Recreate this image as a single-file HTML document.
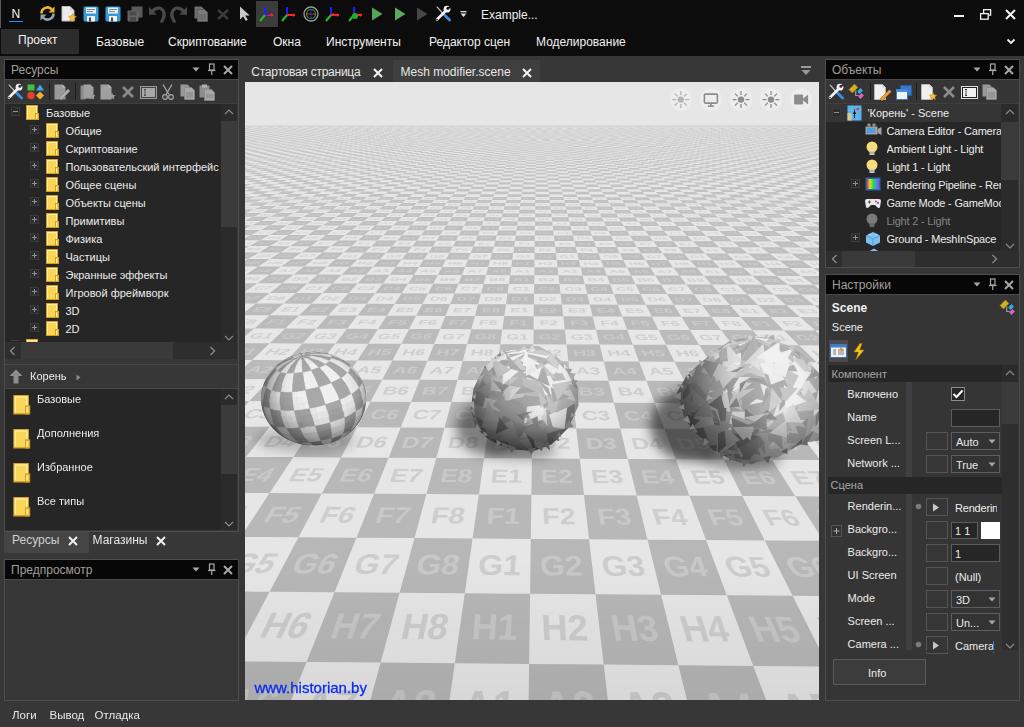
<!DOCTYPE html>
<html><head><meta charset="utf-8">
<style>
*{margin:0;padding:0;box-sizing:border-box}
html,body{width:1024px;height:727px;overflow:hidden;background:#373737;font-family:"Liberation Sans",sans-serif;font-size:12px;color:#e6e6e6}
.a{position:absolute}
.t{position:absolute;white-space:nowrap;line-height:1}
svg{position:absolute;overflow:visible}
</style></head><body>
<div class="a" style="left:245px;top:82px;width:574px;height:618px;background:#e6e6e6;overflow:hidden">
<svg style="left:0;top:0" width="574" height="618" viewBox="0 0 574 618">
<defs><filter id="blur6" x="-50%" y="-50%" width="200%" height="200%"><feGaussianBlur stdDeviation="6"/></filter><filter id="blur3" x="-50%" y="-50%" width="200%" height="200%"><feGaussianBlur stdDeviation="3"/></filter><filter id="blur1" x="-20%" y="-20%" width="140%" height="140%"><feGaussianBlur stdDeviation="0.7"/></filter><linearGradient id="lightg" gradientUnits="userSpaceOnUse" x1="0" y1="45.3" x2="0" y2="618.0"><stop offset="0.0000" stop-color="#e2e2e2"/><stop offset="0.0711" stop-color="#e5e5e5"/><stop offset="0.1039" stop-color="#e6e6e6"/><stop offset="0.1571" stop-color="#e7e7e7"/><stop offset="0.2195" stop-color="#e7e7e7"/><stop offset="0.3091" stop-color="#e7e7e7"/><stop offset="0.4081" stop-color="#e7e7e7"/><stop offset="0.5250" stop-color="#e7e7e7"/><stop offset="0.6410" stop-color="#e6e6e6"/><stop offset="0.8136" stop-color="#e6e6e6"/></linearGradient><linearGradient id="farg" gradientUnits="userSpaceOnUse" x1="0" y1="43.3" x2="0" y2="45.3"><stop offset="-0.3530" stop-color="#d7d7d7"/><stop offset="0.2992" stop-color="#d7d7d7"/><stop offset="1.0000" stop-color="#d7d7d7"/></linearGradient><radialGradient id="sphrim" cx="0.55" cy="0.4" r="0.62"><stop offset="0.6" stop-color="#000" stop-opacity="0"/><stop offset="1" stop-color="#000" stop-opacity=".28"/></radialGradient><linearGradient id="blobshade" x1="0.9" y1="0.15" x2="0.1" y2="0.9"><stop offset="0.45" stop-color="#000" stop-opacity="0"/><stop offset="1" stop-color="#000" stop-opacity=".32"/></linearGradient><linearGradient id="midv" x1="0" y1="0" x2="0" y2="1"><stop offset="0" stop-color="#fff" stop-opacity=".22"/><stop offset="0.45" stop-color="#fff" stop-opacity="0"/><stop offset="0.75" stop-color="#000" stop-opacity="0"/><stop offset="1" stop-color="#000" stop-opacity=".35"/></linearGradient><linearGradient id="rightv" x1="0" y1="0" x2="1" y2="0"><stop offset="0" stop-color="#000" stop-opacity=".3"/><stop offset="0.4" stop-color="#000" stop-opacity="0"/><stop offset="0.6" stop-color="#fff" stop-opacity="0.12"/><stop offset="1" stop-color="#fff" stop-opacity=".12"/></linearGradient><radialGradient id="blobrim" cx="0.55" cy="0.35" r="0.7"><stop offset="0.45" stop-color="#000" stop-opacity="0"/><stop offset="1" stop-color="#000" stop-opacity=".38"/></radialGradient><linearGradient id="vign" x1="0" y1="0" x2="0" y2="1"><stop offset="0" stop-color="#000" stop-opacity="0"/><stop offset="1" stop-color="#000" stop-opacity=".06"/></linearGradient></defs>
<rect x="0" y="43.30" width="574" height="2.28" fill="url(#farg)"/>
<rect x="0" y="45.28" width="574" height="572.72" fill="url(#lightg)"/>
<path d="M-61.1,671.2L24.6,672.1L61.5,580.0L-12.3,579.3ZM110.5,672.9L196.6,673.8L209.8,581.3L135.6,580.6ZM282.9,674.7L369.5,675.6L358.7,582.6L284.1,581.9ZM456.3,676.4L543.3,677.3L508.3,583.9L433.4,583.2Z" fill="#b6b6b6"/>
<path d="M-86.0,578.7L-12.3,579.3L24.6,509.8L-40.2,509.3ZM61.5,580.0L135.6,580.6L154.6,510.8L89.5,510.3ZM209.8,581.3L284.1,581.9L285.1,511.8L219.8,511.3ZM358.7,582.6L433.4,583.2L416.1,512.8L350.5,512.3ZM508.3,583.9L583.3,584.5L547.6,513.8L481.8,513.3ZM24.6,509.8L89.5,510.3L111.5,455.7L53.5,455.3ZM154.6,510.8L219.8,511.3L227.6,456.5L169.5,456.1ZM285.1,511.8L350.5,512.3L344.1,457.3L285.8,456.9ZM416.1,512.8L481.8,513.3L461.1,458.1L402.5,457.7ZM547.6,513.8L613.6,514.3L578.5,458.9L519.7,458.5Z" fill="#b7b7b7"/>
<path d="M-4.3,454.9L53.5,455.3L76.8,411.4L24.6,411.1ZM111.5,455.7L169.5,456.1L181.4,412.1L129.1,411.8ZM227.6,456.5L285.8,456.9L286.4,412.7L233.9,412.4ZM344.1,457.3L402.5,457.7L391.7,413.4L339.0,413.0ZM461.1,458.1L519.7,458.5L497.3,414.0L444.4,413.7ZM578.5,458.9L637.3,459.3L603.3,414.7L550.2,414.3ZM-27.5,410.8L24.6,411.1L48.4,375.1L0.9,374.9ZM76.8,411.4L129.1,411.8L143.6,375.7L96.0,375.4ZM181.4,412.1L233.9,412.4L239.0,376.2L191.3,375.9ZM286.4,412.7L339.0,413.0L334.8,376.7L286.9,376.5ZM391.7,413.4L444.4,413.7L430.8,377.3L382.7,377.0ZM497.3,414.0L550.2,414.3L527.1,377.8L478.9,377.5ZM603.3,414.7L656.4,415.0L623.7,378.3L575.3,378.1ZM-46.5,374.6L0.9,374.9L24.7,344.8L-18.9,344.6ZM48.4,375.1L96.0,375.4L112.0,345.3L68.3,345.0ZM143.6,375.7L191.3,375.9L199.5,345.7L155.7,345.5ZM239.0,376.2L286.9,376.5L287.3,346.2L243.3,345.9ZM334.8,376.7L382.7,377.0L375.3,346.6L331.2,346.4ZM430.8,377.3L478.9,377.5L463.5,347.1L419.4,346.8ZM527.1,377.8L575.3,378.1L552.0,347.5L507.7,347.3Z" fill="#b8b8b8"/>
<path d="M-62.4,344.4L-18.9,344.6L4.5,319.1L-35.7,318.9ZM24.7,344.8L68.3,345.0L85.2,319.5L44.8,319.3ZM112.0,345.3L155.7,345.5L166.0,319.9L125.5,319.7ZM199.5,345.7L243.3,345.9L247.0,320.2L206.5,320.1ZM287.3,346.2L331.2,346.4L328.2,320.6L287.6,320.4ZM375.3,346.6L419.4,346.8L409.7,321.0L368.9,320.8ZM463.5,347.1L507.7,347.3L491.3,321.4L450.5,321.2ZM552.0,347.5L596.3,347.7L573.2,321.8L532.2,321.6ZM4.5,319.1L44.8,319.3L62.1,297.4L24.7,297.2ZM85.2,319.5L125.5,319.7L137.2,297.7L99.7,297.5ZM166.0,319.9L206.5,320.1L212.5,298.0L174.8,297.8ZM247.0,320.2L287.6,320.4L287.9,298.3L250.2,298.2ZM328.2,320.6L368.9,320.8L363.5,298.7L325.7,298.5ZM409.7,321.0L450.5,321.2L439.3,299.0L401.4,298.8ZM491.3,321.4L532.2,321.6L515.2,299.3L477.2,299.2ZM573.2,321.8L614.2,322.0L591.4,299.7L553.3,299.5Z" fill="#b9b9b9"/>
<path d="M-12.8,297.0L24.7,297.2L42.2,278.2L7.2,278.0ZM62.1,297.4L99.7,297.5L112.3,278.4L77.2,278.3ZM137.2,297.7L174.8,297.8L182.5,278.7L147.4,278.6ZM212.5,298.0L250.2,298.2L252.9,279.0L217.7,278.9ZM287.9,298.3L325.7,298.5L323.4,279.3L288.1,279.2ZM363.5,298.7L401.4,298.8L394.1,279.6L358.8,279.4ZM439.3,299.0L477.2,299.2L465.0,279.9L429.5,279.7ZM515.2,299.3L553.3,299.5L536.0,280.2L500.5,280.0ZM591.4,299.7L629.5,299.8L607.2,280.5L571.6,280.3ZM-27.8,277.9L7.2,278.0L24.7,261.3L-8.1,261.2ZM42.2,278.2L77.2,278.3L90.4,261.6L57.5,261.5ZM112.3,278.4L147.4,278.6L156.3,261.8L123.3,261.7ZM182.5,278.7L217.7,278.9L222.2,262.1L189.2,262.0ZM252.9,279.0L288.1,279.2L288.4,262.3L255.3,262.2ZM323.4,279.3L358.8,279.4L354.6,262.6L321.5,262.5ZM394.1,279.6L429.5,279.7L421.0,262.8L387.8,262.7ZM465.0,279.9L500.5,280.0L487.5,263.1L454.3,263.0ZM536.0,280.2L571.6,280.3L554.2,263.3L520.9,263.2Z" fill="#bababa"/>
<path d="M-40.9,261.1L-8.1,261.2L9.2,246.5L-21.7,246.4ZM24.7,261.3L57.5,261.5L71.1,246.7L40.2,246.6ZM90.4,261.6L123.3,261.7L133.1,246.9L102.1,246.8ZM156.3,261.8L189.2,262.0L195.2,247.1L164.1,247.0ZM222.2,262.1L255.3,262.2L257.4,247.4L226.3,247.2ZM288.4,262.3L321.5,262.5L319.8,247.6L288.6,247.5ZM354.6,262.6L387.8,262.7L382.2,247.8L351.0,247.7ZM421.0,262.8L454.3,263.0L444.8,248.0L413.5,247.9ZM487.5,263.1L520.9,263.2L507.5,248.3L476.1,248.1ZM554.2,263.3L587.6,263.5L570.3,248.5L538.9,248.4ZM9.2,246.5L40.2,246.6L53.9,233.4L24.7,233.3ZM71.1,246.7L102.1,246.8L112.5,233.6L83.2,233.5ZM133.1,246.9L164.1,247.0L171.1,233.8L141.8,233.7ZM195.2,247.1L226.3,247.2L229.9,234.0L200.5,233.9ZM257.4,247.4L288.6,247.5L288.7,234.2L259.3,234.1ZM319.8,247.6L351.0,247.7L347.7,234.4L318.2,234.3ZM382.2,247.8L413.5,247.9L406.8,234.6L377.2,234.5ZM444.8,248.0L476.1,248.1L466.0,234.8L436.4,234.7ZM507.5,248.3L538.9,248.4L525.3,235.0L495.6,234.9ZM570.3,248.5L601.8,248.6L584.7,235.2L555.0,235.1ZM-4.5,233.2L24.7,233.3L38.5,221.6L10.9,221.5ZM53.9,233.4L83.2,233.5L94.0,221.8L66.3,221.7ZM112.5,233.6L141.8,233.7L149.6,221.9L121.8,221.8ZM171.1,233.8L200.5,233.9L205.2,222.1L177.4,222.0ZM229.9,234.0L259.3,234.1L261.0,222.3L233.1,222.2ZM288.7,234.2L318.2,234.3L316.8,222.5L288.9,222.4ZM347.7,234.4L377.2,234.5L372.8,222.7L344.8,222.6ZM406.8,234.6L436.4,234.7L428.8,222.8L400.8,222.7ZM466.0,234.8L495.6,234.9L485.0,223.0L456.9,222.9ZM525.3,235.0L555.0,235.1L541.2,223.2L513.1,223.1ZM584.7,235.2L614.4,235.3L597.5,223.4L569.3,223.3Z" fill="#bbbbbb"/>
<path d="M-16.8,221.4L10.9,221.5L24.7,210.9L-1.6,210.8ZM38.5,221.6L66.3,221.7L77.4,211.1L51.0,211.0ZM94.0,221.8L121.8,221.8L130.2,211.2L103.8,211.1ZM149.6,221.9L177.4,222.0L183.0,211.4L156.6,211.3ZM205.2,222.1L233.1,222.2L236.0,211.5L209.5,211.5ZM261.0,222.3L288.9,222.4L289.0,211.7L262.5,211.6ZM316.8,222.5L344.8,222.6L342.2,211.9L315.6,211.8ZM372.8,222.7L400.8,222.7L395.4,212.0L368.8,211.9ZM428.8,222.8L456.9,222.9L448.7,212.2L422.0,212.1ZM485.0,223.0L513.1,223.1L502.1,212.3L475.4,212.3ZM541.2,223.2L569.3,223.3L555.6,212.5L528.8,212.4ZM-27.9,210.7L-1.6,210.8L12.2,201.2L-12.9,201.2ZM24.7,210.9L51.0,211.0L62.4,201.4L37.2,201.3ZM77.4,211.1L103.8,211.1L112.6,201.5L87.5,201.4ZM130.2,211.2L156.6,211.3L163.0,201.7L137.8,201.6ZM183.0,211.4L209.5,211.5L213.4,201.8L188.2,201.7ZM236.0,211.5L262.5,211.6L263.9,202.0L238.6,201.9ZM289.0,211.7L315.6,211.8L314.5,202.1L289.2,202.0ZM342.2,211.9L368.8,211.9L365.1,202.2L339.8,202.2ZM395.4,212.0L422.0,212.1L415.9,202.4L390.5,202.3ZM448.7,212.2L475.4,212.3L466.7,202.5L441.3,202.5ZM502.1,212.3L528.8,212.4L517.6,202.7L492.1,202.6ZM555.6,212.5L582.3,212.6L568.6,202.8L543.1,202.8Z" fill="#bcbcbc"/>
<path d="M-37.9,201.1L-12.9,201.2L0.8,192.4L-23.2,192.4ZM12.2,201.2L37.2,201.3L48.7,192.6L24.7,192.5ZM62.4,201.4L87.5,201.4L96.6,192.7L72.7,192.6ZM112.6,201.5L137.8,201.6L144.7,192.8L120.7,192.8ZM163.0,201.7L188.2,201.7L192.8,193.0L168.8,192.9ZM213.4,201.8L238.6,201.9L241.0,193.1L216.9,193.0ZM263.9,202.0L289.2,202.0L289.3,193.2L265.1,193.2ZM314.5,202.1L339.8,202.2L337.6,193.4L313.4,193.3ZM365.1,202.2L390.5,202.3L386.0,193.5L361.8,193.4ZM415.9,202.4L441.3,202.5L434.5,193.6L410.3,193.6ZM466.7,202.5L492.1,202.6L483.1,193.8L458.8,193.7ZM517.6,202.7L543.1,202.8L531.7,193.9L507.4,193.8ZM568.6,202.8L594.1,202.9L580.4,194.0L556.0,194.0ZM0.8,192.4L24.7,192.5L36.2,184.5L13.2,184.5ZM48.7,192.6L72.7,192.6L82.1,184.6L59.1,184.6ZM96.6,192.7L120.7,192.8L128.0,184.8L105.0,184.7ZM144.7,192.8L168.8,192.9L174.0,184.9L151.0,184.8ZM192.8,193.0L216.9,193.0L220.1,185.0L197.1,184.9ZM241.0,193.1L265.1,193.2L266.3,185.1L243.2,185.1ZM289.3,193.2L313.4,193.3L312.5,185.2L289.4,185.2ZM337.6,193.4L361.8,193.4L358.8,185.4L335.6,185.3ZM386.0,193.5L410.3,193.6L405.1,185.5L382.0,185.4ZM434.5,193.6L458.8,193.7L451.6,185.6L428.3,185.6ZM483.1,193.8L507.4,193.8L498.1,185.7L474.8,185.7ZM531.7,193.9L556.0,194.0L544.6,185.9L521.3,185.8ZM580.4,194.0L604.8,194.1L591.2,186.0L567.9,185.9ZM-9.7,184.4L13.2,184.5L24.7,177.1L2.7,177.1ZM36.2,184.5L59.1,184.6L68.7,177.3L46.7,177.2ZM82.1,184.6L105.0,184.7L112.7,177.4L90.7,177.3ZM128.0,184.8L151.0,184.8L156.8,177.5L134.8,177.4ZM174.0,184.9L197.1,184.9L201.0,177.6L178.9,177.5ZM220.1,185.0L243.2,185.1L245.2,177.7L223.1,177.6ZM266.3,185.1L289.4,185.2L289.5,177.8L267.3,177.8ZM312.5,185.2L335.6,185.3L333.8,177.9L311.7,177.9ZM358.8,185.4L382.0,185.4L378.2,178.0L356.0,178.0ZM405.1,185.5L428.3,185.6L422.7,178.1L400.5,178.1ZM451.6,185.6L474.8,185.7L467.2,178.3L444.9,178.2ZM498.1,185.7L521.3,185.8L511.8,178.4L489.5,178.3ZM544.6,185.9L567.9,185.9L556.4,178.5L534.1,178.4Z" fill="#bdbdbd"/>
<path d="M-19.2,177.0L2.7,177.1L14.2,170.4L-6.9,170.3ZM24.7,177.1L46.7,177.2L56.4,170.5L35.3,170.4ZM68.7,177.3L90.7,177.3L98.7,170.6L77.5,170.5ZM112.7,177.4L134.8,177.4L141.0,170.7L119.8,170.6ZM156.8,177.5L178.9,177.5L183.4,170.8L162.2,170.7ZM201.0,177.6L223.1,177.6L225.8,170.9L204.6,170.8ZM245.2,177.7L267.3,177.8L268.3,171.0L247.1,170.9ZM289.5,177.8L311.7,177.9L310.9,171.1L289.6,171.0ZM333.8,177.9L356.0,178.0L353.5,171.2L332.2,171.1ZM378.2,178.0L400.5,178.1L396.1,171.3L374.8,171.2ZM422.7,178.1L444.9,178.2L438.9,171.4L417.5,171.3ZM467.2,178.3L489.5,178.3L481.6,171.5L460.2,171.4ZM511.8,178.4L534.1,178.4L524.5,171.6L503.0,171.5ZM556.4,178.5L578.8,178.5L567.4,171.7L545.9,171.6ZM-28.0,170.3L-6.9,170.3L4.4,164.1L-15.9,164.0ZM14.2,170.4L35.3,170.4L45.0,164.2L24.7,164.1ZM56.4,170.5L77.5,170.5L85.7,164.3L65.3,164.2ZM98.7,170.6L119.8,170.6L126.4,164.4L106.0,164.3ZM141.0,170.7L162.2,170.7L167.1,164.5L146.7,164.4ZM183.4,170.8L204.6,170.8L207.9,164.6L187.5,164.5ZM225.8,170.9L247.1,170.9L248.8,164.6L228.3,164.6ZM268.3,171.0L289.6,171.0L289.7,164.7L269.2,164.7ZM310.9,171.1L332.2,171.1L330.6,164.8L310.1,164.8ZM353.5,171.2L374.8,171.2L371.6,164.9L351.1,164.9ZM396.1,171.3L417.5,171.3L412.7,165.0L392.1,165.0ZM438.9,171.4L460.2,171.4L453.8,165.1L433.2,165.1ZM481.6,171.5L503.0,171.5L494.9,165.2L474.4,165.2ZM524.5,171.6L545.9,171.6L536.2,165.3L515.6,165.3ZM567.4,171.7L588.8,171.7L577.4,165.4L556.8,165.4ZM4.4,164.1L24.7,164.1L34.5,158.4L14.9,158.3ZM45.0,164.2L65.3,164.2L73.6,158.5L54.1,158.4ZM85.7,164.3L106.0,164.3L112.8,158.5L93.2,158.5ZM126.4,164.4L146.7,164.4L152.0,158.6L132.4,158.6ZM167.1,164.5L187.5,164.5L191.3,158.7L171.7,158.7ZM207.9,164.6L228.3,164.6L230.7,158.8L211.0,158.8ZM248.8,164.6L269.2,164.7L270.0,158.9L250.3,158.8ZM289.7,164.7L310.1,164.8L309.5,159.0L289.7,158.9ZM330.6,164.8L351.1,164.9L348.9,159.1L329.2,159.0ZM371.6,164.9L392.1,165.0L388.4,159.2L368.7,159.1ZM412.7,165.0L433.2,165.1L428.0,159.2L408.2,159.2ZM453.8,165.1L474.4,165.2L467.6,159.3L447.8,159.3ZM494.9,165.2L515.6,165.3L507.3,159.4L487.5,159.4ZM536.2,165.3L556.8,165.4L547.0,159.5L527.1,159.5ZM577.4,165.4L598.1,165.5L586.8,159.6L566.9,159.5Z" fill="#bebebe"/>
<path d="M-4.6,158.3L14.9,158.3L24.7,153.0L5.9,152.9ZM34.5,158.4L54.1,158.4L62.5,153.0L43.6,153.0ZM73.6,158.5L93.2,158.5L100.2,153.1L81.3,153.1ZM112.8,158.5L132.4,158.6L138.1,153.2L119.1,153.2ZM152.0,158.6L171.7,158.7L175.9,153.3L157.0,153.2ZM191.3,158.7L211.0,158.8L213.8,153.4L194.9,153.3ZM230.7,158.8L250.3,158.8L251.8,153.5L232.8,153.4ZM270.0,158.9L289.7,158.9L289.8,153.5L270.8,153.5ZM309.5,159.0L329.2,159.0L327.9,153.6L308.8,153.6ZM348.9,159.1L368.7,159.1L365.9,153.7L346.9,153.7ZM388.4,159.2L408.2,159.2L404.1,153.8L385.0,153.7ZM428.0,159.2L447.8,159.3L442.3,153.9L423.2,153.8ZM467.6,159.3L487.5,159.4L480.5,153.9L461.4,153.9ZM507.3,159.4L527.1,159.5L518.8,154.0L499.6,154.0ZM547.0,159.5L566.9,159.5L557.1,154.1L537.9,154.1ZM-13.0,152.9L5.9,152.9L15.6,147.9L-2.6,147.9ZM24.7,153.0L43.6,153.0L52.0,148.0L33.8,148.0ZM62.5,153.0L81.3,153.1L88.5,148.1L70.3,148.0ZM100.2,153.1L119.1,153.2L125.0,148.2L106.8,148.1ZM138.1,153.2L157.0,153.2L161.6,148.2L143.3,148.2ZM175.9,153.3L194.9,153.3L198.2,148.3L179.9,148.3ZM213.8,153.4L232.8,153.4L234.8,148.4L216.5,148.4ZM251.8,153.5L270.8,153.5L271.5,148.5L253.2,148.4ZM289.8,153.5L308.8,153.6L308.2,148.5L289.9,148.5ZM327.9,153.6L346.9,153.7L345.0,148.6L326.6,148.6ZM365.9,153.7L385.0,153.7L381.8,148.7L363.4,148.7ZM404.1,153.8L423.2,153.8L418.7,148.8L400.2,148.7ZM442.3,153.9L461.4,153.9L455.6,148.8L437.1,148.8ZM480.5,153.9L499.6,154.0L492.5,148.9L474.0,148.9ZM518.8,154.0L537.9,154.1L529.5,149.0L511.0,149.0ZM557.1,154.1L576.3,154.1L566.5,149.1L548.0,149.0ZM-20.8,147.9L-2.6,147.9L7.1,143.2L-10.5,143.2ZM15.6,147.9L33.8,148.0L42.3,143.3L24.7,143.3ZM52.0,148.0L70.3,148.0L77.6,143.4L60.0,143.3ZM88.5,148.1L106.8,148.1L112.9,143.5L95.2,143.4ZM125.0,148.2L143.3,148.2L148.2,143.5L130.5,143.5ZM161.6,148.2L179.9,148.3L183.6,143.6L165.9,143.6ZM198.2,148.3L216.5,148.4L219.0,143.7L201.3,143.6ZM234.8,148.4L253.2,148.4L254.4,143.7L236.7,143.7ZM271.5,148.5L289.9,148.5L289.9,143.8L272.2,143.8ZM308.2,148.5L326.6,148.6L325.5,143.9L307.7,143.8ZM345.0,148.6L363.4,148.7L361.0,143.9L343.2,143.9ZM381.8,148.7L400.2,148.7L396.6,144.0L378.8,144.0ZM418.7,148.8L437.1,148.8L432.3,144.1L414.5,144.1ZM455.6,148.8L474.0,148.9L468.0,144.2L450.1,144.1ZM492.5,148.9L511.0,149.0L503.7,144.2L485.8,144.2ZM529.5,149.0L548.0,149.0L539.4,144.3L521.6,144.3ZM566.5,149.1L585.0,149.1L575.2,144.4L557.3,144.3Z" fill="#bfbfbf"/>
<path d="M-28.1,143.2L-10.5,143.2L-0.8,138.9L-17.9,138.8ZM7.1,143.2L24.7,143.3L33.2,138.9L16.2,138.9ZM42.3,143.3L60.0,143.3L67.4,139.0L50.3,138.9ZM77.6,143.4L95.2,143.4L101.5,139.0L84.4,139.0ZM112.9,143.5L130.5,143.5L135.7,139.1L118.6,139.1ZM148.2,143.5L165.9,143.6L169.9,139.2L152.8,139.1ZM183.6,143.6L201.3,143.6L204.2,139.2L187.1,139.2ZM219.0,143.7L236.7,143.7L238.5,139.3L221.3,139.3ZM254.4,143.7L272.2,143.8L272.8,139.4L255.6,139.3ZM289.9,143.8L307.7,143.8L307.2,139.4L290.0,139.4ZM325.5,143.9L343.2,143.9L341.6,139.5L324.4,139.5ZM361.0,143.9L378.8,144.0L376.0,139.6L358.8,139.5ZM396.6,144.0L414.5,144.1L410.5,139.6L393.3,139.6ZM432.3,144.1L450.1,144.1L445.0,139.7L427.8,139.7ZM468.0,144.2L485.8,144.2L479.6,139.8L462.3,139.7ZM503.7,144.2L521.6,144.3L514.2,139.8L496.9,139.8ZM539.4,144.3L557.3,144.3L548.8,139.9L531.5,139.9ZM575.2,144.4L593.2,144.4L583.5,140.0L566.1,139.9ZM-0.8,138.9L16.2,138.9L24.7,134.8L8.2,134.8ZM33.2,138.9L50.3,138.9L57.8,134.9L41.2,134.8ZM67.4,139.0L84.4,139.0L90.9,134.9L74.3,134.9ZM101.5,139.0L118.6,139.1L124.0,135.0L107.4,134.9ZM135.7,139.1L152.8,139.1L157.1,135.0L140.5,135.0ZM169.9,139.2L187.1,139.2L190.3,135.1L173.7,135.1ZM204.2,139.2L221.3,139.3L223.5,135.2L206.9,135.1ZM238.5,139.3L255.6,139.3L256.8,135.2L240.1,135.2ZM272.8,139.4L290.0,139.4L290.1,135.3L273.4,135.3ZM307.2,139.4L324.4,139.5L323.4,135.3L306.7,135.3ZM341.6,139.5L358.8,139.5L356.7,135.4L340.0,135.4ZM376.0,139.6L393.3,139.6L390.1,135.5L373.4,135.4ZM410.5,139.6L427.8,139.7L423.5,135.5L406.8,135.5ZM445.0,139.7L462.3,139.7L457.0,135.6L440.3,135.6ZM479.6,139.8L496.9,139.8L490.5,135.7L473.7,135.6ZM514.2,139.8L531.5,139.9L524.0,135.7L507.2,135.7ZM548.8,139.9L566.1,139.9L557.6,135.8L540.8,135.7ZM583.5,140.0L600.8,140.0L591.2,135.8L574.4,135.8ZM-8.3,134.7L8.2,134.8L16.7,130.9L0.7,130.9ZM24.7,134.8L41.2,134.8L48.8,131.0L32.7,130.9ZM57.8,134.9L74.3,134.9L80.8,131.0L64.8,131.0ZM90.9,134.9L107.4,134.9L112.9,131.1L96.9,131.1ZM124.0,135.0L140.5,135.0L145.1,131.2L129.0,131.1ZM157.1,135.0L173.7,135.1L177.3,131.2L161.2,131.2ZM190.3,135.1L206.9,135.1L209.5,131.3L193.3,131.2ZM223.5,135.2L240.1,135.2L241.7,131.3L225.6,131.3ZM256.8,135.2L273.4,135.3L274.0,131.4L257.8,131.4ZM290.1,135.3L306.7,135.3L306.3,131.4L290.1,131.4ZM323.4,135.3L340.0,135.4L338.6,131.5L322.4,131.5ZM356.7,135.4L373.4,135.4L371.0,131.6L354.8,131.5ZM390.1,135.5L406.8,135.5L403.3,131.6L387.1,131.6ZM423.5,135.5L440.3,135.6L435.8,131.7L419.6,131.6ZM457.0,135.6L473.7,135.6L468.2,131.7L452.0,131.7ZM490.5,135.7L507.2,135.7L500.7,131.8L484.5,131.8ZM524.0,135.7L540.8,135.7L533.3,131.8L517.0,131.8ZM557.6,135.8L574.4,135.8L565.8,131.9L549.5,131.9Z" fill="#c0c0c0"/>
<path d="M-15.3,130.9L0.7,130.9L9.2,127.3L-6.4,127.2ZM16.7,130.9L32.7,130.9L40.3,127.3L24.7,127.3ZM48.8,131.0L64.8,131.0L71.4,127.4L55.8,127.4ZM80.8,131.0L96.9,131.1L102.6,127.4L87.0,127.4ZM112.9,131.1L129.0,131.1L133.8,127.5L118.2,127.5ZM145.1,131.2L161.2,131.2L165.0,127.5L149.4,127.5ZM177.3,131.2L193.3,131.2L196.2,127.6L180.6,127.6ZM209.5,131.3L225.6,131.3L227.5,127.7L211.9,127.6ZM241.7,131.3L257.8,131.4L258.8,127.7L243.2,127.7ZM274.0,131.4L290.1,131.4L290.2,127.8L274.5,127.7ZM306.3,131.4L322.4,131.5L321.5,127.8L305.8,127.8ZM338.6,131.5L354.8,131.5L352.9,127.9L337.2,127.8ZM371.0,131.6L387.1,131.6L384.4,127.9L368.6,127.9ZM403.3,131.6L419.6,131.6L415.8,128.0L400.1,128.0ZM435.8,131.7L452.0,131.7L447.3,128.0L431.6,128.0ZM468.2,131.7L484.5,131.8L478.8,128.1L463.1,128.1ZM500.7,131.8L517.0,131.8L510.4,128.1L494.6,128.1ZM533.3,131.8L549.5,131.9L542.0,128.2L526.2,128.2ZM565.8,131.9L582.1,131.9L573.6,128.3L557.8,128.2ZM-21.9,127.2L-6.4,127.2L2.1,123.8L-13.0,123.8ZM9.2,127.3L24.7,127.3L32.3,123.9L17.2,123.9ZM40.3,127.3L55.8,127.4L62.5,123.9L47.4,123.9ZM71.4,127.4L87.0,127.4L92.8,124.0L77.6,124.0ZM102.6,127.4L118.2,127.5L123.1,124.0L107.9,124.0ZM133.8,127.5L149.4,127.5L153.4,124.1L138.2,124.1ZM165.0,127.5L180.6,127.6L183.7,124.1L168.6,124.1ZM196.2,127.6L211.9,127.6L214.1,124.2L198.9,124.2ZM227.5,127.7L243.2,127.7L244.5,124.2L229.3,124.2ZM258.8,127.7L274.5,127.7L275.0,124.3L259.7,124.3ZM290.2,127.8L305.8,127.8L305.4,124.3L290.2,124.3ZM321.5,127.8L337.2,127.8L335.9,124.4L320.7,124.4ZM352.9,127.9L368.6,127.9L366.4,124.5L351.2,124.4ZM384.4,127.9L400.1,128.0L397.0,124.5L381.7,124.5ZM415.8,128.0L431.6,128.0L427.6,124.6L412.3,124.5ZM447.3,128.0L463.1,128.1L458.2,124.6L442.9,124.6ZM478.8,128.1L494.6,128.1L488.8,124.7L473.5,124.6ZM510.4,128.1L526.2,128.2L519.5,124.7L504.1,124.7ZM542.0,128.2L557.8,128.2L550.2,124.8L534.8,124.7ZM573.6,128.3L589.4,128.3L580.9,124.8L565.5,124.8ZM2.1,123.8L17.2,123.9L24.7,120.6L10.0,120.6ZM32.3,123.9L47.4,123.9L54.1,120.7L39.4,120.7ZM62.5,123.9L77.6,124.0L83.5,120.7L68.8,120.7ZM92.8,124.0L107.9,124.0L113.0,120.8L98.3,120.8ZM123.1,124.0L138.2,124.1L142.5,120.8L127.7,120.8ZM153.4,124.1L168.6,124.1L172.0,120.9L157.2,120.9ZM183.7,124.1L198.9,124.2L201.5,120.9L186.7,120.9ZM214.1,124.2L229.3,124.2L231.0,121.0L216.3,121.0ZM244.5,124.2L259.7,124.3L260.6,121.0L245.8,121.0ZM275.0,124.3L290.2,124.3L290.2,121.1L275.4,121.0ZM305.4,124.3L320.7,124.4L319.9,121.1L305.1,121.1ZM335.9,124.4L351.2,124.4L349.5,121.2L334.7,121.1ZM366.4,124.5L381.7,124.5L379.2,121.2L364.4,121.2ZM397.0,124.5L412.3,124.5L408.9,121.3L394.1,121.2ZM427.6,124.6L442.9,124.6L438.7,121.3L423.8,121.3ZM458.2,124.6L473.5,124.6L468.5,121.4L453.6,121.3ZM488.8,124.7L504.1,124.7L498.3,121.4L483.4,121.4ZM519.5,124.7L534.8,124.7L528.1,121.5L513.2,121.4ZM550.2,124.8L565.5,124.8L557.9,121.5L543.0,121.5ZM580.9,124.8L596.3,124.8L587.8,121.6L572.9,121.5Z" fill="#c1c1c1"/>
<path d="M-4.6,120.6L10.0,120.6L17.6,117.6L3.3,117.5ZM24.7,120.6L39.4,120.7L46.2,117.6L31.9,117.6ZM54.1,120.7L68.8,120.7L74.8,117.7L60.5,117.6ZM83.5,120.7L98.3,120.8L103.4,117.7L89.1,117.7ZM113.0,120.8L127.7,120.8L132.1,117.7L117.8,117.7ZM142.5,120.8L157.2,120.9L160.8,117.8L146.5,117.8ZM172.0,120.9L186.7,120.9L189.5,117.8L175.2,117.8ZM201.5,120.9L216.3,121.0L218.3,117.9L203.9,117.9ZM231.0,121.0L245.8,121.0L247.1,117.9L232.7,117.9ZM260.6,121.0L275.4,121.0L275.9,118.0L261.5,117.9ZM290.2,121.1L305.1,121.1L304.7,118.0L290.3,118.0ZM319.9,121.1L334.7,121.1L333.5,118.1L319.1,118.0ZM349.5,121.2L364.4,121.2L362.4,118.1L348.0,118.1ZM379.2,121.2L394.1,121.2L391.3,118.2L376.9,118.1ZM408.9,121.3L423.8,121.3L420.3,118.2L405.8,118.2ZM438.7,121.3L453.6,121.3L449.2,118.2L434.7,118.2ZM468.5,121.4L483.4,121.4L478.2,118.3L463.7,118.3ZM498.3,121.4L513.2,121.4L507.2,118.3L492.7,118.3ZM528.1,121.5L543.0,121.5L536.2,118.4L521.7,118.4ZM557.9,121.5L572.9,121.5L565.3,118.4L550.8,118.4ZM-11.0,117.5L3.3,117.5L10.8,114.6L-3.1,114.6ZM17.6,117.6L31.9,117.6L38.7,114.7L24.7,114.7ZM46.2,117.6L60.5,117.6L66.5,114.7L52.6,114.7ZM74.8,117.7L89.1,117.7L94.4,114.8L80.5,114.8ZM103.4,117.7L117.8,117.7L122.3,114.8L108.4,114.8ZM132.1,117.7L146.5,117.8L150.3,114.9L136.3,114.8ZM160.8,117.8L175.2,117.8L178.2,114.9L164.2,114.9ZM189.5,117.8L203.9,117.9L206.2,115.0L192.2,114.9ZM218.3,117.9L232.7,117.9L234.2,115.0L220.2,115.0ZM247.1,117.9L261.5,117.9L262.3,115.0L248.2,115.0ZM275.9,118.0L290.3,118.0L290.3,115.1L276.3,115.1ZM304.7,118.0L319.1,118.0L318.4,115.1L304.4,115.1ZM333.5,118.1L348.0,118.1L346.5,115.2L332.5,115.1ZM362.4,118.1L376.9,118.1L374.6,115.2L360.6,115.2ZM391.3,118.2L405.8,118.2L402.8,115.3L388.7,115.2ZM420.3,118.2L434.7,118.2L431.0,115.3L416.9,115.3ZM449.2,118.2L463.7,118.3L459.2,115.3L445.1,115.3ZM478.2,118.3L492.7,118.3L487.4,115.4L473.3,115.4ZM507.2,118.3L521.7,118.4L515.7,115.4L501.5,115.4ZM536.2,118.4L550.8,118.4L544.0,115.5L529.8,115.4ZM565.3,118.4L579.8,118.5L572.3,115.5L558.1,115.5ZM-17.0,114.6L-3.1,114.6L4.4,111.9L-9.2,111.9ZM10.8,114.6L24.7,114.7L31.5,111.9L17.9,111.9ZM38.7,114.7L52.6,114.7L58.7,112.0L45.1,111.9ZM66.5,114.7L80.5,114.8L85.8,112.0L72.2,112.0ZM94.4,114.8L108.4,114.8L113.0,112.0L99.4,112.0ZM122.3,114.8L136.3,114.8L140.2,112.1L126.6,112.1ZM150.3,114.9L164.2,114.9L167.5,112.1L153.9,112.1ZM178.2,114.9L192.2,114.9L194.8,112.2L181.1,112.2ZM206.2,115.0L220.2,115.0L222.0,112.2L208.4,112.2ZM234.2,115.0L248.2,115.0L249.3,112.3L235.7,112.2ZM262.3,115.0L276.3,115.1L276.7,112.3L263.0,112.3ZM290.3,115.1L304.4,115.1L304.0,112.3L290.4,112.3ZM318.4,115.1L332.5,115.1L331.4,112.4L317.7,112.4ZM346.5,115.2L360.6,115.2L358.8,112.4L345.1,112.4ZM374.6,115.2L388.7,115.2L386.2,112.5L372.5,112.4ZM402.8,115.3L416.9,115.3L413.7,112.5L400.0,112.5ZM431.0,115.3L445.1,115.3L441.2,112.5L427.4,112.5ZM459.2,115.3L473.3,115.4L468.7,112.6L454.9,112.6ZM487.4,115.4L501.5,115.4L496.2,112.6L482.4,112.6ZM515.7,115.4L529.8,115.4L523.7,112.7L509.9,112.6ZM544.0,115.5L558.1,115.5L551.3,112.7L537.5,112.7ZM572.3,115.5L586.4,115.5L578.9,112.7L565.1,112.7Z" fill="#c2c2c2"/>
<path d="M-22.7,111.8L-9.2,111.9L-1.7,109.3L-14.9,109.2ZM4.4,111.9L17.9,111.9L24.7,109.3L11.5,109.3ZM31.5,111.9L45.1,111.9L51.2,109.3L38.0,109.3ZM58.7,112.0L72.2,112.0L77.7,109.4L64.4,109.4ZM85.8,112.0L99.4,112.0L104.2,109.4L90.9,109.4ZM113.0,112.0L126.6,112.1L130.7,109.5L117.5,109.4ZM140.2,112.1L153.9,112.1L157.3,109.5L144.0,109.5ZM167.5,112.1L181.1,112.2L183.9,109.5L170.6,109.5ZM194.8,112.2L208.4,112.2L210.5,109.6L197.2,109.5ZM222.0,112.2L235.7,112.2L237.1,109.6L223.8,109.6ZM249.3,112.3L263.0,112.3L263.7,109.6L250.4,109.6ZM276.7,112.3L290.4,112.3L290.4,109.7L277.1,109.7ZM304.0,112.3L317.7,112.4L317.1,109.7L303.7,109.7ZM331.4,112.4L345.1,112.4L343.8,109.8L330.4,109.7ZM358.8,112.4L372.5,112.4L370.5,109.8L357.1,109.8ZM386.2,112.5L400.0,112.5L397.3,109.8L383.9,109.8ZM413.7,112.5L427.4,112.5L424.0,109.9L410.7,109.9ZM441.2,112.5L454.9,112.6L450.8,109.9L437.4,109.9ZM468.7,112.6L482.4,112.6L477.7,110.0L464.2,109.9ZM496.2,112.6L509.9,112.6L504.5,110.0L491.1,110.0ZM523.7,112.7L537.5,112.7L531.4,110.0L517.9,110.0ZM551.3,112.7L565.1,112.7L558.2,110.1L544.8,110.1ZM578.9,112.7L592.7,112.8L585.1,110.1L571.7,110.1ZM-1.7,109.3L11.5,109.3L18.3,106.8L5.4,106.8ZM24.7,109.3L38.0,109.3L44.1,106.8L31.2,106.8ZM51.2,109.3L64.4,109.4L69.9,106.9L57.0,106.9ZM77.7,109.4L90.9,109.4L95.8,106.9L82.9,106.9ZM104.2,109.4L117.5,109.4L121.7,106.9L108.7,106.9ZM130.7,109.5L144.0,109.5L147.6,107.0L134.6,107.0ZM157.3,109.5L170.6,109.5L173.5,107.0L160.5,107.0ZM183.9,109.5L197.2,109.5L199.5,107.1L186.5,107.0ZM210.5,109.6L223.8,109.6L225.4,107.1L212.4,107.1ZM237.1,109.6L250.4,109.6L251.4,107.1L238.4,107.1ZM263.7,109.6L277.1,109.7L277.4,107.2L264.4,107.1ZM290.4,109.7L303.7,109.7L303.4,107.2L290.4,107.2ZM317.1,109.7L330.4,109.7L329.5,107.2L316.5,107.2ZM343.8,109.8L357.1,109.8L355.6,107.3L342.5,107.3ZM370.5,109.8L383.9,109.8L381.6,107.3L368.6,107.3ZM397.3,109.8L410.7,109.9L407.8,107.4L394.7,107.3ZM424.0,109.9L437.4,109.9L433.9,107.4L420.8,107.4ZM450.8,109.9L464.2,109.9L460.0,107.4L447.0,107.4ZM477.7,110.0L491.1,110.0L486.2,107.5L473.1,107.4ZM504.5,110.0L517.9,110.0L512.4,107.5L499.3,107.5ZM531.4,110.0L544.8,110.1L538.6,107.5L525.5,107.5ZM558.2,110.1L571.7,110.1L564.9,107.6L551.7,107.6ZM-7.5,106.8L5.4,106.8L12.1,104.4L-0.5,104.4ZM18.3,106.8L31.2,106.8L37.3,104.5L24.7,104.4ZM44.1,106.8L57.0,106.9L62.6,104.5L49.9,104.5ZM69.9,106.9L82.9,106.9L87.8,104.5L75.2,104.5ZM95.8,106.9L108.7,106.9L113.1,104.6L100.4,104.5ZM121.7,106.9L134.6,107.0L138.3,104.6L125.7,104.6ZM147.6,107.0L160.5,107.0L163.6,104.6L151.0,104.6ZM173.5,107.0L186.5,107.0L189.0,104.7L176.3,104.6ZM199.5,107.1L212.4,107.1L214.3,104.7L201.6,104.7ZM225.4,107.1L238.4,107.1L239.7,104.7L227.0,104.7ZM251.4,107.1L264.4,107.1L265.1,104.8L252.4,104.7ZM277.4,107.2L290.4,107.2L290.5,104.8L277.8,104.8ZM303.4,107.2L316.5,107.2L315.9,104.8L303.2,104.8ZM329.5,107.2L342.5,107.3L341.3,104.9L328.6,104.9ZM355.6,107.3L368.6,107.3L366.8,104.9L354.0,104.9ZM381.6,107.3L394.7,107.3L392.3,104.9L379.5,104.9ZM407.8,107.4L420.8,107.4L417.8,105.0L405.0,105.0ZM433.9,107.4L447.0,107.4L443.3,105.0L430.5,105.0ZM460.0,107.4L473.1,107.4L468.8,105.0L456.0,105.0ZM486.2,107.5L499.3,107.5L494.4,105.1L481.6,105.1ZM512.4,107.5L525.5,107.5L520.0,105.1L507.2,105.1ZM538.6,107.5L551.7,107.6L545.6,105.2L532.8,105.1ZM564.9,107.6L578.0,107.6L571.2,105.2L558.4,105.2ZM-13.1,104.4L-0.5,104.4L6.3,102.1L-6.0,102.1ZM12.1,104.4L24.7,104.4L30.9,102.2L18.6,102.2ZM37.3,104.5L49.9,104.5L55.5,102.2L43.2,102.2ZM62.6,104.5L75.2,104.5L80.2,102.2L67.8,102.2ZM87.8,104.5L100.4,104.5L104.8,102.3L92.5,102.3ZM113.1,104.6L125.7,104.6L129.5,102.3L117.2,102.3ZM138.3,104.6L151.0,104.6L154.2,102.3L141.9,102.3ZM163.6,104.6L176.3,104.6L179.0,102.4L166.6,102.4ZM189.0,104.7L201.6,104.7L203.7,102.4L191.3,102.4ZM214.3,104.7L227.0,104.7L228.5,102.4L216.1,102.4ZM239.7,104.7L252.4,104.7L253.3,102.5L240.9,102.5ZM265.1,104.8L277.8,104.8L278.1,102.5L265.7,102.5ZM290.5,104.8L303.2,104.8L302.9,102.5L290.5,102.5ZM315.9,104.8L328.6,104.9L327.7,102.6L315.3,102.6ZM341.3,104.9L354.0,104.9L352.6,102.6L340.2,102.6ZM366.8,104.9L379.5,104.9L377.5,102.6L365.0,102.6ZM392.3,104.9L405.0,105.0L402.4,102.7L389.9,102.7ZM417.8,105.0L430.5,105.0L427.3,102.7L414.8,102.7ZM443.3,105.0L456.0,105.0L452.2,102.7L439.8,102.7ZM468.8,105.0L481.6,105.1L477.2,102.8L464.7,102.8ZM494.4,105.1L507.2,105.1L502.2,102.8L489.7,102.8ZM520.0,105.1L532.8,105.1L527.2,102.8L514.7,102.8ZM545.6,105.2L558.4,105.2L552.2,102.9L539.7,102.9ZM571.2,105.2L584.0,105.2L577.2,102.9L564.7,102.9Z" fill="#c3c3c3"/>
<path d="M-18.3,102.1L-6.0,102.1L0.7,100.0L-11.3,100.0ZM6.3,102.1L18.6,102.2L24.7,100.0L12.7,100.0ZM30.9,102.2L43.2,102.2L48.8,100.0L36.8,100.0ZM55.5,102.2L67.8,102.2L72.9,100.1L60.8,100.1ZM80.2,102.2L92.5,102.3L97.0,100.1L84.9,100.1ZM104.8,102.3L117.2,102.3L121.1,100.1L109.1,100.1ZM129.5,102.3L141.9,102.3L145.3,100.2L133.2,100.2ZM154.2,102.3L166.6,102.4L169.4,100.2L157.4,100.2ZM179.0,102.4L191.3,102.4L193.6,100.2L181.5,100.2ZM203.7,102.4L216.1,102.4L217.8,100.3L205.7,100.2ZM228.5,102.4L240.9,102.5L242.0,100.3L229.9,100.3ZM253.3,102.5L265.7,102.5L266.3,100.3L254.1,100.3ZM278.1,102.5L290.5,102.5L290.5,100.4L278.4,100.3ZM302.9,102.5L315.3,102.6L314.8,100.4L302.6,100.4ZM327.7,102.6L340.2,102.6L339.1,100.4L326.9,100.4ZM352.6,102.6L365.0,102.6L363.4,100.5L351.2,100.4ZM377.5,102.6L389.9,102.7L387.7,100.5L375.5,100.5ZM402.4,102.7L414.8,102.7L412.0,100.5L399.9,100.5ZM427.3,102.7L439.8,102.7L436.4,100.6L424.2,100.5ZM452.2,102.7L464.7,102.8L460.8,100.6L448.6,100.6ZM477.2,102.8L489.7,102.8L485.2,100.6L473.0,100.6ZM502.2,102.8L514.7,102.8L509.6,100.6L497.4,100.6ZM527.2,102.8L539.7,102.9L534.0,100.7L521.8,100.7ZM552.2,102.9L564.7,102.9L558.5,100.7L546.3,100.7ZM577.2,102.9L589.7,102.9L583.0,100.7L570.7,100.7ZM0.7,100.0L12.7,100.0L18.9,97.9L7.1,97.9ZM24.7,100.0L36.8,100.0L42.4,98.0L30.6,98.0ZM48.8,100.0L60.8,100.1L65.9,98.0L54.2,98.0ZM72.9,100.1L84.9,100.1L89.5,98.0L77.7,98.0ZM97.0,100.1L109.1,100.1L113.1,98.1L101.3,98.0ZM121.1,100.1L133.2,100.2L136.7,98.1L124.9,98.1ZM145.3,100.2L157.4,100.2L160.3,98.1L148.5,98.1ZM169.4,100.2L181.5,100.2L184.0,98.2L172.1,98.1ZM193.6,100.2L205.7,100.2L207.6,98.2L195.8,98.2ZM217.8,100.3L229.9,100.3L231.3,98.2L219.4,98.2ZM242.0,100.3L254.1,100.3L255.0,98.2L243.1,98.2ZM266.3,100.3L278.4,100.3L278.7,98.3L266.8,98.3ZM290.5,100.4L302.6,100.4L302.4,98.3L290.5,98.3ZM314.8,100.4L326.9,100.4L326.1,98.3L314.3,98.3ZM339.1,100.4L351.2,100.4L349.9,98.4L338.0,98.3ZM363.4,100.5L375.5,100.5L373.7,98.4L361.8,98.4ZM387.7,100.5L399.9,100.5L397.5,98.4L385.6,98.4ZM412.0,100.5L424.2,100.5L421.3,98.5L409.4,98.4ZM436.4,100.6L448.6,100.6L445.1,98.5L433.2,98.5ZM460.8,100.6L473.0,100.6L469.0,98.5L457.0,98.5ZM485.2,100.6L497.4,100.6L492.8,98.5L480.9,98.5ZM509.6,100.6L521.8,100.7L516.7,98.6L504.8,98.6ZM534.0,100.7L546.3,100.7L540.6,98.6L528.7,98.6ZM558.5,100.7L570.7,100.7L564.5,98.6L552.6,98.6ZM-4.7,97.9L7.1,97.9L13.2,96.0L1.7,95.9ZM18.9,97.9L30.6,98.0L36.2,96.0L24.7,96.0ZM42.4,98.0L54.2,98.0L59.3,96.0L47.8,96.0ZM65.9,98.0L77.7,98.0L82.3,96.0L70.8,96.0ZM89.5,98.0L101.3,98.0L105.4,96.1L93.9,96.1ZM113.1,98.1L124.9,98.1L128.5,96.1L117.0,96.1ZM136.7,98.1L148.5,98.1L151.6,96.1L140.0,96.1ZM160.3,98.1L172.1,98.1L174.7,96.2L163.2,96.1ZM184.0,98.2L195.8,98.2L197.9,96.2L186.3,96.2ZM207.6,98.2L219.4,98.2L221.0,96.2L209.4,96.2ZM231.3,98.2L243.1,98.2L244.2,96.2L232.6,96.2ZM255.0,98.2L266.8,98.3L267.4,96.3L255.8,96.3ZM278.7,98.3L290.5,98.3L290.6,96.3L279.0,96.3ZM302.4,98.3L314.3,98.3L313.8,96.3L302.2,96.3ZM326.1,98.3L338.0,98.3L337.0,96.4L325.4,96.3ZM349.9,98.4L361.8,98.4L360.3,96.4L348.6,96.4ZM373.7,98.4L385.6,98.4L383.5,96.4L371.9,96.4ZM397.5,98.4L409.4,98.4L406.8,96.4L395.2,96.4ZM421.3,98.5L433.2,98.5L430.1,96.5L418.5,96.5ZM445.1,98.5L457.0,98.5L453.5,96.5L441.8,96.5ZM469.0,98.5L480.9,98.5L476.8,96.5L465.1,96.5ZM492.8,98.5L504.8,98.6L500.1,96.6L488.5,96.6ZM516.7,98.6L528.7,98.6L523.5,96.6L511.8,96.6ZM540.6,98.6L552.6,98.6L546.9,96.6L535.2,96.6ZM564.5,98.6L576.5,98.7L570.3,96.7L558.6,96.6ZM-9.8,95.9L1.7,95.9L7.8,94.1L-3.4,94.0ZM13.2,96.0L24.7,96.0L30.4,94.1L19.1,94.1ZM36.2,96.0L47.8,96.0L52.9,94.1L41.6,94.1ZM59.3,96.0L70.8,96.0L75.5,94.1L64.2,94.1ZM82.3,96.0L93.9,96.1L98.1,94.2L86.8,94.2ZM105.4,96.1L117.0,96.1L120.6,94.2L109.3,94.2ZM128.5,96.1L140.0,96.1L143.3,94.2L131.9,94.2ZM151.6,96.1L163.2,96.1L165.9,94.3L154.6,94.2ZM174.7,96.2L186.3,96.2L188.5,94.3L177.2,94.3ZM197.9,96.2L209.4,96.2L211.2,94.3L199.8,94.3ZM221.0,96.2L232.6,96.2L233.8,94.3L222.5,94.3ZM244.2,96.2L255.8,96.3L256.5,94.4L245.2,94.3ZM267.4,96.3L279.0,96.3L279.2,94.4L267.9,94.4ZM290.6,96.3L302.2,96.3L302.0,94.4L290.6,94.4ZM313.8,96.3L325.4,96.3L324.7,94.4L313.3,94.4ZM337.0,96.4L348.6,96.4L347.4,94.5L336.1,94.5ZM360.3,96.4L371.9,96.4L370.2,94.5L358.8,94.5ZM383.5,96.4L395.2,96.4L393.0,94.5L381.6,94.5ZM406.8,96.4L418.5,96.5L415.8,94.6L404.4,94.5ZM430.1,96.5L441.8,96.5L438.6,94.6L427.2,94.6ZM453.5,96.5L465.1,96.5L461.4,94.6L450.0,94.6ZM476.8,96.5L488.5,96.6L484.3,94.6L472.9,94.6ZM500.1,96.6L511.8,96.6L507.1,94.7L495.7,94.7ZM523.5,96.6L535.2,96.6L530.0,94.7L518.6,94.7ZM546.9,96.6L558.6,96.6L552.9,94.7L541.5,94.7ZM570.3,96.7L582.0,96.7L575.8,94.8L564.4,94.7Z" fill="#c4c4c4"/>
<path d="M-14.7,94.0L-3.4,94.0L2.7,92.2L-8.3,92.2ZM7.8,94.1L19.1,94.1L24.7,92.3L13.7,92.3ZM30.4,94.1L41.6,94.1L46.8,92.3L35.8,92.3ZM52.9,94.1L64.2,94.1L68.9,92.3L57.9,92.3ZM75.5,94.1L86.8,94.2L91.0,92.3L79.9,92.3ZM98.1,94.2L109.3,94.2L113.1,92.4L102.1,92.4ZM120.6,94.2L131.9,94.2L135.3,92.4L124.2,92.4ZM143.3,94.2L154.6,94.2L157.4,92.4L146.3,92.4ZM165.9,94.3L177.2,94.3L179.6,92.5L168.5,92.4ZM188.5,94.3L199.8,94.3L201.7,92.5L190.7,92.5ZM211.2,94.3L222.5,94.3L223.9,92.5L212.8,92.5ZM233.8,94.3L245.2,94.3L246.2,92.5L235.0,92.5ZM256.5,94.4L267.9,94.4L268.4,92.6L257.3,92.5ZM279.2,94.4L290.6,94.4L290.6,92.6L279.5,92.6ZM302.0,94.4L313.3,94.4L312.9,92.6L301.7,92.6ZM324.7,94.4L336.1,94.5L335.1,92.6L324.0,92.6ZM347.4,94.5L358.8,94.5L357.4,92.7L346.3,92.6ZM370.2,94.5L381.6,94.5L379.7,92.7L368.6,92.7ZM393.0,94.5L404.4,94.5L402.0,92.7L390.9,92.7ZM415.8,94.6L427.2,94.6L424.4,92.7L413.2,92.7ZM438.6,94.6L450.0,94.6L446.7,92.8L435.6,92.8ZM461.4,94.6L472.9,94.6L469.1,92.8L457.9,92.8ZM484.3,94.6L495.7,94.7L491.5,92.8L480.3,92.8ZM507.1,94.7L518.6,94.7L513.9,92.9L502.7,92.8ZM530.0,94.7L541.5,94.7L536.3,92.9L525.1,92.9ZM552.9,94.7L564.4,94.7L558.7,92.9L547.5,92.9ZM575.8,94.8L587.3,94.8L581.1,92.9L569.9,92.9ZM2.7,92.2L13.7,92.3L19.3,90.5L8.5,90.5ZM24.7,92.3L35.8,92.3L41.0,90.5L30.1,90.5ZM46.8,92.3L57.9,92.3L62.6,90.6L51.8,90.6ZM68.9,92.3L79.9,92.3L84.2,90.6L73.4,90.6ZM91.0,92.3L102.1,92.4L105.9,90.6L95.1,90.6ZM113.1,92.4L124.2,92.4L127.6,90.6L116.7,90.6ZM135.3,92.4L146.3,92.4L149.3,90.7L138.4,90.7ZM157.4,92.4L168.5,92.4L171.0,90.7L160.1,90.7ZM179.6,92.5L190.7,92.5L192.7,90.7L181.8,90.7ZM201.7,92.5L212.8,92.5L214.4,90.7L203.6,90.7ZM223.9,92.5L235.0,92.5L236.2,90.8L225.3,90.8ZM246.2,92.5L257.3,92.5L258.0,90.8L247.1,90.8ZM268.4,92.6L279.5,92.6L279.7,90.8L268.9,90.8ZM290.6,92.6L301.7,92.6L301.5,90.8L290.6,90.8ZM312.9,92.6L324.0,92.6L323.3,90.9L312.4,90.9ZM335.1,92.6L346.3,92.6L345.2,90.9L334.3,90.9ZM357.4,92.7L368.6,92.7L367.0,90.9L356.1,90.9ZM379.7,92.7L390.9,92.7L388.9,91.0L377.9,90.9ZM402.0,92.7L413.2,92.7L410.7,91.0L399.8,91.0ZM424.4,92.7L435.6,92.8L432.6,91.0L421.7,91.0ZM446.7,92.8L457.9,92.8L454.5,91.0L443.6,91.0ZM469.1,92.8L480.3,92.8L476.4,91.1L465.5,91.0ZM491.5,92.8L502.7,92.8L498.4,91.1L487.4,91.1ZM513.9,92.9L525.1,92.9L520.3,91.1L509.3,91.1ZM536.3,92.9L547.5,92.9L542.3,91.1L531.3,91.1ZM558.7,92.9L569.9,92.9L564.2,91.2L553.2,91.1ZM581.1,92.9L592.4,92.9L586.2,91.2L575.2,91.2ZM-2.3,90.5L8.5,90.5L14.1,88.8L3.6,88.8ZM19.3,90.5L30.1,90.5L35.3,88.9L24.7,88.9ZM41.0,90.5L51.8,90.6L56.5,88.9L45.9,88.9ZM62.6,90.6L73.4,90.6L77.7,88.9L67.1,88.9ZM84.2,90.6L95.1,90.6L99.0,88.9L88.4,88.9ZM105.9,90.6L116.7,90.6L120.2,89.0L109.6,89.0ZM127.6,90.6L138.4,90.7L141.5,89.0L130.8,89.0ZM149.3,90.7L160.1,90.7L162.7,89.0L152.1,89.0ZM171.0,90.7L181.8,90.7L184.0,89.0L173.4,89.0ZM192.7,90.7L203.6,90.7L205.3,89.1L194.7,89.1ZM214.4,90.7L225.3,90.8L226.6,89.1L216.0,89.1ZM236.2,90.8L247.1,90.8L248.0,89.1L237.3,89.1ZM258.0,90.8L268.9,90.8L269.3,89.1L258.6,89.1ZM279.7,90.8L290.6,90.8L290.7,89.2L280.0,89.1ZM301.5,90.8L312.4,90.9L312.0,89.2L301.3,89.2ZM323.3,90.9L334.3,90.9L333.4,89.2L322.7,89.2ZM345.2,90.9L356.1,90.9L354.8,89.2L344.1,89.2ZM367.0,90.9L377.9,90.9L376.2,89.3L365.5,89.2ZM388.9,91.0L399.8,91.0L397.6,89.3L386.9,89.3ZM410.7,91.0L421.7,91.0L419.1,89.3L408.4,89.3ZM432.6,91.0L443.6,91.0L440.5,89.3L429.8,89.3ZM454.5,91.0L465.5,91.0L462.0,89.4L451.3,89.3ZM476.4,91.1L487.4,91.1L483.5,89.4L472.7,89.4ZM498.4,91.1L509.3,91.1L505.0,89.4L494.2,89.4ZM520.3,91.1L531.3,91.1L526.5,89.4L515.7,89.4ZM542.3,91.1L553.2,91.1L548.0,89.5L537.3,89.4ZM564.2,91.2L575.2,91.2L569.6,89.5L558.8,89.5ZM-7.0,88.8L3.6,88.8L9.2,87.2L-1.2,87.2ZM14.1,88.8L24.7,88.9L29.9,87.3L19.5,87.2ZM35.3,88.9L45.9,88.9L50.7,87.3L40.3,87.3ZM56.5,88.9L67.1,88.9L71.5,87.3L61.1,87.3ZM77.7,88.9L88.4,88.9L92.3,87.3L81.9,87.3ZM99.0,88.9L109.6,89.0L113.1,87.3L102.7,87.3ZM120.2,89.0L130.8,89.0L134.0,87.4L123.6,87.4ZM141.5,89.0L152.1,89.0L154.8,87.4L144.4,87.4ZM162.7,89.0L173.4,89.0L175.7,87.4L165.3,87.4ZM184.0,89.0L194.7,89.1L196.6,87.4L186.1,87.4ZM205.3,89.1L216.0,89.1L217.5,87.5L207.0,87.5ZM226.6,89.1L237.3,89.1L238.4,87.5L227.9,87.5ZM248.0,89.1L258.6,89.1L259.3,87.5L248.8,87.5ZM269.3,89.1L280.0,89.1L280.2,87.5L269.7,87.5ZM290.7,89.2L301.3,89.2L301.2,87.6L290.7,87.5ZM312.0,89.2L322.7,89.2L322.1,87.6L311.6,87.6ZM333.4,89.2L344.1,89.2L343.1,87.6L332.6,87.6ZM354.8,89.2L365.5,89.2L364.1,87.6L353.6,87.6ZM376.2,89.3L386.9,89.3L385.1,87.7L374.6,87.6ZM397.6,89.3L408.4,89.3L406.1,87.7L395.6,87.7ZM419.1,89.3L429.8,89.3L427.1,87.7L416.6,87.7ZM440.5,89.3L451.3,89.3L448.1,87.7L437.6,87.7ZM462.0,89.4L472.7,89.4L469.2,87.7L458.7,87.7ZM483.5,89.4L494.2,89.4L490.3,87.8L479.7,87.8ZM505.0,89.4L515.7,89.4L511.3,87.8L500.8,87.8ZM526.5,89.4L537.3,89.4L532.4,87.8L521.9,87.8ZM548.0,89.5L558.8,89.5L553.5,87.8L543.0,87.8ZM569.6,89.5L580.3,89.5L574.7,87.9L564.1,87.9ZM-11.6,87.2L-1.2,87.2L4.4,85.7L-5.8,85.7ZM9.2,87.2L19.5,87.2L24.7,85.7L14.6,85.7ZM29.9,87.3L40.3,87.3L45.1,85.7L34.9,85.7ZM50.7,87.3L61.1,87.3L65.5,85.8L55.3,85.7ZM71.5,87.3L81.9,87.3L85.9,85.8L75.7,85.8ZM92.3,87.3L102.7,87.3L106.3,85.8L96.1,85.8ZM113.1,87.3L123.6,87.4L126.8,85.8L116.6,85.8ZM134.0,87.4L144.4,87.4L147.2,85.8L137.0,85.8ZM154.8,87.4L165.3,87.4L167.7,85.9L157.4,85.9ZM175.7,87.4L186.1,87.4L188.1,85.9L177.9,85.9ZM196.6,87.4L207.0,87.5L208.6,85.9L198.4,85.9ZM217.5,87.5L227.9,87.5L229.1,85.9L218.9,85.9ZM238.4,87.5L248.8,87.5L249.6,86.0L239.4,85.9ZM259.3,87.5L269.7,87.5L270.2,86.0L259.9,86.0ZM280.2,87.5L290.7,87.5L290.7,86.0L280.4,86.0ZM301.2,87.6L311.6,87.6L311.3,86.0L301.0,86.0ZM322.1,87.6L332.6,87.6L331.8,86.0L321.5,86.0ZM343.1,87.6L353.6,87.6L352.4,86.1L342.1,86.1ZM364.1,87.6L374.6,87.6L373.0,86.1L362.7,86.1ZM385.1,87.7L395.6,87.7L393.6,86.1L383.3,86.1ZM406.1,87.7L416.6,87.7L414.2,86.1L403.9,86.1ZM427.1,87.7L437.6,87.7L434.8,86.2L424.5,86.1ZM448.1,87.7L458.7,87.7L455.5,86.2L445.1,86.2ZM469.2,87.7L479.7,87.8L476.1,86.2L465.8,86.2ZM490.3,87.8L500.8,87.8L496.8,86.2L486.5,86.2ZM511.3,87.8L521.9,87.8L517.5,86.2L507.1,86.2ZM532.4,87.8L543.0,87.8L538.2,86.3L527.8,86.3ZM553.5,87.8L564.1,87.9L558.9,86.3L548.5,86.3ZM574.7,87.9L585.2,87.9L579.6,86.3L569.2,86.3Z" fill="#c5c5c5"/>
<path d="M-16.0,85.7L-5.8,85.7L-0.2,84.2L-10.2,84.2ZM4.4,85.7L14.6,85.7L19.7,84.2L9.7,84.2ZM24.7,85.7L34.9,85.7L39.7,84.2L29.7,84.2ZM45.1,85.7L55.3,85.7L59.7,84.3L49.7,84.2ZM65.5,85.8L75.7,85.8L79.8,84.3L69.8,84.3ZM85.9,85.8L96.1,85.8L99.8,84.3L89.8,84.3ZM106.3,85.8L116.6,85.8L119.8,84.3L109.8,84.3ZM126.8,85.8L137.0,85.8L139.9,84.3L129.9,84.3ZM147.2,85.8L157.4,85.9L160.0,84.4L149.9,84.4ZM167.7,85.9L177.9,85.9L180.0,84.4L170.0,84.4ZM188.1,85.9L198.4,85.9L200.1,84.4L190.1,84.4ZM208.6,85.9L218.9,85.9L220.2,84.4L210.2,84.4ZM229.1,85.9L239.4,85.9L240.4,84.5L230.3,84.4ZM249.6,86.0L259.9,86.0L260.5,84.5L250.4,84.5ZM270.2,86.0L280.4,86.0L280.6,84.5L270.6,84.5ZM290.7,86.0L301.0,86.0L300.8,84.5L290.7,84.5ZM311.3,86.0L321.5,86.0L321.0,84.5L310.9,84.5ZM331.8,86.0L342.1,86.1L341.2,84.6L331.1,84.5ZM352.4,86.1L362.7,86.1L361.3,84.6L351.2,84.6ZM373.0,86.1L383.3,86.1L381.6,84.6L371.5,84.6ZM393.6,86.1L403.9,86.1L401.8,84.6L391.7,84.6ZM414.2,86.1L424.5,86.1L422.0,84.6L411.9,84.6ZM434.8,86.2L445.1,86.2L442.3,84.7L432.1,84.7ZM455.5,86.2L465.8,86.2L462.5,84.7L452.4,84.7ZM476.1,86.2L486.5,86.2L482.8,84.7L472.6,84.7ZM496.8,86.2L507.1,86.2L503.1,84.7L492.9,84.7ZM517.5,86.2L527.8,86.3L523.4,84.8L513.2,84.7ZM538.2,86.3L548.5,86.3L543.7,84.8L533.5,84.8ZM558.9,86.3L569.2,86.3L564.0,84.8L553.8,84.8ZM579.6,86.3L590.0,86.3L584.3,84.8L574.2,84.8ZM-0.2,84.2L9.7,84.2L14.9,82.8L5.1,82.8ZM19.7,84.2L29.7,84.2L34.6,82.8L24.7,82.8ZM39.7,84.2L49.7,84.2L54.2,82.8L44.4,82.8ZM59.7,84.3L69.8,84.3L73.8,82.8L64.0,82.8ZM79.8,84.3L89.8,84.3L93.5,82.9L83.7,82.9ZM99.8,84.3L109.8,84.3L113.2,82.9L103.3,82.9ZM119.8,84.3L129.9,84.3L132.8,82.9L123.0,82.9ZM139.9,84.3L149.9,84.4L152.5,82.9L142.7,82.9ZM160.0,84.4L170.0,84.4L172.2,82.9L162.4,82.9ZM180.0,84.4L190.1,84.4L192.0,83.0L182.1,83.0ZM200.1,84.4L210.2,84.4L211.7,83.0L201.8,83.0ZM220.2,84.4L230.3,84.4L231.4,83.0L221.6,83.0ZM240.4,84.5L250.4,84.5L251.2,83.0L241.3,83.0ZM260.5,84.5L270.6,84.5L271.0,83.0L261.1,83.0ZM280.6,84.5L290.7,84.5L290.7,83.1L280.9,83.1ZM300.8,84.5L310.9,84.5L310.5,83.1L300.6,83.1ZM321.0,84.5L331.1,84.5L330.3,83.1L320.4,83.1ZM341.2,84.6L351.2,84.6L350.2,83.1L340.2,83.1ZM361.3,84.6L371.5,84.6L370.0,83.2L360.1,83.1ZM381.6,84.6L391.7,84.6L389.8,83.2L379.9,83.2ZM401.8,84.6L411.9,84.6L409.7,83.2L399.7,83.2ZM422.0,84.6L432.1,84.7L429.5,83.2L419.6,83.2ZM442.3,84.7L452.4,84.7L449.4,83.2L439.5,83.2ZM462.5,84.7L472.6,84.7L469.3,83.3L459.4,83.2ZM482.8,84.7L492.9,84.7L489.2,83.3L479.2,83.3ZM503.1,84.7L513.2,84.7L509.1,83.3L499.2,83.3ZM523.4,84.8L533.5,84.8L529.0,83.3L519.1,83.3ZM543.7,84.8L553.8,84.8L549.0,83.3L539.0,83.3ZM564.0,84.8L574.2,84.8L568.9,83.4L558.9,83.4ZM-4.7,82.8L5.1,82.8L10.3,81.4L0.7,81.4ZM14.9,82.8L24.7,82.8L29.6,81.4L19.9,81.4ZM34.6,82.8L44.4,82.8L48.8,81.4L39.2,81.4ZM54.2,82.8L64.0,82.8L68.1,81.5L58.5,81.4ZM73.8,82.8L83.7,82.9L87.4,81.5L77.8,81.5ZM93.5,82.9L103.3,82.9L106.7,81.5L97.1,81.5ZM113.2,82.9L123.0,82.9L126.1,81.5L116.4,81.5ZM132.8,82.9L142.7,82.9L145.4,81.5L135.7,81.5ZM152.5,82.9L162.4,82.9L164.7,81.6L155.1,81.5ZM172.2,82.9L182.1,83.0L184.1,81.6L174.4,81.6ZM192.0,83.0L201.8,83.0L203.5,81.6L193.8,81.6ZM211.7,83.0L221.6,83.0L222.8,81.6L213.1,81.6ZM231.4,83.0L241.3,83.0L242.2,81.6L232.5,81.6ZM251.2,83.0L261.1,83.0L261.6,81.7L251.9,81.6ZM271.0,83.0L280.9,83.1L281.0,81.7L271.3,81.7ZM290.7,83.1L300.6,83.1L300.5,81.7L290.8,81.7ZM310.5,83.1L320.4,83.1L319.9,81.7L310.2,81.7ZM330.3,83.1L340.2,83.1L339.4,81.7L329.6,81.7ZM350.2,83.1L360.1,83.1L358.8,81.8L349.1,81.7ZM370.0,83.2L379.9,83.2L378.3,81.8L368.6,81.8ZM389.8,83.2L399.7,83.2L397.8,81.8L388.0,81.8ZM409.7,83.2L419.6,83.2L417.3,81.8L407.5,81.8ZM429.5,83.2L439.5,83.2L436.8,81.8L427.0,81.8ZM449.4,83.2L459.4,83.2L456.3,81.9L446.5,81.8ZM469.3,83.3L479.2,83.3L475.8,81.9L466.1,81.9ZM489.2,83.3L499.2,83.3L495.4,81.9L485.6,81.9ZM509.1,83.3L519.1,83.3L514.9,81.9L505.2,81.9ZM529.0,83.3L539.0,83.3L534.5,81.9L524.7,81.9ZM549.0,83.3L558.9,83.4L554.1,82.0L544.3,81.9ZM568.9,83.4L578.9,83.4L573.7,82.0L563.9,82.0ZM-9.0,81.4L0.7,81.4L5.8,80.1L-3.6,80.1ZM10.3,81.4L19.9,81.4L24.7,80.1L15.3,80.1ZM29.6,81.4L39.2,81.4L43.7,80.1L34.2,80.1ZM48.8,81.4L58.5,81.4L62.6,80.1L53.1,80.1ZM68.1,81.5L77.8,81.5L81.6,80.1L72.1,80.1ZM87.4,81.5L97.1,81.5L100.5,80.2L91.0,80.1ZM106.7,81.5L116.4,81.5L119.5,80.2L110.0,80.2ZM126.1,81.5L135.7,81.5L138.5,80.2L129.0,80.2ZM145.4,81.5L155.1,81.5L157.5,80.2L148.0,80.2ZM164.7,81.6L174.4,81.6L176.5,80.2L167.0,80.2ZM184.1,81.6L193.8,81.6L195.5,80.3L186.0,80.2ZM203.5,81.6L213.1,81.6L214.5,80.3L205.0,80.3ZM222.8,81.6L232.5,81.6L233.6,80.3L224.1,80.3ZM242.2,81.6L251.9,81.6L252.6,80.3L243.1,80.3ZM261.6,81.7L271.3,81.7L271.7,80.3L262.2,80.3ZM281.0,81.7L290.8,81.7L290.8,80.4L281.2,80.3ZM300.5,81.7L310.2,81.7L309.9,80.4L300.3,80.4ZM319.9,81.7L329.6,81.7L329.0,80.4L319.4,80.4ZM339.4,81.7L349.1,81.7L348.1,80.4L338.5,80.4ZM358.8,81.8L368.6,81.8L367.2,80.4L357.6,80.4ZM378.3,81.8L388.0,81.8L386.3,80.4L376.8,80.4ZM397.8,81.8L407.5,81.8L405.5,80.5L395.9,80.5ZM417.3,81.8L427.0,81.8L424.6,80.5L415.0,80.5ZM436.8,81.8L446.5,81.8L443.8,80.5L434.2,80.5ZM456.3,81.9L466.1,81.9L463.0,80.5L453.4,80.5ZM475.8,81.9L485.6,81.9L482.2,80.5L472.6,80.5ZM495.4,81.9L505.2,81.9L501.4,80.6L491.7,80.6ZM514.9,81.9L524.7,81.9L520.6,80.6L511.0,80.6ZM534.5,81.9L544.3,81.9L539.8,80.6L530.2,80.6ZM554.1,82.0L563.9,82.0L559.0,80.6L549.4,80.6ZM573.7,82.0L583.5,82.0L578.3,80.6L568.6,80.6ZM-13.1,80.0L-3.6,80.1L1.5,78.8L-7.8,78.8ZM5.8,80.1L15.3,80.1L20.1,78.8L10.8,78.8ZM24.7,80.1L34.2,80.1L38.7,78.8L29.4,78.8ZM43.7,80.1L53.1,80.1L57.3,78.8L48.0,78.8ZM62.6,80.1L72.1,80.1L75.9,78.8L66.6,78.8ZM81.6,80.1L91.0,80.1L94.5,78.9L85.2,78.9ZM100.5,80.2L110.0,80.2L113.2,78.9L103.9,78.9ZM119.5,80.2L129.0,80.2L131.8,78.9L122.5,78.9ZM138.5,80.2L148.0,80.2L150.5,78.9L141.2,78.9ZM157.5,80.2L167.0,80.2L169.2,78.9L159.8,78.9ZM176.5,80.2L186.0,80.2L187.8,79.0L178.5,79.0ZM195.5,80.3L205.0,80.3L206.5,79.0L197.2,79.0ZM214.5,80.3L224.1,80.3L225.2,79.0L215.9,79.0ZM233.6,80.3L243.1,80.3L244.0,79.0L234.6,79.0ZM252.6,80.3L262.2,80.3L262.7,79.0L253.3,79.0ZM271.7,80.3L281.2,80.3L281.4,79.1L272.1,79.0ZM290.8,80.4L300.3,80.4L300.2,79.1L290.8,79.1ZM309.9,80.4L319.4,80.4L318.9,79.1L309.5,79.1ZM329.0,80.4L338.5,80.4L337.7,79.1L328.3,79.1ZM348.1,80.4L357.6,80.4L356.5,79.1L347.1,79.1ZM367.2,80.4L376.8,80.4L375.3,79.1L365.9,79.1ZM386.3,80.4L395.9,80.5L394.1,79.2L384.7,79.2ZM405.5,80.5L415.0,80.5L412.9,79.2L403.5,79.2ZM424.6,80.5L434.2,80.5L431.7,79.2L422.3,79.2ZM443.8,80.5L453.4,80.5L450.5,79.2L441.1,79.2ZM463.0,80.5L472.6,80.5L469.4,79.2L460.0,79.2ZM482.2,80.5L491.7,80.6L488.2,79.3L478.8,79.2ZM501.4,80.6L511.0,80.6L507.1,79.3L497.7,79.3ZM520.6,80.6L530.2,80.6L526.0,79.3L516.5,79.3ZM539.8,80.6L549.4,80.6L544.9,79.3L535.4,79.3ZM559.0,80.6L568.6,80.6L563.8,79.3L554.3,79.3ZM578.3,80.6L587.9,80.6L582.7,79.3L573.2,79.3Z" fill="#c6c6c6"/>
<path d="M1.5,78.8L10.8,78.8L15.6,77.6L6.5,77.5ZM20.1,78.8L29.4,78.8L33.9,77.6L24.7,77.6ZM38.7,78.8L48.0,78.8L52.2,77.6L43.0,77.6ZM57.3,78.8L66.6,78.8L70.5,77.6L61.3,77.6ZM75.9,78.8L85.2,78.9L88.8,77.6L79.6,77.6ZM94.5,78.9L103.9,78.9L107.1,77.6L97.9,77.6ZM113.2,78.9L122.5,78.9L125.4,77.7L116.2,77.6ZM131.8,78.9L141.2,78.9L143.7,77.7L134.6,77.7ZM150.5,78.9L159.8,78.9L162.1,77.7L152.9,77.7ZM169.2,78.9L178.5,79.0L180.4,77.7L171.3,77.7ZM187.8,79.0L197.2,79.0L198.8,77.7L189.6,77.7ZM206.5,79.0L215.9,79.0L217.2,77.7L208.0,77.7ZM225.2,79.0L234.6,79.0L235.6,77.8L226.4,77.8ZM244.0,79.0L253.3,79.0L254.0,77.8L244.8,77.8ZM262.7,79.0L272.1,79.0L272.4,77.8L263.2,77.8ZM281.4,79.1L290.8,79.1L290.8,77.8L281.6,77.8ZM300.2,79.1L309.5,79.1L309.2,77.8L300.0,77.8ZM318.9,79.1L328.3,79.1L327.7,77.9L318.5,77.8ZM337.7,79.1L347.1,79.1L346.1,77.9L336.9,77.9ZM356.5,79.1L365.9,79.1L364.6,77.9L355.4,77.9ZM375.3,79.1L384.7,79.2L383.1,77.9L373.8,77.9ZM394.1,79.2L403.5,79.2L401.6,77.9L392.3,77.9ZM412.9,79.2L422.3,79.2L420.0,77.9L410.8,77.9ZM431.7,79.2L441.1,79.2L438.5,78.0L429.3,78.0ZM450.5,79.2L460.0,79.2L457.1,78.0L447.8,78.0ZM469.4,79.2L478.8,79.2L475.6,78.0L466.3,78.0ZM488.2,79.3L497.7,79.3L494.1,78.0L484.9,78.0ZM507.1,79.3L516.5,79.3L512.7,78.0L503.4,78.0ZM526.0,79.3L535.4,79.3L531.2,78.0L521.9,78.0ZM544.9,79.3L554.3,79.3L549.8,78.1L540.5,78.1ZM563.8,79.3L573.2,79.3L568.4,78.1L559.1,78.1ZM-2.7,77.5L6.5,77.5L11.3,76.4L2.3,76.3ZM15.6,77.6L24.7,77.6L29.2,76.4L20.2,76.4ZM33.9,77.6L43.0,77.6L47.2,76.4L38.2,76.4ZM52.2,77.6L61.3,77.6L65.2,76.4L56.2,76.4ZM70.5,77.6L79.6,77.6L83.2,76.4L74.2,76.4ZM88.8,77.6L97.9,77.6L101.2,76.4L92.2,76.4ZM107.1,77.6L116.2,77.6L119.2,76.5L110.2,76.4ZM125.4,77.7L134.6,77.7L137.2,76.5L128.2,76.5ZM143.7,77.7L152.9,77.7L155.3,76.5L146.2,76.5ZM162.1,77.7L171.3,77.7L173.3,76.5L164.3,76.5ZM180.4,77.7L189.6,77.7L191.4,76.5L182.3,76.5ZM198.8,77.7L208.0,77.7L209.4,76.5L200.4,76.5ZM217.2,77.7L226.4,77.8L227.5,76.6L218.5,76.5ZM235.6,77.8L244.8,77.8L245.6,76.6L236.5,76.6ZM254.0,77.8L263.2,77.8L263.7,76.6L254.6,76.6ZM272.4,77.8L281.6,77.8L281.8,76.6L272.7,76.6ZM290.8,77.8L300.0,77.8L299.9,76.6L290.8,76.6ZM309.2,77.8L318.5,77.8L318.0,76.6L308.9,76.6ZM327.7,77.9L336.9,77.9L336.1,76.7L327.1,76.6ZM346.1,77.9L355.4,77.9L354.3,76.7L345.2,76.7ZM364.6,77.9L373.8,77.9L372.4,76.7L363.4,76.7ZM383.1,77.9L392.3,77.9L390.6,76.7L381.5,76.7ZM401.6,77.9L410.8,77.9L408.8,76.7L399.7,76.7ZM420.0,77.9L429.3,78.0L427.0,76.7L417.9,76.7ZM438.5,78.0L447.8,78.0L445.2,76.8L436.1,76.8ZM457.1,78.0L466.3,78.0L463.4,76.8L454.3,76.8ZM475.6,78.0L484.9,78.0L481.6,76.8L472.5,76.8ZM494.1,78.0L503.4,78.0L499.8,76.8L490.7,76.8ZM512.7,78.0L521.9,78.0L518.0,76.8L508.9,76.8ZM531.2,78.0L540.5,78.1L536.3,76.8L527.2,76.8ZM549.8,78.1L559.1,78.1L554.5,76.9L545.4,76.9ZM568.4,78.1L577.7,78.1L572.8,76.9L563.7,76.9ZM-6.7,76.3L2.3,76.3L7.1,75.2L-1.7,75.2ZM11.3,76.4L20.2,76.4L24.7,75.2L15.9,75.2ZM29.2,76.4L38.2,76.4L42.4,75.2L33.6,75.2ZM47.2,76.4L56.2,76.4L60.1,75.2L51.3,75.2ZM65.2,76.4L74.2,76.4L77.8,75.3L68.9,75.2ZM83.2,76.4L92.2,76.4L95.5,75.3L86.6,75.3ZM101.2,76.4L110.2,76.4L113.2,75.3L104.3,75.3ZM119.2,76.5L128.2,76.5L130.9,75.3L122.1,75.3ZM137.2,76.5L146.2,76.5L148.6,75.3L139.8,75.3ZM155.3,76.5L164.3,76.5L166.4,75.3L157.5,75.3ZM173.3,76.5L182.3,76.5L184.1,75.4L175.3,75.3ZM191.4,76.5L200.4,76.5L201.9,75.4L193.0,75.4ZM209.4,76.5L218.5,76.5L219.7,75.4L210.8,75.4ZM227.5,76.6L236.5,76.6L237.4,75.4L228.6,75.4ZM245.6,76.6L254.6,76.6L255.2,75.4L246.3,75.4ZM263.7,76.6L272.7,76.6L273.0,75.4L264.1,75.4ZM281.8,76.6L290.8,76.6L290.8,75.5L281.9,75.4ZM299.9,76.6L308.9,76.6L308.7,75.5L299.8,75.5ZM318.0,76.6L327.1,76.6L326.5,75.5L317.6,75.5ZM336.1,76.7L345.2,76.7L344.3,75.5L335.4,75.5ZM354.3,76.7L363.4,76.7L362.2,75.5L353.2,75.5ZM372.4,76.7L381.5,76.7L380.0,75.5L371.1,75.5ZM390.6,76.7L399.7,76.7L397.9,75.6L389.0,75.5ZM408.8,76.7L417.9,76.7L415.8,75.6L406.8,75.6ZM427.0,76.7L436.1,76.8L433.7,75.6L424.7,75.6ZM445.2,76.8L454.3,76.8L451.6,75.6L442.6,75.6ZM463.4,76.8L472.5,76.8L469.5,75.6L460.5,75.6ZM481.6,76.8L490.7,76.8L487.4,75.6L478.4,75.6ZM499.8,76.8L508.9,76.8L505.3,75.7L496.3,75.6ZM518.0,76.8L527.2,76.8L523.2,75.7L514.3,75.7ZM536.3,76.8L545.4,76.9L541.2,75.7L532.2,75.7ZM554.5,76.9L563.7,76.9L559.1,75.7L550.2,75.7ZM572.8,76.9L582.0,76.9L577.1,75.7L568.1,75.7ZM-10.6,75.2L-1.7,75.2L3.0,74.1L-5.7,74.1ZM7.1,75.2L15.9,75.2L20.4,74.1L11.7,74.1ZM24.7,75.2L33.6,75.2L37.8,74.1L29.1,74.1ZM42.4,75.2L51.3,75.2L55.2,74.1L46.5,74.1ZM60.1,75.2L68.9,75.2L72.6,74.1L63.9,74.1ZM77.8,75.3L86.6,75.3L90.0,74.1L81.3,74.1ZM95.5,75.3L104.3,75.3L107.4,74.2L98.7,74.2ZM113.2,75.3L122.1,75.3L124.8,74.2L116.1,74.2ZM130.9,75.3L139.8,75.3L142.3,74.2L133.5,74.2ZM148.6,75.3L157.5,75.3L159.7,74.2L151.0,74.2ZM166.4,75.3L175.3,75.3L177.2,74.2L168.4,74.2ZM184.1,75.4L193.0,75.4L194.6,74.2L185.9,74.2ZM201.9,75.4L210.8,75.4L212.1,74.3L203.4,74.2ZM219.7,75.4L228.6,75.4L229.6,74.3L220.8,74.3ZM237.4,75.4L246.3,75.4L247.1,74.3L238.3,74.3ZM255.2,75.4L264.1,75.4L264.6,74.3L255.8,74.3ZM273.0,75.4L281.9,75.4L282.1,74.3L273.3,74.3ZM290.8,75.5L299.8,75.5L299.6,74.3L290.9,74.3ZM308.7,75.5L317.6,75.5L317.2,74.4L308.4,74.3ZM326.5,75.5L335.4,75.5L334.7,74.4L325.9,74.4ZM344.3,75.5L353.2,75.5L352.2,74.4L343.5,74.4ZM362.2,75.5L371.1,75.5L369.8,74.4L361.0,74.4ZM380.0,75.5L389.0,75.5L387.4,74.4L378.6,74.4ZM397.9,75.6L406.8,75.6L405.0,74.4L396.2,74.4ZM415.8,75.6L424.7,75.6L422.5,74.4L413.7,74.4ZM433.7,75.6L442.6,75.6L440.1,74.5L431.3,74.5ZM451.6,75.6L460.5,75.6L457.7,74.5L448.9,74.5ZM469.5,75.6L478.4,75.6L475.4,74.5L466.6,74.5ZM487.4,75.6L496.3,75.6L493.0,74.5L484.2,74.5ZM505.3,75.7L514.3,75.7L510.6,74.5L501.8,74.5ZM523.2,75.7L532.2,75.7L528.3,74.5L519.4,74.5ZM541.2,75.7L550.2,75.7L545.9,74.6L537.1,74.6ZM559.1,75.7L568.1,75.7L563.6,74.6L554.8,74.6ZM577.1,75.7L586.1,75.7L581.3,74.6L572.4,74.6ZM-14.3,74.1L-5.7,74.1L-0.9,73.0L-9.4,73.0ZM3.0,74.1L11.7,74.1L16.2,73.0L7.6,73.0ZM20.4,74.1L29.1,74.1L33.3,73.0L24.7,73.0ZM37.8,74.1L46.5,74.1L50.4,73.0L41.8,73.0ZM55.2,74.1L63.9,74.1L67.5,73.0L59.0,73.0ZM72.6,74.1L81.3,74.1L84.6,73.1L76.1,73.0ZM90.0,74.1L98.7,74.2L101.8,73.1L93.2,73.1ZM107.4,74.2L116.1,74.2L118.9,73.1L110.4,73.1ZM124.8,74.2L133.5,74.2L136.1,73.1L127.5,73.1ZM142.3,74.2L151.0,74.2L153.2,73.1L144.7,73.1ZM159.7,74.2L168.4,74.2L170.4,73.1L161.8,73.1ZM177.2,74.2L185.9,74.2L187.6,73.1L179.0,73.1ZM194.6,74.2L203.4,74.2L204.8,73.2L196.2,73.2ZM212.1,74.3L220.8,74.3L222.0,73.2L213.4,73.2ZM229.6,74.3L238.3,74.3L239.2,73.2L230.6,73.2ZM247.1,74.3L255.8,74.3L256.4,73.2L247.8,73.2ZM264.6,74.3L273.3,74.3L273.6,73.2L265.0,73.2ZM282.1,74.3L290.9,74.3L290.9,73.2L282.3,73.2ZM299.6,74.3L308.4,74.3L308.1,73.3L299.5,73.2ZM317.2,74.4L325.9,74.4L325.4,73.3L316.7,73.3ZM334.7,74.4L343.5,74.4L342.6,73.3L334.0,73.3ZM352.2,74.4L361.0,74.4L359.9,73.3L351.3,73.3ZM369.8,74.4L378.6,74.4L377.2,73.3L368.5,73.3ZM387.4,74.4L396.2,74.4L394.5,73.3L385.8,73.3ZM405.0,74.4L413.7,74.4L411.8,73.3L403.1,73.3ZM422.5,74.4L431.3,74.5L429.1,73.4L420.4,73.4ZM440.1,74.5L448.9,74.5L446.4,73.4L437.7,73.4ZM457.7,74.5L466.6,74.5L463.7,73.4L455.1,73.4ZM475.4,74.5L484.2,74.5L481.1,73.4L472.4,73.4ZM493.0,74.5L501.8,74.5L498.4,73.4L489.7,73.4ZM510.6,74.5L519.4,74.5L515.8,73.4L507.1,73.4ZM528.3,74.5L537.1,74.6L533.1,73.5L524.5,73.4ZM545.9,74.6L554.8,74.6L550.5,73.5L541.8,73.5ZM563.6,74.6L572.4,74.6L567.9,73.5L559.2,73.5Z" fill="#c7c7c7"/>
<path d="M-0.9,73.0L7.6,73.0L12.1,71.9L3.7,71.9ZM16.2,73.0L24.7,73.0L28.9,72.0L20.5,71.9ZM33.3,73.0L41.8,73.0L45.8,72.0L37.4,72.0ZM50.4,73.0L59.0,73.0L62.6,72.0L54.2,72.0ZM67.5,73.0L76.1,73.0L79.5,72.0L71.1,72.0ZM84.6,73.1L93.2,73.1L96.3,72.0L87.9,72.0ZM101.8,73.1L110.4,73.1L113.2,72.0L104.8,72.0ZM118.9,73.1L127.5,73.1L130.1,72.0L121.7,72.0ZM136.1,73.1L144.7,73.1L147.0,72.1L138.5,72.1ZM153.2,73.1L161.8,73.1L163.9,72.1L155.4,72.1ZM170.4,73.1L179.0,73.1L180.8,72.1L172.3,72.1ZM187.6,73.1L196.2,73.2L197.7,72.1L189.2,72.1ZM204.8,73.2L213.4,73.2L214.6,72.1L206.2,72.1ZM222.0,73.2L230.6,73.2L231.6,72.1L223.1,72.1ZM239.2,73.2L247.8,73.2L248.5,72.1L240.0,72.1ZM256.4,73.2L265.0,73.2L265.4,72.2L257.0,72.2ZM273.6,73.2L282.3,73.2L282.4,72.2L273.9,72.2ZM290.9,73.2L299.5,73.2L299.4,72.2L290.9,72.2ZM308.1,73.3L316.7,73.3L316.3,72.2L307.9,72.2ZM325.4,73.3L334.0,73.3L333.3,72.2L324.8,72.2ZM342.6,73.3L351.3,73.3L350.3,72.2L341.8,72.2ZM359.9,73.3L368.5,73.3L367.3,72.3L358.8,72.2ZM377.2,73.3L385.8,73.3L384.3,72.3L375.8,72.3ZM394.5,73.3L403.1,73.3L401.4,72.3L392.9,72.3ZM411.8,73.3L420.4,73.4L418.4,72.3L409.9,72.3ZM429.1,73.4L437.7,73.4L435.4,72.3L426.9,72.3ZM446.4,73.4L455.1,73.4L452.5,72.3L444.0,72.3ZM463.7,73.4L472.4,73.4L469.5,72.3L461.0,72.3ZM481.1,73.4L489.7,73.4L486.6,72.4L478.1,72.4ZM498.4,73.4L507.1,73.4L503.7,72.4L495.1,72.4ZM515.8,73.4L524.5,73.4L520.8,72.4L512.2,72.4ZM533.1,73.5L541.8,73.5L537.9,72.4L529.3,72.4ZM550.5,73.5L559.2,73.5L555.0,72.4L546.4,72.4ZM567.9,73.5L576.6,73.5L572.1,72.4L563.5,72.4ZM-4.7,71.9L3.7,71.9L8.2,70.9L-0.1,70.9ZM12.1,71.9L20.5,71.9L24.7,70.9L16.5,70.9ZM28.9,72.0L37.4,72.0L41.3,71.0L33.0,70.9ZM45.8,72.0L54.2,72.0L57.9,71.0L49.6,71.0ZM62.6,72.0L71.1,72.0L74.5,71.0L66.2,71.0ZM79.5,72.0L87.9,72.0L91.1,71.0L82.8,71.0ZM96.3,72.0L104.8,72.0L107.7,71.0L99.4,71.0ZM113.2,72.0L121.7,72.0L124.3,71.0L116.0,71.0ZM130.1,72.0L138.5,72.1L140.9,71.0L132.6,71.0ZM147.0,72.1L155.4,72.1L157.5,71.1L149.2,71.0ZM163.9,72.1L172.3,72.1L174.2,71.1L165.9,71.1ZM180.8,72.1L189.2,72.1L190.8,71.1L182.5,71.1ZM197.7,72.1L206.2,72.1L207.5,71.1L199.2,71.1ZM214.6,72.1L223.1,72.1L224.2,71.1L215.8,71.1ZM231.6,72.1L240.0,72.1L240.8,71.1L232.5,71.1ZM248.5,72.1L257.0,72.2L257.5,71.1L249.2,71.1ZM265.4,72.2L273.9,72.2L274.2,71.2L265.9,71.1ZM282.4,72.2L290.9,72.2L290.9,71.2L282.5,71.2ZM299.4,72.2L307.9,72.2L307.6,71.2L299.3,71.2ZM316.3,72.2L324.8,72.2L324.3,71.2L316.0,71.2ZM333.3,72.2L341.8,72.2L341.0,71.2L332.7,71.2ZM350.3,72.2L358.8,72.2L357.8,71.2L349.4,71.2ZM367.3,72.3L375.8,72.3L374.5,71.2L366.2,71.2ZM384.3,72.3L392.9,72.3L391.3,71.3L382.9,71.2ZM401.4,72.3L409.9,72.3L408.0,71.3L399.7,71.3ZM418.4,72.3L426.9,72.3L424.8,71.3L416.4,71.3ZM435.4,72.3L444.0,72.3L441.6,71.3L433.2,71.3ZM452.5,72.3L461.0,72.3L458.4,71.3L450.0,71.3ZM469.5,72.3L478.1,72.4L475.2,71.3L466.8,71.3ZM486.6,72.4L495.1,72.4L492.0,71.3L483.6,71.3ZM503.7,72.4L512.2,72.4L508.8,71.4L500.4,71.3ZM520.8,72.4L529.3,72.4L525.6,71.4L517.2,71.4ZM537.9,72.4L546.4,72.4L542.4,71.4L534.0,71.4ZM555.0,72.4L563.5,72.4L559.3,71.4L550.8,71.4ZM572.1,72.4L580.6,72.4L576.1,71.4L567.7,71.4ZM-8.4,70.9L-0.1,70.9L4.4,69.9L-3.8,69.9ZM8.2,70.9L16.5,70.9L20.7,69.9L12.5,69.9ZM24.7,70.9L33.0,70.9L37.0,70.0L28.8,70.0ZM41.3,71.0L49.6,71.0L53.3,70.0L45.1,70.0ZM57.9,71.0L66.2,71.0L69.6,70.0L61.5,70.0ZM74.5,71.0L82.8,71.0L86.0,70.0L77.8,70.0ZM91.1,71.0L99.4,71.0L102.3,70.0L94.1,70.0ZM107.7,71.0L116.0,71.0L118.7,70.0L110.5,70.0ZM124.3,71.0L132.6,71.0L135.0,70.0L126.9,70.0ZM140.9,71.0L149.2,71.0L151.4,70.1L143.2,70.1ZM157.5,71.1L165.9,71.1L167.8,70.1L159.6,70.1ZM174.2,71.1L182.5,71.1L184.2,70.1L176.0,70.1ZM190.8,71.1L199.2,71.1L200.6,70.1L192.4,70.1ZM207.5,71.1L215.8,71.1L217.0,70.1L208.8,70.1ZM224.2,71.1L232.5,71.1L233.4,70.1L225.2,70.1ZM240.8,71.1L249.2,71.1L249.8,70.1L241.6,70.1ZM257.5,71.1L265.9,71.1L266.3,70.2L258.0,70.1ZM274.2,71.2L282.5,71.2L282.7,70.2L274.5,70.2ZM290.9,71.2L299.3,71.2L299.1,70.2L290.9,70.2ZM307.6,71.2L316.0,71.2L315.6,70.2L307.4,70.2ZM324.3,71.2L332.7,71.2L332.1,70.2L323.8,70.2ZM341.0,71.2L349.4,71.2L348.5,70.2L340.3,70.2ZM357.8,71.2L366.2,71.2L365.0,70.2L356.8,70.2ZM374.5,71.2L382.9,71.2L381.5,70.3L373.3,70.2ZM391.3,71.3L399.7,71.3L398.0,70.3L389.7,70.3ZM408.0,71.3L416.4,71.3L414.5,70.3L406.2,70.3ZM424.8,71.3L433.2,71.3L431.0,70.3L422.8,70.3ZM441.6,71.3L450.0,71.3L447.5,70.3L439.3,70.3ZM458.4,71.3L466.8,71.3L464.1,70.3L455.8,70.3ZM475.2,71.3L483.6,71.3L480.6,70.3L472.3,70.3ZM492.0,71.3L500.4,71.3L497.2,70.4L488.9,70.3ZM508.8,71.4L517.2,71.4L513.7,70.4L505.4,70.4ZM525.6,71.4L534.0,71.4L530.3,70.4L522.0,70.4ZM542.4,71.4L550.8,71.4L546.8,70.4L538.6,70.4ZM559.3,71.4L567.7,71.4L563.4,70.4L555.1,70.4ZM576.1,71.4L584.5,71.4L580.0,70.4L571.7,70.4ZM-11.9,69.9L-3.8,69.9L0.7,69.0L-7.4,69.0ZM4.4,69.9L12.5,69.9L16.7,69.0L8.7,69.0ZM20.7,69.9L28.8,70.0L32.8,69.0L24.7,69.0ZM37.0,70.0L45.1,70.0L48.9,69.0L40.8,69.0ZM53.3,70.0L61.5,70.0L64.9,69.0L56.9,69.0ZM69.6,70.0L77.8,70.0L81.0,69.0L73.0,69.0ZM86.0,70.0L94.1,70.0L97.1,69.1L89.1,69.0ZM102.3,70.0L110.5,70.0L113.2,69.1L105.2,69.1ZM118.7,70.0L126.9,70.0L129.3,69.1L121.3,69.1ZM135.0,70.0L143.2,70.1L145.5,69.1L137.4,69.1ZM151.4,70.1L159.6,70.1L161.6,69.1L153.5,69.1ZM167.8,70.1L176.0,70.1L177.7,69.1L169.7,69.1ZM184.2,70.1L192.4,70.1L193.9,69.1L185.8,69.1ZM200.6,70.1L208.8,70.1L210.0,69.1L202.0,69.1ZM217.0,70.1L225.2,70.1L226.2,69.2L218.1,69.2ZM233.4,70.1L241.6,70.1L242.4,69.2L234.3,69.2ZM249.8,70.1L258.0,70.1L258.5,69.2L250.5,69.2ZM266.3,70.2L274.5,70.2L274.7,69.2L266.6,69.2ZM282.7,70.2L290.9,70.2L290.9,69.2L282.8,69.2ZM299.1,70.2L307.4,70.2L307.1,69.2L299.0,69.2ZM315.6,70.2L323.8,70.2L323.3,69.2L315.2,69.2ZM332.1,70.2L340.3,70.2L339.6,69.3L331.4,69.3ZM348.5,70.2L356.8,70.2L355.8,69.3L347.7,69.3ZM365.0,70.2L373.3,70.2L372.0,69.3L363.9,69.3ZM381.5,70.3L389.7,70.3L388.3,69.3L380.1,69.3ZM398.0,70.3L406.2,70.3L404.5,69.3L396.4,69.3ZM414.5,70.3L422.8,70.3L420.8,69.3L412.6,69.3ZM431.0,70.3L439.3,70.3L437.0,69.3L428.9,69.3ZM447.5,70.3L455.8,70.3L453.3,69.4L445.2,69.3ZM464.1,70.3L472.3,70.3L469.6,69.4L461.5,69.4ZM480.6,70.3L488.9,70.3L485.9,69.4L477.7,69.4ZM497.2,70.4L505.4,70.4L502.2,69.4L494.0,69.4ZM513.7,70.4L522.0,70.4L518.5,69.4L510.3,69.4ZM530.3,70.4L538.6,70.4L534.8,69.4L526.7,69.4ZM546.8,70.4L555.1,70.4L551.1,69.4L543.0,69.4ZM563.4,70.4L571.7,70.4L567.5,69.4L559.3,69.4ZM580.0,70.4L588.3,70.4L583.8,69.5L575.6,69.5ZM0.7,69.0L8.7,69.0L12.9,68.1L5.0,68.1ZM16.7,69.0L24.7,69.0L28.7,68.1L20.8,68.1ZM32.8,69.0L40.8,69.0L44.5,68.1L36.6,68.1ZM48.9,69.0L56.9,69.0L60.4,68.1L52.5,68.1ZM64.9,69.0L73.0,69.0L76.2,68.1L68.3,68.1ZM81.0,69.0L89.1,69.0L92.1,68.1L84.1,68.1ZM97.1,69.1L105.2,69.1L107.9,68.1L100.0,68.1ZM113.2,69.1L121.3,69.1L123.8,68.1L115.9,68.1ZM129.3,69.1L137.4,69.1L139.7,68.2L131.8,68.2ZM145.5,69.1L153.5,69.1L155.6,68.2L147.6,68.2ZM161.6,69.1L169.7,69.1L171.5,68.2L163.5,68.2ZM177.7,69.1L185.8,69.1L187.4,68.2L179.4,68.2ZM193.9,69.1L202.0,69.1L203.3,68.2L195.3,68.2ZM210.0,69.1L218.1,69.2L219.2,68.2L211.2,68.2ZM226.2,69.2L234.3,69.2L235.1,68.2L227.2,68.2ZM242.4,69.2L250.5,69.2L251.1,68.3L243.1,68.2ZM258.5,69.2L266.6,69.2L267.0,68.3L259.0,68.3ZM274.7,69.2L282.8,69.2L283.0,68.3L275.0,68.3ZM290.9,69.2L299.0,69.2L298.9,68.3L290.9,68.3ZM307.1,69.2L315.2,69.2L314.9,68.3L306.9,68.3ZM323.3,69.2L331.4,69.3L330.9,68.3L322.9,68.3ZM339.6,69.3L347.7,69.3L346.8,68.3L338.8,68.3ZM355.8,69.3L363.9,69.3L362.8,68.3L354.8,68.3ZM372.0,69.3L380.1,69.3L378.8,68.4L370.8,68.4ZM388.3,69.3L396.4,69.3L394.8,68.4L386.8,68.4ZM404.5,69.3L412.6,69.3L410.8,68.4L402.8,68.4ZM420.8,69.3L428.9,69.3L426.9,68.4L418.9,68.4ZM437.0,69.3L445.2,69.3L442.9,68.4L434.9,68.4ZM453.3,69.4L461.5,69.4L458.9,68.4L450.9,68.4ZM469.6,69.4L477.7,69.4L475.0,68.4L466.9,68.4ZM485.9,69.4L494.0,69.4L491.0,68.4L483.0,68.4ZM502.2,69.4L510.3,69.4L507.1,68.5L499.1,68.5ZM518.5,69.4L526.7,69.4L523.2,68.5L515.1,68.5ZM534.8,69.4L543.0,69.4L539.2,68.5L531.2,68.5ZM551.1,69.4L559.3,69.4L555.3,68.5L547.3,68.5ZM567.5,69.4L575.6,69.5L571.4,68.5L563.4,68.5ZM-2.9,68.0L5.0,68.1L9.2,67.2L1.4,67.1ZM12.9,68.1L20.8,68.1L24.7,67.2L16.9,67.2ZM28.7,68.1L36.6,68.1L40.3,67.2L32.5,67.2ZM44.5,68.1L52.5,68.1L55.9,67.2L48.1,67.2ZM60.4,68.1L68.3,68.1L71.6,67.2L63.8,67.2ZM76.2,68.1L84.1,68.1L87.2,67.2L79.4,67.2ZM92.1,68.1L100.0,68.1L102.8,67.2L95.0,67.2ZM107.9,68.1L115.9,68.1L118.4,67.2L110.6,67.2ZM123.8,68.1L131.8,68.2L134.1,67.3L126.3,67.2ZM139.7,68.2L147.6,68.2L149.7,67.3L141.9,67.3ZM155.6,68.2L163.5,68.2L165.4,67.3L157.6,67.3ZM171.5,68.2L179.4,68.2L181.1,67.3L173.2,67.3ZM187.4,68.2L195.3,68.2L196.7,67.3L188.9,67.3ZM203.3,68.2L211.2,68.2L212.4,67.3L204.6,67.3ZM219.2,68.2L227.2,68.2L228.1,67.3L220.3,67.3ZM235.1,68.2L243.1,68.2L243.8,67.3L236.0,67.3ZM251.1,68.3L259.0,68.3L259.5,67.4L251.7,67.4ZM267.0,68.3L275.0,68.3L275.2,67.4L267.4,67.4ZM283.0,68.3L290.9,68.3L290.9,67.4L283.1,67.4ZM298.9,68.3L306.9,68.3L306.7,67.4L298.8,67.4ZM314.9,68.3L322.9,68.3L322.4,67.4L314.5,67.4ZM330.9,68.3L338.8,68.3L338.2,67.4L330.3,67.4ZM346.8,68.3L354.8,68.3L353.9,67.4L346.0,67.4ZM362.8,68.3L370.8,68.4L369.7,67.4L361.8,67.4ZM378.8,68.4L386.8,68.4L385.4,67.5L377.5,67.5ZM394.8,68.4L402.8,68.4L401.2,67.5L393.3,67.5ZM410.8,68.4L418.9,68.4L417.0,67.5L409.1,67.5ZM426.9,68.4L434.9,68.4L432.8,67.5L424.9,67.5ZM442.9,68.4L450.9,68.4L448.6,67.5L440.7,67.5ZM458.9,68.4L466.9,68.4L464.4,67.5L456.5,67.5ZM475.0,68.4L483.0,68.4L480.2,67.5L472.3,67.5ZM491.0,68.4L499.1,68.5L496.0,67.5L488.1,67.5ZM507.1,68.5L515.1,68.5L511.8,67.6L503.9,67.6ZM523.2,68.5L531.2,68.5L527.7,67.6L519.7,67.6ZM539.2,68.5L547.3,68.5L543.5,67.6L535.6,67.6ZM555.3,68.5L563.4,68.5L559.4,67.6L551.4,67.6ZM571.4,68.5L579.5,68.5L575.2,67.6L567.3,67.6Z" fill="#c8c8c8"/>
<path d="M-6.4,67.1L1.4,67.1L5.5,66.3L-2.1,66.3ZM9.2,67.2L16.9,67.2L20.9,66.3L13.2,66.3ZM24.7,67.2L32.5,67.2L36.3,66.3L28.6,66.3ZM40.3,67.2L48.1,67.2L51.7,66.3L44.0,66.3ZM55.9,67.2L63.8,67.2L67.0,66.3L59.3,66.3ZM71.6,67.2L79.4,67.2L82.4,66.3L74.7,66.3ZM87.2,67.2L95.0,67.2L97.8,66.4L90.1,66.3ZM102.8,67.2L110.6,67.2L113.2,66.4L105.5,66.4ZM118.4,67.2L126.3,67.2L128.7,66.4L120.9,66.4ZM134.1,67.3L141.9,67.3L144.1,66.4L136.4,66.4ZM149.7,67.3L157.6,67.3L159.5,66.4L151.8,66.4ZM165.4,67.3L173.2,67.3L174.9,66.4L167.2,66.4ZM181.1,67.3L188.9,67.3L190.4,66.4L182.7,66.4ZM196.7,67.3L204.6,67.3L205.8,66.4L198.1,66.4ZM212.4,67.3L220.3,67.3L221.3,66.4L213.6,66.4ZM228.1,67.3L236.0,67.3L236.8,66.5L229.0,66.5ZM243.8,67.3L251.7,67.4L252.2,66.5L244.5,66.5ZM259.5,67.4L267.4,67.4L267.7,66.5L260.0,66.5ZM275.2,67.4L283.1,67.4L283.2,66.5L275.5,66.5ZM290.9,67.4L298.8,67.4L298.7,66.5L291.0,66.5ZM306.7,67.4L314.5,67.4L314.2,66.5L306.5,66.5ZM322.4,67.4L330.3,67.4L329.7,66.5L322.0,66.5ZM338.2,67.4L346.0,67.4L345.2,66.5L337.5,66.5ZM353.9,67.4L361.8,67.4L360.8,66.6L353.0,66.6ZM369.7,67.4L377.5,67.5L376.3,66.6L368.5,66.6ZM385.4,67.5L393.3,67.5L391.8,66.6L384.1,66.6ZM401.2,67.5L409.1,67.5L407.4,66.6L399.6,66.6ZM417.0,67.5L424.9,67.5L422.9,66.6L415.2,66.6ZM432.8,67.5L440.7,67.5L438.5,66.6L430.7,66.6ZM448.6,67.5L456.5,67.5L454.1,66.6L446.3,66.6ZM464.4,67.5L472.3,67.5L469.7,66.6L461.9,66.6ZM480.2,67.5L488.1,67.5L485.2,66.7L477.5,66.7ZM496.0,67.5L503.9,67.6L500.8,66.7L493.0,66.7ZM511.8,67.6L519.7,67.6L516.4,66.7L508.6,66.7ZM527.7,67.6L535.6,67.6L532.0,66.7L524.2,66.7ZM543.5,67.6L551.4,67.6L547.7,66.7L539.9,66.7ZM559.4,67.6L567.3,67.6L563.3,66.7L555.5,66.7ZM575.2,67.6L583.1,67.6L578.9,66.7L571.1,66.7ZM-9.8,66.3L-2.1,66.3L2.0,65.4L-5.5,65.4ZM5.5,66.3L13.2,66.3L17.2,65.4L9.6,65.4ZM20.9,66.3L28.6,66.3L32.3,65.4L24.7,65.4ZM36.3,66.3L44.0,66.3L47.5,65.5L39.9,65.5ZM51.7,66.3L59.3,66.3L62.6,65.5L55.1,65.5ZM67.0,66.3L74.7,66.3L77.8,65.5L70.2,65.5ZM82.4,66.3L90.1,66.3L93.0,65.5L85.4,65.5ZM97.8,66.4L105.5,66.4L108.2,65.5L100.6,65.5ZM113.2,66.4L120.9,66.4L123.4,65.5L115.8,65.5ZM128.7,66.4L136.4,66.4L138.6,65.5L131.0,65.5ZM144.1,66.4L151.8,66.4L153.8,65.5L146.2,65.5ZM159.5,66.4L167.2,66.4L169.0,65.6L161.4,65.6ZM174.9,66.4L182.7,66.4L184.2,65.6L176.6,65.6ZM190.4,66.4L198.1,66.4L199.4,65.6L191.8,65.6ZM205.8,66.4L213.6,66.4L214.7,65.6L207.1,65.6ZM221.3,66.4L229.0,66.5L229.9,65.6L222.3,65.6ZM236.8,66.5L244.5,66.5L245.2,65.6L237.6,65.6ZM252.2,66.5L260.0,66.5L260.4,65.6L252.8,65.6ZM267.7,66.5L275.5,66.5L275.7,65.6L268.1,65.6ZM283.2,66.5L291.0,66.5L291.0,65.7L283.3,65.6ZM298.7,66.5L306.5,66.5L306.3,65.7L298.6,65.7ZM314.2,66.5L322.0,66.5L321.5,65.7L313.9,65.7ZM329.7,66.5L337.5,66.5L336.8,65.7L329.2,65.7ZM345.2,66.5L353.0,66.6L352.1,65.7L344.5,65.7ZM360.8,66.6L368.5,66.6L367.4,65.7L359.8,65.7ZM376.3,66.6L384.1,66.6L382.8,65.7L375.1,65.7ZM391.8,66.6L399.6,66.6L398.1,65.7L390.4,65.7ZM407.4,66.6L415.2,66.6L413.4,65.7L405.7,65.7ZM422.9,66.6L430.7,66.6L428.7,65.8L421.1,65.8ZM438.5,66.6L446.3,66.6L444.1,65.8L436.4,65.8ZM454.1,66.6L461.9,66.6L459.4,65.8L451.8,65.8ZM469.7,66.6L477.5,66.7L474.8,65.8L467.1,65.8ZM485.2,66.7L493.0,66.7L490.2,65.8L482.5,65.8ZM500.8,66.7L508.6,66.7L505.5,65.8L497.9,65.8ZM516.4,66.7L524.2,66.7L520.9,65.8L513.2,65.8ZM532.0,66.7L539.9,66.7L536.3,65.8L528.6,65.8ZM547.7,66.7L555.5,66.7L551.7,65.9L544.0,65.8ZM563.3,66.7L571.1,66.7L567.1,65.9L559.4,65.9ZM578.9,66.7L586.7,66.7L582.5,65.9L574.8,65.9ZM-13.1,65.4L-5.5,65.4L-1.4,64.6L-8.8,64.6ZM2.0,65.4L9.6,65.4L13.5,64.6L6.1,64.6ZM17.2,65.4L24.7,65.4L28.5,64.6L21.0,64.6ZM32.3,65.4L39.9,65.5L43.4,64.6L35.9,64.6ZM47.5,65.5L55.1,65.5L58.4,64.6L50.9,64.6ZM62.6,65.5L70.2,65.5L73.3,64.7L65.8,64.7ZM77.8,65.5L85.4,65.5L88.3,64.7L80.8,64.7ZM93.0,65.5L100.6,65.5L103.3,64.7L95.8,64.7ZM108.2,65.5L115.8,65.5L118.2,64.7L110.8,64.7ZM123.4,65.5L131.0,65.5L133.2,64.7L125.7,64.7ZM138.6,65.5L146.2,65.5L148.2,64.7L140.7,64.7ZM153.8,65.5L161.4,65.6L163.2,64.7L155.7,64.7ZM169.0,65.6L176.6,65.6L178.2,64.7L170.7,64.7ZM184.2,65.6L191.8,65.6L193.2,64.7L185.7,64.7ZM199.4,65.6L207.1,65.6L208.3,64.8L200.7,64.8ZM214.7,65.6L222.3,65.6L223.3,64.8L215.8,64.8ZM229.9,65.6L237.6,65.6L238.3,64.8L230.8,64.8ZM245.2,65.6L252.8,65.6L253.4,64.8L245.8,64.8ZM260.4,65.6L268.1,65.6L268.4,64.8L260.9,64.8ZM275.7,65.6L283.3,65.6L283.5,64.8L275.9,64.8ZM291.0,65.7L298.6,65.7L298.5,64.8L291.0,64.8ZM306.3,65.7L313.9,65.7L313.6,64.8L306.0,64.8ZM321.5,65.7L329.2,65.7L328.7,64.9L321.1,64.8ZM336.8,65.7L344.5,65.7L343.7,64.9L336.2,64.9ZM352.1,65.7L359.8,65.7L358.8,64.9L351.3,64.9ZM367.4,65.7L375.1,65.7L373.9,64.9L366.4,64.9ZM382.8,65.7L390.4,65.7L389.0,64.9L381.5,64.9ZM398.1,65.7L405.7,65.7L404.1,64.9L396.6,64.9ZM413.4,65.7L421.1,65.8L419.3,64.9L411.7,64.9ZM428.7,65.8L436.4,65.8L434.4,64.9L426.8,64.9ZM444.1,65.8L451.8,65.8L449.5,64.9L441.9,64.9ZM459.4,65.8L467.1,65.8L464.7,65.0L457.1,64.9ZM474.8,65.8L482.5,65.8L479.8,65.0L472.2,65.0ZM490.2,65.8L497.9,65.8L494.9,65.0L487.4,65.0ZM505.5,65.8L513.2,65.8L510.1,65.0L502.5,65.0ZM520.9,65.8L528.6,65.8L525.3,65.0L517.7,65.0ZM536.3,65.8L544.0,65.8L540.4,65.0L532.9,65.0ZM551.7,65.9L559.4,65.9L555.6,65.0L548.0,65.0ZM567.1,65.9L574.8,65.9L570.8,65.0L563.2,65.0ZM-1.4,64.6L6.1,64.6L10.0,63.8L2.7,63.8ZM13.5,64.6L21.0,64.6L24.7,63.8L17.4,63.8ZM28.5,64.6L35.9,64.6L39.5,63.8L32.1,63.8ZM43.4,64.6L50.9,64.6L54.2,63.8L46.8,63.8ZM58.4,64.6L65.8,64.7L69.0,63.8L61.6,63.8ZM73.3,64.7L80.8,64.7L83.7,63.9L76.3,63.9ZM88.3,64.7L95.8,64.7L98.5,63.9L91.1,63.9ZM103.3,64.7L110.8,64.7L113.3,63.9L105.9,63.9ZM118.2,64.7L125.7,64.7L128.0,63.9L120.6,63.9ZM133.2,64.7L140.7,64.7L142.8,63.9L135.4,63.9ZM148.2,64.7L155.7,64.7L157.6,63.9L150.2,63.9ZM163.2,64.7L170.7,64.7L172.4,63.9L165.0,63.9ZM178.2,64.7L185.7,64.7L187.2,63.9L179.8,63.9ZM193.2,64.7L200.7,64.8L202.0,63.9L194.6,63.9ZM208.3,64.8L215.8,64.8L216.8,64.0L209.4,64.0ZM223.3,64.8L230.8,64.8L231.6,64.0L224.2,64.0ZM238.3,64.8L245.8,64.8L246.5,64.0L239.1,64.0ZM253.4,64.8L260.9,64.8L261.3,64.0L253.9,64.0ZM268.4,64.8L275.9,64.8L276.1,64.0L268.7,64.0ZM283.5,64.8L291.0,64.8L291.0,64.0L283.6,64.0ZM298.5,64.8L306.0,64.8L305.8,64.0L298.4,64.0ZM313.6,64.8L321.1,64.8L320.7,64.0L313.3,64.0ZM328.7,64.9L336.2,64.9L335.6,64.1L328.1,64.0ZM343.7,64.9L351.3,64.9L350.5,64.1L343.0,64.1ZM358.8,64.9L366.4,64.9L365.3,64.1L357.9,64.1ZM373.9,64.9L381.5,64.9L380.2,64.1L372.8,64.1ZM389.0,64.9L396.6,64.9L395.1,64.1L387.7,64.1ZM404.1,64.9L411.7,64.9L410.0,64.1L402.6,64.1ZM419.3,64.9L426.8,64.9L424.9,64.1L417.5,64.1ZM434.4,64.9L441.9,64.9L439.9,64.1L432.4,64.1ZM449.5,64.9L457.1,64.9L454.8,64.1L447.3,64.1ZM464.7,65.0L472.2,65.0L469.7,64.2L462.2,64.1ZM479.8,65.0L487.4,65.0L484.7,64.2L477.2,64.2ZM494.9,65.0L502.5,65.0L499.6,64.2L492.1,64.2ZM510.1,65.0L517.7,65.0L514.6,64.2L507.1,64.2ZM525.3,65.0L532.9,65.0L529.5,64.2L522.0,64.2ZM540.4,65.0L548.0,65.0L544.5,64.2L537.0,64.2ZM555.6,65.0L563.2,65.0L559.4,64.2L552.0,64.2ZM570.8,65.0L578.4,65.0L574.4,64.2L566.9,64.2ZM-4.7,63.8L2.7,63.8L6.6,63.0L-0.7,63.0ZM10.0,63.8L17.4,63.8L21.1,63.0L13.8,63.0ZM24.7,63.8L32.1,63.8L35.6,63.0L28.4,63.0ZM39.5,63.8L46.8,63.8L50.2,63.1L42.9,63.0ZM54.2,63.8L61.6,63.8L64.7,63.1L57.5,63.1ZM69.0,63.8L76.3,63.9L79.3,63.1L72.0,63.1ZM83.7,63.9L91.1,63.9L93.8,63.1L86.6,63.1ZM98.5,63.9L105.9,63.9L108.4,63.1L101.1,63.1ZM113.3,63.9L120.6,63.9L123.0,63.1L115.7,63.1ZM128.0,63.9L135.4,63.9L137.5,63.1L130.3,63.1ZM142.8,63.9L150.2,63.9L152.1,63.1L144.8,63.1ZM157.6,63.9L165.0,63.9L166.7,63.1L159.4,63.1ZM172.4,63.9L179.8,63.9L181.3,63.2L174.0,63.1ZM187.2,63.9L194.6,63.9L195.9,63.2L188.6,63.2ZM202.0,63.9L209.4,64.0L210.5,63.2L203.2,63.2ZM216.8,64.0L224.2,64.0L225.1,63.2L217.8,63.2ZM231.6,64.0L239.1,64.0L239.8,63.2L232.5,63.2ZM246.5,64.0L253.9,64.0L254.4,63.2L247.1,63.2ZM261.3,64.0L268.7,64.0L269.0,63.2L261.7,63.2ZM276.1,64.0L283.6,64.0L283.7,63.2L276.4,63.2ZM291.0,64.0L298.4,64.0L298.3,63.2L291.0,63.2ZM305.8,64.0L313.3,64.0L313.0,63.2L305.7,63.2ZM320.7,64.0L328.1,64.0L327.6,63.3L320.3,63.3ZM335.6,64.1L343.0,64.1L342.3,63.3L335.0,63.3ZM350.5,64.1L357.9,64.1L357.0,63.3L349.7,63.3ZM365.3,64.1L372.8,64.1L371.7,63.3L364.3,63.3ZM380.2,64.1L387.7,64.1L386.4,63.3L379.0,63.3ZM395.1,64.1L402.6,64.1L401.1,63.3L393.7,63.3ZM410.0,64.1L417.5,64.1L415.8,63.3L408.4,63.3ZM424.9,64.1L432.4,64.1L430.5,63.3L423.1,63.3ZM439.9,64.1L447.3,64.1L445.2,63.3L437.8,63.3ZM454.8,64.1L462.2,64.1L459.9,63.4L452.6,63.4ZM469.7,64.2L477.2,64.2L474.6,63.4L467.3,63.4ZM484.7,64.2L492.1,64.2L489.4,63.4L482.0,63.4ZM499.6,64.2L507.1,64.2L504.1,63.4L496.8,63.4ZM514.6,64.2L522.0,64.2L518.9,63.4L511.5,63.4ZM529.5,64.2L537.0,64.2L533.6,63.4L526.2,63.4ZM544.5,64.2L552.0,64.2L548.4,63.4L541.0,63.4ZM559.4,64.2L566.9,64.2L563.2,63.4L555.8,63.4ZM574.4,64.2L581.9,64.2L577.9,63.4L570.5,63.4ZM-7.9,63.0L-0.7,63.0L3.3,62.3L-3.9,62.3ZM6.6,63.0L13.8,63.0L17.6,62.3L10.4,62.3ZM21.1,63.0L28.4,63.0L31.9,62.3L24.7,62.3ZM35.6,63.0L42.9,63.0L46.3,62.3L39.1,62.3ZM50.2,63.1L57.5,63.1L60.6,62.3L53.4,62.3ZM64.7,63.1L72.0,63.1L75.0,62.3L67.8,62.3ZM79.3,63.1L86.6,63.1L89.3,62.3L82.1,62.3ZM93.8,63.1L101.1,63.1L103.7,62.3L96.5,62.3ZM108.4,63.1L115.7,63.1L118.0,62.3L110.9,62.3ZM123.0,63.1L130.3,63.1L132.4,62.4L125.2,62.3ZM137.5,63.1L144.8,63.1L146.8,62.4L139.6,62.4ZM152.1,63.1L159.4,63.1L161.2,62.4L154.0,62.4ZM166.7,63.1L174.0,63.1L175.6,62.4L168.4,62.4ZM181.3,63.2L188.6,63.2L190.0,62.4L182.8,62.4ZM195.9,63.2L203.2,63.2L204.4,62.4L197.2,62.4ZM210.5,63.2L217.8,63.2L218.8,62.4L211.6,62.4ZM225.1,63.2L232.5,63.2L233.3,62.4L226.0,62.4ZM239.8,63.2L247.1,63.2L247.7,62.4L240.5,62.4ZM254.4,63.2L261.7,63.2L262.1,62.4L254.9,62.4ZM269.0,63.2L276.4,63.2L276.6,62.5L269.3,62.5ZM283.7,63.2L291.0,63.2L291.0,62.5L283.8,62.5ZM298.3,63.2L305.7,63.2L305.5,62.5L298.2,62.5ZM313.0,63.2L320.3,63.3L319.9,62.5L312.7,62.5ZM327.6,63.3L335.0,63.3L334.4,62.5L327.2,62.5ZM342.3,63.3L349.7,63.3L348.9,62.5L341.6,62.5ZM357.0,63.3L364.3,63.3L363.4,62.5L356.1,62.5ZM371.7,63.3L379.0,63.3L377.8,62.5L370.6,62.5ZM386.4,63.3L393.7,63.3L392.3,62.5L385.1,62.5ZM401.1,63.3L408.4,63.3L406.8,62.6L399.6,62.5ZM415.8,63.3L423.1,63.3L421.3,62.6L414.1,62.6ZM430.5,63.3L437.8,63.3L435.9,62.6L428.6,62.6ZM445.2,63.3L452.6,63.4L450.4,62.6L443.1,62.6ZM459.9,63.4L467.3,63.4L464.9,62.6L457.6,62.6ZM474.6,63.4L482.0,63.4L479.4,62.6L472.2,62.6ZM489.4,63.4L496.8,63.4L494.0,62.6L486.7,62.6ZM504.1,63.4L511.5,63.4L508.5,62.6L501.3,62.6ZM518.9,63.4L526.2,63.4L523.1,62.6L515.8,62.6ZM533.6,63.4L541.0,63.4L537.6,62.7L530.4,62.6ZM548.4,63.4L555.8,63.4L552.2,62.7L544.9,62.7ZM563.2,63.4L570.5,63.4L566.8,62.7L559.5,62.7ZM577.9,63.4L585.3,63.5L581.4,62.7L574.1,62.7ZM-11.1,62.2L-3.9,62.3L0.0,61.5L-7.1,61.5ZM3.3,62.3L10.4,62.3L14.1,61.5L7.1,61.5ZM17.6,62.3L24.7,62.3L28.3,61.5L21.2,61.5ZM31.9,62.3L39.1,62.3L42.4,61.5L35.4,61.5ZM46.3,62.3L53.4,62.3L56.6,61.6L49.5,61.6ZM60.6,62.3L67.8,62.3L70.7,61.6L63.7,61.6ZM75.0,62.3L82.1,62.3L84.9,61.6L77.8,61.6ZM89.3,62.3L96.5,62.3L99.1,61.6L92.0,61.6ZM103.7,62.3L110.9,62.3L113.3,61.6L106.2,61.6ZM118.0,62.3L125.2,62.3L127.4,61.6L120.4,61.6ZM132.4,62.4L139.6,62.4L141.6,61.6L134.5,61.6ZM146.8,62.4L154.0,62.4L155.8,61.6L148.7,61.6ZM161.2,62.4L168.4,62.4L170.0,61.6L162.9,61.6ZM175.6,62.4L182.8,62.4L184.2,61.7L177.1,61.6ZM190.0,62.4L197.2,62.4L198.5,61.7L191.4,61.7ZM204.4,62.4L211.6,62.4L212.7,61.7L205.6,61.7ZM218.8,62.4L226.0,62.4L226.9,61.7L219.8,61.7ZM233.3,62.4L240.5,62.4L241.2,61.7L234.0,61.7ZM247.7,62.4L254.9,62.4L255.4,61.7L248.3,61.7ZM262.1,62.4L269.3,62.5L269.6,61.7L262.5,61.7ZM276.6,62.5L283.8,62.5L283.9,61.7L276.8,61.7ZM291.0,62.5L298.2,62.5L298.2,61.7L291.0,61.7ZM305.5,62.5L312.7,62.5L312.4,61.7L305.3,61.7ZM319.9,62.5L327.2,62.5L326.7,61.8L319.6,61.7ZM334.4,62.5L341.6,62.5L341.0,61.8L333.8,61.8ZM348.9,62.5L356.1,62.5L355.3,61.8L348.1,61.8ZM363.4,62.5L370.6,62.5L369.5,61.8L362.4,61.8ZM377.8,62.5L385.1,62.5L383.8,61.8L376.7,61.8ZM392.3,62.5L399.6,62.5L398.2,61.8L391.0,61.8ZM406.8,62.6L414.1,62.6L412.5,61.8L405.3,61.8ZM421.3,62.6L428.6,62.6L426.8,61.8L419.6,61.8ZM435.9,62.6L443.1,62.6L441.1,61.8L433.9,61.8ZM450.4,62.6L457.6,62.6L455.4,61.8L448.3,61.8ZM464.9,62.6L472.2,62.6L469.8,61.9L462.6,61.9ZM479.4,62.6L486.7,62.6L484.1,61.9L476.9,61.9ZM494.0,62.6L501.3,62.6L498.5,61.9L491.3,61.9ZM508.5,62.6L515.8,62.6L512.8,61.9L505.6,61.9ZM523.1,62.6L530.4,62.6L527.2,61.9L520.0,61.9ZM537.6,62.7L544.9,62.7L541.5,61.9L534.4,61.9ZM552.2,62.7L559.5,62.7L555.9,61.9L548.7,61.9ZM566.8,62.7L574.1,62.7L570.3,61.9L563.1,61.9Z" fill="#c9c9c9"/>
<path d="M0.0,61.5L7.1,61.5L10.8,60.8L3.8,60.8ZM14.1,61.5L21.2,61.5L24.7,60.8L17.8,60.8ZM28.3,61.5L35.4,61.5L38.7,60.8L31.7,60.8ZM42.4,61.5L49.5,61.6L52.7,60.8L45.7,60.8ZM56.6,61.6L63.7,61.6L66.6,60.8L59.7,60.8ZM70.7,61.6L77.8,61.6L80.6,60.9L73.6,60.9ZM84.9,61.6L92.0,61.6L94.6,60.9L87.6,60.9ZM99.1,61.6L106.2,61.6L108.6,60.9L101.6,60.9ZM113.3,61.6L120.4,61.6L122.6,60.9L115.6,60.9ZM127.4,61.6L134.5,61.6L136.6,60.9L129.6,60.9ZM141.6,61.6L148.7,61.6L150.6,60.9L143.6,60.9ZM155.8,61.6L162.9,61.6L164.6,60.9L157.6,60.9ZM170.0,61.6L177.1,61.6L178.6,60.9L171.6,60.9ZM184.2,61.7L191.4,61.7L192.7,60.9L185.7,60.9ZM198.5,61.7L205.6,61.7L206.7,60.9L199.7,60.9ZM212.7,61.7L219.8,61.7L220.7,61.0L213.7,61.0ZM226.9,61.7L234.0,61.7L234.8,61.0L227.8,61.0ZM241.2,61.7L248.3,61.7L248.8,61.0L241.8,61.0ZM255.4,61.7L262.5,61.7L262.9,61.0L255.9,61.0ZM269.6,61.7L276.8,61.7L277.0,61.0L269.9,61.0ZM283.9,61.7L291.0,61.7L291.0,61.0L284.0,61.0ZM298.2,61.7L305.3,61.7L305.1,61.0L298.1,61.0ZM312.4,61.7L319.6,61.7L319.2,61.0L312.1,61.0ZM326.7,61.8L333.8,61.8L333.3,61.0L326.2,61.0ZM341.0,61.8L348.1,61.8L347.4,61.0L340.3,61.0ZM355.3,61.8L362.4,61.8L361.5,61.1L354.4,61.1ZM369.5,61.8L376.7,61.8L375.6,61.1L368.5,61.1ZM383.8,61.8L391.0,61.8L389.7,61.1L382.6,61.1ZM398.2,61.8L405.3,61.8L403.8,61.1L396.8,61.1ZM412.5,61.8L419.6,61.8L417.9,61.1L410.9,61.1ZM426.8,61.8L433.9,61.8L432.1,61.1L425.0,61.1ZM441.1,61.8L448.3,61.8L446.2,61.1L439.1,61.1ZM455.4,61.8L462.6,61.9L460.4,61.1L453.3,61.1ZM469.8,61.9L476.9,61.9L474.5,61.1L467.4,61.1ZM484.1,61.9L491.3,61.9L488.7,61.1L481.6,61.1ZM498.5,61.9L505.6,61.9L502.8,61.2L495.7,61.2ZM512.8,61.9L520.0,61.9L517.0,61.2L509.9,61.2ZM527.2,61.9L534.4,61.9L531.2,61.2L524.1,61.2ZM541.5,61.9L548.7,61.9L545.3,61.2L538.2,61.2ZM555.9,61.9L563.1,61.9L559.5,61.2L552.4,61.2ZM570.3,61.9L577.5,61.9L573.7,61.2L566.6,61.2ZM-3.2,60.8L3.8,60.8L7.5,60.1L0.6,60.1ZM10.8,60.8L17.8,60.8L21.3,60.1L14.4,60.1ZM24.7,60.8L31.7,60.8L35.1,60.1L28.2,60.1ZM38.7,60.8L45.7,60.8L48.9,60.1L42.0,60.1ZM52.7,60.8L59.7,60.8L62.7,60.1L55.8,60.1ZM66.6,60.8L73.6,60.9L76.4,60.2L69.6,60.1ZM80.6,60.9L87.6,60.9L90.3,60.2L83.3,60.2ZM94.6,60.9L101.6,60.9L104.1,60.2L97.2,60.2ZM108.6,60.9L115.6,60.9L117.9,60.2L111.0,60.2ZM122.6,60.9L129.6,60.9L131.7,60.2L124.8,60.2ZM136.6,60.9L143.6,60.9L145.5,60.2L138.6,60.2ZM150.6,60.9L157.6,60.9L159.3,60.2L152.4,60.2ZM164.6,60.9L171.6,60.9L173.2,60.2L166.3,60.2ZM178.6,60.9L185.7,60.9L187.0,60.2L180.1,60.2ZM192.7,60.9L199.7,60.9L200.9,60.2L194.0,60.2ZM206.7,60.9L213.7,61.0L214.7,60.2L207.8,60.2ZM220.7,61.0L227.8,61.0L228.6,60.3L221.7,60.3ZM234.8,61.0L241.8,61.0L242.5,60.3L235.5,60.3ZM248.8,61.0L255.9,61.0L256.3,60.3L249.4,60.3ZM262.9,61.0L269.9,61.0L270.2,60.3L263.3,60.3ZM277.0,61.0L284.0,61.0L284.1,60.3L277.2,60.3ZM291.0,61.0L298.1,61.0L298.0,60.3L291.0,60.3ZM305.1,61.0L312.1,61.0L311.9,60.3L304.9,60.3ZM319.2,61.0L326.2,61.0L325.8,60.3L318.8,60.3ZM333.3,61.0L340.3,61.0L339.7,60.3L332.7,60.3ZM347.4,61.0L354.4,61.1L353.6,60.3L346.7,60.3ZM361.5,61.1L368.5,61.1L367.5,60.4L360.6,60.3ZM375.6,61.1L382.6,61.1L381.5,60.4L374.5,60.4ZM389.7,61.1L396.8,61.1L395.4,60.4L388.4,60.4ZM403.8,61.1L410.9,61.1L409.3,60.4L402.4,60.4ZM417.9,61.1L425.0,61.1L423.3,60.4L416.3,60.4ZM432.1,61.1L439.1,61.1L437.2,60.4L430.2,60.4ZM446.2,61.1L453.3,61.1L451.2,60.4L444.2,60.4ZM460.4,61.1L467.4,61.1L465.1,60.4L458.2,60.4ZM474.5,61.1L481.6,61.1L479.1,60.4L472.1,60.4ZM488.7,61.1L495.7,61.2L493.1,60.4L486.1,60.4ZM502.8,61.2L509.9,61.2L507.1,60.5L500.1,60.4ZM517.0,61.2L524.1,61.2L521.1,60.5L514.1,60.5ZM531.2,61.2L538.2,61.2L535.0,60.5L528.0,60.5ZM545.3,61.2L552.4,61.2L549.0,60.5L542.0,60.5ZM559.5,61.2L566.6,61.2L563.0,60.5L556.0,60.5ZM573.7,61.2L580.8,61.2L577.1,60.5L570.1,60.5ZM-6.2,60.1L0.6,60.1L4.4,59.4L-2.4,59.4ZM7.5,60.1L14.4,60.1L17.9,59.4L11.1,59.4ZM21.3,60.1L28.2,60.1L31.5,59.4L24.7,59.4ZM35.1,60.1L42.0,60.1L45.2,59.4L38.3,59.4ZM48.9,60.1L55.8,60.1L58.8,59.5L52.0,59.5ZM62.7,60.1L69.6,60.1L72.4,59.5L65.6,59.5ZM76.4,60.2L83.3,60.2L86.0,59.5L79.2,59.5ZM90.3,60.2L97.2,60.2L99.6,59.5L92.8,59.5ZM104.1,60.2L111.0,60.2L113.3,59.5L106.5,59.5ZM117.9,60.2L124.8,60.2L126.9,59.5L120.1,59.5ZM131.7,60.2L138.6,60.2L140.6,59.5L133.7,59.5ZM145.5,60.2L152.4,60.2L154.2,59.5L147.4,59.5ZM159.3,60.2L166.3,60.2L167.9,59.5L161.0,59.5ZM173.2,60.2L180.1,60.2L181.5,59.5L174.7,59.5ZM187.0,60.2L194.0,60.2L195.2,59.5L188.4,59.5ZM200.9,60.2L207.8,60.2L208.9,59.6L202.0,59.6ZM214.7,60.2L221.7,60.3L222.6,59.6L215.7,59.6ZM228.6,60.3L235.5,60.3L236.2,59.6L229.4,59.6ZM242.5,60.3L249.4,60.3L249.9,59.6L243.1,59.6ZM256.3,60.3L263.3,60.3L263.6,59.6L256.8,59.6ZM270.2,60.3L277.2,60.3L277.3,59.6L270.5,59.6ZM284.1,60.3L291.0,60.3L291.1,59.6L284.2,59.6ZM298.0,60.3L304.9,60.3L304.8,59.6L297.9,59.6ZM311.9,60.3L318.8,60.3L318.5,59.6L311.6,59.6ZM325.8,60.3L332.7,60.3L332.2,59.6L325.4,59.6ZM339.7,60.3L346.7,60.3L346.0,59.7L339.1,59.6ZM353.6,60.3L360.6,60.3L359.7,59.7L352.8,59.7ZM367.5,60.4L374.5,60.4L373.4,59.7L366.6,59.7ZM381.5,60.4L388.4,60.4L387.2,59.7L380.3,59.7ZM395.4,60.4L402.4,60.4L400.9,59.7L394.1,59.7ZM409.3,60.4L416.3,60.4L414.7,59.7L407.8,59.7ZM423.3,60.4L430.2,60.4L428.5,59.7L421.6,59.7ZM437.2,60.4L444.2,60.4L442.2,59.7L435.4,59.7ZM451.2,60.4L458.2,60.4L456.0,59.7L449.1,59.7ZM465.1,60.4L472.1,60.4L469.8,59.7L462.9,59.7ZM479.1,60.4L486.1,60.4L483.6,59.7L476.7,59.7ZM493.1,60.4L500.1,60.4L497.4,59.8L490.5,59.8ZM507.1,60.5L514.1,60.5L511.2,59.8L504.3,59.8ZM521.1,60.5L528.0,60.5L525.0,59.8L518.1,59.8ZM535.0,60.5L542.0,60.5L538.8,59.8L531.9,59.8ZM549.0,60.5L556.0,60.5L552.7,59.8L545.7,59.8ZM563.0,60.5L570.1,60.5L566.5,59.8L559.6,59.8ZM577.1,60.5L584.1,60.5L580.3,59.8L573.4,59.8ZM-9.2,59.4L-2.4,59.4L1.3,58.8L-5.5,58.7ZM4.4,59.4L11.1,59.4L14.7,58.8L8.0,58.8ZM17.9,59.4L24.7,59.4L28.1,58.8L21.4,58.8ZM31.5,59.4L38.3,59.4L41.5,58.8L34.8,58.8ZM45.2,59.4L52.0,59.5L55.0,58.8L48.3,58.8ZM58.8,59.5L65.6,59.5L68.4,58.8L61.7,58.8ZM72.4,59.5L79.2,59.5L81.9,58.8L75.1,58.8ZM86.0,59.5L92.8,59.5L95.3,58.8L88.6,58.8ZM99.6,59.5L106.5,59.5L108.8,58.8L102.1,58.8ZM113.3,59.5L120.1,59.5L122.3,58.8L115.5,58.8ZM126.9,59.5L133.7,59.5L135.7,58.8L129.0,58.8ZM140.6,59.5L147.4,59.5L149.2,58.9L142.5,58.8ZM154.2,59.5L161.0,59.5L162.7,58.9L155.9,58.9ZM167.9,59.5L174.7,59.5L176.2,58.9L169.4,58.9ZM181.5,59.5L188.4,59.5L189.7,58.9L182.9,58.9ZM195.2,59.5L202.0,59.6L203.2,58.9L196.4,58.9ZM208.9,59.6L215.7,59.6L216.7,58.9L209.9,58.9ZM222.6,59.6L229.4,59.6L230.2,58.9L223.4,58.9ZM236.2,59.6L243.1,59.6L243.7,58.9L236.9,58.9ZM249.9,59.6L256.8,59.6L257.2,58.9L250.5,58.9ZM263.6,59.6L270.5,59.6L270.8,58.9L264.0,58.9ZM277.3,59.6L284.2,59.6L284.3,58.9L277.5,58.9ZM291.1,59.6L297.9,59.6L297.8,59.0L291.1,58.9ZM304.8,59.6L311.6,59.6L311.4,59.0L304.6,59.0ZM318.5,59.6L325.4,59.6L324.9,59.0L318.2,59.0ZM332.2,59.6L339.1,59.6L338.5,59.0L331.7,59.0ZM346.0,59.7L352.8,59.7L352.0,59.0L345.3,59.0ZM359.7,59.7L366.6,59.7L365.6,59.0L358.8,59.0ZM373.4,59.7L380.3,59.7L379.2,59.0L372.4,59.0ZM387.2,59.7L394.1,59.7L392.8,59.0L386.0,59.0ZM400.9,59.7L407.8,59.7L406.4,59.0L399.6,59.0ZM414.7,59.7L421.6,59.7L419.9,59.0L413.1,59.0ZM428.5,59.7L435.4,59.7L433.5,59.0L426.7,59.0ZM442.2,59.7L449.1,59.7L447.1,59.1L440.3,59.0ZM456.0,59.7L462.9,59.7L460.8,59.1L453.9,59.1ZM469.8,59.7L476.7,59.7L474.4,59.1L467.6,59.1ZM483.6,59.7L490.5,59.8L488.0,59.1L481.2,59.1ZM497.4,59.8L504.3,59.8L501.6,59.1L494.8,59.1ZM511.2,59.8L518.1,59.8L515.2,59.1L508.4,59.1ZM525.0,59.8L531.9,59.8L528.9,59.1L522.1,59.1ZM538.8,59.8L545.7,59.8L542.5,59.1L535.7,59.1ZM552.7,59.8L559.6,59.8L556.2,59.1L549.3,59.1ZM566.5,59.8L573.4,59.8L569.8,59.1L563.0,59.1ZM-12.2,58.7L-5.5,58.7L-1.8,58.1L-8.4,58.1ZM1.3,58.8L8.0,58.8L11.5,58.1L4.9,58.1ZM14.7,58.8L21.4,58.8L24.7,58.1L18.1,58.1ZM28.1,58.8L34.8,58.8L38.0,58.1L31.4,58.1ZM41.5,58.8L48.3,58.8L51.3,58.1L44.6,58.1ZM55.0,58.8L61.7,58.8L64.6,58.1L57.9,58.1ZM68.4,58.8L75.1,58.8L77.8,58.2L71.2,58.1ZM81.9,58.8L88.6,58.8L91.1,58.2L84.5,58.2ZM95.3,58.8L102.1,58.8L104.4,58.2L97.8,58.2ZM108.8,58.8L115.5,58.8L117.7,58.2L111.1,58.2ZM122.3,58.8L129.0,58.8L131.0,58.2L124.4,58.2ZM135.7,58.8L142.5,58.8L144.3,58.2L137.7,58.2ZM149.2,58.9L155.9,58.9L157.6,58.2L151.0,58.2ZM162.7,58.9L169.4,58.9L171.0,58.2L164.3,58.2ZM176.2,58.9L182.9,58.9L184.3,58.2L177.6,58.2ZM189.7,58.9L196.4,58.9L197.6,58.2L190.9,58.2ZM203.2,58.9L209.9,58.9L210.9,58.2L204.3,58.2ZM216.7,58.9L223.4,58.9L224.3,58.2L217.6,58.2ZM230.2,58.9L236.9,58.9L237.6,58.3L231.0,58.3ZM243.7,58.9L250.5,58.9L251.0,58.3L244.3,58.3ZM257.2,58.9L264.0,58.9L264.3,58.3L257.7,58.3ZM270.8,58.9L277.5,58.9L277.7,58.3L271.0,58.3ZM284.3,58.9L291.1,58.9L291.1,58.3L284.4,58.3ZM297.8,59.0L304.6,59.0L304.4,58.3L297.8,58.3ZM311.4,59.0L318.2,59.0L317.8,58.3L311.1,58.3ZM324.9,59.0L331.7,59.0L331.2,58.3L324.5,58.3ZM338.5,59.0L345.3,59.0L344.6,58.3L337.9,58.3ZM352.0,59.0L358.8,59.0L358.0,58.3L351.3,58.3ZM365.6,59.0L372.4,59.0L371.4,58.3L364.7,58.3ZM379.2,59.0L386.0,59.0L384.8,58.4L378.1,58.4ZM392.8,59.0L399.6,59.0L398.2,58.4L391.5,58.4ZM406.4,59.0L413.1,59.0L411.6,58.4L404.9,58.4ZM419.9,59.0L426.7,59.0L425.1,58.4L418.3,58.4ZM433.5,59.0L440.3,59.0L438.5,58.4L431.8,58.4ZM447.1,59.1L453.9,59.1L451.9,58.4L445.2,58.4ZM460.8,59.1L467.6,59.1L465.4,58.4L458.6,58.4ZM474.4,59.1L481.2,59.1L478.8,58.4L472.1,58.4ZM488.0,59.1L494.8,59.1L492.3,58.4L485.5,58.4ZM501.6,59.1L508.4,59.1L505.7,58.4L499.0,58.4ZM515.2,59.1L522.1,59.1L519.2,58.4L512.4,58.4ZM528.9,59.1L535.7,59.1L532.6,58.5L525.9,58.5ZM542.5,59.1L549.3,59.1L546.1,58.5L539.4,58.5ZM556.2,59.1L563.0,59.1L559.6,58.5L552.9,58.5ZM569.8,59.1L576.7,59.1L573.1,58.5L566.3,58.5ZM-1.8,58.1L4.9,58.1L8.4,57.5L1.8,57.5ZM11.5,58.1L18.1,58.1L21.5,57.5L14.9,57.5ZM24.7,58.1L31.4,58.1L34.6,57.5L28.0,57.5ZM38.0,58.1L44.6,58.1L47.7,57.5L41.1,57.5ZM51.3,58.1L57.9,58.1L60.8,57.5L54.2,57.5ZM64.6,58.1L71.2,58.1L73.9,57.5L67.3,57.5ZM77.8,58.2L84.5,58.2L87.0,57.5L80.5,57.5ZM91.1,58.2L97.8,58.2L100.1,57.5L93.6,57.5ZM104.4,58.2L111.1,58.2L113.3,57.5L106.7,57.5ZM117.7,58.2L124.4,58.2L126.4,57.5L119.8,57.5ZM131.0,58.2L137.7,58.2L139.6,57.6L133.0,57.6ZM144.3,58.2L151.0,58.2L152.7,57.6L146.1,57.6ZM157.6,58.2L164.3,58.2L165.9,57.6L159.3,57.6ZM171.0,58.2L177.6,58.2L179.0,57.6L172.4,57.6ZM184.3,58.2L190.9,58.2L192.2,57.6L185.6,57.6ZM197.6,58.2L204.3,58.2L205.3,57.6L198.8,57.6ZM210.9,58.2L217.6,58.2L218.5,57.6L211.9,57.6ZM224.3,58.2L231.0,58.3L231.7,57.6L225.1,57.6ZM237.6,58.3L244.3,58.3L244.9,57.6L238.3,57.6ZM251.0,58.3L257.7,58.3L258.1,57.6L251.5,57.6ZM264.3,58.3L271.0,58.3L271.3,57.6L264.7,57.6ZM277.7,58.3L284.4,58.3L284.5,57.7L277.9,57.6ZM291.1,58.3L297.8,58.3L297.7,57.7L291.1,57.7ZM304.4,58.3L311.1,58.3L310.9,57.7L304.3,57.7ZM317.8,58.3L324.5,58.3L324.1,57.7L317.5,57.7ZM331.2,58.3L337.9,58.3L337.3,57.7L330.7,57.7ZM344.6,58.3L351.3,58.3L350.6,57.7L343.9,57.7ZM358.0,58.3L364.7,58.3L363.8,57.7L357.2,57.7ZM371.4,58.3L378.1,58.4L377.0,57.7L370.4,57.7ZM384.8,58.4L391.5,58.4L390.3,57.7L383.7,57.7ZM398.2,58.4L404.9,58.4L403.5,57.7L396.9,57.7ZM411.6,58.4L418.3,58.4L416.8,57.7L410.2,57.7ZM425.1,58.4L431.8,58.4L430.0,57.7L423.4,57.7ZM438.5,58.4L445.2,58.4L443.3,57.8L436.7,57.8ZM451.9,58.4L458.6,58.4L456.6,57.8L449.9,57.8ZM465.4,58.4L472.1,58.4L469.9,57.8L463.2,57.8ZM478.8,58.4L485.5,58.4L483.1,57.8L476.5,57.8ZM492.3,58.4L499.0,58.4L496.4,57.8L489.8,57.8ZM505.7,58.4L512.4,58.4L509.7,57.8L503.1,57.8ZM519.2,58.4L525.9,58.5L523.0,57.8L516.4,57.8ZM532.6,58.5L539.4,58.5L536.3,57.8L529.7,57.8ZM546.1,58.5L552.9,58.5L549.6,57.8L543.0,57.8ZM559.6,58.5L566.3,58.5L562.9,57.8L556.3,57.8ZM573.1,58.5L579.8,58.5L576.3,57.8L569.6,57.8ZM-4.7,57.5L1.8,57.5L5.3,56.9L-1.1,56.8ZM8.4,57.5L14.9,57.5L18.3,56.9L11.8,56.9ZM21.5,57.5L28.0,57.5L31.2,56.9L24.7,56.9ZM34.6,57.5L41.1,57.5L44.2,56.9L37.7,56.9ZM47.7,57.5L54.2,57.5L57.1,56.9L50.6,56.9ZM60.8,57.5L67.3,57.5L70.1,56.9L63.6,56.9ZM73.9,57.5L80.5,57.5L83.0,56.9L76.5,56.9ZM87.0,57.5L93.6,57.5L96.0,56.9L89.5,56.9ZM100.1,57.5L106.7,57.5L109.0,56.9L102.5,56.9ZM113.3,57.5L119.8,57.5L121.9,56.9L115.4,56.9ZM126.4,57.5L133.0,57.6L134.9,56.9L128.4,56.9ZM139.6,57.6L146.1,57.6L147.9,56.9L141.4,56.9ZM152.7,57.6L159.3,57.6L160.9,57.0L154.4,56.9ZM165.9,57.6L172.4,57.6L173.9,57.0L167.4,57.0ZM179.0,57.6L185.6,57.6L186.9,57.0L180.4,57.0ZM192.2,57.6L198.8,57.6L199.9,57.0L193.4,57.0ZM205.3,57.6L211.9,57.6L212.9,57.0L206.4,57.0ZM218.5,57.6L225.1,57.6L225.9,57.0L219.4,57.0ZM231.7,57.6L238.3,57.6L238.9,57.0L232.4,57.0ZM244.9,57.6L251.5,57.6L252.0,57.0L245.5,57.0ZM258.1,57.6L264.7,57.6L265.0,57.0L258.5,57.0ZM271.3,57.6L277.9,57.6L278.0,57.0L271.5,57.0ZM284.5,57.7L291.1,57.7L291.1,57.0L284.6,57.0ZM297.7,57.7L304.3,57.7L304.1,57.0L297.6,57.0ZM310.9,57.7L317.5,57.7L317.2,57.1L310.7,57.0ZM324.1,57.7L330.7,57.7L330.2,57.1L323.7,57.1ZM337.3,57.7L343.9,57.7L343.3,57.1L336.8,57.1ZM350.6,57.7L357.2,57.7L356.4,57.1L349.8,57.1ZM363.8,57.7L370.4,57.7L369.5,57.1L362.9,57.1ZM377.0,57.7L383.7,57.7L382.5,57.1L376.0,57.1ZM390.3,57.7L396.9,57.7L395.6,57.1L389.1,57.1ZM403.5,57.7L410.2,57.7L408.7,57.1L402.2,57.1ZM416.8,57.7L423.4,57.7L421.8,57.1L415.3,57.1ZM430.0,57.7L436.7,57.8L434.9,57.1L428.4,57.1ZM443.3,57.8L449.9,57.8L448.0,57.1L441.5,57.1ZM456.6,57.8L463.2,57.8L461.1,57.1L454.6,57.1ZM469.9,57.8L476.5,57.8L474.2,57.2L467.7,57.2ZM483.1,57.8L489.8,57.8L487.4,57.2L480.8,57.2ZM496.4,57.8L503.1,57.8L500.5,57.2L493.9,57.2ZM509.7,57.8L516.4,57.8L513.6,57.2L507.1,57.2ZM523.0,57.8L529.7,57.8L526.8,57.2L520.2,57.2ZM536.3,57.8L543.0,57.8L539.9,57.2L533.3,57.2ZM549.6,57.8L556.3,57.8L553.1,57.2L546.5,57.2ZM562.9,57.8L569.6,57.8L566.2,57.2L559.6,57.2ZM576.3,57.8L582.9,57.8L579.4,57.2L572.8,57.2ZM-7.6,56.8L-1.1,56.8L2.4,56.2L-4.0,56.2ZM5.3,56.9L11.8,56.9L15.2,56.3L8.8,56.3ZM18.3,56.9L24.7,56.9L27.9,56.3L21.6,56.3ZM31.2,56.9L37.7,56.9L40.7,56.3L34.3,56.3ZM44.2,56.9L50.6,56.9L53.5,56.3L47.1,56.3ZM57.1,56.9L63.6,56.9L66.3,56.3L59.9,56.3ZM70.1,56.9L76.5,56.9L79.1,56.3L72.7,56.3ZM83.0,56.9L89.5,56.9L91.9,56.3L85.5,56.3ZM96.0,56.9L102.5,56.9L104.7,56.3L98.3,56.3ZM109.0,56.9L115.4,56.9L117.6,56.3L111.1,56.3ZM121.9,56.9L128.4,56.9L130.4,56.3L124.0,56.3ZM134.9,56.9L141.4,56.9L143.2,56.3L136.8,56.3ZM147.9,56.9L154.4,56.9L156.0,56.3L149.6,56.3ZM160.9,57.0L167.4,57.0L168.9,56.4L162.5,56.3ZM173.9,57.0L180.4,57.0L181.7,56.4L175.3,56.4ZM186.9,57.0L193.4,57.0L194.6,56.4L188.1,56.4ZM199.9,57.0L206.4,57.0L207.4,56.4L201.0,56.4ZM212.9,57.0L219.4,57.0L220.3,56.4L213.9,56.4ZM225.9,57.0L232.4,57.0L233.1,56.4L226.7,56.4ZM238.9,57.0L245.5,57.0L246.0,56.4L239.6,56.4ZM252.0,57.0L258.5,57.0L258.9,56.4L252.5,56.4ZM265.0,57.0L271.5,57.0L271.8,56.4L265.3,56.4ZM278.0,57.0L284.6,57.0L284.7,56.4L278.2,56.4ZM291.1,57.0L297.6,57.0L297.5,56.4L291.1,56.4ZM304.1,57.0L310.7,57.0L310.4,56.4L304.0,56.4ZM317.2,57.1L323.7,57.1L323.3,56.5L316.9,56.4ZM330.2,57.1L336.8,57.1L336.2,56.5L329.8,56.5ZM343.3,57.1L349.8,57.1L349.1,56.5L342.7,56.5ZM356.4,57.1L362.9,57.1L362.1,56.5L355.6,56.5ZM369.5,57.1L376.0,57.1L375.0,56.5L368.5,56.5ZM382.5,57.1L389.1,57.1L387.9,56.5L381.4,56.5ZM395.6,57.1L402.2,57.1L400.8,56.5L394.4,56.5ZM408.7,57.1L415.3,57.1L413.8,56.5L407.3,56.5ZM421.8,57.1L428.4,57.1L426.7,56.5L420.2,56.5ZM434.9,57.1L441.5,57.1L439.7,56.5L433.2,56.5ZM448.0,57.1L454.6,57.1L452.6,56.5L446.1,56.5ZM461.1,57.1L467.7,57.2L465.6,56.5L459.1,56.5ZM474.2,57.2L480.8,57.2L478.5,56.6L472.0,56.5ZM487.4,57.2L493.9,57.2L491.5,56.6L485.0,56.6ZM500.5,57.2L507.1,57.2L504.5,56.6L498.0,56.6ZM513.6,57.2L520.2,57.2L517.4,56.6L510.9,56.6ZM526.8,57.2L533.3,57.2L530.4,56.6L523.9,56.6ZM539.9,57.2L546.5,57.2L543.4,56.6L536.9,56.6ZM553.1,57.2L559.6,57.2L556.4,56.6L549.9,56.6ZM566.2,57.2L572.8,57.2L569.4,56.6L562.9,56.6ZM579.4,57.2L586.0,57.2L582.4,56.6L575.9,56.6Z" fill="#cacaca"/>
<path d="M-10.4,56.2L-4.0,56.2L-0.5,55.7L-6.8,55.7ZM2.4,56.2L8.8,56.3L12.1,55.7L5.8,55.7ZM15.2,56.3L21.6,56.3L24.7,55.7L18.4,55.7ZM27.9,56.3L34.3,56.3L37.4,55.7L31.1,55.7ZM40.7,56.3L47.1,56.3L50.0,55.7L43.7,55.7ZM53.5,56.3L59.9,56.3L62.7,55.7L56.3,55.7ZM66.3,56.3L72.7,56.3L75.3,55.7L69.0,55.7ZM79.1,56.3L85.5,56.3L88.0,55.7L81.6,55.7ZM91.9,56.3L98.3,56.3L100.6,55.7L94.3,55.7ZM104.7,56.3L111.1,56.3L113.3,55.7L107.0,55.7ZM117.6,56.3L124.0,56.3L126.0,55.7L119.6,55.7ZM130.4,56.3L136.8,56.3L138.6,55.7L132.3,55.7ZM143.2,56.3L149.6,56.3L151.3,55.8L145.0,55.7ZM156.0,56.3L162.5,56.3L164.0,55.8L157.6,55.8ZM168.9,56.4L175.3,56.4L176.7,55.8L170.3,55.8ZM181.7,56.4L188.1,56.4L189.4,55.8L183.0,55.8ZM194.6,56.4L201.0,56.4L202.1,55.8L195.7,55.8ZM207.4,56.4L213.9,56.4L214.8,55.8L208.4,55.8ZM220.3,56.4L226.7,56.4L227.5,55.8L221.1,55.8ZM233.1,56.4L239.6,56.4L240.2,55.8L233.8,55.8ZM246.0,56.4L252.5,56.4L252.9,55.8L246.6,55.8ZM258.9,56.4L265.3,56.4L265.6,55.8L259.3,55.8ZM271.8,56.4L278.2,56.4L278.4,55.8L272.0,55.8ZM284.7,56.4L291.1,56.4L291.1,55.8L284.7,55.8ZM297.5,56.4L304.0,56.4L303.8,55.8L297.5,55.8ZM310.4,56.4L316.9,56.4L316.6,55.9L310.2,55.9ZM323.3,56.5L329.8,56.5L329.3,55.9L323.0,55.9ZM336.2,56.5L342.7,56.5L342.1,55.9L335.7,55.9ZM349.1,56.5L355.6,56.5L354.8,55.9L348.5,55.9ZM362.1,56.5L368.5,56.5L367.6,55.9L361.2,55.9ZM375.0,56.5L381.4,56.5L380.4,55.9L374.0,55.9ZM387.9,56.5L394.4,56.5L393.1,55.9L386.8,55.9ZM400.8,56.5L407.3,56.5L405.9,55.9L399.5,55.9ZM413.8,56.5L420.2,56.5L418.7,55.9L412.3,55.9ZM426.7,56.5L433.2,56.5L431.5,55.9L425.1,55.9ZM439.7,56.5L446.1,56.5L444.3,55.9L437.9,55.9ZM452.6,56.5L459.1,56.5L457.1,55.9L450.7,55.9ZM465.6,56.5L472.0,56.5L469.9,56.0L463.5,55.9ZM478.5,56.6L485.0,56.6L482.7,56.0L476.3,56.0ZM491.5,56.6L498.0,56.6L495.5,56.0L489.1,56.0ZM504.5,56.6L510.9,56.6L508.3,56.0L501.9,56.0ZM517.4,56.6L523.9,56.6L521.2,56.0L514.7,56.0ZM530.4,56.6L536.9,56.6L534.0,56.0L527.6,56.0ZM543.4,56.6L549.9,56.6L546.8,56.0L540.4,56.0ZM556.4,56.6L562.9,56.6L559.7,56.0L553.2,56.0ZM569.4,56.6L575.9,56.6L572.5,56.0L566.1,56.0ZM-0.5,55.7L5.8,55.7L9.1,55.1L2.9,55.1ZM12.1,55.7L18.4,55.7L21.6,55.1L15.4,55.1ZM24.7,55.7L31.1,55.7L34.1,55.1L27.9,55.1ZM37.4,55.7L43.7,55.7L46.6,55.1L40.4,55.1ZM50.0,55.7L56.3,55.7L59.1,55.1L52.8,55.1ZM62.7,55.7L69.0,55.7L71.6,55.1L65.3,55.1ZM75.3,55.7L81.6,55.7L84.1,55.1L77.8,55.1ZM88.0,55.7L94.3,55.7L96.6,55.1L90.3,55.1ZM100.6,55.7L107.0,55.7L109.1,55.2L102.9,55.1ZM113.3,55.7L119.6,55.7L121.6,55.2L115.4,55.2ZM126.0,55.7L132.3,55.7L134.2,55.2L127.9,55.2ZM138.6,55.7L145.0,55.7L146.7,55.2L140.4,55.2ZM151.3,55.8L157.6,55.8L159.2,55.2L153.0,55.2ZM164.0,55.8L170.3,55.8L171.8,55.2L165.5,55.2ZM176.7,55.8L183.0,55.8L184.3,55.2L178.0,55.2ZM189.4,55.8L195.7,55.8L196.8,55.2L190.6,55.2ZM202.1,55.8L208.4,55.8L209.4,55.2L203.1,55.2ZM214.8,55.8L221.1,55.8L222.0,55.2L215.7,55.2ZM227.5,55.8L233.8,55.8L234.5,55.2L228.2,55.2ZM240.2,55.8L246.6,55.8L247.1,55.2L240.8,55.2ZM252.9,55.8L259.3,55.8L259.7,55.2L253.4,55.2ZM265.6,55.8L272.0,55.8L272.2,55.3L265.9,55.2ZM278.4,55.8L284.7,55.8L284.8,55.3L278.5,55.3ZM291.1,55.8L297.5,55.8L297.4,55.3L291.1,55.3ZM303.8,55.8L310.2,55.9L310.0,55.3L303.7,55.3ZM316.6,55.9L323.0,55.9L322.6,55.3L316.3,55.3ZM329.3,55.9L335.7,55.9L335.2,55.3L328.9,55.3ZM342.1,55.9L348.5,55.9L347.8,55.3L341.5,55.3ZM354.8,55.9L361.2,55.9L360.4,55.3L354.1,55.3ZM367.6,55.9L374.0,55.9L373.0,55.3L366.7,55.3ZM380.4,55.9L386.8,55.9L385.6,55.3L379.3,55.3ZM393.1,55.9L399.5,55.9L398.3,55.3L392.0,55.3ZM405.9,55.9L412.3,55.9L410.9,55.3L404.6,55.3ZM418.7,55.9L425.1,55.9L423.5,55.3L417.2,55.3ZM431.5,55.9L437.9,55.9L436.2,55.4L429.9,55.3ZM444.3,55.9L450.7,55.9L448.8,55.4L442.5,55.4ZM457.1,55.9L463.5,55.9L461.5,55.4L455.1,55.4ZM469.9,56.0L476.3,56.0L474.1,55.4L467.8,55.4ZM482.7,56.0L489.1,56.0L486.8,55.4L480.5,55.4ZM495.5,56.0L501.9,56.0L499.5,55.4L493.1,55.4ZM508.3,56.0L514.7,56.0L512.1,55.4L505.8,55.4ZM521.2,56.0L527.6,56.0L524.8,55.4L518.5,55.4ZM534.0,56.0L540.4,56.0L537.5,55.4L531.1,55.4ZM546.8,56.0L553.2,56.0L550.2,55.4L543.8,55.4ZM559.7,56.0L566.1,56.0L562.9,55.4L556.5,55.4ZM572.5,56.0L578.9,56.0L575.5,55.4L569.2,55.4ZM-3.3,55.1L2.9,55.1L6.2,54.5L0.1,54.5ZM9.1,55.1L15.4,55.1L18.6,54.5L12.4,54.5ZM21.6,55.1L27.9,55.1L30.9,54.5L24.7,54.5ZM34.1,55.1L40.4,55.1L43.3,54.5L37.1,54.5ZM46.6,55.1L52.8,55.1L55.6,54.6L49.4,54.6ZM59.1,55.1L65.3,55.1L68.0,54.6L61.8,54.6ZM71.6,55.1L77.8,55.1L80.3,54.6L74.1,54.6ZM84.1,55.1L90.3,55.1L92.7,54.6L86.5,54.6ZM96.6,55.1L102.9,55.1L105.0,54.6L98.9,54.6ZM109.1,55.2L115.4,55.2L117.4,54.6L111.2,54.6ZM121.6,55.2L127.9,55.2L129.8,54.6L123.6,54.6ZM134.2,55.2L140.4,55.2L142.2,54.6L136.0,54.6ZM146.7,55.2L153.0,55.2L154.6,54.6L148.4,54.6ZM159.2,55.2L165.5,55.2L167.0,54.6L160.8,54.6ZM171.8,55.2L178.0,55.2L179.3,54.6L173.1,54.6ZM184.3,55.2L190.6,55.2L191.7,54.6L185.5,54.6ZM196.8,55.2L203.1,55.2L204.2,54.6L197.9,54.6ZM209.4,55.2L215.7,55.2L216.6,54.7L210.4,54.6ZM222.0,55.2L228.2,55.2L229.0,54.7L222.8,54.7ZM234.5,55.2L240.8,55.2L241.4,54.7L235.2,54.7ZM247.1,55.2L253.4,55.2L253.8,54.7L247.6,54.7ZM259.7,55.2L265.9,55.2L266.2,54.7L260.0,54.7ZM272.2,55.3L278.5,55.3L278.7,54.7L272.5,54.7ZM284.8,55.3L291.1,55.3L291.1,54.7L284.9,54.7ZM297.4,55.3L303.7,55.3L303.6,54.7L297.3,54.7ZM310.0,55.3L316.3,55.3L316.0,54.7L309.8,54.7ZM322.6,55.3L328.9,55.3L328.5,54.7L322.2,54.7ZM335.2,55.3L341.5,55.3L340.9,54.7L334.7,54.7ZM347.8,55.3L354.1,55.3L353.4,54.7L347.1,54.7ZM360.4,55.3L366.7,55.3L365.8,54.7L359.6,54.7ZM373.0,55.3L379.3,55.3L378.3,54.8L372.1,54.7ZM385.6,55.3L392.0,55.3L390.8,54.8L384.6,54.8ZM398.3,55.3L404.6,55.3L403.3,54.8L397.0,54.8ZM410.9,55.3L417.2,55.3L415.8,54.8L409.5,54.8ZM423.5,55.3L429.9,55.3L428.3,54.8L422.0,54.8ZM436.2,55.4L442.5,55.4L440.7,54.8L434.5,54.8ZM448.8,55.4L455.1,55.4L453.2,54.8L447.0,54.8ZM461.5,55.4L467.8,55.4L465.8,54.8L459.5,54.8ZM474.1,55.4L480.5,55.4L478.3,54.8L472.0,54.8ZM486.8,55.4L493.1,55.4L490.8,54.8L484.5,54.8ZM499.5,55.4L505.8,55.4L503.3,54.8L497.0,54.8ZM512.1,55.4L518.5,55.4L515.8,54.8L509.6,54.8ZM524.8,55.4L531.1,55.4L528.3,54.8L522.1,54.8ZM537.5,55.4L543.8,55.4L540.9,54.9L534.6,54.8ZM550.2,55.4L556.5,55.4L553.4,54.9L547.2,54.9ZM562.9,55.4L569.2,55.4L566.0,54.9L559.7,54.9ZM575.5,55.4L581.9,55.4L578.5,54.9L572.2,54.9ZM-6.1,54.5L0.1,54.5L3.4,54.0L-2.7,54.0ZM6.2,54.5L12.4,54.5L15.6,54.0L9.5,54.0ZM18.6,54.5L24.7,54.5L27.8,54.0L21.7,54.0ZM30.9,54.5L37.1,54.5L40.0,54.0L33.9,54.0ZM43.3,54.5L49.4,54.6L52.2,54.0L46.1,54.0ZM55.6,54.6L61.8,54.6L64.4,54.0L58.3,54.0ZM68.0,54.6L74.1,54.6L76.6,54.0L70.5,54.0ZM80.3,54.6L86.5,54.6L88.8,54.0L82.7,54.0ZM92.7,54.6L98.9,54.6L101.1,54.0L95.0,54.0ZM105.0,54.6L111.2,54.6L113.3,54.0L107.2,54.0ZM117.4,54.6L123.6,54.6L125.5,54.0L119.4,54.0ZM129.8,54.6L136.0,54.6L137.8,54.1L131.6,54.1ZM142.2,54.6L148.4,54.6L150.0,54.1L143.9,54.1ZM154.6,54.6L160.8,54.6L162.3,54.1L156.1,54.1ZM167.0,54.6L173.1,54.6L174.5,54.1L168.4,54.1ZM179.3,54.6L185.5,54.6L186.8,54.1L180.6,54.1ZM191.7,54.6L197.9,54.6L199.0,54.1L192.9,54.1ZM204.2,54.6L210.4,54.6L211.3,54.1L205.2,54.1ZM216.6,54.7L222.8,54.7L223.6,54.1L217.4,54.1ZM229.0,54.7L235.2,54.7L235.8,54.1L229.7,54.1ZM241.4,54.7L247.6,54.7L248.1,54.1L242.0,54.1ZM253.8,54.7L260.0,54.7L260.4,54.1L254.3,54.1ZM266.2,54.7L272.5,54.7L272.7,54.1L266.5,54.1ZM278.7,54.7L284.9,54.7L285.0,54.1L278.8,54.1ZM291.1,54.7L297.3,54.7L297.3,54.2L291.1,54.1ZM303.6,54.7L309.8,54.7L309.6,54.2L303.4,54.2ZM316.0,54.7L322.2,54.7L321.9,54.2L315.7,54.2ZM328.5,54.7L334.7,54.7L334.2,54.2L328.0,54.2ZM340.9,54.7L347.1,54.7L346.5,54.2L340.4,54.2ZM353.4,54.7L359.6,54.7L358.8,54.2L352.7,54.2ZM365.8,54.7L372.1,54.7L371.2,54.2L365.0,54.2ZM378.3,54.8L384.6,54.8L383.5,54.2L377.3,54.2ZM390.8,54.8L397.0,54.8L395.8,54.2L389.7,54.2ZM403.3,54.8L409.5,54.8L408.2,54.2L402.0,54.2ZM415.8,54.8L422.0,54.8L420.5,54.2L414.3,54.2ZM428.3,54.8L434.5,54.8L432.9,54.2L426.7,54.2ZM440.7,54.8L447.0,54.8L445.2,54.2L439.0,54.2ZM453.2,54.8L459.5,54.8L457.6,54.2L451.4,54.2ZM465.8,54.8L472.0,54.8L469.9,54.3L463.8,54.3ZM478.3,54.8L484.5,54.8L482.3,54.3L476.1,54.3ZM490.8,54.8L497.0,54.8L494.7,54.3L488.5,54.3ZM503.3,54.8L509.6,54.8L507.1,54.3L500.9,54.3ZM515.8,54.8L522.1,54.8L519.4,54.3L513.2,54.3ZM528.3,54.8L534.6,54.8L531.8,54.3L525.6,54.3ZM540.9,54.9L547.2,54.9L544.2,54.3L538.0,54.3ZM553.4,54.9L559.7,54.9L556.6,54.3L550.4,54.3ZM566.0,54.9L572.2,54.9L569.0,54.3L562.8,54.3ZM578.5,54.9L584.8,54.9L581.4,54.3L575.2,54.3ZM-8.8,54.0L-2.7,54.0L0.6,53.4L-5.4,53.4ZM3.4,54.0L9.5,54.0L12.7,53.4L6.7,53.4ZM15.6,54.0L21.7,54.0L24.7,53.5L18.7,53.4ZM27.8,54.0L33.9,54.0L36.8,53.5L30.8,53.5ZM40.0,54.0L46.1,54.0L48.9,53.5L42.8,53.5ZM52.2,54.0L58.3,54.0L60.9,53.5L54.9,53.5ZM64.4,54.0L70.5,54.0L73.0,53.5L67.0,53.5ZM76.6,54.0L82.7,54.0L85.1,53.5L79.1,53.5ZM88.8,54.0L95.0,54.0L97.2,53.5L91.1,53.5ZM101.1,54.0L107.2,54.0L109.3,53.5L103.2,53.5ZM113.3,54.0L119.4,54.0L121.4,53.5L115.3,53.5ZM125.5,54.0L131.6,54.1L133.5,53.5L127.4,53.5ZM137.8,54.1L143.9,54.1L145.6,53.5L139.5,53.5ZM150.0,54.1L156.1,54.1L157.7,53.5L151.6,53.5ZM162.3,54.1L168.4,54.1L169.8,53.5L163.7,53.5ZM174.5,54.1L180.6,54.1L181.9,53.5L175.8,53.5ZM186.8,54.1L192.9,54.1L194.0,53.6L187.9,53.5ZM199.0,54.1L205.2,54.1L206.1,53.6L200.1,53.6ZM211.3,54.1L217.4,54.1L218.3,53.6L212.2,53.6ZM223.6,54.1L229.7,54.1L230.4,53.6L224.3,53.6ZM235.8,54.1L242.0,54.1L242.5,53.6L236.5,53.6ZM248.1,54.1L254.3,54.1L254.7,53.6L248.6,53.6ZM260.4,54.1L266.5,54.1L266.8,53.6L260.7,53.6ZM272.7,54.1L278.8,54.1L279.0,53.6L272.9,53.6ZM285.0,54.1L291.1,54.1L291.1,53.6L285.1,53.6ZM297.3,54.2L303.4,54.2L303.3,53.6L297.2,53.6ZM309.6,54.2L315.7,54.2L315.5,53.6L309.4,53.6ZM321.9,54.2L328.0,54.2L327.6,53.6L321.5,53.6ZM334.2,54.2L340.4,54.2L339.8,53.6L333.7,53.6ZM346.5,54.2L352.7,54.2L352.0,53.6L345.9,53.6ZM358.8,54.2L365.0,54.2L364.2,53.7L358.1,53.6ZM371.2,54.2L377.3,54.2L376.4,53.7L370.3,53.7ZM383.5,54.2L389.7,54.2L388.5,53.7L382.4,53.7ZM395.8,54.2L402.0,54.2L400.7,53.7L394.6,53.7ZM408.2,54.2L414.3,54.2L412.9,53.7L406.8,53.7ZM420.5,54.2L426.7,54.2L425.1,53.7L419.0,53.7ZM432.9,54.2L439.0,54.2L437.4,53.7L431.3,53.7ZM445.2,54.2L451.4,54.2L449.6,53.7L443.5,53.7ZM457.6,54.2L463.8,54.3L461.8,53.7L455.7,53.7ZM469.9,54.3L476.1,54.3L474.0,53.7L467.9,53.7ZM482.3,54.3L488.5,54.3L486.2,53.7L480.1,53.7ZM494.7,54.3L500.9,54.3L498.5,53.7L492.4,53.7ZM507.1,54.3L513.2,54.3L510.7,53.7L504.6,53.7ZM519.4,54.3L525.6,54.3L523.0,53.7L516.8,53.7ZM531.8,54.3L538.0,54.3L535.2,53.8L529.1,53.8ZM544.2,54.3L550.4,54.3L547.5,53.8L541.3,53.8ZM556.6,54.3L562.8,54.3L559.7,53.8L553.6,53.8ZM569.0,54.3L575.2,54.3L572.0,53.8L565.9,53.8ZM0.6,53.4L6.7,53.4L9.8,52.9L3.9,52.9ZM12.7,53.4L18.7,53.4L21.8,52.9L15.8,52.9ZM24.7,53.5L30.8,53.5L33.7,52.9L27.7,52.9ZM36.8,53.5L42.8,53.5L45.6,52.9L39.7,52.9ZM48.9,53.5L54.9,53.5L57.6,52.9L51.6,52.9ZM60.9,53.5L67.0,53.5L69.5,53.0L63.5,52.9ZM73.0,53.5L79.1,53.5L81.4,53.0L75.5,53.0ZM85.1,53.5L91.1,53.5L93.4,53.0L87.4,53.0ZM97.2,53.5L103.2,53.5L105.3,53.0L99.4,53.0ZM109.3,53.5L115.3,53.5L117.3,53.0L111.3,53.0ZM121.4,53.5L127.4,53.5L129.2,53.0L123.3,53.0ZM133.5,53.5L139.5,53.5L141.2,53.0L135.2,53.0ZM145.6,53.5L151.6,53.5L153.2,53.0L147.2,53.0ZM157.7,53.5L163.7,53.5L165.2,53.0L159.2,53.0ZM169.8,53.5L175.8,53.5L177.1,53.0L171.1,53.0ZM181.9,53.5L187.9,53.5L189.1,53.0L183.1,53.0ZM194.0,53.6L200.1,53.6L201.1,53.0L195.1,53.0ZM206.1,53.6L212.2,53.6L213.1,53.0L207.1,53.0ZM218.3,53.6L224.3,53.6L225.1,53.0L219.1,53.0ZM230.4,53.6L236.5,53.6L237.1,53.1L231.1,53.0ZM242.5,53.6L248.6,53.6L249.1,53.1L243.1,53.1ZM254.7,53.6L260.7,53.6L261.1,53.1L255.1,53.1ZM266.8,53.6L272.9,53.6L273.1,53.1L267.1,53.1ZM279.0,53.6L285.1,53.6L285.1,53.1L279.1,53.1ZM291.1,53.6L297.2,53.6L297.1,53.1L291.1,53.1ZM303.3,53.6L309.4,53.6L309.2,53.1L303.2,53.1ZM315.5,53.6L321.5,53.6L321.2,53.1L315.2,53.1ZM327.6,53.6L333.7,53.6L333.2,53.1L327.2,53.1ZM339.8,53.6L345.9,53.6L345.3,53.1L339.3,53.1ZM352.0,53.6L358.1,53.6L357.3,53.1L351.3,53.1ZM364.2,53.7L370.3,53.7L369.4,53.1L363.4,53.1ZM376.4,53.7L382.4,53.7L381.4,53.1L375.4,53.1ZM388.5,53.7L394.6,53.7L393.5,53.1L387.5,53.1ZM400.7,53.7L406.8,53.7L405.5,53.1L399.5,53.1ZM412.9,53.7L419.0,53.7L417.6,53.2L411.6,53.2ZM425.1,53.7L431.3,53.7L429.7,53.2L423.7,53.2ZM437.4,53.7L443.5,53.7L441.8,53.2L435.7,53.2ZM449.6,53.7L455.7,53.7L453.8,53.2L447.8,53.2ZM461.8,53.7L467.9,53.7L465.9,53.2L459.9,53.2ZM474.0,53.7L480.1,53.7L478.0,53.2L472.0,53.2ZM486.2,53.7L492.4,53.7L490.1,53.2L484.1,53.2ZM498.5,53.7L504.6,53.7L502.2,53.2L496.2,53.2ZM510.7,53.7L516.8,53.7L514.3,53.2L508.3,53.2ZM523.0,53.7L529.1,53.8L526.4,53.2L520.4,53.2ZM535.2,53.8L541.3,53.8L538.5,53.2L532.5,53.2ZM547.5,53.8L553.6,53.8L550.6,53.2L544.6,53.2ZM559.7,53.8L565.9,53.8L562.8,53.2L556.7,53.2ZM572.0,53.8L578.1,53.8L574.9,53.2L568.8,53.2ZM-2.1,52.9L3.9,52.9L7.1,52.4L1.2,52.4ZM9.8,52.9L15.8,52.9L18.9,52.4L13.0,52.4ZM21.8,52.9L27.7,52.9L30.6,52.4L24.7,52.4ZM33.7,52.9L39.7,52.9L42.4,52.4L36.5,52.4ZM45.6,52.9L51.6,52.9L54.2,52.4L48.3,52.4ZM57.6,52.9L63.5,52.9L66.0,52.4L60.1,52.4ZM69.5,53.0L75.5,53.0L77.9,52.4L71.9,52.4ZM81.4,53.0L87.4,53.0L89.7,52.5L83.8,52.4ZM93.4,53.0L99.4,53.0L101.5,52.5L95.6,52.5ZM105.3,53.0L111.3,53.0L113.3,52.5L107.4,52.5ZM117.3,53.0L123.3,53.0L125.1,52.5L119.2,52.5ZM129.2,53.0L135.2,53.0L137.0,52.5L131.0,52.5ZM141.2,53.0L147.2,53.0L148.8,52.5L142.9,52.5ZM153.2,53.0L159.2,53.0L160.6,52.5L154.7,52.5ZM165.2,53.0L171.1,53.0L172.5,52.5L166.6,52.5ZM177.1,53.0L183.1,53.0L184.3,52.5L178.4,52.5ZM189.1,53.0L195.1,53.0L196.2,52.5L190.2,52.5ZM201.1,53.0L207.1,53.0L208.0,52.5L202.1,52.5ZM213.1,53.0L219.1,53.0L219.9,52.5L214.0,52.5ZM225.1,53.0L231.1,53.0L231.8,52.5L225.8,52.5ZM237.1,53.1L243.1,53.1L243.6,52.5L237.7,52.5ZM249.1,53.1L255.1,53.1L255.5,52.5L249.6,52.5ZM261.1,53.1L267.1,53.1L267.4,52.6L261.4,52.6ZM273.1,53.1L279.1,53.1L279.3,52.6L273.3,52.6ZM285.1,53.1L291.1,53.1L291.1,52.6L285.2,52.6ZM297.1,53.1L303.2,53.1L303.0,52.6L297.1,52.6ZM309.2,53.1L315.2,53.1L314.9,52.6L309.0,52.6ZM321.2,53.1L327.2,53.1L326.8,52.6L320.9,52.6ZM333.2,53.1L339.3,53.1L338.7,52.6L332.8,52.6ZM345.3,53.1L351.3,53.1L350.6,52.6L344.7,52.6ZM357.3,53.1L363.4,53.1L362.6,52.6L356.6,52.6ZM369.4,53.1L375.4,53.1L374.5,52.6L368.5,52.6ZM381.4,53.1L387.5,53.1L386.4,52.6L380.4,52.6ZM393.5,53.1L399.5,53.1L398.3,52.6L392.4,52.6ZM405.5,53.1L411.6,53.2L410.3,52.6L404.3,52.6ZM417.6,53.2L423.7,53.2L422.2,52.6L416.2,52.6ZM429.7,53.2L435.7,53.2L434.1,52.7L428.2,52.6ZM441.8,53.2L447.8,53.2L446.1,52.7L440.1,52.7ZM453.8,53.2L459.9,53.2L458.0,52.7L452.0,52.7ZM465.9,53.2L472.0,53.2L470.0,52.7L464.0,52.7ZM478.0,53.2L484.1,53.2L481.9,52.7L475.9,52.7ZM490.1,53.2L496.2,53.2L493.9,52.7L487.9,52.7ZM502.2,53.2L508.3,53.2L505.9,52.7L499.9,52.7ZM514.3,53.2L520.4,53.2L517.8,52.7L511.8,52.7ZM526.4,53.2L532.5,53.2L529.8,52.7L523.8,52.7ZM538.5,53.2L544.6,53.2L541.8,52.7L535.8,52.7ZM550.6,53.2L556.7,53.2L553.8,52.7L547.8,52.7ZM562.8,53.2L568.8,53.2L565.7,52.7L559.7,52.7ZM574.9,53.2L581.0,53.3L577.7,52.7L571.7,52.7ZM-4.7,52.4L1.2,52.4L4.3,51.9L-1.5,51.9ZM7.1,52.4L13.0,52.4L16.0,51.9L10.2,51.9ZM18.9,52.4L24.7,52.4L27.7,51.9L21.8,51.9ZM30.6,52.4L36.5,52.4L39.3,51.9L33.5,51.9ZM42.4,52.4L48.3,52.4L51.0,51.9L45.2,51.9ZM54.2,52.4L60.1,52.4L62.7,51.9L56.8,51.9ZM66.0,52.4L71.9,52.4L74.3,51.9L68.5,51.9ZM77.9,52.4L83.8,52.4L86.0,51.9L80.2,51.9ZM89.7,52.5L95.6,52.5L97.7,52.0L91.9,52.0ZM101.5,52.5L107.4,52.5L109.4,52.0L103.6,52.0ZM113.3,52.5L119.2,52.5L121.1,52.0L115.3,52.0ZM125.1,52.5L131.0,52.5L132.8,52.0L127.0,52.0ZM137.0,52.5L142.9,52.5L144.5,52.0L138.7,52.0ZM148.8,52.5L154.7,52.5L156.2,52.0L150.4,52.0ZM160.6,52.5L166.6,52.5L167.9,52.0L162.1,52.0ZM172.5,52.5L178.4,52.5L179.6,52.0L173.8,52.0ZM184.3,52.5L190.2,52.5L191.4,52.0L185.5,52.0ZM196.2,52.5L202.1,52.5L203.1,52.0L197.2,52.0ZM208.0,52.5L214.0,52.5L214.8,52.0L208.9,52.0ZM219.9,52.5L225.8,52.5L226.5,52.0L220.7,52.0ZM231.8,52.5L237.7,52.5L238.3,52.0L232.4,52.0ZM243.6,52.5L249.6,52.5L250.0,52.0L244.2,52.0ZM255.5,52.5L261.4,52.6L261.8,52.0L255.9,52.0ZM267.4,52.6L273.3,52.6L273.5,52.1L267.6,52.1ZM279.3,52.6L285.2,52.6L285.3,52.1L279.4,52.1ZM291.1,52.6L297.1,52.6L297.0,52.1L291.2,52.1ZM303.0,52.6L309.0,52.6L308.8,52.1L302.9,52.1ZM314.9,52.6L320.9,52.6L320.6,52.1L314.7,52.1ZM326.8,52.6L332.8,52.6L332.3,52.1L326.4,52.1ZM338.7,52.6L344.7,52.6L344.1,52.1L338.2,52.1ZM350.6,52.6L356.6,52.6L355.9,52.1L350.0,52.1ZM362.6,52.6L368.5,52.6L367.7,52.1L361.8,52.1ZM374.5,52.6L380.4,52.6L379.5,52.1L373.6,52.1ZM386.4,52.6L392.4,52.6L391.3,52.1L385.4,52.1ZM398.3,52.6L404.3,52.6L403.0,52.1L397.2,52.1ZM410.3,52.6L416.2,52.6L414.9,52.1L408.9,52.1ZM422.2,52.6L428.2,52.6L426.7,52.1L420.8,52.1ZM434.1,52.7L440.1,52.7L438.5,52.1L432.6,52.1ZM446.1,52.7L452.0,52.7L450.3,52.2L444.4,52.2ZM458.0,52.7L464.0,52.7L462.1,52.2L456.2,52.2ZM470.0,52.7L475.9,52.7L473.9,52.2L468.0,52.2ZM481.9,52.7L487.9,52.7L485.7,52.2L479.8,52.2ZM493.9,52.7L499.9,52.7L497.6,52.2L491.7,52.2ZM505.9,52.7L511.8,52.7L509.4,52.2L503.5,52.2ZM517.8,52.7L523.8,52.7L521.3,52.2L515.3,52.2ZM529.8,52.7L535.8,52.7L533.1,52.2L527.2,52.2ZM541.8,52.7L547.8,52.7L544.9,52.2L539.0,52.2ZM553.8,52.7L559.7,52.7L556.8,52.2L550.9,52.2ZM565.7,52.7L571.7,52.7L568.7,52.2L562.7,52.2ZM577.7,52.7L583.7,52.7L580.5,52.2L574.6,52.2ZM-7.3,51.9L-1.5,51.9L1.7,51.4L-4.1,51.4ZM4.3,51.9L10.2,51.9L13.2,51.4L7.4,51.4ZM16.0,51.9L21.8,51.9L24.7,51.4L19.0,51.4ZM27.7,51.9L33.5,51.9L36.3,51.4L30.5,51.4ZM39.3,51.9L45.2,51.9L47.8,51.4L42.1,51.4ZM51.0,51.9L56.8,51.9L59.4,51.4L53.6,51.4ZM62.7,51.9L68.5,51.9L70.9,51.4L65.1,51.4ZM74.3,51.9L80.2,51.9L82.5,51.5L76.7,51.5ZM86.0,51.9L91.9,52.0L94.0,51.5L88.3,51.5ZM97.7,52.0L103.6,52.0L105.6,51.5L99.8,51.5ZM109.4,52.0L115.3,52.0L117.2,51.5L111.4,51.5ZM121.1,52.0L127.0,52.0L128.7,51.5L122.9,51.5ZM132.8,52.0L138.7,52.0L140.3,51.5L134.5,51.5ZM144.5,52.0L150.4,52.0L151.9,51.5L146.1,51.5ZM156.2,52.0L162.1,52.0L163.5,51.5L157.7,51.5ZM167.9,52.0L173.8,52.0L175.1,51.5L169.3,51.5ZM179.6,52.0L185.5,52.0L186.6,51.5L180.9,51.5ZM191.4,52.0L197.2,52.0L198.2,51.5L192.4,51.5ZM203.1,52.0L208.9,52.0L209.8,51.5L204.0,51.5ZM214.8,52.0L220.7,52.0L221.4,51.5L215.6,51.5ZM226.5,52.0L232.4,52.0L233.1,51.5L227.3,51.5ZM238.3,52.0L244.2,52.0L244.7,51.5L238.9,51.5ZM250.0,52.0L255.9,52.0L256.3,51.6L250.5,51.5ZM261.8,52.0L267.6,52.1L267.9,51.6L262.1,51.6ZM273.5,52.1L279.4,52.1L279.5,51.6L273.7,51.6ZM285.3,52.1L291.2,52.1L291.2,51.6L285.3,51.6ZM297.0,52.1L302.9,52.1L302.8,51.6L297.0,51.6ZM308.8,52.1L314.7,52.1L314.4,51.6L308.6,51.6ZM320.6,52.1L326.4,52.1L326.1,51.6L320.2,51.6ZM332.3,52.1L338.2,52.1L337.7,51.6L331.9,51.6ZM344.1,52.1L350.0,52.1L349.4,51.6L343.5,51.6ZM355.9,52.1L361.8,52.1L361.0,51.6L355.2,51.6ZM367.7,52.1L373.6,52.1L372.7,51.6L366.8,51.6ZM379.5,52.1L385.4,52.1L384.3,51.6L378.5,51.6ZM391.3,52.1L397.2,52.1L396.0,51.6L390.2,51.6ZM403.0,52.1L408.9,52.1L407.7,51.6L401.8,51.6ZM414.9,52.1L420.8,52.1L419.4,51.6L413.5,51.6ZM426.7,52.1L432.6,52.1L431.0,51.7L425.2,51.6ZM438.5,52.1L444.4,52.2L442.7,51.7L436.9,51.7ZM450.3,52.2L456.2,52.2L454.4,51.7L448.6,51.7ZM462.1,52.2L468.0,52.2L466.1,51.7L460.2,51.7ZM473.9,52.2L479.8,52.2L477.8,51.7L471.9,51.7ZM485.7,52.2L491.7,52.2L489.5,51.7L483.6,51.7ZM497.6,52.2L503.5,52.2L501.2,51.7L495.3,51.7ZM509.4,52.2L515.3,52.2L512.9,51.7L507.0,51.7ZM521.3,52.2L527.2,52.2L524.6,51.7L518.8,51.7ZM533.1,52.2L539.0,52.2L536.3,51.7L530.5,51.7ZM544.9,52.2L550.9,52.2L548.1,51.7L542.2,51.7ZM556.8,52.2L562.7,52.2L559.8,51.7L553.9,51.7ZM568.7,52.2L574.6,52.2L571.5,51.7L565.6,51.7Z" fill="#cbcbcb"/>
<path d="M-9.8,51.4L-4.1,51.4L-0.9,50.9L-6.6,50.9ZM1.7,51.4L7.4,51.4L10.5,50.9L4.8,50.9ZM13.2,51.4L19.0,51.4L21.9,50.9L16.2,50.9ZM24.7,51.4L30.5,51.4L33.3,50.9L27.6,50.9ZM36.3,51.4L42.1,51.4L44.7,51.0L39.0,50.9ZM47.8,51.4L53.6,51.4L56.1,51.0L50.4,51.0ZM59.4,51.4L65.1,51.4L67.6,51.0L61.9,51.0ZM70.9,51.4L76.7,51.5L79.0,51.0L73.3,51.0ZM82.5,51.5L88.3,51.5L90.4,51.0L84.7,51.0ZM94.0,51.5L99.8,51.5L101.9,51.0L96.1,51.0ZM105.6,51.5L111.4,51.5L113.3,51.0L107.6,51.0ZM117.2,51.5L122.9,51.5L124.8,51.0L119.0,51.0ZM128.7,51.5L134.5,51.5L136.2,51.0L130.5,51.0ZM140.3,51.5L146.1,51.5L147.7,51.0L141.9,51.0ZM151.9,51.5L157.7,51.5L159.1,51.0L153.4,51.0ZM163.5,51.5L169.3,51.5L170.6,51.0L164.8,51.0ZM175.1,51.5L180.9,51.5L182.0,51.0L176.3,51.0ZM186.6,51.5L192.4,51.5L193.5,51.0L187.8,51.0ZM198.2,51.5L204.0,51.5L205.0,51.0L199.2,51.0ZM209.8,51.5L215.6,51.5L216.5,51.0L210.7,51.0ZM221.4,51.5L227.3,51.5L227.9,51.1L222.2,51.1ZM233.1,51.5L238.9,51.5L239.4,51.1L233.7,51.1ZM244.7,51.5L250.5,51.5L250.9,51.1L245.2,51.1ZM256.3,51.6L262.1,51.6L262.4,51.1L256.7,51.1ZM267.9,51.6L273.7,51.6L273.9,51.1L268.2,51.1ZM279.5,51.6L285.3,51.6L285.4,51.1L279.7,51.1ZM291.2,51.6L297.0,51.6L296.9,51.1L291.2,51.1ZM302.8,51.6L308.6,51.6L308.4,51.1L302.7,51.1ZM314.4,51.6L320.2,51.6L319.9,51.1L314.2,51.1ZM326.1,51.6L331.9,51.6L331.5,51.1L325.7,51.1ZM337.7,51.6L343.5,51.6L343.0,51.1L337.2,51.1ZM349.4,51.6L355.2,51.6L354.5,51.1L348.7,51.1ZM361.0,51.6L366.8,51.6L366.0,51.1L360.3,51.1ZM372.7,51.6L378.5,51.6L377.6,51.1L371.8,51.1ZM384.3,51.6L390.2,51.6L389.1,51.1L383.3,51.1ZM396.0,51.6L401.8,51.6L400.7,51.2L394.9,51.1ZM407.7,51.6L413.5,51.6L412.2,51.2L406.4,51.2ZM419.4,51.6L425.2,51.6L423.8,51.2L418.0,51.2ZM431.0,51.7L436.9,51.7L435.3,51.2L429.5,51.2ZM442.7,51.7L448.6,51.7L446.9,51.2L441.1,51.2ZM454.4,51.7L460.2,51.7L458.4,51.2L452.7,51.2ZM466.1,51.7L471.9,51.7L470.0,51.2L464.2,51.2ZM477.8,51.7L483.6,51.7L481.6,51.2L475.8,51.2ZM489.5,51.7L495.3,51.7L493.1,51.2L487.4,51.2ZM501.2,51.7L507.0,51.7L504.7,51.2L498.9,51.2ZM512.9,51.7L518.8,51.7L516.3,51.2L510.5,51.2ZM524.6,51.7L530.5,51.7L527.9,51.2L522.1,51.2ZM536.3,51.7L542.2,51.7L539.5,51.2L533.7,51.2ZM548.1,51.7L553.9,51.7L551.1,51.2L545.3,51.2ZM559.8,51.7L565.6,51.7L562.7,51.2L556.9,51.2ZM571.5,51.7L577.4,51.7L574.3,51.2L568.5,51.2ZM-0.9,50.9L4.8,50.9L7.8,50.5L2.2,50.5ZM10.5,50.9L16.2,50.9L19.1,50.5L13.5,50.5ZM21.9,50.9L27.6,50.9L30.4,50.5L24.7,50.5ZM33.3,50.9L39.0,50.9L41.7,50.5L36.0,50.5ZM44.7,51.0L50.4,51.0L53.0,50.5L47.3,50.5ZM56.1,51.0L61.9,51.0L64.3,50.5L58.6,50.5ZM67.6,51.0L73.3,51.0L75.6,50.5L69.9,50.5ZM79.0,51.0L84.7,51.0L86.9,50.5L81.2,50.5ZM90.4,51.0L96.1,51.0L98.2,50.5L92.6,50.5ZM101.9,51.0L107.6,51.0L109.5,50.5L103.9,50.5ZM113.3,51.0L119.0,51.0L120.9,50.5L115.2,50.5ZM124.8,51.0L130.5,51.0L132.2,50.5L126.5,50.5ZM136.2,51.0L141.9,51.0L143.5,50.5L137.9,50.5ZM147.7,51.0L153.4,51.0L154.9,50.5L149.2,50.5ZM159.1,51.0L164.8,51.0L166.2,50.5L160.5,50.5ZM170.6,51.0L176.3,51.0L177.5,50.6L171.9,50.6ZM182.0,51.0L187.8,51.0L188.9,50.6L183.2,50.6ZM193.5,51.0L199.2,51.0L200.2,50.6L194.6,50.6ZM205.0,51.0L210.7,51.0L211.6,50.6L205.9,50.6ZM216.5,51.0L222.2,51.1L222.9,50.6L217.3,50.6ZM227.9,51.1L233.7,51.1L234.3,50.6L228.6,50.6ZM239.4,51.1L245.2,51.1L245.7,50.6L240.0,50.6ZM250.9,51.1L256.7,51.1L257.0,50.6L251.4,50.6ZM262.4,51.1L268.2,51.1L268.4,50.6L262.7,50.6ZM273.9,51.1L279.7,51.1L279.8,50.6L274.1,50.6ZM285.4,51.1L291.2,51.1L291.2,50.6L285.5,50.6ZM296.9,51.1L302.7,51.1L302.6,50.6L296.9,50.6ZM308.4,51.1L314.2,51.1L313.9,50.6L308.3,50.6ZM319.9,51.1L325.7,51.1L325.3,50.6L319.6,50.6ZM331.5,51.1L337.2,51.1L336.7,50.6L331.0,50.6ZM343.0,51.1L348.7,51.1L348.1,50.6L342.4,50.6ZM354.5,51.1L360.3,51.1L359.5,50.7L353.8,50.7ZM366.0,51.1L371.8,51.1L371.0,50.7L365.3,50.7ZM377.6,51.1L383.3,51.1L382.4,50.7L376.7,50.7ZM389.1,51.1L394.9,51.1L393.8,50.7L388.1,50.7ZM400.7,51.2L406.4,51.2L405.2,50.7L399.5,50.7ZM412.2,51.2L418.0,51.2L416.6,50.7L410.9,50.7ZM423.8,51.2L429.5,51.2L428.1,50.7L422.4,50.7ZM435.3,51.2L441.1,51.2L439.5,50.7L433.8,50.7ZM446.9,51.2L452.7,51.2L450.9,50.7L445.2,50.7ZM458.4,51.2L464.2,51.2L462.4,50.7L456.7,50.7ZM470.0,51.2L475.8,51.2L473.8,50.7L468.1,50.7ZM481.6,51.2L487.4,51.2L485.3,50.7L479.6,50.7ZM493.1,51.2L498.9,51.2L496.7,50.7L491.0,50.7ZM504.7,51.2L510.5,51.2L508.2,50.7L502.5,50.7ZM516.3,51.2L522.1,51.2L519.7,50.7L513.9,50.7ZM527.9,51.2L533.7,51.2L531.1,50.7L525.4,50.7ZM539.5,51.2L545.3,51.2L542.6,50.8L536.9,50.8ZM551.1,51.2L556.9,51.2L554.1,50.8L548.3,50.8ZM562.7,51.2L568.5,51.2L565.5,50.8L559.8,50.8ZM574.3,51.2L580.1,51.2L577.0,50.8L571.3,50.8ZM-3.5,50.5L2.2,50.5L5.2,50.0L-0.4,50.0ZM7.8,50.5L13.5,50.5L16.4,50.0L10.8,50.0ZM19.1,50.5L24.7,50.5L27.5,50.0L22.0,50.0ZM30.4,50.5L36.0,50.5L38.7,50.0L33.1,50.0ZM41.7,50.5L47.3,50.5L49.9,50.0L44.3,50.0ZM53.0,50.5L58.6,50.5L61.1,50.0L55.5,50.0ZM64.3,50.5L69.9,50.5L72.3,50.0L66.7,50.0ZM75.6,50.5L81.2,50.5L83.5,50.0L77.9,50.0ZM86.9,50.5L92.6,50.5L94.6,50.0L89.1,50.0ZM98.2,50.5L103.9,50.5L105.8,50.1L100.2,50.1ZM109.5,50.5L115.2,50.5L117.0,50.1L111.4,50.1ZM120.9,50.5L126.5,50.5L128.3,50.1L122.7,50.1ZM132.2,50.5L137.9,50.5L139.5,50.1L133.9,50.1ZM143.5,50.5L149.2,50.5L150.7,50.1L145.1,50.1ZM154.9,50.5L160.5,50.5L161.9,50.1L156.3,50.1ZM166.2,50.5L171.9,50.6L173.1,50.1L167.5,50.1ZM177.5,50.6L183.2,50.6L184.3,50.1L178.7,50.1ZM188.9,50.6L194.6,50.6L195.6,50.1L190.0,50.1ZM200.2,50.6L205.9,50.6L206.8,50.1L201.2,50.1ZM211.6,50.6L217.3,50.6L218.0,50.1L212.4,50.1ZM222.9,50.6L228.6,50.6L229.3,50.1L223.7,50.1ZM234.3,50.6L240.0,50.6L240.5,50.1L234.9,50.1ZM245.7,50.6L251.4,50.6L251.8,50.1L246.2,50.1ZM257.0,50.6L262.7,50.6L263.0,50.1L257.4,50.1ZM268.4,50.6L274.1,50.6L274.3,50.1L268.7,50.1ZM279.8,50.6L285.5,50.6L285.5,50.2L279.9,50.1ZM291.2,50.6L296.9,50.6L296.8,50.2L291.2,50.2ZM302.6,50.6L308.3,50.6L308.1,50.2L302.4,50.2ZM313.9,50.6L319.6,50.6L319.4,50.2L313.7,50.2ZM325.3,50.6L331.0,50.6L330.6,50.2L325.0,50.2ZM336.7,50.6L342.4,50.6L341.9,50.2L336.3,50.2ZM348.1,50.6L353.8,50.7L353.2,50.2L347.5,50.2ZM359.5,50.7L365.3,50.7L364.5,50.2L358.8,50.2ZM371.0,50.7L376.7,50.7L375.8,50.2L370.1,50.2ZM382.4,50.7L388.1,50.7L387.1,50.2L381.4,50.2ZM393.8,50.7L399.5,50.7L398.4,50.2L392.7,50.2ZM405.2,50.7L410.9,50.7L409.7,50.2L404.0,50.2ZM416.6,50.7L422.4,50.7L421.0,50.2L415.3,50.2ZM428.1,50.7L433.8,50.7L432.3,50.2L426.6,50.2ZM439.5,50.7L445.2,50.7L443.6,50.2L437.9,50.2ZM450.9,50.7L456.7,50.7L454.9,50.2L449.3,50.2ZM462.4,50.7L468.1,50.7L466.2,50.3L460.6,50.2ZM473.8,50.7L479.6,50.7L477.6,50.3L471.9,50.3ZM485.3,50.7L491.0,50.7L488.9,50.3L483.2,50.3ZM496.7,50.7L502.5,50.7L500.2,50.3L494.6,50.3ZM508.2,50.7L513.9,50.7L511.6,50.3L505.9,50.3ZM519.7,50.7L525.4,50.7L522.9,50.3L517.2,50.3ZM531.1,50.7L536.9,50.8L534.3,50.3L528.6,50.3ZM542.6,50.8L548.3,50.8L545.6,50.3L539.9,50.3ZM554.1,50.8L559.8,50.8L557.0,50.3L551.3,50.3ZM565.5,50.8L571.3,50.8L568.3,50.3L562.7,50.3ZM577.0,50.8L582.8,50.8L579.7,50.3L574.0,50.3ZM-6.0,50.0L-0.4,50.0L2.6,49.5L-2.9,49.5ZM5.2,50.0L10.8,50.0L13.7,49.6L8.2,49.6ZM16.4,50.0L22.0,50.0L24.7,49.6L19.2,49.6ZM27.5,50.0L33.1,50.0L35.8,49.6L30.3,49.6ZM38.7,50.0L44.3,50.0L46.9,49.6L41.3,49.6ZM49.9,50.0L55.5,50.0L57.9,49.6L52.4,49.6ZM61.1,50.0L66.7,50.0L69.0,49.6L63.5,49.6ZM72.3,50.0L77.9,50.0L80.1,49.6L74.5,49.6ZM83.5,50.0L89.1,50.0L91.2,49.6L85.6,49.6ZM94.6,50.0L100.2,50.1L102.2,49.6L96.7,49.6ZM105.8,50.1L111.4,50.1L113.3,49.6L107.8,49.6ZM117.0,50.1L122.7,50.1L124.4,49.6L118.9,49.6ZM128.3,50.1L133.9,50.1L135.5,49.6L129.9,49.6ZM139.5,50.1L145.1,50.1L146.6,49.6L141.0,49.6ZM150.7,50.1L156.3,50.1L157.7,49.6L152.1,49.6ZM161.9,50.1L167.5,50.1L168.8,49.6L163.2,49.6ZM173.1,50.1L178.7,50.1L179.9,49.6L174.3,49.6ZM184.3,50.1L190.0,50.1L191.0,49.7L185.5,49.6ZM195.6,50.1L201.2,50.1L202.1,49.7L196.6,49.7ZM206.8,50.1L212.4,50.1L213.2,49.7L207.7,49.7ZM218.0,50.1L223.7,50.1L224.4,49.7L218.8,49.7ZM229.3,50.1L234.9,50.1L235.5,49.7L229.9,49.7ZM240.5,50.1L246.2,50.1L246.6,49.7L241.1,49.7ZM251.8,50.1L257.4,50.1L257.8,49.7L252.2,49.7ZM263.0,50.1L268.7,50.1L268.9,49.7L263.3,49.7ZM274.3,50.1L279.9,50.1L280.0,49.7L274.5,49.7ZM285.5,50.2L291.2,50.2L291.2,49.7L285.6,49.7ZM296.8,50.2L302.4,50.2L302.3,49.7L296.8,49.7ZM308.1,50.2L313.7,50.2L313.5,49.7L307.9,49.7ZM319.4,50.2L325.0,50.2L324.6,49.7L319.1,49.7ZM330.6,50.2L336.3,50.2L335.8,49.7L330.2,49.7ZM341.9,50.2L347.5,50.2L347.0,49.7L341.4,49.7ZM353.2,50.2L358.8,50.2L358.1,49.7L352.6,49.7ZM364.5,50.2L370.1,50.2L369.3,49.7L363.7,49.7ZM375.8,50.2L381.4,50.2L380.5,49.8L374.9,49.7ZM387.1,50.2L392.7,50.2L391.7,49.8L386.1,49.8ZM398.4,50.2L404.0,50.2L402.8,49.8L397.3,49.8ZM409.7,50.2L415.3,50.2L414.0,49.8L408.4,49.8ZM421.0,50.2L426.6,50.2L425.2,49.8L419.6,49.8ZM432.3,50.2L437.9,50.2L436.4,49.8L430.8,49.8ZM443.6,50.2L449.3,50.2L447.6,49.8L442.0,49.8ZM454.9,50.2L460.6,50.2L458.8,49.8L453.2,49.8ZM466.2,50.3L471.9,50.3L470.0,49.8L464.4,49.8ZM477.6,50.3L483.2,50.3L481.2,49.8L475.6,49.8ZM488.9,50.3L494.6,50.3L492.5,49.8L486.8,49.8ZM500.2,50.3L505.9,50.3L503.7,49.8L498.1,49.8ZM511.6,50.3L517.2,50.3L514.9,49.8L509.3,49.8ZM522.9,50.3L528.6,50.3L526.1,49.8L520.5,49.8ZM534.3,50.3L539.9,50.3L537.4,49.8L531.7,49.8ZM545.6,50.3L551.3,50.3L548.6,49.8L543.0,49.8ZM557.0,50.3L562.7,50.3L559.8,49.8L554.2,49.8ZM568.3,50.3L574.0,50.3L571.1,49.9L565.4,49.8ZM-8.4,49.5L-2.9,49.5L0.1,49.1L-5.3,49.1ZM2.6,49.5L8.2,49.6L11.1,49.1L5.6,49.1ZM13.7,49.6L19.2,49.6L22.0,49.1L16.5,49.1ZM24.7,49.6L30.3,49.6L33.0,49.1L27.5,49.1ZM35.8,49.6L41.3,49.6L43.9,49.1L38.4,49.1ZM46.9,49.6L52.4,49.6L54.9,49.1L49.4,49.1ZM57.9,49.6L63.5,49.6L65.8,49.1L60.3,49.1ZM69.0,49.6L74.5,49.6L76.8,49.1L71.3,49.1ZM80.1,49.6L85.6,49.6L87.7,49.2L82.2,49.2ZM91.2,49.6L96.7,49.6L98.7,49.2L93.2,49.2ZM102.2,49.6L107.8,49.6L109.7,49.2L104.2,49.2ZM113.3,49.6L118.9,49.6L120.6,49.2L115.1,49.2ZM124.4,49.6L129.9,49.6L131.6,49.2L126.1,49.2ZM135.5,49.6L141.0,49.6L142.6,49.2L137.1,49.2ZM146.6,49.6L152.1,49.6L153.6,49.2L148.1,49.2ZM157.7,49.6L163.2,49.6L164.6,49.2L159.1,49.2ZM168.8,49.6L174.3,49.6L175.6,49.2L170.1,49.2ZM179.9,49.6L185.5,49.6L186.5,49.2L181.1,49.2ZM191.0,49.7L196.6,49.7L197.5,49.2L192.0,49.2ZM202.1,49.7L207.7,49.7L208.5,49.2L203.0,49.2ZM213.2,49.7L218.8,49.7L219.6,49.2L214.1,49.2ZM224.4,49.7L229.9,49.7L230.6,49.2L225.1,49.2ZM235.5,49.7L241.1,49.7L241.6,49.2L236.1,49.2ZM246.6,49.7L252.2,49.7L252.6,49.2L247.1,49.2ZM257.8,49.7L263.3,49.7L263.6,49.2L258.1,49.2ZM268.9,49.7L274.5,49.7L274.6,49.3L269.1,49.2ZM280.0,49.7L285.6,49.7L285.7,49.3L280.2,49.3ZM291.2,49.7L296.8,49.7L296.7,49.3L291.2,49.3ZM302.3,49.7L307.9,49.7L307.7,49.3L302.2,49.3ZM313.5,49.7L319.1,49.7L318.8,49.3L313.3,49.3ZM324.6,49.7L330.2,49.7L329.8,49.3L324.3,49.3ZM335.8,49.7L341.4,49.7L340.9,49.3L335.3,49.3ZM347.0,49.7L352.6,49.7L351.9,49.3L346.4,49.3ZM358.1,49.7L363.7,49.7L363.0,49.3L357.5,49.3ZM369.3,49.7L374.9,49.7L374.0,49.3L368.5,49.3ZM380.5,49.8L386.1,49.8L385.1,49.3L379.6,49.3ZM391.7,49.8L397.3,49.8L396.2,49.3L390.6,49.3ZM402.8,49.8L408.4,49.8L407.2,49.3L401.7,49.3ZM414.0,49.8L419.6,49.8L418.3,49.3L412.8,49.3ZM425.2,49.8L430.8,49.8L429.4,49.3L423.9,49.3ZM436.4,49.8L442.0,49.8L440.5,49.3L434.9,49.3ZM447.6,49.8L453.2,49.8L451.6,49.3L446.0,49.3ZM458.8,49.8L464.4,49.8L462.6,49.4L457.1,49.3ZM470.0,49.8L475.6,49.8L473.7,49.4L468.2,49.4ZM481.2,49.8L486.8,49.8L484.8,49.4L479.3,49.4ZM492.5,49.8L498.1,49.8L495.9,49.4L490.4,49.4ZM503.7,49.8L509.3,49.8L507.0,49.4L501.5,49.4ZM514.9,49.8L520.5,49.8L518.1,49.4L512.6,49.4ZM526.1,49.8L531.7,49.8L529.3,49.4L523.7,49.4ZM537.4,49.8L543.0,49.8L540.4,49.4L534.8,49.4ZM548.6,49.8L554.2,49.8L551.5,49.4L545.9,49.4ZM559.8,49.8L565.4,49.8L562.6,49.4L557.1,49.4ZM571.1,49.9L576.7,49.9L573.7,49.4L568.2,49.4ZM0.1,49.1L5.6,49.1L8.5,48.7L3.1,48.7ZM11.1,49.1L16.5,49.1L19.3,48.7L13.9,48.7ZM22.0,49.1L27.5,49.1L30.2,48.7L24.7,48.7ZM33.0,49.1L38.4,49.1L41.0,48.7L35.6,48.7ZM43.9,49.1L49.4,49.1L51.8,48.7L46.4,48.7ZM54.9,49.1L60.3,49.1L62.7,48.7L57.3,48.7ZM65.8,49.1L71.3,49.1L73.5,48.7L68.1,48.7ZM76.8,49.1L82.2,49.2L84.4,48.7L78.9,48.7ZM87.7,49.2L93.2,49.2L95.2,48.7L89.8,48.7ZM98.7,49.2L104.2,49.2L106.1,48.7L100.7,48.7ZM109.7,49.2L115.1,49.2L116.9,48.7L111.5,48.7ZM120.6,49.2L126.1,49.2L127.8,48.7L122.4,48.7ZM131.6,49.2L137.1,49.2L138.7,48.7L133.2,48.7ZM142.6,49.2L148.1,49.2L149.5,48.8L144.1,48.8ZM153.6,49.2L159.1,49.2L160.4,48.8L155.0,48.8ZM164.6,49.2L170.1,49.2L171.3,48.8L165.9,48.8ZM175.6,49.2L181.1,49.2L182.2,48.8L176.7,48.8ZM186.5,49.2L192.0,49.2L193.1,48.8L187.6,48.8ZM197.5,49.2L203.0,49.2L204.0,48.8L198.5,48.8ZM208.5,49.2L214.1,49.2L214.8,48.8L209.4,48.8ZM219.6,49.2L225.1,49.2L225.7,48.8L220.3,48.8ZM230.6,49.2L236.1,49.2L236.6,48.8L231.2,48.8ZM241.6,49.2L247.1,49.2L247.5,48.8L242.1,48.8ZM252.6,49.2L258.1,49.2L258.5,48.8L253.0,48.8ZM263.6,49.2L269.1,49.2L269.4,48.8L263.9,48.8ZM274.6,49.3L280.2,49.3L280.3,48.8L274.8,48.8ZM285.7,49.3L291.2,49.3L291.2,48.8L285.7,48.8ZM296.7,49.3L302.2,49.3L302.1,48.8L296.7,48.8ZM307.7,49.3L313.3,49.3L313.0,48.8L307.6,48.8ZM318.8,49.3L324.3,49.3L324.0,48.8L318.5,48.8ZM329.8,49.3L335.3,49.3L334.9,48.8L329.4,48.8ZM340.9,49.3L346.4,49.3L345.8,48.9L340.4,48.9ZM351.9,49.3L357.5,49.3L356.8,48.9L351.3,48.9ZM363.0,49.3L368.5,49.3L367.7,48.9L362.3,48.9ZM374.0,49.3L379.6,49.3L378.7,48.9L373.2,48.9ZM385.1,49.3L390.6,49.3L389.6,48.9L384.1,48.9ZM396.2,49.3L401.7,49.3L400.6,48.9L395.1,48.9ZM407.2,49.3L412.8,49.3L411.5,48.9L406.1,48.9ZM418.3,49.3L423.9,49.3L422.5,48.9L417.0,48.9ZM429.4,49.3L434.9,49.3L433.5,48.9L428.0,48.9ZM440.5,49.3L446.0,49.3L444.4,48.9L439.0,48.9ZM451.6,49.3L457.1,49.3L455.4,48.9L449.9,48.9ZM462.6,49.4L468.2,49.4L466.4,48.9L460.9,48.9ZM473.7,49.4L479.3,49.4L477.4,48.9L471.9,48.9ZM484.8,49.4L490.4,49.4L488.4,48.9L482.9,48.9ZM495.9,49.4L501.5,49.4L499.3,48.9L493.8,48.9ZM507.0,49.4L512.6,49.4L510.3,48.9L504.8,48.9ZM518.1,49.4L523.7,49.4L521.3,48.9L515.8,48.9ZM529.3,49.4L534.8,49.4L532.3,49.0L526.8,48.9ZM540.4,49.4L545.9,49.4L543.3,49.0L537.8,49.0ZM551.5,49.4L557.1,49.4L554.3,49.0L548.8,49.0ZM562.6,49.4L568.2,49.4L565.4,49.0L559.8,49.0ZM573.7,49.4L579.3,49.4L576.4,49.0L570.9,49.0ZM-2.3,48.7L3.1,48.7L6.0,48.3L0.6,48.3ZM8.5,48.7L13.9,48.7L16.7,48.3L11.3,48.3ZM19.3,48.7L24.7,48.7L27.4,48.3L22.1,48.3ZM30.2,48.7L35.6,48.7L38.2,48.3L32.8,48.3ZM41.0,48.7L46.4,48.7L48.9,48.3L43.5,48.3ZM51.8,48.7L57.3,48.7L59.6,48.3L54.2,48.3ZM62.7,48.7L68.1,48.7L70.3,48.3L65.0,48.3ZM73.5,48.7L78.9,48.7L81.1,48.3L75.7,48.3ZM84.4,48.7L89.8,48.7L91.8,48.3L86.5,48.3ZM95.2,48.7L100.7,48.7L102.6,48.3L97.2,48.3ZM106.1,48.7L111.5,48.7L113.3,48.3L107.9,48.3ZM116.9,48.7L122.4,48.7L124.1,48.3L118.7,48.3ZM127.8,48.7L133.2,48.7L134.8,48.3L129.5,48.3ZM138.7,48.7L144.1,48.8L145.6,48.3L140.2,48.3ZM149.5,48.8L155.0,48.8L156.4,48.3L151.0,48.3ZM160.4,48.8L165.9,48.8L167.1,48.3L161.7,48.3ZM171.3,48.8L176.7,48.8L177.9,48.3L172.5,48.3ZM182.2,48.8L187.6,48.8L188.7,48.3L183.3,48.3ZM193.1,48.8L198.5,48.8L199.4,48.4L194.1,48.4ZM204.0,48.8L209.4,48.8L210.2,48.4L204.8,48.4ZM214.8,48.8L220.3,48.8L221.0,48.4L215.6,48.4ZM225.7,48.8L231.2,48.8L231.8,48.4L226.4,48.4ZM236.6,48.8L242.1,48.8L242.6,48.4L237.2,48.4ZM247.5,48.8L253.0,48.8L253.4,48.4L248.0,48.4ZM258.5,48.8L263.9,48.8L264.2,48.4L258.8,48.4ZM269.4,48.8L274.8,48.8L275.0,48.4L269.6,48.4ZM280.3,48.8L285.7,48.8L285.8,48.4L280.4,48.4ZM291.2,48.8L296.7,48.8L296.6,48.4L291.2,48.4ZM302.1,48.8L307.6,48.8L307.4,48.4L302.0,48.4ZM313.0,48.8L318.5,48.8L318.2,48.4L312.8,48.4ZM324.0,48.8L329.4,48.8L329.1,48.4L323.6,48.4ZM334.9,48.8L340.4,48.9L339.9,48.4L334.5,48.4ZM345.8,48.9L351.3,48.9L350.7,48.4L345.3,48.4ZM356.8,48.9L362.3,48.9L361.5,48.4L356.1,48.4ZM367.7,48.9L373.2,48.9L372.4,48.4L367.0,48.4ZM378.7,48.9L384.1,48.9L383.2,48.4L377.8,48.4ZM389.6,48.9L395.1,48.9L394.1,48.5L388.6,48.5ZM400.6,48.9L406.1,48.9L404.9,48.5L399.5,48.5ZM411.5,48.9L417.0,48.9L415.8,48.5L410.3,48.5ZM422.5,48.9L428.0,48.9L426.6,48.5L421.2,48.5ZM433.5,48.9L439.0,48.9L437.5,48.5L432.0,48.5ZM444.4,48.9L449.9,48.9L448.3,48.5L442.9,48.5ZM455.4,48.9L460.9,48.9L459.2,48.5L453.8,48.5ZM466.4,48.9L471.9,48.9L470.1,48.5L464.6,48.5ZM477.4,48.9L482.9,48.9L480.9,48.5L475.5,48.5ZM488.4,48.9L493.8,48.9L491.8,48.5L486.4,48.5ZM499.3,48.9L504.8,48.9L502.7,48.5L497.2,48.5ZM510.3,48.9L515.8,48.9L513.6,48.5L508.1,48.5ZM521.3,48.9L526.8,48.9L524.5,48.5L519.0,48.5ZM532.3,49.0L537.8,49.0L535.3,48.5L529.9,48.5ZM543.3,49.0L548.8,49.0L546.2,48.5L540.8,48.5ZM554.3,49.0L559.8,49.0L557.1,48.5L551.7,48.5ZM565.4,49.0L570.9,49.0L568.0,48.5L562.6,48.5ZM576.4,49.0L581.9,49.0L578.9,48.5L573.5,48.5ZM-4.7,48.2L0.6,48.3L3.5,47.8L-1.8,47.8ZM6.0,48.3L11.3,48.3L14.1,47.8L8.8,47.8ZM16.7,48.3L22.1,48.3L24.7,47.8L19.4,47.8ZM27.4,48.3L32.8,48.3L35.4,47.9L30.1,47.9ZM38.2,48.3L43.5,48.3L46.0,47.9L40.7,47.9ZM48.9,48.3L54.2,48.3L56.6,47.9L51.3,47.9ZM59.6,48.3L65.0,48.3L67.2,47.9L61.9,47.9ZM70.3,48.3L75.7,48.3L77.9,47.9L72.5,47.9ZM81.1,48.3L86.5,48.3L88.5,47.9L83.2,47.9ZM91.8,48.3L97.2,48.3L99.1,47.9L93.8,47.9ZM102.6,48.3L107.9,48.3L109.8,47.9L104.5,47.9ZM113.3,48.3L118.7,48.3L120.4,47.9L115.1,47.9ZM124.1,48.3L129.5,48.3L131.1,47.9L125.7,47.9ZM134.8,48.3L140.2,48.3L141.7,47.9L136.4,47.9ZM145.6,48.3L151.0,48.3L152.4,47.9L147.0,47.9ZM156.4,48.3L161.7,48.3L163.0,47.9L157.7,47.9ZM167.1,48.3L172.5,48.3L173.7,47.9L168.4,47.9ZM177.9,48.3L183.3,48.3L184.4,47.9L179.0,47.9ZM188.7,48.3L194.1,48.4L195.0,47.9L189.7,47.9ZM199.4,48.4L204.8,48.4L205.7,47.9L200.4,47.9ZM210.2,48.4L215.6,48.4L216.4,47.9L211.0,47.9ZM221.0,48.4L226.4,48.4L227.1,48.0L221.7,47.9ZM231.8,48.4L237.2,48.4L237.7,48.0L232.4,48.0ZM242.6,48.4L248.0,48.4L248.4,48.0L243.1,48.0ZM253.4,48.4L258.8,48.4L259.1,48.0L253.8,48.0ZM264.2,48.4L269.6,48.4L269.8,48.0L264.5,48.0ZM275.0,48.4L280.4,48.4L280.5,48.0L275.2,48.0ZM285.8,48.4L291.2,48.4L291.2,48.0L285.9,48.0ZM296.6,48.4L302.0,48.4L301.9,48.0L296.6,48.0ZM307.4,48.4L312.8,48.4L312.6,48.0L307.3,48.0ZM318.2,48.4L323.6,48.4L323.3,48.0L318.0,48.0ZM329.1,48.4L334.5,48.4L334.0,48.0L328.7,48.0ZM339.9,48.4L345.3,48.4L344.8,48.0L339.4,48.0ZM350.7,48.4L356.1,48.4L355.5,48.0L350.1,48.0ZM361.5,48.4L367.0,48.4L366.2,48.0L360.8,48.0ZM372.4,48.4L377.8,48.4L376.9,48.0L371.6,48.0ZM383.2,48.4L388.6,48.5L387.7,48.0L382.3,48.0ZM394.1,48.5L399.5,48.5L398.4,48.0L393.0,48.0ZM404.9,48.5L410.3,48.5L409.1,48.0L403.8,48.0ZM415.8,48.5L421.2,48.5L419.9,48.1L414.5,48.0ZM426.6,48.5L432.0,48.5L430.6,48.1L425.3,48.1ZM437.5,48.5L442.9,48.5L441.4,48.1L436.0,48.1ZM448.3,48.5L453.8,48.5L452.1,48.1L446.8,48.1ZM459.2,48.5L464.6,48.5L462.9,48.1L457.5,48.1ZM470.1,48.5L475.5,48.5L473.7,48.1L468.3,48.1ZM480.9,48.5L486.4,48.5L484.4,48.1L479.0,48.1ZM491.8,48.5L497.2,48.5L495.2,48.1L489.8,48.1ZM502.7,48.5L508.1,48.5L506.0,48.1L500.6,48.1ZM513.6,48.5L519.0,48.5L516.7,48.1L511.3,48.1ZM524.5,48.5L529.9,48.5L527.5,48.1L522.1,48.1ZM535.3,48.5L540.8,48.5L538.3,48.1L532.9,48.1ZM546.2,48.5L551.7,48.5L549.1,48.1L543.7,48.1ZM557.1,48.5L562.6,48.5L559.9,48.1L554.5,48.1ZM568.0,48.5L573.5,48.5L570.7,48.1L565.3,48.1ZM-7.1,47.8L-1.8,47.8L1.1,47.4L-4.1,47.4ZM3.5,47.8L8.8,47.8L11.6,47.4L6.4,47.4ZM14.1,47.8L19.4,47.8L22.1,47.4L16.9,47.4ZM24.7,47.8L30.1,47.9L32.6,47.4L27.4,47.4ZM35.4,47.9L40.7,47.9L43.1,47.5L37.9,47.4ZM46.0,47.9L51.3,47.9L53.7,47.5L48.4,47.5ZM56.6,47.9L61.9,47.9L64.2,47.5L58.9,47.5ZM67.2,47.9L72.5,47.9L74.7,47.5L69.4,47.5ZM77.9,47.9L83.2,47.9L85.2,47.5L80.0,47.5ZM88.5,47.9L93.8,47.9L95.8,47.5L90.5,47.5ZM99.1,47.9L104.5,47.9L106.3,47.5L101.0,47.5ZM109.8,47.9L115.1,47.9L116.8,47.5L111.6,47.5ZM120.4,47.9L125.7,47.9L127.4,47.5L122.1,47.5ZM131.1,47.9L136.4,47.9L137.9,47.5L132.7,47.5ZM141.7,47.9L147.0,47.9L148.5,47.5L143.2,47.5ZM152.4,47.9L157.7,47.9L159.0,47.5L153.7,47.5ZM163.0,47.9L168.4,47.9L169.6,47.5L164.3,47.5ZM173.7,47.9L179.0,47.9L180.1,47.5L174.9,47.5ZM184.4,47.9L189.7,47.9L190.7,47.5L185.4,47.5ZM195.0,47.9L200.4,47.9L201.3,47.5L196.0,47.5ZM205.7,47.9L211.0,47.9L211.8,47.5L206.5,47.5ZM216.4,47.9L221.7,47.9L222.4,47.5L217.1,47.5ZM227.1,48.0L232.4,48.0L233.0,47.5L227.7,47.5ZM237.7,48.0L243.1,48.0L243.6,47.6L238.3,47.5ZM248.4,48.0L253.8,48.0L254.1,47.6L248.9,47.6ZM259.1,48.0L264.5,48.0L264.7,47.6L259.4,47.6ZM269.8,48.0L275.2,48.0L275.3,47.6L270.0,47.6ZM280.5,48.0L285.9,48.0L285.9,47.6L280.6,47.6ZM291.2,48.0L296.6,48.0L296.5,47.6L291.2,47.6ZM301.9,48.0L307.3,48.0L307.1,47.6L301.8,47.6ZM312.6,48.0L318.0,48.0L317.7,47.6L312.4,47.6ZM323.3,48.0L328.7,48.0L328.3,47.6L323.0,47.6ZM334.0,48.0L339.4,48.0L338.9,47.6L333.6,47.6ZM344.8,48.0L350.1,48.0L349.5,47.6L344.2,47.6ZM355.5,48.0L360.8,48.0L360.2,47.6L354.9,47.6ZM366.2,48.0L371.6,48.0L370.8,47.6L365.5,47.6ZM376.9,48.0L382.3,48.0L381.4,47.6L376.1,47.6ZM387.7,48.0L393.0,48.0L392.0,47.6L386.7,47.6ZM398.4,48.0L403.8,48.0L402.7,47.6L397.3,47.6ZM409.1,48.0L414.5,48.0L413.3,47.6L408.0,47.6ZM419.9,48.1L425.3,48.1L423.9,47.6L418.6,47.6ZM430.6,48.1L436.0,48.1L434.6,47.6L429.3,47.6ZM441.4,48.1L446.8,48.1L445.2,47.7L439.9,47.7ZM452.1,48.1L457.5,48.1L455.9,47.7L450.5,47.7ZM462.9,48.1L468.3,48.1L466.5,47.7L461.2,47.7ZM473.7,48.1L479.0,48.1L477.2,47.7L471.9,47.7ZM484.4,48.1L489.8,48.1L487.8,47.7L482.5,47.7ZM495.2,48.1L500.6,48.1L498.5,47.7L493.2,47.7ZM506.0,48.1L511.3,48.1L509.2,47.7L503.8,47.7ZM516.7,48.1L522.1,48.1L519.8,47.7L514.5,47.7ZM527.5,48.1L532.9,48.1L530.5,47.7L525.2,47.7ZM538.3,48.1L543.7,48.1L541.2,47.7L535.8,47.7ZM549.1,48.1L554.5,48.1L551.9,47.7L546.5,47.7ZM559.9,48.1L565.3,48.1L562.6,47.7L557.2,47.7ZM570.7,48.1L576.1,48.1L573.2,47.7L567.9,47.7ZM-9.4,47.4L-4.1,47.4L-1.3,47.0L-6.5,47.0ZM1.1,47.4L6.4,47.4L9.1,47.0L3.9,47.0ZM11.6,47.4L16.9,47.4L19.5,47.0L14.3,47.0ZM22.1,47.4L27.4,47.4L30.0,47.0L24.7,47.0ZM32.6,47.4L37.9,47.4L40.4,47.1L35.2,47.0ZM43.1,47.5L48.4,47.5L50.8,47.1L45.6,47.1ZM53.7,47.5L58.9,47.5L61.2,47.1L56.0,47.1ZM64.2,47.5L69.4,47.5L71.6,47.1L66.4,47.1ZM74.7,47.5L80.0,47.5L82.0,47.1L76.8,47.1ZM85.2,47.5L90.5,47.5L92.5,47.1L87.2,47.1ZM95.8,47.5L101.0,47.5L102.9,47.1L97.7,47.1ZM106.3,47.5L111.6,47.5L113.3,47.1L108.1,47.1ZM116.8,47.5L122.1,47.5L123.8,47.1L118.5,47.1ZM127.4,47.5L132.7,47.5L134.2,47.1L129.0,47.1ZM137.9,47.5L143.2,47.5L144.6,47.1L139.4,47.1ZM148.5,47.5L153.7,47.5L155.1,47.1L149.9,47.1ZM159.0,47.5L164.3,47.5L165.5,47.1L160.3,47.1ZM169.6,47.5L174.9,47.5L176.0,47.1L170.8,47.1ZM180.1,47.5L185.4,47.5L186.5,47.1L181.2,47.1ZM190.7,47.5L196.0,47.5L196.9,47.1L191.7,47.1ZM201.3,47.5L206.5,47.5L207.4,47.1L202.1,47.1ZM211.8,47.5L217.1,47.5L217.8,47.1L212.6,47.1ZM222.4,47.5L227.7,47.5L228.3,47.1L223.1,47.1ZM233.0,47.5L238.3,47.5L238.8,47.1L233.6,47.1ZM243.6,47.6L248.9,47.6L249.3,47.2L244.0,47.2ZM254.1,47.6L259.4,47.6L259.8,47.2L254.5,47.2ZM264.7,47.6L270.0,47.6L270.2,47.2L265.0,47.2ZM275.3,47.6L280.6,47.6L280.7,47.2L275.5,47.2ZM285.9,47.6L291.2,47.6L291.2,47.2L286.0,47.2ZM296.5,47.6L301.8,47.6L301.7,47.2L296.5,47.2ZM307.1,47.6L312.4,47.6L312.2,47.2L307.0,47.2ZM317.7,47.6L323.0,47.6L322.7,47.2L317.5,47.2ZM328.3,47.6L333.6,47.6L333.2,47.2L328.0,47.2ZM338.9,47.6L344.2,47.6L343.7,47.2L338.5,47.2ZM349.5,47.6L354.9,47.6L354.2,47.2L349.0,47.2ZM360.2,47.6L365.5,47.6L364.7,47.2L359.5,47.2ZM370.8,47.6L376.1,47.6L375.3,47.2L370.0,47.2ZM381.4,47.6L386.7,47.6L385.8,47.2L380.5,47.2ZM392.0,47.6L397.3,47.6L396.3,47.2L391.1,47.2ZM402.7,47.6L408.0,47.6L406.8,47.2L401.6,47.2ZM413.3,47.6L418.6,47.6L417.4,47.2L412.1,47.2ZM423.9,47.6L429.3,47.6L427.9,47.2L422.6,47.2ZM434.6,47.6L439.9,47.7L438.4,47.2L433.2,47.2ZM445.2,47.7L450.5,47.7L449.0,47.3L443.7,47.3ZM455.9,47.7L461.2,47.7L459.5,47.3L454.3,47.3ZM466.5,47.7L471.9,47.7L470.1,47.3L464.8,47.3ZM477.2,47.7L482.5,47.7L480.6,47.3L475.4,47.3ZM487.8,47.7L493.2,47.7L491.2,47.3L485.9,47.3ZM498.5,47.7L503.8,47.7L501.8,47.3L496.5,47.3ZM509.2,47.7L514.5,47.7L512.3,47.3L507.0,47.3ZM519.8,47.7L525.2,47.7L522.9,47.3L517.6,47.3ZM530.5,47.7L535.8,47.7L533.5,47.3L528.2,47.3ZM541.2,47.7L546.5,47.7L544.0,47.3L538.7,47.3ZM551.9,47.7L557.2,47.7L554.6,47.3L549.3,47.3ZM562.6,47.7L567.9,47.7L565.2,47.3L559.9,47.3ZM573.2,47.7L578.6,47.7L575.8,47.3L570.5,47.3Z" fill="#cccccc"/>
<path d="M-1.3,47.0L3.9,47.0L6.7,46.6L1.6,46.6ZM9.1,47.0L14.3,47.0L17.0,46.6L11.9,46.6ZM19.5,47.0L24.7,47.0L27.3,46.7L22.2,46.7ZM30.0,47.0L35.2,47.0L37.6,46.7L32.5,46.7ZM40.4,47.1L45.6,47.1L47.9,46.7L42.8,46.7ZM50.8,47.1L56.0,47.1L58.3,46.7L53.1,46.7ZM61.2,47.1L66.4,47.1L68.6,46.7L63.4,46.7ZM71.6,47.1L76.8,47.1L78.9,46.7L73.7,46.7ZM82.0,47.1L87.2,47.1L89.2,46.7L84.1,46.7ZM92.5,47.1L97.7,47.1L99.6,46.7L94.4,46.7ZM102.9,47.1L108.1,47.1L109.9,46.7L104.7,46.7ZM113.3,47.1L118.5,47.1L120.2,46.7L115.1,46.7ZM123.8,47.1L129.0,47.1L130.6,46.7L125.4,46.7ZM134.2,47.1L139.4,47.1L140.9,46.7L135.7,46.7ZM144.6,47.1L149.9,47.1L151.2,46.7L146.1,46.7ZM155.1,47.1L160.3,47.1L161.6,46.7L156.4,46.7ZM165.5,47.1L170.8,47.1L171.9,46.7L166.8,46.7ZM176.0,47.1L181.2,47.1L182.3,46.7L177.1,46.7ZM186.5,47.1L191.7,47.1L192.7,46.7L187.5,46.7ZM196.9,47.1L202.1,47.1L203.0,46.7L197.8,46.7ZM207.4,47.1L212.6,47.1L213.4,46.7L208.2,46.7ZM217.8,47.1L223.1,47.1L223.7,46.8L218.6,46.7ZM228.3,47.1L233.6,47.1L234.1,46.8L228.9,46.8ZM238.8,47.1L244.0,47.2L244.5,46.8L239.3,46.8ZM249.3,47.2L254.5,47.2L254.9,46.8L249.7,46.8ZM259.8,47.2L265.0,47.2L265.3,46.8L260.1,46.8ZM270.2,47.2L275.5,47.2L275.6,46.8L270.4,46.8ZM280.7,47.2L286.0,47.2L286.0,46.8L280.8,46.8ZM291.2,47.2L296.5,47.2L296.4,46.8L291.2,46.8ZM301.7,47.2L307.0,47.2L306.8,46.8L301.6,46.8ZM312.2,47.2L317.5,47.2L317.2,46.8L312.0,46.8ZM322.7,47.2L328.0,47.2L327.6,46.8L322.4,46.8ZM333.2,47.2L338.5,47.2L338.0,46.8L332.8,46.8ZM343.7,47.2L349.0,47.2L348.4,46.8L343.2,46.8ZM354.2,47.2L359.5,47.2L358.8,46.8L353.6,46.8ZM364.7,47.2L370.0,47.2L369.2,46.8L364.0,46.8ZM375.3,47.2L380.5,47.2L379.7,46.8L374.5,46.8ZM385.8,47.2L391.1,47.2L390.1,46.8L384.9,46.8ZM396.3,47.2L401.6,47.2L400.5,46.8L395.3,46.8ZM406.8,47.2L412.1,47.2L410.9,46.8L405.7,46.8ZM417.4,47.2L422.6,47.2L421.4,46.8L416.2,46.8ZM427.9,47.2L433.2,47.2L431.8,46.9L426.6,46.8ZM438.4,47.2L443.7,47.3L442.2,46.9L437.0,46.9ZM449.0,47.3L454.3,47.3L452.7,46.9L447.5,46.9ZM459.5,47.3L464.8,47.3L463.1,46.9L457.9,46.9ZM470.1,47.3L475.4,47.3L473.6,46.9L468.4,46.9ZM480.6,47.3L485.9,47.3L484.0,46.9L478.8,46.9ZM491.2,47.3L496.5,47.3L494.5,46.9L489.3,46.9ZM501.8,47.3L507.0,47.3L504.9,46.9L499.7,46.9ZM512.3,47.3L517.6,47.3L515.4,46.9L510.2,46.9ZM522.9,47.3L528.2,47.3L525.9,46.9L520.6,46.9ZM533.5,47.3L538.7,47.3L536.3,46.9L531.1,46.9ZM544.0,47.3L549.3,47.3L546.8,46.9L541.6,46.9ZM554.6,47.3L559.9,47.3L557.3,46.9L552.0,46.9ZM565.2,47.3L570.5,47.3L567.8,46.9L562.5,46.9ZM575.8,47.3L581.1,47.3L578.2,46.9L573.0,46.9ZM-3.6,46.6L1.6,46.6L4.3,46.3L-0.8,46.3ZM6.7,46.6L11.9,46.6L14.5,46.3L9.4,46.3ZM17.0,46.6L22.2,46.7L24.7,46.3L19.6,46.3ZM27.3,46.7L32.5,46.7L35.0,46.3L29.9,46.3ZM37.6,46.7L42.8,46.7L45.2,46.3L40.1,46.3ZM47.9,46.7L53.1,46.7L55.4,46.3L50.3,46.3ZM58.3,46.7L63.4,46.7L65.6,46.3L60.5,46.3ZM68.6,46.7L73.7,46.7L75.8,46.3L70.7,46.3ZM78.9,46.7L84.1,46.7L86.0,46.3L80.9,46.3ZM89.2,46.7L94.4,46.7L96.3,46.3L91.2,46.3ZM99.6,46.7L104.7,46.7L106.5,46.3L101.4,46.3ZM109.9,46.7L115.1,46.7L116.7,46.3L111.6,46.3ZM120.2,46.7L125.4,46.7L127.0,46.3L121.9,46.3ZM130.6,46.7L135.7,46.7L137.2,46.3L132.1,46.3ZM140.9,46.7L146.1,46.7L147.5,46.3L142.3,46.3ZM151.2,46.7L156.4,46.7L157.7,46.3L152.6,46.3ZM161.6,46.7L166.8,46.7L168.0,46.3L162.8,46.3ZM171.9,46.7L177.1,46.7L178.2,46.3L173.1,46.3ZM182.3,46.7L187.5,46.7L188.5,46.3L183.3,46.3ZM192.7,46.7L197.8,46.7L198.7,46.4L193.6,46.4ZM203.0,46.7L208.2,46.7L209.0,46.4L203.9,46.4ZM213.4,46.7L218.6,46.7L219.3,46.4L214.1,46.4ZM223.7,46.8L228.9,46.8L229.5,46.4L224.4,46.4ZM234.1,46.8L239.3,46.8L239.8,46.4L234.7,46.4ZM244.5,46.8L249.7,46.8L250.1,46.4L244.9,46.4ZM254.9,46.8L260.1,46.8L260.4,46.4L255.2,46.4ZM265.3,46.8L270.4,46.8L270.7,46.4L265.5,46.4ZM275.6,46.8L280.8,46.8L280.9,46.4L275.8,46.4ZM286.0,46.8L291.2,46.8L291.2,46.4L286.1,46.4ZM296.4,46.8L301.6,46.8L301.5,46.4L296.4,46.4ZM306.8,46.8L312.0,46.8L311.8,46.4L306.7,46.4ZM317.2,46.8L322.4,46.8L322.1,46.4L317.0,46.4ZM327.6,46.8L332.8,46.8L332.4,46.4L327.3,46.4ZM338.0,46.8L343.2,46.8L342.7,46.4L337.6,46.4ZM348.4,46.8L353.6,46.8L353.0,46.4L347.9,46.4ZM358.8,46.8L364.0,46.8L363.3,46.4L358.2,46.4ZM369.2,46.8L374.5,46.8L373.7,46.4L368.5,46.4ZM379.7,46.8L384.9,46.8L384.0,46.4L378.8,46.4ZM390.1,46.8L395.3,46.8L394.3,46.4L389.1,46.4ZM400.5,46.8L405.7,46.8L404.6,46.5L399.5,46.5ZM410.9,46.8L416.2,46.8L415.0,46.5L409.8,46.5ZM421.4,46.8L426.6,46.8L425.3,46.5L420.1,46.5ZM431.8,46.9L437.0,46.9L435.6,46.5L430.5,46.5ZM442.2,46.9L447.5,46.9L446.0,46.5L440.8,46.5ZM452.7,46.9L457.9,46.9L456.3,46.5L451.1,46.5ZM463.1,46.9L468.4,46.9L466.7,46.5L461.5,46.5ZM473.6,46.9L478.8,46.9L477.0,46.5L471.8,46.5ZM484.0,46.9L489.3,46.9L487.4,46.5L482.2,46.5ZM494.5,46.9L499.7,46.9L497.7,46.5L492.5,46.5ZM504.9,46.9L510.2,46.9L508.1,46.5L502.9,46.5ZM515.4,46.9L520.6,46.9L518.4,46.5L513.2,46.5ZM525.9,46.9L531.1,46.9L528.8,46.5L523.6,46.5ZM536.3,46.9L541.6,46.9L539.2,46.5L534.0,46.5ZM546.8,46.9L552.0,46.9L549.5,46.5L544.4,46.5ZM557.3,46.9L562.5,46.9L559.9,46.5L554.7,46.5ZM567.8,46.9L573.0,46.9L570.3,46.5L565.1,46.5ZM578.2,46.9L583.5,46.9L580.7,46.5L575.5,46.5ZM-5.9,46.3L-0.8,46.3L2.0,45.9L-3.0,45.9ZM4.3,46.3L9.4,46.3L12.1,45.9L7.1,45.9ZM14.5,46.3L19.6,46.3L22.2,45.9L17.2,45.9ZM24.7,46.3L29.9,46.3L32.3,45.9L27.3,45.9ZM35.0,46.3L40.1,46.3L42.4,45.9L37.4,45.9ZM45.2,46.3L50.3,46.3L52.6,45.9L47.5,45.9ZM55.4,46.3L60.5,46.3L62.7,45.9L57.6,45.9ZM65.6,46.3L70.7,46.3L72.8,45.9L67.7,45.9ZM75.8,46.3L80.9,46.3L82.9,45.9L77.9,45.9ZM86.0,46.3L91.2,46.3L93.1,45.9L88.0,45.9ZM96.3,46.3L101.4,46.3L103.2,45.9L98.1,45.9ZM106.5,46.3L111.6,46.3L113.3,45.9L108.3,45.9ZM116.7,46.3L121.9,46.3L123.5,45.9L118.4,45.9ZM127.0,46.3L132.1,46.3L133.6,45.9L128.5,45.9ZM137.2,46.3L142.3,46.3L143.8,45.9L138.7,45.9ZM147.5,46.3L152.6,46.3L153.9,46.0L148.8,46.0ZM157.7,46.3L162.8,46.3L164.1,46.0L159.0,46.0ZM168.0,46.3L173.1,46.3L174.2,46.0L169.1,46.0ZM178.2,46.3L183.3,46.3L184.4,46.0L179.3,46.0ZM188.5,46.3L193.6,46.4L194.5,46.0L189.5,46.0ZM198.7,46.4L203.9,46.4L204.7,46.0L199.6,46.0ZM209.0,46.4L214.1,46.4L214.9,46.0L209.8,46.0ZM219.3,46.4L224.4,46.4L225.0,46.0L220.0,46.0ZM229.5,46.4L234.7,46.4L235.2,46.0L230.1,46.0ZM239.8,46.4L244.9,46.4L245.4,46.0L240.3,46.0ZM250.1,46.4L255.2,46.4L255.6,46.0L250.5,46.0ZM260.4,46.4L265.5,46.4L265.8,46.0L260.7,46.0ZM270.7,46.4L275.8,46.4L275.9,46.0L270.9,46.0ZM280.9,46.4L286.1,46.4L286.1,46.0L281.0,46.0ZM291.2,46.4L296.4,46.4L296.3,46.0L291.2,46.0ZM301.5,46.4L306.7,46.4L306.5,46.0L301.4,46.0ZM311.8,46.4L317.0,46.4L316.7,46.0L311.6,46.0ZM322.1,46.4L327.3,46.4L326.9,46.0L321.8,46.0ZM332.4,46.4L337.6,46.4L337.1,46.0L332.0,46.0ZM342.7,46.4L347.9,46.4L347.3,46.0L342.2,46.0ZM353.0,46.4L358.2,46.4L357.6,46.1L352.5,46.0ZM363.3,46.4L368.5,46.4L367.8,46.1L362.7,46.1ZM373.7,46.4L378.8,46.4L378.0,46.1L372.9,46.1ZM384.0,46.4L389.1,46.4L388.2,46.1L383.1,46.1ZM394.3,46.4L399.5,46.5L398.4,46.1L393.3,46.1ZM404.6,46.5L409.8,46.5L408.7,46.1L403.6,46.1ZM415.0,46.5L420.1,46.5L418.9,46.1L413.8,46.1ZM425.3,46.5L430.5,46.5L429.1,46.1L424.0,46.1ZM435.6,46.5L440.8,46.5L439.4,46.1L434.3,46.1ZM446.0,46.5L451.1,46.5L449.6,46.1L444.5,46.1ZM456.3,46.5L461.5,46.5L459.9,46.1L454.7,46.1ZM466.7,46.5L471.8,46.5L470.1,46.1L465.0,46.1ZM477.0,46.5L482.2,46.5L480.4,46.1L475.2,46.1ZM487.4,46.5L492.5,46.5L490.6,46.1L485.5,46.1ZM497.7,46.5L502.9,46.5L500.9,46.1L495.7,46.1ZM508.1,46.5L513.2,46.5L511.1,46.1L506.0,46.1ZM518.4,46.5L523.6,46.5L521.4,46.1L516.3,46.1ZM528.8,46.5L534.0,46.5L531.7,46.1L526.5,46.1ZM539.2,46.5L544.4,46.5L541.9,46.1L536.8,46.1ZM549.5,46.5L554.7,46.5L552.2,46.1L547.1,46.1ZM559.9,46.5L565.1,46.5L562.5,46.1L557.4,46.1ZM570.3,46.5L575.5,46.5L572.8,46.2L567.6,46.2ZM-8.1,45.9L-3.0,45.9L-0.3,45.5L-5.3,45.5ZM2.0,45.9L7.1,45.9L9.7,45.5L4.7,45.5ZM12.1,45.9L17.2,45.9L19.7,45.5L14.7,45.5ZM22.2,45.9L27.3,45.9L29.8,45.5L24.7,45.5ZM32.3,45.9L37.4,45.9L39.8,45.5L34.8,45.5ZM42.4,45.9L47.5,45.9L49.8,45.5L44.8,45.5ZM52.6,45.9L57.6,45.9L59.8,45.5L54.8,45.5ZM62.7,45.9L67.7,45.9L69.8,45.5L64.8,45.5ZM72.8,45.9L77.9,45.9L79.9,45.5L74.9,45.5ZM82.9,45.9L88.0,45.9L89.9,45.6L84.9,45.6ZM93.1,45.9L98.1,45.9L99.9,45.6L94.9,45.6ZM103.2,45.9L108.3,45.9L110.0,45.6L105.0,45.6ZM113.3,45.9L118.4,45.9L120.0,45.6L115.0,45.6ZM123.5,45.9L128.5,45.9L130.1,45.6L125.1,45.6ZM133.6,45.9L138.7,45.9L140.1,45.6L135.1,45.6ZM143.8,45.9L148.8,46.0L150.2,45.6L145.2,45.6ZM153.9,46.0L159.0,46.0L160.2,45.6L155.2,45.6ZM164.1,46.0L169.1,46.0L170.3,45.6L165.3,45.6ZM174.2,46.0L179.3,46.0L180.4,45.6L175.3,45.6ZM184.4,46.0L189.5,46.0L190.4,45.6L185.4,45.6ZM194.5,46.0L199.6,46.0L200.5,45.6L195.5,45.6ZM204.7,46.0L209.8,46.0L210.6,45.6L205.5,45.6ZM214.9,46.0L220.0,46.0L220.6,45.6L215.6,45.6ZM225.0,46.0L230.1,46.0L230.7,45.6L225.7,45.6ZM235.2,46.0L240.3,46.0L240.8,45.6L235.7,45.6ZM245.4,46.0L250.5,46.0L250.9,45.6L245.8,45.6ZM255.6,46.0L260.7,46.0L261.0,45.6L255.9,45.6ZM265.8,46.0L270.9,46.0L271.0,45.6L266.0,45.6ZM275.9,46.0L281.0,46.0L281.1,45.6L276.1,45.6ZM286.1,46.0L291.2,46.0L291.2,45.6L286.2,45.6ZM296.3,46.0L301.4,46.0L301.3,45.7L296.3,45.7ZM306.5,46.0L311.6,46.0L311.4,45.7L306.4,45.7ZM316.7,46.0L321.8,46.0L321.5,45.7L316.5,45.7ZM326.9,46.0L332.0,46.0L331.7,45.7L326.6,45.7ZM337.1,46.0L342.2,46.0L341.8,45.7L336.7,45.7ZM347.3,46.0L352.5,46.0L351.9,45.7L346.8,45.7ZM357.6,46.1L362.7,46.1L362.0,45.7L356.9,45.7ZM367.8,46.1L372.9,46.1L372.1,45.7L367.1,45.7ZM378.0,46.1L383.1,46.1L382.2,45.7L377.2,45.7ZM388.2,46.1L393.3,46.1L392.4,45.7L387.3,45.7ZM398.4,46.1L403.6,46.1L402.5,45.7L397.4,45.7ZM408.7,46.1L413.8,46.1L412.6,45.7L407.6,45.7ZM418.9,46.1L424.0,46.1L422.8,45.7L417.7,45.7ZM429.1,46.1L434.3,46.1L432.9,45.7L427.8,45.7ZM439.4,46.1L444.5,46.1L443.1,45.7L438.0,45.7ZM449.6,46.1L454.7,46.1L453.2,45.7L448.1,45.7ZM459.9,46.1L465.0,46.1L463.4,45.7L458.3,45.7ZM470.1,46.1L475.2,46.1L473.5,45.7L468.4,45.7ZM480.4,46.1L485.5,46.1L483.7,45.7L478.6,45.7ZM490.6,46.1L495.7,46.1L493.8,45.7L488.7,45.7ZM500.9,46.1L506.0,46.1L504.0,45.7L498.9,45.7ZM511.1,46.1L516.3,46.1L514.1,45.8L509.1,45.8ZM521.4,46.1L526.5,46.1L524.3,45.8L519.2,45.8ZM531.7,46.1L536.8,46.1L534.5,45.8L529.4,45.8ZM541.9,46.1L547.1,46.1L544.7,45.8L539.6,45.8ZM552.2,46.1L557.4,46.1L554.8,45.8L549.8,45.8ZM562.5,46.1L567.6,46.2L565.0,45.8L559.9,45.8ZM572.8,46.2L577.9,46.2L575.2,45.8L570.1,45.8ZM-0.3,45.5L4.7,45.5L7.4,45.2L2.4,45.2ZM9.7,45.5L14.7,45.5L17.3,45.2L12.3,45.2ZM19.7,45.5L24.7,45.5L27.2,45.2L22.3,45.2ZM29.8,45.5L34.8,45.5L37.2,45.2L32.2,45.2ZM39.8,45.5L44.8,45.5L47.1,45.2L42.1,45.2ZM49.8,45.5L54.8,45.5L57.0,45.2L52.0,45.2ZM59.8,45.5L64.8,45.5L66.9,45.2L62.0,45.2ZM69.8,45.5L74.9,45.5L76.9,45.2L71.9,45.2ZM79.9,45.5L84.9,45.6L86.8,45.2L81.8,45.2ZM89.9,45.6L94.9,45.6L96.8,45.2L91.8,45.2ZM99.9,45.6L105.0,45.6L106.7,45.2L101.7,45.2ZM110.0,45.6L115.0,45.6L116.7,45.2L111.7,45.2ZM120.0,45.6L125.1,45.6L126.6,45.2L121.6,45.2ZM130.1,45.6L135.1,45.6L136.6,45.2L131.6,45.2ZM140.1,45.6L145.2,45.6L146.5,45.2L141.5,45.2ZM150.2,45.6L155.2,45.6L156.5,45.2L151.5,45.2ZM160.2,45.6L165.3,45.6L166.4,45.2L161.5,45.2ZM170.3,45.6L175.3,45.6L176.4,45.2L171.4,45.2ZM180.4,45.6L185.4,45.6L186.4,45.2L181.4,45.2ZM190.4,45.6L195.5,45.6L196.3,45.2L191.4,45.2ZM200.5,45.6L205.5,45.6L206.3,45.2L201.3,45.2ZM210.6,45.6L215.6,45.6L216.3,45.3L211.3,45.2ZM220.6,45.6L225.7,45.6L226.3,45.3L221.3,45.3ZM230.7,45.6L235.7,45.6L236.3,45.3L231.3,45.3ZM240.8,45.6L245.8,45.6L246.3,45.3L241.3,45.3ZM250.9,45.6L255.9,45.6L256.2,45.3L251.3,45.3ZM261.0,45.6L266.0,45.6L266.2,45.3L261.2,45.3ZM271.0,45.6L276.1,45.6L276.2,45.3L271.2,45.3ZM281.1,45.6L286.2,45.6L286.2,45.3L281.2,45.3ZM291.2,45.6L296.3,45.7L296.2,45.3L291.2,45.3ZM301.3,45.7L306.4,45.7L306.3,45.3L301.2,45.3ZM311.4,45.7L316.5,45.7L316.3,45.3L311.3,45.3ZM321.5,45.7L326.6,45.7L326.3,45.3L321.3,45.3ZM331.7,45.7L336.7,45.7L336.3,45.3L331.3,45.3ZM341.8,45.7L346.8,45.7L346.3,45.3L341.3,45.3ZM351.9,45.7L356.9,45.7L356.3,45.3L351.3,45.3ZM362.0,45.7L367.1,45.7L366.4,45.3L361.3,45.3ZM372.1,45.7L377.2,45.7L376.4,45.3L371.4,45.3ZM382.2,45.7L387.3,45.7L386.4,45.3L381.4,45.3ZM392.4,45.7L397.4,45.7L396.4,45.3L391.4,45.3ZM402.5,45.7L407.6,45.7L406.5,45.3L401.5,45.3ZM412.6,45.7L417.7,45.7L416.5,45.3L411.5,45.3ZM422.8,45.7L427.8,45.7L426.6,45.3L421.5,45.3ZM432.9,45.7L438.0,45.7L436.6,45.4L431.6,45.4ZM443.1,45.7L448.1,45.7L446.7,45.4L441.6,45.4ZM453.2,45.7L458.3,45.7L456.7,45.4L451.7,45.4ZM463.4,45.7L468.4,45.7L466.8,45.4L461.7,45.4ZM473.5,45.7L478.6,45.7L476.8,45.4L471.8,45.4ZM483.7,45.7L488.7,45.7L486.9,45.4L481.9,45.4ZM493.8,45.7L498.9,45.7L497.0,45.4L491.9,45.4ZM504.0,45.7L509.1,45.8L507.0,45.4L502.0,45.4ZM514.1,45.8L519.2,45.8L517.1,45.4L512.1,45.4ZM524.3,45.8L529.4,45.8L527.2,45.4L522.1,45.4ZM534.5,45.8L539.6,45.8L537.3,45.4L532.2,45.4ZM544.7,45.8L549.8,45.8L547.3,45.4L542.3,45.4ZM554.8,45.8L559.9,45.8L557.4,45.4L552.4,45.4ZM565.0,45.8L570.1,45.8L567.5,45.4L562.5,45.4ZM575.2,45.8L580.3,45.8L577.6,45.4L572.6,45.4Z" fill="#cdcdcd"/>
<g font-family="Liberation Sans" font-weight="bold" font-size="0.52" text-anchor="middle" transform="" style="font-stretch:condensed"><text transform="matrix(79.323 0.746 -42.658 91.491 4.74 622.21)" x="0" y="0.19" fill="#c7c7c7">A6</text><text transform="matrix(79.715 0.749 -19.067 91.939 163.78 623.71)" x="0" y="0.19" fill="#c7c7c7">A8</text><text transform="matrix(80.109 0.753 4.757 92.391 323.60 625.21)" x="0" y="0.19" fill="#c7c7c7">A2</text><text transform="matrix(80.506 0.757 28.818 92.846 484.22 626.72)" x="0" y="0.19" fill="#c7c7c7">A4</text><text transform="matrix(68.953 0.563 -41.220 69.199 -27.15 542.01)" x="0" y="0.19" fill="#c7c7c7">H5</text><text transform="matrix(69.249 0.565 -23.407 69.493 111.05 543.14)" x="0" y="0.19" fill="#c7c7c7">H7</text><text transform="matrix(69.546 0.568 -5.440 69.790 249.84 544.27)" x="0" y="0.19" fill="#c7c7c7">H1</text><text transform="matrix(69.846 0.570 12.682 70.088 389.24 545.41)" x="0" y="0.19" fill="#c7c7c7">H3</text><text transform="matrix(70.147 0.573 30.960 70.388 529.23 546.55)" x="0" y="0.19" fill="#c7c7c7">H5</text></g>
<g font-family="Liberation Sans" font-weight="bold" font-size="0.52" text-anchor="middle" transform="" style="font-stretch:condensed"><text transform="matrix(79.519 0.748 -30.892 91.715 84.16 622.96)" x="0" y="0.19" fill="#cdcdcd">A7</text><text transform="matrix(79.911 0.751 -7.184 92.165 243.59 624.46)" x="0" y="0.19" fill="#cdcdcd">A1</text><text transform="matrix(80.307 0.755 16.758 92.618 403.81 625.96)" x="0" y="0.19" fill="#cdcdcd">A3</text><text transform="matrix(80.705 0.759 40.938 93.074 564.82 627.48)" x="0" y="0.19" fill="#cdcdcd">A5</text><text transform="matrix(69.101 0.564 -32.333 69.346 41.87 542.58)" x="0" y="0.19" fill="#cdcdcd">H6</text><text transform="matrix(69.397 0.566 -14.443 69.641 180.37 543.71)" x="0" y="0.19" fill="#cdcdcd">H8</text><text transform="matrix(69.696 0.569 3.601 69.938 319.47 544.84)" x="0" y="0.19" fill="#cdcdcd">H2</text><text transform="matrix(69.996 0.571 21.801 70.238 459.16 545.98)" x="0" y="0.19" fill="#cdcdcd">H4</text><text transform="matrix(70.299 0.574 40.158 70.539 599.45 547.13)" x="0" y="0.19" fill="#cdcdcd">H6</text><text transform="matrix(61.097 0.440 -32.324 54.265 9.34 480.74)" x="0" y="0.19" fill="#cdcdcd">G5</text><text transform="matrix(61.328 0.442 -18.346 54.469 131.77 481.63)" x="0" y="0.19" fill="#cdcdcd">G7</text><text transform="matrix(61.562 0.444 -4.262 54.674 254.66 482.51)" x="0" y="0.19" fill="#cdcdcd">G1</text><text transform="matrix(61.796 0.446 9.930 54.880 378.02 483.40)" x="0" y="0.19" fill="#cdcdcd">G3</text><text transform="matrix(62.032 0.447 24.230 55.088 501.84 484.29)" x="0" y="0.19" fill="#cdcdcd">G5</text><text transform="matrix(19.914 0.045 -10.145 5.763 19.74 161.17)" x="0" y="0.19" fill="#cdcdcd">E4</text><text transform="matrix(19.939 0.045 -8.664 5.770 59.59 161.26)" x="0" y="0.19" fill="#cdcdcd">E6</text><text transform="matrix(19.963 0.045 -7.180 5.777 99.49 161.35)" x="0" y="0.19" fill="#cdcdcd">E8</text><text transform="matrix(19.988 0.045 -5.691 5.784 139.44 161.44)" x="0" y="0.19" fill="#cdcdcd">E2</text><text transform="matrix(20.013 0.045 -4.199 5.791 179.44 161.53)" x="0" y="0.19" fill="#cdcdcd">E4</text><text transform="matrix(20.037 0.045 -2.703 5.798 219.49 161.62)" x="0" y="0.19" fill="#cdcdcd">E6</text><text transform="matrix(20.062 0.045 -1.204 5.805 259.59 161.72)" x="0" y="0.19" fill="#cdcdcd">E8</text><text transform="matrix(20.087 0.045 0.299 5.812 299.74 161.81)" x="0" y="0.19" fill="#cdcdcd">E2</text><text transform="matrix(20.112 0.045 1.806 5.819 339.94 161.90)" x="0" y="0.19" fill="#cdcdcd">E4</text><text transform="matrix(20.137 0.046 3.317 5.826 380.19 161.99)" x="0" y="0.19" fill="#cdcdcd">E6</text><text transform="matrix(20.162 0.046 4.831 5.833 420.49 162.08)" x="0" y="0.19" fill="#cdcdcd">E8</text><text transform="matrix(20.187 0.046 6.349 5.840 460.84 162.17)" x="0" y="0.19" fill="#cdcdcd">E2</text><text transform="matrix(20.212 0.046 7.871 5.847 501.24 162.26)" x="0" y="0.19" fill="#cdcdcd">E4</text><text transform="matrix(20.237 0.046 9.397 5.854 541.69 162.35)" x="0" y="0.19" fill="#cdcdcd">E6</text><text transform="matrix(20.262 0.046 10.927 5.861 582.19 162.44)" x="0" y="0.19" fill="#cdcdcd">E8</text><text transform="matrix(19.190 0.042 -10.116 5.353 10.32 155.58)" x="0" y="0.19" fill="#cdcdcd">D3</text><text transform="matrix(19.212 0.042 -8.741 5.360 48.72 155.66)" x="0" y="0.19" fill="#cdcdcd">D5</text><text transform="matrix(19.235 0.042 -7.362 5.366 87.17 155.74)" x="0" y="0.19" fill="#cdcdcd">D7</text><text transform="matrix(19.258 0.042 -5.981 5.372 125.66 155.83)" x="0" y="0.19" fill="#cdcdcd">D1</text><text transform="matrix(19.281 0.042 -4.596 5.378 164.20 155.91)" x="0" y="0.19" fill="#cdcdcd">D3</text><text transform="matrix(19.304 0.042 -3.207 5.384 202.79 155.99)" x="0" y="0.19" fill="#cdcdcd">D5</text><text transform="matrix(19.327 0.042 -1.816 5.391 241.42 156.08)" x="0" y="0.19" fill="#cdcdcd">D7</text><text transform="matrix(19.350 0.042 -0.421 5.397 280.10 156.16)" x="0" y="0.19" fill="#cdcdcd">D1</text><text transform="matrix(19.373 0.042 0.978 5.403 318.82 156.25)" x="0" y="0.19" fill="#cdcdcd">D3</text><text transform="matrix(19.396 0.042 2.379 5.409 357.59 156.33)" x="0" y="0.19" fill="#cdcdcd">D5</text><text transform="matrix(19.420 0.042 3.784 5.416 396.41 156.41)" x="0" y="0.19" fill="#cdcdcd">D7</text><text transform="matrix(19.443 0.042 5.193 5.422 435.27 156.50)" x="0" y="0.19" fill="#cdcdcd">D1</text><text transform="matrix(19.466 0.042 6.604 5.428 474.18 156.58)" x="0" y="0.19" fill="#cdcdcd">D3</text><text transform="matrix(19.490 0.042 8.020 5.435 513.13 156.67)" x="0" y="0.19" fill="#cdcdcd">D5</text><text transform="matrix(19.513 0.042 9.438 5.441 552.14 156.75)" x="0" y="0.19" fill="#cdcdcd">D7</text><text transform="matrix(18.516 0.039 -10.066 4.985 1.57 150.37)" x="0" y="0.19" fill="#cdcdcd">C2</text><text transform="matrix(18.537 0.039 -8.786 4.991 38.62 150.45)" x="0" y="0.19" fill="#cdcdcd">C4</text><text transform="matrix(18.558 0.039 -7.503 4.997 75.71 150.52)" x="0" y="0.19" fill="#cdcdcd">C6</text><text transform="matrix(18.580 0.039 -6.216 5.002 112.85 150.60)" x="0" y="0.19" fill="#cdcdcd">C8</text><text transform="matrix(18.601 0.039 -4.927 5.008 150.03 150.68)" x="0" y="0.19" fill="#cdcdcd">C2</text><text transform="matrix(18.623 0.039 -3.635 5.013 187.26 150.76)" x="0" y="0.19" fill="#cdcdcd">C4</text><text transform="matrix(18.644 0.039 -2.340 5.019 224.52 150.84)" x="0" y="0.19" fill="#cdcdcd">C6</text><text transform="matrix(18.665 0.039 -1.042 5.025 261.83 150.91)" x="0" y="0.19" fill="#cdcdcd">C8</text><text transform="matrix(18.687 0.039 0.259 5.030 299.19 150.99)" x="0" y="0.19" fill="#cdcdcd">C2</text><text transform="matrix(18.709 0.039 1.563 5.036 336.58 151.07)" x="0" y="0.19" fill="#cdcdcd">C4</text><text transform="matrix(18.730 0.039 2.870 5.041 374.02 151.15)" x="0" y="0.19" fill="#cdcdcd">C6</text><text transform="matrix(18.752 0.039 4.180 5.047 411.50 151.23)" x="0" y="0.19" fill="#cdcdcd">C8</text><text transform="matrix(18.773 0.039 5.493 5.053 449.03 151.31)" x="0" y="0.19" fill="#cdcdcd">C2</text><text transform="matrix(18.795 0.039 6.809 5.058 486.60 151.38)" x="0" y="0.19" fill="#cdcdcd">C4</text><text transform="matrix(18.817 0.039 8.129 5.064 524.21 151.46)" x="0" y="0.19" fill="#cdcdcd">C6</text><text transform="matrix(18.839 0.039 9.451 5.070 561.86 151.54)" x="0" y="0.19" fill="#cdcdcd">C8</text><text transform="matrix(17.888 0.036 -9.999 4.654 -6.60 145.51)" x="0" y="0.19" fill="#cdcdcd">B1</text><text transform="matrix(17.908 0.036 -8.805 4.659 29.20 145.59)" x="0" y="0.19" fill="#cdcdcd">B3</text><text transform="matrix(17.928 0.036 -7.607 4.664 65.03 145.66)" x="0" y="0.19" fill="#cdcdcd">B5</text><text transform="matrix(17.948 0.036 -6.407 4.669 100.91 145.73)" x="0" y="0.19" fill="#cdcdcd">B7</text><text transform="matrix(17.968 0.036 -5.204 4.674 136.82 145.80)" x="0" y="0.19" fill="#cdcdcd">B1</text><text transform="matrix(17.987 0.036 -3.999 4.679 172.78 145.88)" x="0" y="0.19" fill="#cdcdcd">B3</text><text transform="matrix(18.007 0.036 -2.790 4.684 208.77 145.95)" x="0" y="0.19" fill="#cdcdcd">B5</text><text transform="matrix(18.028 0.036 -1.580 4.690 244.81 146.02)" x="0" y="0.19" fill="#cdcdcd">B7</text><text transform="matrix(18.048 0.036 -0.366 4.695 280.88 146.09)" x="0" y="0.19" fill="#cdcdcd">B1</text><text transform="matrix(18.068 0.036 0.850 4.700 317.00 146.17)" x="0" y="0.19" fill="#cdcdcd">B3</text><text transform="matrix(18.088 0.037 2.069 4.705 353.15 146.24)" x="0" y="0.19" fill="#cdcdcd">B5</text><text transform="matrix(18.108 0.037 3.291 4.710 389.35 146.31)" x="0" y="0.19" fill="#cdcdcd">B7</text><text transform="matrix(18.128 0.037 4.516 4.715 425.59 146.39)" x="0" y="0.19" fill="#cdcdcd">B1</text><text transform="matrix(18.148 0.037 5.743 4.720 461.86 146.46)" x="0" y="0.19" fill="#cdcdcd">B3</text><text transform="matrix(18.169 0.037 6.973 4.725 498.18 146.53)" x="0" y="0.19" fill="#cdcdcd">B5</text><text transform="matrix(18.189 0.037 8.205 4.730 534.54 146.61)" x="0" y="0.19" fill="#cdcdcd">B7</text><text transform="matrix(18.209 0.037 9.441 4.735 570.94 146.68)" x="0" y="0.19" fill="#cdcdcd">B1</text><text transform="matrix(17.301 0.034 -9.920 4.355 -14.23 140.98)" x="0" y="0.19" fill="#cdcdcd">A8</text><text transform="matrix(17.320 0.034 -8.802 4.360 20.39 141.04)" x="0" y="0.19" fill="#cdcdcd">A2</text><text transform="matrix(17.338 0.034 -7.682 4.364 55.05 141.11)" x="0" y="0.19" fill="#cdcdcd">A4</text><text transform="matrix(17.357 0.034 -6.560 4.369 89.74 141.18)" x="0" y="0.19" fill="#cdcdcd">A6</text><text transform="matrix(17.376 0.034 -5.435 4.373 124.48 141.25)" x="0" y="0.19" fill="#cdcdcd">A8</text><text transform="matrix(17.394 0.034 -4.307 4.378 159.25 141.32)" x="0" y="0.19" fill="#cdcdcd">A2</text><text transform="matrix(17.413 0.034 -3.178 4.382 194.05 141.38)" x="0" y="0.19" fill="#cdcdcd">A4</text><text transform="matrix(17.432 0.034 -2.045 4.387 228.90 141.45)" x="0" y="0.19" fill="#cdcdcd">A6</text><text transform="matrix(17.451 0.034 -0.911 4.391 263.78 141.52)" x="0" y="0.19" fill="#cdcdcd">A8</text><text transform="matrix(17.469 0.034 0.226 4.396 298.70 141.59)" x="0" y="0.19" fill="#cdcdcd">A2</text><text transform="matrix(17.488 0.034 1.366 4.401 333.66 141.66)" x="0" y="0.19" fill="#cdcdcd">A4</text><text transform="matrix(17.507 0.034 2.508 4.405 368.65 141.72)" x="0" y="0.19" fill="#cdcdcd">A6</text><text transform="matrix(17.526 0.034 3.652 4.410 403.69 141.79)" x="0" y="0.19" fill="#cdcdcd">A8</text><text transform="matrix(17.545 0.034 4.799 4.414 438.76 141.86)" x="0" y="0.19" fill="#cdcdcd">A2</text><text transform="matrix(17.564 0.034 5.949 4.419 473.87 141.93)" x="0" y="0.19" fill="#cdcdcd">A4</text><text transform="matrix(17.583 0.034 7.101 4.424 509.01 142.00)" x="0" y="0.19" fill="#cdcdcd">A6</text><text transform="matrix(17.602 0.034 8.255 4.428 544.20 142.07)" x="0" y="0.19" fill="#cdcdcd">A8</text><text transform="matrix(17.621 0.034 9.412 4.433 579.42 142.13)" x="0" y="0.19" fill="#cdcdcd">A2</text></g>
<g font-family="Liberation Sans" font-weight="bold" font-size="0.52" text-anchor="middle" transform="" style="font-stretch:condensed"><text transform="matrix(61.212 0.441 -25.348 54.367 70.50 481.18)" x="0" y="0.19" fill="#c8c8c8">G6</text><text transform="matrix(61.445 0.443 -11.317 54.571 193.16 482.07)" x="0" y="0.19" fill="#c8c8c8">G8</text><text transform="matrix(61.679 0.445 2.821 54.777 316.28 482.96)" x="0" y="0.19" fill="#c8c8c8">G2</text><text transform="matrix(61.914 0.446 17.066 54.984 439.87 483.85)" x="0" y="0.19" fill="#c8c8c8">G4</text><text transform="matrix(62.150 0.448 31.421 55.192 563.94 484.74)" x="0" y="0.19" fill="#c8c8c8">G6</text><text transform="matrix(54.847 0.354 -26.026 43.691 38.34 432.06)" x="0" y="0.19" fill="#c8c8c8">F5</text><text transform="matrix(55.034 0.355 -14.766 43.838 148.23 432.77)" x="0" y="0.19" fill="#c8c8c8">F7</text><text transform="matrix(55.221 0.356 -3.429 43.986 258.48 433.48)" x="0" y="0.19" fill="#c8c8c8">F1</text><text transform="matrix(55.410 0.358 7.986 44.135 369.11 434.19)" x="0" y="0.19" fill="#c8c8c8">F3</text><text transform="matrix(55.600 0.359 19.478 44.284 480.12 434.91)" x="0" y="0.19" fill="#c8c8c8">F5</text><text transform="matrix(55.790 0.360 31.050 44.435 591.51 435.63)" x="0" y="0.19" fill="#c8c8c8">F7</text><text transform="matrix(49.681 0.290 -26.014 35.877 12.23 392.15)" x="0" y="0.19" fill="#c8c8c8">E4</text><text transform="matrix(49.834 0.291 -16.779 35.986 111.74 392.73)" x="0" y="0.19" fill="#c8c8c8">E6</text><text transform="matrix(49.988 0.292 -7.486 36.096 211.56 393.31)" x="0" y="0.19" fill="#c8c8c8">E8</text><text transform="matrix(50.143 0.293 1.864 36.207 311.69 393.90)" x="0" y="0.19" fill="#c8c8c8">E2</text><text transform="matrix(50.298 0.294 11.273 36.317 412.13 394.48)" x="0" y="0.19" fill="#c8c8c8">E4</text><text transform="matrix(50.454 0.295 20.739 36.429 512.89 395.07)" x="0" y="0.19" fill="#c8c8c8">E6</text><text transform="matrix(50.611 0.295 30.265 36.541 613.95 395.66)" x="0" y="0.19" fill="#c8c8c8">E8</text></g>
<g font-family="Liberation Sans" font-weight="bold" font-size="0.52" text-anchor="middle" transform="" style="font-stretch:condensed"><text transform="matrix(54.754 0.353 -31.627 43.617 -16.46 431.70)" x="0" y="0.19" fill="#cecece">F4</text><text transform="matrix(54.940 0.355 -20.405 43.764 93.24 432.41)" x="0" y="0.19" fill="#cecece">F6</text><text transform="matrix(55.128 0.356 -9.107 43.912 203.31 433.12)" x="0" y="0.19" fill="#cecece">F8</text><text transform="matrix(55.316 0.357 2.269 44.060 313.75 433.83)" x="0" y="0.19" fill="#cecece">F2</text><text transform="matrix(55.505 0.358 13.722 44.209 424.57 434.55)" x="0" y="0.19" fill="#cecece">F4</text><text transform="matrix(55.695 0.359 25.254 44.359 535.77 435.27)" x="0" y="0.19" fill="#cecece">F6</text><text transform="matrix(49.605 0.290 -30.610 35.822 -37.42 391.86)" x="0" y="0.19" fill="#cecece">E3</text><text transform="matrix(49.757 0.290 -21.403 35.931 61.94 392.44)" x="0" y="0.19" fill="#cecece">E5</text><text transform="matrix(49.911 0.291 -12.139 36.041 161.61 393.02)" x="0" y="0.19" fill="#cecece">E7</text><text transform="matrix(50.065 0.292 -2.818 36.151 261.59 393.60)" x="0" y="0.19" fill="#cecece">E1</text><text transform="matrix(50.220 0.293 6.561 36.262 361.87 394.19)" x="0" y="0.19" fill="#cecece">E3</text><text transform="matrix(50.376 0.294 15.999 36.373 462.47 394.78)" x="0" y="0.19" fill="#cecece">E5</text><text transform="matrix(50.532 0.295 25.494 36.485 563.38 395.37)" x="0" y="0.19" fill="#cecece">E7</text><text transform="matrix(45.468 0.242 -21.773 30.028 36.02 359.33)" x="0" y="0.19" fill="#cecece">D4</text><text transform="matrix(45.596 0.243 -14.039 30.111 127.09 359.81)" x="0" y="0.19" fill="#cecece">D6</text><text transform="matrix(45.725 0.244 -6.262 30.195 218.41 360.30)" x="0" y="0.19" fill="#cecece">D8</text><text transform="matrix(45.855 0.244 1.559 30.280 309.99 360.79)" x="0" y="0.19" fill="#cecece">D2</text><text transform="matrix(45.984 0.245 9.425 30.365 401.83 361.28)" x="0" y="0.19" fill="#cecece">D4</text><text transform="matrix(46.115 0.246 17.335 30.450 493.93 361.77)" x="0" y="0.19" fill="#cecece">D6</text><text transform="matrix(46.246 0.246 25.290 30.535 586.29 362.26)" x="0" y="0.19" fill="#cecece">D8</text><text transform="matrix(41.860 0.205 -21.763 25.468 14.20 331.45)" x="0" y="0.19" fill="#cecece">C3</text><text transform="matrix(41.968 0.206 -15.210 25.533 98.03 331.86)" x="0" y="0.19" fill="#cecece">C5</text><text transform="matrix(42.078 0.206 -8.622 25.599 182.07 332.28)" x="0" y="0.19" fill="#cecece">C7</text><text transform="matrix(42.187 0.207 -2.001 25.665 266.34 332.69)" x="0" y="0.19" fill="#cecece">C1</text><text transform="matrix(42.297 0.207 4.656 25.731 350.82 333.10)" x="0" y="0.19" fill="#cecece">C3</text><text transform="matrix(42.408 0.208 11.347 25.797 435.53 333.52)" x="0" y="0.19" fill="#cecece">C5</text><text transform="matrix(42.518 0.208 18.073 25.864 520.45 333.93)" x="0" y="0.19" fill="#cecece">C7</text><text transform="matrix(42.630 0.209 24.834 25.930 605.60 334.35)" x="0" y="0.19" fill="#cecece">C1</text><text transform="matrix(16.769 0.032 -8.783 4.088 12.14 136.79)" x="0" y="0.19" fill="#cecece">H1</text><text transform="matrix(16.787 0.032 -7.733 4.092 45.70 136.85)" x="0" y="0.19" fill="#cecece">H3</text><text transform="matrix(16.804 0.032 -6.680 4.096 79.29 136.92)" x="0" y="0.19" fill="#cecece">H5</text><text transform="matrix(16.821 0.032 -5.626 4.100 112.91 136.98)" x="0" y="0.19" fill="#cecece">H7</text><text transform="matrix(16.839 0.032 -4.570 4.104 146.58 137.04)" x="0" y="0.19" fill="#cecece">H1</text><text transform="matrix(16.857 0.032 -3.511 4.109 180.27 137.11)" x="0" y="0.19" fill="#cecece">H3</text><text transform="matrix(16.874 0.032 -2.450 4.113 214.00 137.17)" x="0" y="0.19" fill="#cecece">H5</text><text transform="matrix(16.892 0.032 -1.387 4.117 247.77 137.23)" x="0" y="0.19" fill="#cecece">H7</text><text transform="matrix(16.909 0.032 -0.321 4.121 281.57 137.30)" x="0" y="0.19" fill="#cecece">H1</text><text transform="matrix(16.927 0.032 0.746 4.125 315.40 137.36)" x="0" y="0.19" fill="#cecece">H3</text><text transform="matrix(16.945 0.032 1.816 4.129 349.28 137.43)" x="0" y="0.19" fill="#cecece">H5</text><text transform="matrix(16.962 0.032 2.888 4.133 383.18 137.49)" x="0" y="0.19" fill="#cecece">H7</text><text transform="matrix(16.980 0.032 3.963 4.138 417.13 137.55)" x="0" y="0.19" fill="#cecece">H1</text><text transform="matrix(16.998 0.032 5.039 4.142 451.10 137.62)" x="0" y="0.19" fill="#cecece">H3</text><text transform="matrix(17.016 0.032 6.118 4.146 485.12 137.68)" x="0" y="0.19" fill="#cecece">H5</text><text transform="matrix(17.033 0.032 7.199 4.150 519.17 137.75)" x="0" y="0.19" fill="#cecece">H7</text><text transform="matrix(17.051 0.032 8.283 4.154 553.25 137.81)" x="0" y="0.19" fill="#cecece">H1</text><text transform="matrix(17.069 0.032 9.368 4.159 587.37 137.87)" x="0" y="0.19" fill="#cecece">H3</text><text transform="matrix(16.252 0.030 -8.749 3.841 4.40 132.80)" x="0" y="0.19" fill="#cecece">G8</text><text transform="matrix(16.269 0.030 -7.762 3.845 36.92 132.86)" x="0" y="0.19" fill="#cecece">G2</text><text transform="matrix(16.285 0.030 -6.774 3.848 69.48 132.92)" x="0" y="0.19" fill="#cecece">G4</text><text transform="matrix(16.302 0.030 -5.784 3.852 102.06 132.98)" x="0" y="0.19" fill="#cecece">G6</text><text transform="matrix(16.318 0.030 -4.792 3.856 134.68 133.03)" x="0" y="0.19" fill="#cecece">G8</text><text transform="matrix(16.335 0.030 -3.798 3.860 167.34 133.09)" x="0" y="0.19" fill="#cecece">G2</text><text transform="matrix(16.351 0.030 -2.801 3.863 200.02 133.15)" x="0" y="0.19" fill="#cecece">G4</text><text transform="matrix(16.368 0.030 -1.803 3.867 232.74 133.21)" x="0" y="0.19" fill="#cecece">G6</text><text transform="matrix(16.384 0.030 -0.803 3.871 265.49 133.27)" x="0" y="0.19" fill="#cecece">G8</text><text transform="matrix(16.401 0.030 0.200 3.875 298.28 133.33)" x="0" y="0.19" fill="#cecece">G2</text><text transform="matrix(16.417 0.030 1.204 3.878 331.09 133.39)" x="0" y="0.19" fill="#cecece">G4</text><text transform="matrix(16.434 0.030 2.210 3.882 363.95 133.45)" x="0" y="0.19" fill="#cecece">G6</text><text transform="matrix(16.451 0.030 3.219 3.886 396.83 133.51)" x="0" y="0.19" fill="#cecece">G8</text><text transform="matrix(16.467 0.030 4.229 3.890 429.75 133.57)" x="0" y="0.19" fill="#cecece">G2</text><text transform="matrix(16.484 0.030 5.242 3.894 462.70 133.63)" x="0" y="0.19" fill="#cecece">G4</text><text transform="matrix(16.501 0.030 6.256 3.898 495.68 133.69)" x="0" y="0.19" fill="#cecece">G6</text><text transform="matrix(16.517 0.030 7.273 3.901 528.70 133.75)" x="0" y="0.19" fill="#cecece">G8</text><text transform="matrix(16.534 0.030 8.291 3.905 561.75 133.81)" x="0" y="0.19" fill="#cecece">G2</text><text transform="matrix(15.767 0.028 -8.703 3.616 -2.88 129.04)" x="0" y="0.19" fill="#cecece">F7</text><text transform="matrix(15.782 0.028 -7.775 3.619 28.67 129.10)" x="0" y="0.19" fill="#cecece">F1</text><text transform="matrix(15.797 0.028 -6.845 3.622 60.25 129.15)" x="0" y="0.19" fill="#cecece">F3</text><text transform="matrix(15.813 0.028 -5.913 3.626 91.86 129.21)" x="0" y="0.19" fill="#cecece">F5</text><text transform="matrix(15.828 0.028 -4.980 3.629 123.50 129.27)" x="0" y="0.19" fill="#cecece">F7</text><text transform="matrix(15.844 0.028 -4.044 3.633 155.17 129.32)" x="0" y="0.19" fill="#cecece">F1</text><text transform="matrix(15.859 0.028 -3.107 3.636 186.88 129.38)" x="0" y="0.19" fill="#cecece">F3</text><text transform="matrix(15.875 0.028 -2.168 3.640 218.61 129.43)" x="0" y="0.19" fill="#cecece">F5</text><text transform="matrix(15.890 0.028 -1.227 3.643 250.38 129.49)" x="0" y="0.19" fill="#cecece">F7</text><text transform="matrix(15.906 0.028 -0.284 3.646 282.17 129.55)" x="0" y="0.19" fill="#cecece">F1</text><text transform="matrix(15.922 0.028 0.660 3.650 314.00 129.60)" x="0" y="0.19" fill="#cecece">F3</text><text transform="matrix(15.937 0.028 1.607 3.653 345.86 129.66)" x="0" y="0.19" fill="#cecece">F5</text><text transform="matrix(15.953 0.028 2.555 3.657 377.75 129.71)" x="0" y="0.19" fill="#cecece">F7</text><text transform="matrix(15.969 0.028 3.505 3.660 409.67 129.77)" x="0" y="0.19" fill="#cecece">F1</text><text transform="matrix(15.984 0.028 4.458 3.664 441.62 129.83)" x="0" y="0.19" fill="#cecece">F3</text><text transform="matrix(16.000 0.028 5.412 3.667 473.61 129.88)" x="0" y="0.19" fill="#cecece">F5</text><text transform="matrix(16.016 0.028 6.367 3.671 505.62 129.94)" x="0" y="0.19" fill="#cecece">F7</text><text transform="matrix(16.032 0.028 7.325 3.674 537.67 130.00)" x="0" y="0.19" fill="#cecece">F1</text><text transform="matrix(16.047 0.028 8.285 3.678 569.75 130.05)" x="0" y="0.19" fill="#cecece">F3</text><text transform="matrix(15.309 0.026 -8.648 3.409 -9.74 125.50)" x="0" y="0.19" fill="#cecece">E6</text><text transform="matrix(15.323 0.026 -7.773 3.413 20.89 125.56)" x="0" y="0.19" fill="#cecece">E8</text><text transform="matrix(15.338 0.026 -6.897 3.416 51.56 125.61)" x="0" y="0.19" fill="#cecece">E2</text><text transform="matrix(15.353 0.026 -6.018 3.419 82.25 125.66)" x="0" y="0.19" fill="#cecece">E4</text><text transform="matrix(15.367 0.026 -5.138 3.422 112.97 125.71)" x="0" y="0.19" fill="#cecece">E6</text><text transform="matrix(15.382 0.026 -4.257 3.425 143.72 125.77)" x="0" y="0.19" fill="#cecece">E8</text><text transform="matrix(15.396 0.026 -3.373 3.428 174.49 125.82)" x="0" y="0.19" fill="#cecece">E2</text><text transform="matrix(15.411 0.026 -2.488 3.431 205.30 125.87)" x="0" y="0.19" fill="#cecece">E4</text><text transform="matrix(15.426 0.026 -1.601 3.435 236.14 125.92)" x="0" y="0.19" fill="#cecece">E6</text><text transform="matrix(15.440 0.026 -0.713 3.438 267.00 125.98)" x="0" y="0.19" fill="#cecece">E8</text><text transform="matrix(15.455 0.026 0.177 3.441 297.90 126.03)" x="0" y="0.19" fill="#cecece">E2</text><text transform="matrix(15.470 0.026 1.069 3.444 328.83 126.08)" x="0" y="0.19" fill="#cecece">E4</text><text transform="matrix(15.485 0.026 1.963 3.447 359.78 126.14)" x="0" y="0.19" fill="#cecece">E6</text><text transform="matrix(15.499 0.027 2.858 3.450 390.76 126.19)" x="0" y="0.19" fill="#cecece">E8</text><text transform="matrix(15.514 0.027 3.755 3.454 421.78 126.24)" x="0" y="0.19" fill="#cecece">E2</text><text transform="matrix(15.529 0.027 4.653 3.457 452.82 126.30)" x="0" y="0.19" fill="#cecece">E4</text><text transform="matrix(15.544 0.027 5.554 3.460 483.89 126.35)" x="0" y="0.19" fill="#cecece">E6</text><text transform="matrix(15.559 0.027 6.456 3.463 515.00 126.40)" x="0" y="0.19" fill="#cecece">E8</text><text transform="matrix(15.574 0.027 7.360 3.466 546.13 126.45)" x="0" y="0.19" fill="#cecece">E2</text><text transform="matrix(15.589 0.027 8.265 3.470 577.29 126.51)" x="0" y="0.19" fill="#cecece">E4</text><text transform="matrix(14.891 0.025 -7.759 3.223 13.56 122.21)" x="0" y="0.19" fill="#cecece">D7</text><text transform="matrix(14.905 0.025 -6.931 3.226 43.35 122.26)" x="0" y="0.19" fill="#cecece">D1</text><text transform="matrix(14.918 0.025 -6.102 3.229 73.17 122.31)" x="0" y="0.19" fill="#cecece">D3</text><text transform="matrix(14.932 0.025 -5.271 3.232 103.03 122.36)" x="0" y="0.19" fill="#cecece">D5</text><text transform="matrix(14.946 0.025 -4.439 3.235 132.90 122.41)" x="0" y="0.19" fill="#cecece">D7</text><text transform="matrix(14.960 0.025 -3.605 3.238 162.81 122.46)" x="0" y="0.19" fill="#cecece">D1</text><text transform="matrix(14.974 0.025 -2.769 3.241 192.74 122.51)" x="0" y="0.19" fill="#cecece">D3</text><text transform="matrix(14.987 0.025 -1.932 3.244 222.70 122.56)" x="0" y="0.19" fill="#cecece">D5</text><text transform="matrix(15.001 0.025 -1.093 3.246 252.69 122.61)" x="0" y="0.19" fill="#cecece">D7</text><text transform="matrix(15.015 0.025 -0.253 3.249 282.71 122.66)" x="0" y="0.19" fill="#cecece">D1</text><text transform="matrix(15.029 0.025 0.588 3.252 312.75 122.71)" x="0" y="0.19" fill="#cecece">D3</text><text transform="matrix(15.043 0.025 1.432 3.255 342.83 122.76)" x="0" y="0.19" fill="#cecece">D5</text><text transform="matrix(15.057 0.025 2.277 3.258 372.93 122.81)" x="0" y="0.19" fill="#cecece">D7</text><text transform="matrix(15.071 0.025 3.123 3.261 403.05 122.86)" x="0" y="0.19" fill="#cecece">D1</text><text transform="matrix(15.085 0.025 3.971 3.264 433.21 122.91)" x="0" y="0.19" fill="#cecece">D3</text><text transform="matrix(15.099 0.025 4.821 3.267 463.39 122.96)" x="0" y="0.19" fill="#cecece">D5</text><text transform="matrix(15.113 0.025 5.672 3.270 493.61 123.01)" x="0" y="0.19" fill="#cecece">D7</text><text transform="matrix(15.127 0.025 6.525 3.273 523.85 123.06)" x="0" y="0.19" fill="#cecece">D1</text><text transform="matrix(15.141 0.025 7.379 3.276 554.11 123.11)" x="0" y="0.19" fill="#cecece">D3</text><text transform="matrix(15.155 0.025 8.235 3.279 584.41 123.16)" x="0" y="0.19" fill="#cecece">D5</text><text transform="matrix(14.482 0.023 -7.735 3.050 6.62 119.06)" x="0" y="0.19" fill="#cecece">C6</text><text transform="matrix(14.495 0.023 -6.952 3.052 35.60 119.10)" x="0" y="0.19" fill="#cecece">C8</text><text transform="matrix(14.508 0.023 -6.168 3.055 64.60 119.15)" x="0" y="0.19" fill="#cecece">C2</text><text transform="matrix(14.521 0.023 -5.382 3.057 93.63 119.20)" x="0" y="0.19" fill="#cecece">C4</text><text transform="matrix(14.534 0.023 -4.595 3.060 122.68 119.24)" x="0" y="0.19" fill="#cecece">C6</text><text transform="matrix(14.547 0.023 -3.806 3.063 151.77 119.29)" x="0" y="0.19" fill="#cecece">C8</text><text transform="matrix(14.560 0.023 -3.016 3.065 180.87 119.34)" x="0" y="0.19" fill="#cecece">C2</text><text transform="matrix(14.573 0.023 -2.225 3.068 210.01 119.38)" x="0" y="0.19" fill="#cecece">C4</text><text transform="matrix(14.586 0.023 -1.432 3.071 239.17 119.43)" x="0" y="0.19" fill="#cecece">C6</text><text transform="matrix(14.600 0.023 -0.637 3.073 268.35 119.48)" x="0" y="0.19" fill="#cecece">C8</text><text transform="matrix(14.613 0.024 0.158 3.076 297.57 119.52)" x="0" y="0.19" fill="#cecece">C2</text><text transform="matrix(14.626 0.024 0.956 3.079 326.80 119.57)" x="0" y="0.19" fill="#cecece">C4</text><text transform="matrix(14.639 0.024 1.754 3.081 356.07 119.62)" x="0" y="0.19" fill="#cecece">C6</text><text transform="matrix(14.652 0.024 2.554 3.084 385.36 119.67)" x="0" y="0.19" fill="#cecece">C8</text><text transform="matrix(14.666 0.024 3.356 3.087 414.68 119.71)" x="0" y="0.19" fill="#cecece">C2</text><text transform="matrix(14.679 0.024 4.159 3.089 444.02 119.76)" x="0" y="0.19" fill="#cecece">C4</text><text transform="matrix(14.692 0.024 4.963 3.092 473.39 119.81)" x="0" y="0.19" fill="#cecece">C6</text><text transform="matrix(14.705 0.024 5.769 3.095 502.79 119.85)" x="0" y="0.19" fill="#cecece">C8</text><text transform="matrix(14.719 0.024 6.576 3.097 532.22 119.90)" x="0" y="0.19" fill="#cecece">C2</text><text transform="matrix(14.732 0.024 7.385 3.100 561.67 119.95)" x="0" y="0.19" fill="#cecece">C4</text></g>
<g font-family="Liberation Sans" font-weight="bold" font-size="0.52" text-anchor="middle" transform="" style="font-stretch:condensed"><text transform="matrix(45.404 0.242 -25.623 29.986 -9.41 359.09)" x="0" y="0.19" fill="#c9c9c9">D3</text><text transform="matrix(45.532 0.243 -17.912 30.069 81.52 359.57)" x="0" y="0.19" fill="#c9c9c9">D5</text><text transform="matrix(45.661 0.243 -10.156 30.153 172.72 360.06)" x="0" y="0.19" fill="#c9c9c9">D7</text><text transform="matrix(45.790 0.244 -2.357 30.238 264.17 360.54)" x="0" y="0.19" fill="#c9c9c9">D1</text><text transform="matrix(45.919 0.245 5.486 30.322 355.88 361.03)" x="0" y="0.19" fill="#c9c9c9">D3</text><text transform="matrix(46.050 0.245 13.374 30.407 447.84 361.52)" x="0" y="0.19" fill="#c9c9c9">D5</text><text transform="matrix(46.180 0.246 21.307 30.492 540.07 362.01)" x="0" y="0.19" fill="#c9c9c9">D7</text><text transform="matrix(41.805 0.205 -25.026 25.435 -27.63 331.25)" x="0" y="0.19" fill="#c9c9c9">C2</text><text transform="matrix(41.914 0.205 -18.490 25.501 56.09 331.66)" x="0" y="0.19" fill="#c9c9c9">C4</text><text transform="matrix(42.023 0.206 -11.920 25.566 140.02 332.07)" x="0" y="0.19" fill="#c9c9c9">C6</text><text transform="matrix(42.132 0.206 -5.316 25.632 224.18 332.48)" x="0" y="0.19" fill="#c9c9c9">C8</text><text transform="matrix(42.242 0.207 1.323 25.698 308.55 332.90)" x="0" y="0.19" fill="#c9c9c9">C2</text><text transform="matrix(42.352 0.207 7.997 25.764 393.15 333.31)" x="0" y="0.19" fill="#c9c9c9">C4</text><text transform="matrix(42.463 0.208 14.705 25.830 477.96 333.73)" x="0" y="0.19" fill="#c9c9c9">C6</text><text transform="matrix(42.574 0.209 21.449 25.897 563.00 334.14)" x="0" y="0.19" fill="#c9c9c9">C8</text><text transform="matrix(38.828 0.176 -18.713 21.899 34.38 307.84)" x="0" y="0.19" fill="#c9c9c9">B3</text><text transform="matrix(38.922 0.176 -13.076 21.951 112.13 308.19)" x="0" y="0.19" fill="#c9c9c9">B5</text><text transform="matrix(39.016 0.177 -7.411 22.003 190.07 308.54)" x="0" y="0.19" fill="#c9c9c9">B7</text><text transform="matrix(39.110 0.177 -1.719 22.056 268.19 308.90)" x="0" y="0.19" fill="#c9c9c9">B1</text><text transform="matrix(39.205 0.178 4.000 22.108 346.51 309.25)" x="0" y="0.19" fill="#c9c9c9">B3</text><text transform="matrix(39.299 0.178 9.747 22.161 425.01 309.61)" x="0" y="0.19" fill="#c9c9c9">B5</text><text transform="matrix(39.395 0.178 15.522 22.214 503.70 309.97)" x="0" y="0.19" fill="#c9c9c9">B7</text><text transform="matrix(39.490 0.179 21.325 22.267 582.59 310.32)" x="0" y="0.19" fill="#c9c9c9">B1</text></g>
<g font-family="Liberation Sans" font-weight="bold" font-size="0.52" text-anchor="middle" transform="" style="font-stretch:condensed"><text transform="matrix(38.782 0.176 -21.522 21.873 -4.43 307.66)" x="0" y="0.19" fill="#cfcfcf">B2</text><text transform="matrix(38.875 0.176 -15.898 21.925 73.23 308.02)" x="0" y="0.19" fill="#cfcfcf">B4</text><text transform="matrix(38.969 0.177 -10.247 21.977 151.07 308.37)" x="0" y="0.19" fill="#cfcfcf">B6</text><text transform="matrix(39.063 0.177 -4.569 22.030 229.11 308.72)" x="0" y="0.19" fill="#cfcfcf">B8</text><text transform="matrix(39.157 0.177 1.137 22.082 307.33 309.08)" x="0" y="0.19" fill="#cfcfcf">B2</text><text transform="matrix(39.252 0.178 6.870 22.135 385.73 309.43)" x="0" y="0.19" fill="#cfcfcf">B4</text><text transform="matrix(39.347 0.178 12.631 22.187 464.33 309.79)" x="0" y="0.19" fill="#cfcfcf">B6</text><text transform="matrix(39.442 0.179 18.420 22.241 543.12 310.14)" x="0" y="0.19" fill="#cfcfcf">B8</text><text transform="matrix(36.126 0.152 -21.141 18.989 -20.51 287.12)" x="0" y="0.19" fill="#cfcfcf">A1</text><text transform="matrix(36.207 0.153 -16.262 19.031 51.82 287.43)" x="0" y="0.19" fill="#cfcfcf">A3</text><text transform="matrix(36.288 0.153 -11.361 19.073 124.32 287.73)" x="0" y="0.19" fill="#cfcfcf">A5</text><text transform="matrix(36.369 0.153 -6.438 19.115 196.97 288.04)" x="0" y="0.19" fill="#cfcfcf">A7</text><text transform="matrix(36.451 0.154 -1.493 19.158 269.79 288.34)" x="0" y="0.19" fill="#cfcfcf">A1</text><text transform="matrix(36.533 0.154 3.474 19.200 342.78 288.65)" x="0" y="0.19" fill="#cfcfcf">A3</text><text transform="matrix(36.616 0.154 8.464 19.243 415.93 288.96)" x="0" y="0.19" fill="#cfcfcf">A5</text><text transform="matrix(36.698 0.155 13.476 19.286 489.24 289.27)" x="0" y="0.19" fill="#cfcfcf">A7</text><text transform="matrix(36.781 0.155 18.511 19.329 562.72 289.58)" x="0" y="0.19" fill="#cfcfcf">A1</text><text transform="matrix(33.881 0.133 -16.406 16.675 33.15 269.47)" x="0" y="0.19" fill="#cfcfcf">H2</text><text transform="matrix(33.952 0.134 -12.116 16.709 100.99 269.74)" x="0" y="0.19" fill="#cfcfcf">H4</text><text transform="matrix(34.023 0.134 -7.807 16.744 168.96 270.00)" x="0" y="0.19" fill="#cfcfcf">H6</text><text transform="matrix(34.095 0.134 -3.480 16.778 237.08 270.27)" x="0" y="0.19" fill="#cfcfcf">H8</text><text transform="matrix(34.167 0.135 0.866 16.813 305.34 270.54)" x="0" y="0.19" fill="#cfcfcf">H2</text><text transform="matrix(34.239 0.135 5.229 16.848 373.75 270.81)" x="0" y="0.19" fill="#cfcfcf">H4</text><text transform="matrix(34.311 0.135 9.612 16.883 442.30 271.08)" x="0" y="0.19" fill="#cfcfcf">H6</text><text transform="matrix(34.384 0.135 14.012 16.918 510.99 271.35)" x="0" y="0.19" fill="#cfcfcf">H8</text><text transform="matrix(34.457 0.136 18.431 16.953 579.83 271.62)" x="0" y="0.19" fill="#cfcfcf">H2</text><text transform="matrix(14.095 0.022 -7.703 2.889 0.05 116.06)" x="0" y="0.19" fill="#cfcfcf">B5</text><text transform="matrix(14.107 0.022 -6.961 2.892 28.26 116.11)" x="0" y="0.19" fill="#cfcfcf">B7</text><text transform="matrix(14.120 0.022 -6.218 2.894 56.48 116.15)" x="0" y="0.19" fill="#cfcfcf">B1</text><text transform="matrix(14.132 0.022 -5.474 2.897 84.73 116.20)" x="0" y="0.19" fill="#cfcfcf">B3</text><text transform="matrix(14.144 0.022 -4.728 2.899 113.01 116.24)" x="0" y="0.19" fill="#cfcfcf">B5</text><text transform="matrix(14.157 0.022 -3.981 2.902 141.31 116.29)" x="0" y="0.19" fill="#cfcfcf">B7</text><text transform="matrix(14.169 0.022 -3.233 2.904 169.64 116.33)" x="0" y="0.19" fill="#cfcfcf">B1</text><text transform="matrix(14.182 0.022 -2.484 2.906 197.99 116.37)" x="0" y="0.19" fill="#cfcfcf">B3</text><text transform="matrix(14.194 0.022 -1.733 2.909 226.36 116.42)" x="0" y="0.19" fill="#cfcfcf">B5</text><text transform="matrix(14.206 0.022 -0.981 2.911 254.76 116.46)" x="0" y="0.19" fill="#cfcfcf">B7</text><text transform="matrix(14.219 0.022 -0.227 2.914 283.19 116.51)" x="0" y="0.19" fill="#cfcfcf">B1</text><text transform="matrix(14.231 0.022 0.528 2.916 311.64 116.55)" x="0" y="0.19" fill="#cfcfcf">B3</text><text transform="matrix(14.244 0.022 1.284 2.919 340.11 116.60)" x="0" y="0.19" fill="#cfcfcf">B5</text><text transform="matrix(14.256 0.022 2.041 2.921 368.61 116.64)" x="0" y="0.19" fill="#cfcfcf">B7</text><text transform="matrix(14.269 0.022 2.800 2.924 397.14 116.69)" x="0" y="0.19" fill="#cfcfcf">B1</text><text transform="matrix(14.281 0.022 3.560 2.926 425.69 116.73)" x="0" y="0.19" fill="#cfcfcf">B3</text><text transform="matrix(14.294 0.022 4.322 2.929 454.27 116.77)" x="0" y="0.19" fill="#cfcfcf">B5</text><text transform="matrix(14.307 0.022 5.084 2.931 482.87 116.82)" x="0" y="0.19" fill="#cfcfcf">B7</text><text transform="matrix(14.319 0.022 5.848 2.934 511.49 116.86)" x="0" y="0.19" fill="#cfcfcf">B1</text><text transform="matrix(14.332 0.022 6.614 2.936 540.14 116.91)" x="0" y="0.19" fill="#cfcfcf">B3</text><text transform="matrix(14.344 0.022 7.381 2.938 568.82 116.95)" x="0" y="0.19" fill="#cfcfcf">B5</text></g>
<g font-family="Liberation Sans" font-weight="bold" font-size="0.52" text-anchor="middle" transform="" style="font-stretch:condensed"><text transform="matrix(36.166 0.152 -18.705 19.010 15.64 287.27)" x="0" y="0.19" fill="#cacaca">A2</text><text transform="matrix(36.247 0.153 -13.815 19.052 88.05 287.58)" x="0" y="0.19" fill="#cacaca">A4</text><text transform="matrix(36.329 0.153 -8.903 19.094 160.62 287.88)" x="0" y="0.19" fill="#cacaca">A6</text><text transform="matrix(36.410 0.153 -3.969 19.137 233.36 288.19)" x="0" y="0.19" fill="#cacaca">A8</text><text transform="matrix(36.492 0.154 0.988 19.179 306.27 288.50)" x="0" y="0.19" fill="#cacaca">A2</text><text transform="matrix(36.574 0.154 5.966 19.222 379.33 288.81)" x="0" y="0.19" fill="#cacaca">A4</text><text transform="matrix(36.657 0.154 10.967 19.264 452.56 289.11)" x="0" y="0.19" fill="#cacaca">A6</text><text transform="matrix(36.740 0.155 15.991 19.307 525.96 289.42)" x="0" y="0.19" fill="#cacaca">A8</text><text transform="matrix(36.823 0.155 21.037 19.350 599.52 289.73)" x="0" y="0.19" fill="#cacaca">A2</text><text transform="matrix(33.845 0.133 -18.545 16.657 -0.71 269.34)" x="0" y="0.19" fill="#cacaca">H1</text><text transform="matrix(33.916 0.134 -14.263 16.692 67.05 269.60)" x="0" y="0.19" fill="#cacaca">H3</text><text transform="matrix(33.988 0.134 -9.963 16.726 134.96 269.87)" x="0" y="0.19" fill="#cacaca">H5</text><text transform="matrix(34.059 0.134 -5.645 16.761 203.00 270.14)" x="0" y="0.19" fill="#cacaca">H7</text><text transform="matrix(34.131 0.134 -1.309 16.796 271.19 270.41)" x="0" y="0.19" fill="#cacaca">H1</text><text transform="matrix(34.203 0.135 3.045 16.830 339.53 270.68)" x="0" y="0.19" fill="#cacaca">H3</text><text transform="matrix(34.275 0.135 7.418 16.865 408.00 270.95)" x="0" y="0.19" fill="#cacaca">H5</text><text transform="matrix(34.348 0.135 11.810 16.901 476.63 271.22)" x="0" y="0.19" fill="#cacaca">H7</text><text transform="matrix(34.420 0.136 16.219 16.936 545.39 271.49)" x="0" y="0.19" fill="#cacaca">H1</text><text transform="matrix(31.804 0.117 -18.288 14.716 -15.09 253.56)" x="0" y="0.19" fill="#cacaca">G8</text><text transform="matrix(31.867 0.118 -14.507 14.744 48.58 253.79)" x="0" y="0.19" fill="#cacaca">G2</text><text transform="matrix(31.930 0.118 -10.712 14.773 112.38 254.03)" x="0" y="0.19" fill="#cacaca">G4</text><text transform="matrix(31.993 0.118 -6.901 14.802 176.30 254.26)" x="0" y="0.19" fill="#cacaca">G6</text><text transform="matrix(32.057 0.118 -3.076 14.830 240.35 254.50)" x="0" y="0.19" fill="#cacaca">G8</text><text transform="matrix(32.120 0.119 0.765 14.859 304.53 254.74)" x="0" y="0.19" fill="#cacaca">G2</text><text transform="matrix(32.184 0.119 4.621 14.888 368.83 254.97)" x="0" y="0.19" fill="#cacaca">G4</text><text transform="matrix(32.248 0.119 8.493 14.917 433.26 255.21)" x="0" y="0.19" fill="#cacaca">G6</text><text transform="matrix(32.312 0.119 12.379 14.947 497.82 255.45)" x="0" y="0.19" fill="#cacaca">G8</text><text transform="matrix(32.376 0.120 16.281 14.976 562.51 255.69)" x="0" y="0.19" fill="#cacaca">G2</text><text transform="matrix(30.052 0.104 -14.606 13.119 32.20 239.77)" x="0" y="0.19" fill="#cacaca">F1</text><text transform="matrix(30.108 0.105 -11.231 13.143 92.36 239.98)" x="0" y="0.19" fill="#cacaca">F3</text><text transform="matrix(30.164 0.105 -7.843 13.167 152.63 240.19)" x="0" y="0.19" fill="#cacaca">F5</text><text transform="matrix(30.220 0.105 -4.443 13.191 213.02 240.40)" x="0" y="0.19" fill="#cacaca">F7</text><text transform="matrix(30.276 0.105 -1.030 13.215 273.51 240.61)" x="0" y="0.19" fill="#cacaca">F1</text><text transform="matrix(30.333 0.105 2.396 13.240 334.12 240.82)" x="0" y="0.19" fill="#cacaca">F3</text><text transform="matrix(30.390 0.106 5.834 13.264 394.85 241.03)" x="0" y="0.19" fill="#cacaca">F5</text><text transform="matrix(30.447 0.106 9.285 13.288 455.68 241.25)" x="0" y="0.19" fill="#cacaca">F7</text><text transform="matrix(30.504 0.106 12.750 13.313 516.63 241.46)" x="0" y="0.19" fill="#cacaca">F1</text><text transform="matrix(30.561 0.106 16.227 13.337 577.70 241.67)" x="0" y="0.19" fill="#cacaca">F3</text></g>
<g font-family="Liberation Sans" font-weight="bold" font-size="0.52" text-anchor="middle" transform="" style="font-stretch:condensed"><text transform="matrix(31.836 0.118 -16.399 14.730 16.73 253.67)" x="0" y="0.19" fill="#d0d0d0">G1</text><text transform="matrix(31.899 0.118 -12.611 14.759 80.46 253.91)" x="0" y="0.19" fill="#d0d0d0">G3</text><text transform="matrix(31.962 0.118 -8.808 14.787 144.32 254.14)" x="0" y="0.19" fill="#d0d0d0">G5</text><text transform="matrix(32.025 0.118 -4.990 14.816 208.31 254.38)" x="0" y="0.19" fill="#d0d0d0">G7</text><text transform="matrix(32.088 0.119 -1.157 14.845 272.42 254.62)" x="0" y="0.19" fill="#d0d0d0">G1</text><text transform="matrix(32.152 0.119 2.691 14.874 336.66 254.85)" x="0" y="0.19" fill="#d0d0d0">G3</text><text transform="matrix(32.216 0.119 6.555 14.903 401.03 255.09)" x="0" y="0.19" fill="#d0d0d0">G5</text><text transform="matrix(32.280 0.119 10.434 14.932 465.53 255.33)" x="0" y="0.19" fill="#d0d0d0">G7</text><text transform="matrix(32.344 0.119 14.328 14.961 530.15 255.57)" x="0" y="0.19" fill="#d0d0d0">G1</text><text transform="matrix(32.408 0.120 18.238 14.990 594.90 255.81)" x="0" y="0.19" fill="#d0d0d0">G3</text><text transform="matrix(30.024 0.104 -16.288 13.107 2.17 239.67)" x="0" y="0.19" fill="#d0d0d0">F8</text><text transform="matrix(30.080 0.105 -12.920 13.131 62.27 239.88)" x="0" y="0.19" fill="#d0d0d0">F2</text><text transform="matrix(30.136 0.105 -9.539 13.155 122.48 240.09)" x="0" y="0.19" fill="#d0d0d0">F4</text><text transform="matrix(30.192 0.105 -6.145 13.179 182.81 240.30)" x="0" y="0.19" fill="#d0d0d0">F6</text><text transform="matrix(30.248 0.105 -2.738 13.203 243.25 240.51)" x="0" y="0.19" fill="#d0d0d0">F8</text><text transform="matrix(30.305 0.105 0.681 13.227 303.81 240.72)" x="0" y="0.19" fill="#d0d0d0">F2</text><text transform="matrix(30.361 0.106 4.113 13.252 364.47 240.93)" x="0" y="0.19" fill="#d0d0d0">F4</text><text transform="matrix(30.418 0.106 7.558 13.276 425.25 241.14)" x="0" y="0.19" fill="#d0d0d0">F6</text><text transform="matrix(30.475 0.106 11.016 13.301 486.15 241.35)" x="0" y="0.19" fill="#d0d0d0">F8</text><text transform="matrix(30.533 0.106 14.487 13.325 547.15 241.56)" x="0" y="0.19" fill="#d0d0d0">F2</text><text transform="matrix(28.407 0.093 -16.106 11.738 -10.83 227.17)" x="0" y="0.19" fill="#d0d0d0">E7</text><text transform="matrix(28.457 0.093 -13.091 11.758 46.03 227.35)" x="0" y="0.19" fill="#d0d0d0">E1</text><text transform="matrix(28.507 0.094 -10.065 11.779 102.99 227.54)" x="0" y="0.19" fill="#d0d0d0">E3</text><text transform="matrix(28.557 0.094 -7.028 11.799 160.06 227.73)" x="0" y="0.19" fill="#d0d0d0">E5</text><text transform="matrix(28.608 0.094 -3.981 11.819 217.22 227.92)" x="0" y="0.19" fill="#d0d0d0">E7</text><text transform="matrix(28.658 0.094 -0.923 11.840 274.49 228.10)" x="0" y="0.19" fill="#d0d0d0">E1</text><text transform="matrix(28.709 0.094 2.146 11.861 331.86 228.29)" x="0" y="0.19" fill="#d0d0d0">E3</text><text transform="matrix(28.760 0.094 5.226 11.881 389.33 228.48)" x="0" y="0.19" fill="#d0d0d0">E5</text><text transform="matrix(28.811 0.095 8.317 11.902 446.90 228.67)" x="0" y="0.19" fill="#d0d0d0">E7</text><text transform="matrix(28.862 0.095 11.418 11.923 504.57 228.86)" x="0" y="0.19" fill="#d0d0d0">E1</text><text transform="matrix(28.913 0.095 14.531 11.943 562.34 229.05)" x="0" y="0.19" fill="#d0d0d0">E3</text><text transform="matrix(26.955 0.084 -15.875 10.573 -22.51 215.94)" x="0" y="0.19" fill="#d0d0d0">D6</text><text transform="matrix(27.000 0.084 -13.161 10.590 31.45 216.11)" x="0" y="0.19" fill="#d0d0d0">D8</text><text transform="matrix(27.045 0.084 -10.437 10.608 85.49 216.27)" x="0" y="0.19" fill="#d0d0d0">D2</text><text transform="matrix(27.091 0.084 -7.704 10.625 139.63 216.44)" x="0" y="0.19" fill="#d0d0d0">D4</text><text transform="matrix(27.136 0.084 -4.962 10.642 193.86 216.61)" x="0" y="0.19" fill="#d0d0d0">D6</text><text transform="matrix(27.181 0.085 -2.211 10.660 248.17 216.78)" x="0" y="0.19" fill="#d0d0d0">D8</text><text transform="matrix(27.227 0.085 0.550 10.677 302.58 216.95)" x="0" y="0.19" fill="#d0d0d0">D2</text><text transform="matrix(27.273 0.085 3.320 10.695 357.08 217.12)" x="0" y="0.19" fill="#d0d0d0">D4</text><text transform="matrix(27.319 0.085 6.099 10.713 411.67 217.29)" x="0" y="0.19" fill="#d0d0d0">D6</text><text transform="matrix(27.365 0.085 8.887 10.730 466.36 217.46)" x="0" y="0.19" fill="#d0d0d0">D8</text><text transform="matrix(27.411 0.085 11.685 10.748 521.13 217.63)" x="0" y="0.19" fill="#d0d0d0">D2</text><text transform="matrix(27.457 0.085 14.492 10.766 576.00 217.80)" x="0" y="0.19" fill="#d0d0d0">D4</text><text transform="matrix(25.685 0.076 -13.156 9.588 18.28 205.95)" x="0" y="0.19" fill="#d0d0d0">C7</text><text transform="matrix(25.726 0.076 -10.691 9.603 69.69 206.10)" x="0" y="0.19" fill="#d0d0d0">C1</text><text transform="matrix(25.767 0.076 -8.219 9.618 121.18 206.25)" x="0" y="0.19" fill="#d0d0d0">C3</text><text transform="matrix(25.808 0.076 -5.738 9.633 172.76 206.41)" x="0" y="0.19" fill="#d0d0d0">C5</text><text transform="matrix(25.849 0.076 -3.250 9.648 224.42 206.56)" x="0" y="0.19" fill="#d0d0d0">C7</text><text transform="matrix(25.891 0.076 -0.753 9.663 276.16 206.71)" x="0" y="0.19" fill="#d0d0d0">C1</text><text transform="matrix(25.932 0.077 1.751 9.678 327.98 206.86)" x="0" y="0.19" fill="#d0d0d0">C3</text><text transform="matrix(25.974 0.077 4.264 9.693 379.89 207.02)" x="0" y="0.19" fill="#d0d0d0">C5</text><text transform="matrix(26.015 0.077 6.784 9.708 431.87 207.17)" x="0" y="0.19" fill="#d0d0d0">C7</text><text transform="matrix(26.057 0.077 9.313 9.724 483.95 207.33)" x="0" y="0.19" fill="#d0d0d0">C1</text><text transform="matrix(26.099 0.077 11.849 9.739 536.10 207.48)" x="0" y="0.19" fill="#d0d0d0">C3</text><text transform="matrix(26.141 0.077 14.394 9.754 588.34 207.63)" x="0" y="0.19" fill="#d0d0d0">C5</text></g>
<g font-family="Liberation Sans" font-weight="bold" font-size="0.52" text-anchor="middle" transform="" style="font-stretch:condensed"><text transform="matrix(28.432 0.093 -14.600 11.748 17.59 227.26)" x="0" y="0.19" fill="#cbcbcb">E8</text><text transform="matrix(28.482 0.094 -11.579 11.768 74.50 227.45)" x="0" y="0.19" fill="#cbcbcb">E2</text><text transform="matrix(28.532 0.094 -8.548 11.789 131.51 227.63)" x="0" y="0.19" fill="#cbcbcb">E4</text><text transform="matrix(28.582 0.094 -5.506 11.809 188.63 227.82)" x="0" y="0.19" fill="#cbcbcb">E6</text><text transform="matrix(28.633 0.094 -2.453 11.830 245.84 228.01)" x="0" y="0.19" fill="#cbcbcb">E8</text><text transform="matrix(28.684 0.094 0.610 11.850 303.16 228.20)" x="0" y="0.19" fill="#cbcbcb">E2</text><text transform="matrix(28.734 0.094 3.685 11.871 360.58 228.39)" x="0" y="0.19" fill="#cbcbcb">E4</text><text transform="matrix(28.785 0.095 6.770 11.891 418.10 228.57)" x="0" y="0.19" fill="#cbcbcb">E6</text><text transform="matrix(28.836 0.095 9.866 11.912 475.72 228.76)" x="0" y="0.19" fill="#cbcbcb">E8</text><text transform="matrix(28.888 0.095 12.973 11.933 533.44 228.95)" x="0" y="0.19" fill="#cbcbcb">E2</text><text transform="matrix(28.939 0.095 16.092 11.954 591.27 229.14)" x="0" y="0.19" fill="#cbcbcb">E4</text><text transform="matrix(26.977 0.084 -14.519 10.582 4.46 216.02)" x="0" y="0.19" fill="#cbcbcb">D7</text><text transform="matrix(27.023 0.084 -11.800 10.599 58.46 216.19)" x="0" y="0.19" fill="#cbcbcb">D1</text><text transform="matrix(27.068 0.084 -9.072 10.616 112.55 216.36)" x="0" y="0.19" fill="#cbcbcb">D3</text><text transform="matrix(27.113 0.084 -6.334 10.634 166.73 216.53)" x="0" y="0.19" fill="#cbcbcb">D5</text><text transform="matrix(27.159 0.084 -3.588 10.651 221.00 216.70)" x="0" y="0.19" fill="#cbcbcb">D7</text><text transform="matrix(27.204 0.085 -0.832 10.669 275.37 216.86)" x="0" y="0.19" fill="#cbcbcb">D1</text><text transform="matrix(27.250 0.085 1.934 10.686 329.82 217.03)" x="0" y="0.19" fill="#cbcbcb">D3</text><text transform="matrix(27.296 0.085 4.708 10.704 384.37 217.20)" x="0" y="0.19" fill="#cbcbcb">D5</text><text transform="matrix(27.342 0.085 7.492 10.722 439.00 217.37)" x="0" y="0.19" fill="#cbcbcb">D7</text><text transform="matrix(27.388 0.085 10.285 10.739 493.73 217.54)" x="0" y="0.19" fill="#cbcbcb">D1</text><text transform="matrix(27.434 0.085 13.088 10.757 548.55 217.71)" x="0" y="0.19" fill="#cbcbcb">D3</text><text transform="matrix(25.665 0.076 -14.385 9.580 -7.39 205.87)" x="0" y="0.19" fill="#cbcbcb">C6</text><text transform="matrix(25.706 0.076 -11.925 9.595 43.98 206.03)" x="0" y="0.19" fill="#cbcbcb">C8</text><text transform="matrix(25.747 0.076 -9.456 9.610 95.43 206.18)" x="0" y="0.19" fill="#cbcbcb">C2</text><text transform="matrix(25.788 0.076 -6.979 9.625 146.96 206.33)" x="0" y="0.19" fill="#cbcbcb">C4</text><text transform="matrix(25.829 0.076 -4.495 9.640 198.58 206.48)" x="0" y="0.19" fill="#cbcbcb">C6</text><text transform="matrix(25.870 0.076 -2.002 9.655 250.28 206.63)" x="0" y="0.19" fill="#cbcbcb">C8</text><text transform="matrix(25.911 0.077 0.498 9.671 302.06 206.79)" x="0" y="0.19" fill="#cbcbcb">C2</text><text transform="matrix(25.953 0.077 3.006 9.686 353.92 206.94)" x="0" y="0.19" fill="#cbcbcb">C4</text><text transform="matrix(25.994 0.077 5.523 9.701 405.87 207.09)" x="0" y="0.19" fill="#cbcbcb">C6</text><text transform="matrix(26.036 0.077 8.047 9.716 457.90 207.25)" x="0" y="0.19" fill="#cbcbcb">C8</text><text transform="matrix(26.078 0.077 10.580 9.731 510.01 207.40)" x="0" y="0.19" fill="#cbcbcb">C2</text><text transform="matrix(26.120 0.077 13.120 9.747 562.21 207.56)" x="0" y="0.19" fill="#cbcbcb">C4</text></g>
<g font-family="Liberation Sans" font-weight="bold" font-size="0.52" text-anchor="middle" transform="" style="font-stretch:condensed"><text transform="matrix(24.474 0.069 -14.214 8.715 -18.15 196.66)" x="0" y="0.19" fill="#cccccc">B5</text><text transform="matrix(24.511 0.069 -11.976 8.728 30.83 196.80)" x="0" y="0.19" fill="#cccccc">B7</text><text transform="matrix(24.548 0.069 -9.732 8.741 79.89 196.94)" x="0" y="0.19" fill="#cccccc">B1</text><text transform="matrix(24.586 0.069 -7.480 8.754 129.03 197.08)" x="0" y="0.19" fill="#cccccc">B3</text><text transform="matrix(24.623 0.069 -5.222 8.767 178.23 197.22)" x="0" y="0.19" fill="#cccccc">B5</text><text transform="matrix(24.661 0.069 -2.957 8.780 227.52 197.35)" x="0" y="0.19" fill="#cccccc">B7</text><text transform="matrix(24.698 0.069 -0.685 8.793 276.88 197.49)" x="0" y="0.19" fill="#cccccc">B1</text><text transform="matrix(24.736 0.070 1.593 8.806 326.31 197.63)" x="0" y="0.19" fill="#cccccc">B3</text><text transform="matrix(24.774 0.070 3.879 8.819 375.82 197.77)" x="0" y="0.19" fill="#cccccc">B5</text><text transform="matrix(24.811 0.070 6.172 8.833 425.40 197.91)" x="0" y="0.19" fill="#cccccc">B7</text><text transform="matrix(24.849 0.070 8.472 8.846 475.06 198.05)" x="0" y="0.19" fill="#cccccc">B1</text><text transform="matrix(24.887 0.070 10.778 8.859 524.80 198.19)" x="0" y="0.19" fill="#cccccc">B3</text><text transform="matrix(24.925 0.070 13.092 8.872 574.61 198.33)" x="0" y="0.19" fill="#cccccc">B5</text><text transform="matrix(23.423 0.063 -11.972 7.973 18.85 188.39)" x="0" y="0.19" fill="#cccccc">A6</text><text transform="matrix(23.457 0.063 -9.922 7.984 65.73 188.52)" x="0" y="0.19" fill="#cccccc">A8</text><text transform="matrix(23.491 0.063 -7.867 7.996 112.68 188.65)" x="0" y="0.19" fill="#cccccc">A2</text><text transform="matrix(23.525 0.063 -5.806 8.007 159.69 188.77)" x="0" y="0.19" fill="#cccccc">A4</text><text transform="matrix(23.559 0.063 -3.739 8.018 206.78 188.90)" x="0" y="0.19" fill="#cccccc">A6</text><text transform="matrix(23.593 0.063 -1.665 8.030 253.93 189.02)" x="0" y="0.19" fill="#cccccc">A8</text><text transform="matrix(23.628 0.063 0.414 8.041 301.15 189.15)" x="0" y="0.19" fill="#cccccc">A2</text><text transform="matrix(23.662 0.063 2.499 8.053 348.44 189.28)" x="0" y="0.19" fill="#cccccc">A4</text><text transform="matrix(23.697 0.064 4.591 8.064 395.80 189.41)" x="0" y="0.19" fill="#cccccc">A6</text><text transform="matrix(23.731 0.064 6.689 8.076 443.23 189.53)" x="0" y="0.19" fill="#cccccc">A8</text><text transform="matrix(23.766 0.064 8.792 8.087 490.72 189.66)" x="0" y="0.19" fill="#cccccc">A2</text><text transform="matrix(23.801 0.064 10.902 8.099 538.29 189.79)" x="0" y="0.19" fill="#cccccc">A4</text><text transform="matrix(23.836 0.064 13.018 8.110 585.93 189.92)" x="0" y="0.19" fill="#cccccc">A6</text><text transform="matrix(22.427 0.057 -11.925 7.312 7.89 180.70)" x="0" y="0.19" fill="#cccccc">H5</text><text transform="matrix(22.458 0.058 -10.047 7.322 52.77 180.81)" x="0" y="0.19" fill="#cccccc">H7</text><text transform="matrix(22.489 0.058 -8.163 7.332 97.72 180.93)" x="0" y="0.19" fill="#cccccc">H1</text><text transform="matrix(22.520 0.058 -6.274 7.342 142.73 181.04)" x="0" y="0.19" fill="#cccccc">H3</text><text transform="matrix(22.552 0.058 -4.379 7.352 187.80 181.16)" x="0" y="0.19" fill="#cccccc">H5</text><text transform="matrix(22.583 0.058 -2.480 7.362 232.93 181.28)" x="0" y="0.19" fill="#cccccc">H7</text><text transform="matrix(22.615 0.058 -0.575 7.372 278.13 181.39)" x="0" y="0.19" fill="#cccccc">H1</text><text transform="matrix(22.646 0.058 1.336 7.382 323.39 181.51)" x="0" y="0.19" fill="#cccccc">H3</text><text transform="matrix(22.678 0.058 3.251 7.392 368.72 181.62)" x="0" y="0.19" fill="#cccccc">H5</text><text transform="matrix(22.710 0.058 5.172 7.402 414.10 181.74)" x="0" y="0.19" fill="#cccccc">H7</text><text transform="matrix(22.741 0.058 7.099 7.412 459.56 181.86)" x="0" y="0.19" fill="#cccccc">H1</text><text transform="matrix(22.773 0.058 9.031 7.422 505.07 181.97)" x="0" y="0.19" fill="#cccccc">H3</text><text transform="matrix(22.805 0.058 10.968 7.432 550.65 182.09)" x="0" y="0.19" fill="#cccccc">H5</text><text transform="matrix(21.512 0.053 -11.847 6.730 -2.19 173.63)" x="0" y="0.19" fill="#cccccc">G4</text><text transform="matrix(21.541 0.053 -10.118 6.739 40.86 173.73)" x="0" y="0.19" fill="#cccccc">G6</text><text transform="matrix(21.569 0.053 -8.385 6.748 83.97 173.84)" x="0" y="0.19" fill="#cccccc">G8</text><text transform="matrix(21.598 0.053 -6.648 6.756 127.14 173.95)" x="0" y="0.19" fill="#cccccc">G2</text><text transform="matrix(21.627 0.053 -4.905 6.765 170.37 174.05)" x="0" y="0.19" fill="#cccccc">G4</text><text transform="matrix(21.656 0.053 -3.158 6.774 213.65 174.16)" x="0" y="0.19" fill="#cccccc">G6</text><text transform="matrix(21.685 0.053 -1.407 6.783 256.99 174.26)" x="0" y="0.19" fill="#cccccc">G8</text><text transform="matrix(21.714 0.053 0.350 6.792 300.39 174.37)" x="0" y="0.19" fill="#cccccc">G2</text><text transform="matrix(21.743 0.053 2.111 6.800 343.85 174.48)" x="0" y="0.19" fill="#cccccc">G4</text><text transform="matrix(21.772 0.053 3.877 6.809 387.36 174.58)" x="0" y="0.19" fill="#cccccc">G6</text><text transform="matrix(21.802 0.054 5.647 6.818 430.94 174.69)" x="0" y="0.19" fill="#cccccc">G8</text><text transform="matrix(21.831 0.054 7.422 6.827 474.57 174.80)" x="0" y="0.19" fill="#cccccc">G2</text><text transform="matrix(21.860 0.054 9.203 6.836 518.26 174.91)" x="0" y="0.19" fill="#cccccc">G4</text><text transform="matrix(21.890 0.054 10.987 6.845 562.01 175.01)" x="0" y="0.19" fill="#cccccc">G6</text><text transform="matrix(20.669 0.049 -11.744 6.215 -11.48 167.11)" x="0" y="0.19" fill="#cccccc">F3</text><text transform="matrix(20.695 0.049 -10.148 6.223 29.89 167.21)" x="0" y="0.19" fill="#cccccc">F5</text><text transform="matrix(20.722 0.049 -8.549 6.230 71.30 167.31)" x="0" y="0.19" fill="#cccccc">F7</text><text transform="matrix(20.749 0.049 -6.945 6.238 112.78 167.40)" x="0" y="0.19" fill="#cccccc">F1</text><text transform="matrix(20.775 0.049 -5.337 6.246 154.30 167.50)" x="0" y="0.19" fill="#cccccc">F3</text><text transform="matrix(20.802 0.049 -3.725 6.254 195.88 167.60)" x="0" y="0.19" fill="#cccccc">F5</text><text transform="matrix(20.829 0.049 -2.109 6.262 237.51 167.70)" x="0" y="0.19" fill="#cccccc">F7</text><text transform="matrix(20.856 0.049 -0.489 6.269 279.19 167.80)" x="0" y="0.19" fill="#cccccc">F1</text><text transform="matrix(20.882 0.049 1.136 6.277 320.93 167.89)" x="0" y="0.19" fill="#cccccc">F3</text><text transform="matrix(20.909 0.049 2.764 6.285 362.72 167.99)" x="0" y="0.19" fill="#cccccc">F5</text><text transform="matrix(20.936 0.049 4.397 6.293 404.57 168.09)" x="0" y="0.19" fill="#cccccc">F7</text><text transform="matrix(20.963 0.049 6.034 6.301 446.47 168.19)" x="0" y="0.19" fill="#cccccc">F1</text><text transform="matrix(20.990 0.049 7.676 6.309 488.42 168.29)" x="0" y="0.19" fill="#cccccc">F3</text><text transform="matrix(21.017 0.049 9.321 6.317 530.43 168.39)" x="0" y="0.19" fill="#cccccc">F5</text><text transform="matrix(21.045 0.050 10.971 6.325 572.49 168.49)" x="0" y="0.19" fill="#cccccc">F7</text></g>
<g font-family="Liberation Sans" font-weight="bold" font-size="0.52" text-anchor="middle" transform="" style="font-stretch:condensed"><text transform="matrix(24.492 0.069 -13.096 8.722 6.33 196.73)" x="0" y="0.19" fill="#d1d1d1">B6</text><text transform="matrix(24.530 0.069 -10.855 8.734 55.35 196.87)" x="0" y="0.19" fill="#d1d1d1">B8</text><text transform="matrix(24.567 0.069 -8.607 8.747 104.45 197.01)" x="0" y="0.19" fill="#d1d1d1">B2</text><text transform="matrix(24.604 0.069 -6.352 8.760 153.62 197.15)" x="0" y="0.19" fill="#d1d1d1">B4</text><text transform="matrix(24.642 0.069 -4.091 8.773 202.87 197.29)" x="0" y="0.19" fill="#d1d1d1">B6</text><text transform="matrix(24.679 0.069 -1.822 8.787 252.19 197.42)" x="0" y="0.19" fill="#d1d1d1">B8</text><text transform="matrix(24.717 0.070 0.453 8.800 301.58 197.56)" x="0" y="0.19" fill="#d1d1d1">B2</text><text transform="matrix(24.755 0.070 2.735 8.813 351.05 197.70)" x="0" y="0.19" fill="#d1d1d1">B4</text><text transform="matrix(24.792 0.070 5.025 8.826 400.60 197.84)" x="0" y="0.19" fill="#d1d1d1">B6</text><text transform="matrix(24.830 0.070 7.321 8.839 450.22 197.98)" x="0" y="0.19" fill="#d1d1d1">B8</text><text transform="matrix(24.868 0.070 9.624 8.852 499.92 198.12)" x="0" y="0.19" fill="#d1d1d1">B2</text><text transform="matrix(24.906 0.070 11.934 8.866 549.70 198.26)" x="0" y="0.19" fill="#d1d1d1">B4</text><text transform="matrix(23.406 0.063 -12.994 7.967 -4.56 188.33)" x="0" y="0.19" fill="#d1d1d1">A5</text><text transform="matrix(23.440 0.063 -10.948 7.979 42.28 188.46)" x="0" y="0.19" fill="#d1d1d1">A7</text><text transform="matrix(23.474 0.063 -8.896 7.990 89.20 188.58)" x="0" y="0.19" fill="#d1d1d1">A1</text><text transform="matrix(23.508 0.063 -6.837 8.001 136.18 188.71)" x="0" y="0.19" fill="#d1d1d1">A3</text><text transform="matrix(23.542 0.063 -4.773 8.013 183.23 188.84)" x="0" y="0.19" fill="#d1d1d1">A5</text><text transform="matrix(23.576 0.063 -2.703 8.024 230.34 188.96)" x="0" y="0.19" fill="#d1d1d1">A7</text><text transform="matrix(23.611 0.063 -0.626 8.036 277.53 189.09)" x="0" y="0.19" fill="#d1d1d1">A1</text><text transform="matrix(23.645 0.063 1.456 8.047 324.79 189.21)" x="0" y="0.19" fill="#d1d1d1">A3</text><text transform="matrix(23.679 0.064 3.544 8.059 372.11 189.34)" x="0" y="0.19" fill="#d1d1d1">A5</text><text transform="matrix(23.714 0.064 5.639 8.070 419.50 189.47)" x="0" y="0.19" fill="#d1d1d1">A7</text><text transform="matrix(23.749 0.064 7.740 8.082 466.97 189.60)" x="0" y="0.19" fill="#d1d1d1">A1</text><text transform="matrix(23.783 0.064 9.847 8.093 514.50 189.72)" x="0" y="0.19" fill="#d1d1d1">A3</text><text transform="matrix(23.818 0.064 11.960 8.105 562.10 189.85)" x="0" y="0.19" fill="#d1d1d1">A5</text><text transform="matrix(22.411 0.057 -12.863 7.307 -14.53 180.64)" x="0" y="0.19" fill="#d1d1d1">H4</text><text transform="matrix(22.442 0.058 -10.987 7.317 30.32 180.76)" x="0" y="0.19" fill="#d1d1d1">H6</text><text transform="matrix(22.473 0.058 -9.105 7.327 75.24 180.87)" x="0" y="0.19" fill="#d1d1d1">H8</text><text transform="matrix(22.505 0.058 -7.219 7.337 120.21 180.99)" x="0" y="0.19" fill="#d1d1d1">H2</text><text transform="matrix(22.536 0.058 -5.327 7.347 165.25 181.10)" x="0" y="0.19" fill="#d1d1d1">H4</text><text transform="matrix(22.567 0.058 -3.430 7.357 210.36 181.22)" x="0" y="0.19" fill="#d1d1d1">H6</text><text transform="matrix(22.599 0.058 -1.528 7.367 255.52 181.33)" x="0" y="0.19" fill="#d1d1d1">H8</text><text transform="matrix(22.631 0.058 0.380 7.377 300.75 181.45)" x="0" y="0.19" fill="#d1d1d1">H2</text><text transform="matrix(22.662 0.058 2.293 7.387 346.05 181.57)" x="0" y="0.19" fill="#d1d1d1">H4</text><text transform="matrix(22.694 0.058 4.211 7.397 391.40 181.68)" x="0" y="0.19" fill="#d1d1d1">H6</text><text transform="matrix(22.726 0.058 6.135 7.407 436.82 181.80)" x="0" y="0.19" fill="#d1d1d1">H8</text><text transform="matrix(22.757 0.058 8.064 7.417 482.30 181.92)" x="0" y="0.19" fill="#d1d1d1">H2</text><text transform="matrix(22.789 0.058 9.998 7.427 527.85 182.03)" x="0" y="0.19" fill="#d1d1d1">H4</text><text transform="matrix(22.821 0.059 11.938 7.438 573.46 182.15)" x="0" y="0.19" fill="#d1d1d1">H6</text><text transform="matrix(21.526 0.053 -10.983 6.734 19.33 173.68)" x="0" y="0.19" fill="#d1d1d1">G5</text><text transform="matrix(21.555 0.053 -9.252 6.743 62.41 173.79)" x="0" y="0.19" fill="#d1d1d1">G7</text><text transform="matrix(21.584 0.053 -7.517 6.752 105.55 173.89)" x="0" y="0.19" fill="#d1d1d1">G1</text><text transform="matrix(21.613 0.053 -5.777 6.761 148.75 174.00)" x="0" y="0.19" fill="#d1d1d1">G3</text><text transform="matrix(21.642 0.053 -4.032 6.770 192.00 174.11)" x="0" y="0.19" fill="#d1d1d1">G5</text><text transform="matrix(21.671 0.053 -2.283 6.778 235.31 174.21)" x="0" y="0.19" fill="#d1d1d1">G7</text><text transform="matrix(21.700 0.053 -0.529 6.787 278.68 174.32)" x="0" y="0.19" fill="#d1d1d1">G1</text><text transform="matrix(21.729 0.053 1.230 6.796 322.11 174.42)" x="0" y="0.19" fill="#d1d1d1">G3</text><text transform="matrix(21.758 0.053 2.993 6.805 365.60 174.53)" x="0" y="0.19" fill="#d1d1d1">G5</text><text transform="matrix(21.787 0.053 4.761 6.814 409.14 174.64)" x="0" y="0.19" fill="#d1d1d1">G7</text><text transform="matrix(21.816 0.054 6.534 6.823 452.74 174.75)" x="0" y="0.19" fill="#d1d1d1">G1</text><text transform="matrix(21.845 0.054 8.312 6.832 496.41 174.85)" x="0" y="0.19" fill="#d1d1d1">G3</text><text transform="matrix(21.875 0.054 10.094 6.841 540.13 174.96)" x="0" y="0.19" fill="#d1d1d1">G5</text><text transform="matrix(21.904 0.054 11.882 6.850 583.91 175.07)" x="0" y="0.19" fill="#d1d1d1">G7</text><text transform="matrix(20.682 0.049 -10.947 6.219 9.20 167.16)" x="0" y="0.19" fill="#d1d1d1">F4</text><text transform="matrix(20.709 0.049 -9.349 6.226 50.59 167.26)" x="0" y="0.19" fill="#d1d1d1">F6</text><text transform="matrix(20.735 0.049 -7.747 6.234 92.03 167.35)" x="0" y="0.19" fill="#d1d1d1">F8</text><text transform="matrix(20.762 0.049 -6.142 6.242 133.53 167.45)" x="0" y="0.19" fill="#d1d1d1">F2</text><text transform="matrix(20.789 0.049 -4.532 6.250 175.08 167.55)" x="0" y="0.19" fill="#d1d1d1">F4</text><text transform="matrix(20.815 0.049 -2.918 6.258 216.68 167.65)" x="0" y="0.19" fill="#d1d1d1">F6</text><text transform="matrix(20.842 0.049 -1.299 6.265 258.34 167.75)" x="0" y="0.19" fill="#d1d1d1">F8</text><text transform="matrix(20.869 0.049 0.323 6.273 300.05 167.84)" x="0" y="0.19" fill="#d1d1d1">F2</text><text transform="matrix(20.896 0.049 1.950 6.281 341.82 167.94)" x="0" y="0.19" fill="#d1d1d1">F4</text><text transform="matrix(20.923 0.049 3.580 6.289 383.64 168.04)" x="0" y="0.19" fill="#d1d1d1">F6</text><text transform="matrix(20.950 0.049 5.215 6.297 425.51 168.14)" x="0" y="0.19" fill="#d1d1d1">F8</text><text transform="matrix(20.977 0.049 6.855 6.305 467.44 168.24)" x="0" y="0.19" fill="#d1d1d1">F2</text><text transform="matrix(21.004 0.049 8.498 6.313 509.42 168.34)" x="0" y="0.19" fill="#d1d1d1">F4</text><text transform="matrix(21.031 0.050 10.146 6.321 551.45 168.44)" x="0" y="0.19" fill="#d1d1d1">F6</text></g>
<g font-family="Liberation Sans" font-weight="bold" font-size="0.52" text-anchor="middle" transform="" style="font-stretch:condensed"><text transform="matrix(19.902 0.045 -10.884 5.760 -0.17 161.13)" x="0" y="0.19" fill="#d2d2d2">E3</text><text transform="matrix(19.926 0.045 -9.405 5.767 39.66 161.22)" x="0" y="0.19" fill="#d2d2d2">E5</text><text transform="matrix(19.951 0.045 -7.922 5.774 79.53 161.31)" x="0" y="0.19" fill="#d2d2d2">E7</text><text transform="matrix(19.976 0.045 -6.436 5.781 119.46 161.40)" x="0" y="0.19" fill="#d2d2d2">E1</text><text transform="matrix(20.000 0.045 -4.946 5.788 159.44 161.49)" x="0" y="0.19" fill="#d2d2d2">E3</text><text transform="matrix(20.025 0.045 -3.452 5.795 199.46 161.58)" x="0" y="0.19" fill="#d2d2d2">E5</text><text transform="matrix(20.050 0.045 -1.954 5.802 239.54 161.67)" x="0" y="0.19" fill="#d2d2d2">E7</text><text transform="matrix(20.075 0.045 -0.453 5.809 279.66 161.76)" x="0" y="0.19" fill="#d2d2d2">E1</text><text transform="matrix(20.100 0.045 1.052 5.816 319.84 161.85)" x="0" y="0.19" fill="#d2d2d2">E3</text><text transform="matrix(20.124 0.046 2.561 5.823 360.06 161.94)" x="0" y="0.19" fill="#d2d2d2">E5</text><text transform="matrix(20.149 0.046 4.074 5.830 400.33 162.03)" x="0" y="0.19" fill="#d2d2d2">E7</text><text transform="matrix(20.174 0.046 5.590 5.837 440.66 162.12)" x="0" y="0.19" fill="#d2d2d2">E1</text><text transform="matrix(20.200 0.046 7.110 5.844 481.03 162.22)" x="0" y="0.19" fill="#d2d2d2">E3</text><text transform="matrix(20.225 0.046 8.634 5.851 521.46 162.31)" x="0" y="0.19" fill="#d2d2d2">E5</text><text transform="matrix(20.250 0.046 10.161 5.858 561.93 162.40)" x="0" y="0.19" fill="#d2d2d2">E7</text><text transform="matrix(19.178 0.042 -10.802 5.350 -8.86 155.53)" x="0" y="0.19" fill="#d2d2d2">D2</text><text transform="matrix(19.201 0.042 -9.429 5.356 29.52 155.62)" x="0" y="0.19" fill="#d2d2d2">D4</text><text transform="matrix(19.224 0.042 -8.052 5.363 67.94 155.70)" x="0" y="0.19" fill="#d2d2d2">D6</text><text transform="matrix(19.247 0.042 -6.672 5.369 106.41 155.78)" x="0" y="0.19" fill="#d2d2d2">D8</text><text transform="matrix(19.270 0.042 -5.289 5.375 144.93 155.87)" x="0" y="0.19" fill="#d2d2d2">D2</text><text transform="matrix(19.293 0.042 -3.902 5.381 183.49 155.95)" x="0" y="0.19" fill="#d2d2d2">D4</text><text transform="matrix(19.316 0.042 -2.512 5.387 222.10 156.04)" x="0" y="0.19" fill="#d2d2d2">D6</text><text transform="matrix(19.339 0.042 -1.119 5.394 260.75 156.12)" x="0" y="0.19" fill="#d2d2d2">D8</text><text transform="matrix(19.362 0.042 0.278 5.400 299.45 156.20)" x="0" y="0.19" fill="#d2d2d2">D2</text><text transform="matrix(19.385 0.042 1.678 5.406 338.20 156.29)" x="0" y="0.19" fill="#d2d2d2">D4</text><text transform="matrix(19.408 0.042 3.081 5.413 376.99 156.37)" x="0" y="0.19" fill="#d2d2d2">D6</text><text transform="matrix(19.431 0.042 4.488 5.419 415.83 156.46)" x="0" y="0.19" fill="#d2d2d2">D8</text><text transform="matrix(19.455 0.042 5.898 5.425 454.72 156.54)" x="0" y="0.19" fill="#d2d2d2">D2</text><text transform="matrix(19.478 0.042 7.312 5.431 493.65 156.63)" x="0" y="0.19" fill="#d2d2d2">D4</text><text transform="matrix(19.501 0.042 8.728 5.438 532.63 156.71)" x="0" y="0.19" fill="#d2d2d2">D6</text><text transform="matrix(19.525 0.042 10.149 5.444 571.66 156.80)" x="0" y="0.19" fill="#d2d2d2">D8</text><text transform="matrix(18.527 0.039 -9.426 4.988 20.09 150.41)" x="0" y="0.19" fill="#d2d2d2">C3</text><text transform="matrix(18.548 0.039 -8.145 4.994 57.16 150.49)" x="0" y="0.19" fill="#d2d2d2">C5</text><text transform="matrix(18.569 0.039 -6.860 4.999 94.28 150.56)" x="0" y="0.19" fill="#d2d2d2">C7</text><text transform="matrix(18.590 0.039 -5.572 5.005 131.44 150.64)" x="0" y="0.19" fill="#d2d2d2">C1</text><text transform="matrix(18.612 0.039 -4.282 5.011 168.64 150.72)" x="0" y="0.19" fill="#d2d2d2">C3</text><text transform="matrix(18.633 0.039 -2.988 5.016 205.88 150.80)" x="0" y="0.19" fill="#d2d2d2">C5</text><text transform="matrix(18.655 0.039 -1.691 5.022 243.17 150.87)" x="0" y="0.19" fill="#d2d2d2">C7</text><text transform="matrix(18.676 0.039 -0.392 5.027 280.50 150.95)" x="0" y="0.19" fill="#d2d2d2">C1</text><text transform="matrix(18.698 0.039 0.911 5.033 317.88 151.03)" x="0" y="0.19" fill="#d2d2d2">C3</text><text transform="matrix(18.719 0.039 2.216 5.039 355.29 151.11)" x="0" y="0.19" fill="#d2d2d2">C5</text><text transform="matrix(18.741 0.039 3.525 5.044 392.76 151.19)" x="0" y="0.19" fill="#d2d2d2">C7</text><text transform="matrix(18.763 0.039 4.836 5.050 430.26 151.27)" x="0" y="0.19" fill="#d2d2d2">C1</text><text transform="matrix(18.784 0.039 6.151 5.056 467.81 151.35)" x="0" y="0.19" fill="#d2d2d2">C3</text><text transform="matrix(18.806 0.039 7.469 5.061 505.40 151.42)" x="0" y="0.19" fill="#d2d2d2">C5</text><text transform="matrix(18.828 0.039 8.789 5.067 543.03 151.50)" x="0" y="0.19" fill="#d2d2d2">C7</text><text transform="matrix(18.850 0.039 10.113 5.073 580.71 151.58)" x="0" y="0.19" fill="#d2d2d2">C1</text><text transform="matrix(17.898 0.036 -9.402 4.657 11.29 145.55)" x="0" y="0.19" fill="#d2d2d2">B2</text><text transform="matrix(17.918 0.036 -8.206 4.662 47.11 145.62)" x="0" y="0.19" fill="#d2d2d2">B4</text><text transform="matrix(17.938 0.036 -7.007 4.667 82.96 145.70)" x="0" y="0.19" fill="#d2d2d2">B6</text><text transform="matrix(17.958 0.036 -5.806 4.672 118.86 145.77)" x="0" y="0.19" fill="#d2d2d2">B8</text><text transform="matrix(17.978 0.036 -4.602 4.677 154.79 145.84)" x="0" y="0.19" fill="#d2d2d2">B2</text><text transform="matrix(17.997 0.036 -3.395 4.682 190.77 145.91)" x="0" y="0.19" fill="#d2d2d2">B4</text><text transform="matrix(18.018 0.036 -2.185 4.687 226.78 145.99)" x="0" y="0.19" fill="#d2d2d2">B6</text><text transform="matrix(18.038 0.036 -0.973 4.692 262.84 146.06)" x="0" y="0.19" fill="#d2d2d2">B8</text><text transform="matrix(18.058 0.036 0.242 4.697 298.94 146.13)" x="0" y="0.19" fill="#d2d2d2">B2</text><text transform="matrix(18.078 0.037 1.460 4.702 335.07 146.20)" x="0" y="0.19" fill="#d2d2d2">B4</text><text transform="matrix(18.098 0.037 2.680 4.707 371.25 146.28)" x="0" y="0.19" fill="#d2d2d2">B6</text><text transform="matrix(18.118 0.037 3.903 4.712 407.46 146.35)" x="0" y="0.19" fill="#d2d2d2">B8</text><text transform="matrix(18.138 0.037 5.129 4.717 443.72 146.42)" x="0" y="0.19" fill="#d2d2d2">B2</text><text transform="matrix(18.159 0.037 6.357 4.723 480.02 146.50)" x="0" y="0.19" fill="#d2d2d2">B4</text><text transform="matrix(18.179 0.037 7.589 4.728 516.35 146.57)" x="0" y="0.19" fill="#d2d2d2">B6</text><text transform="matrix(18.199 0.037 8.823 4.733 552.73 146.64)" x="0" y="0.19" fill="#d2d2d2">B8</text><text transform="matrix(18.220 0.037 10.059 4.738 589.15 146.72)" x="0" y="0.19" fill="#d2d2d2">B2</text><text transform="matrix(17.310 0.034 -9.361 4.357 3.08 141.01)" x="0" y="0.19" fill="#d2d2d2">A1</text><text transform="matrix(17.329 0.034 -8.243 4.362 37.72 141.08)" x="0" y="0.19" fill="#d2d2d2">A3</text><text transform="matrix(17.348 0.034 -7.121 4.366 72.39 141.15)" x="0" y="0.19" fill="#d2d2d2">A5</text><text transform="matrix(17.366 0.034 -5.998 4.371 107.11 141.21)" x="0" y="0.19" fill="#d2d2d2">A7</text><text transform="matrix(17.385 0.034 -4.871 4.375 141.86 141.28)" x="0" y="0.19" fill="#d2d2d2">A1</text><text transform="matrix(17.404 0.034 -3.743 4.380 176.65 141.35)" x="0" y="0.19" fill="#d2d2d2">A3</text><text transform="matrix(17.422 0.034 -2.612 4.385 211.47 141.42)" x="0" y="0.19" fill="#d2d2d2">A5</text><text transform="matrix(17.441 0.034 -1.478 4.389 246.34 141.49)" x="0" y="0.19" fill="#d2d2d2">A7</text><text transform="matrix(17.460 0.034 -0.342 4.394 281.24 141.55)" x="0" y="0.19" fill="#d2d2d2">A1</text><text transform="matrix(17.479 0.034 0.796 4.398 316.18 141.62)" x="0" y="0.19" fill="#d2d2d2">A3</text><text transform="matrix(17.498 0.034 1.937 4.403 351.15 141.69)" x="0" y="0.19" fill="#d2d2d2">A5</text><text transform="matrix(17.516 0.034 3.080 4.408 386.17 141.76)" x="0" y="0.19" fill="#d2d2d2">A7</text><text transform="matrix(17.535 0.034 4.226 4.412 421.22 141.83)" x="0" y="0.19" fill="#d2d2d2">A1</text><text transform="matrix(17.554 0.034 5.374 4.417 456.31 141.89)" x="0" y="0.19" fill="#d2d2d2">A3</text><text transform="matrix(17.573 0.034 6.524 4.421 491.43 141.96)" x="0" y="0.19" fill="#d2d2d2">A5</text><text transform="matrix(17.592 0.034 7.678 4.426 526.60 142.03)" x="0" y="0.19" fill="#d2d2d2">A7</text><text transform="matrix(17.611 0.034 8.833 4.431 561.80 142.10)" x="0" y="0.19" fill="#d2d2d2">A1</text><text transform="matrix(16.760 0.032 -9.307 4.086 -4.62 136.76)" x="0" y="0.19" fill="#d2d2d2">H8</text><text transform="matrix(16.778 0.032 -8.258 4.090 28.92 136.82)" x="0" y="0.19" fill="#d2d2d2">H2</text><text transform="matrix(16.795 0.032 -7.207 4.094 62.49 136.89)" x="0" y="0.19" fill="#d2d2d2">H4</text><text transform="matrix(16.813 0.032 -6.154 4.098 96.10 136.95)" x="0" y="0.19" fill="#d2d2d2">H6</text><text transform="matrix(16.830 0.032 -5.098 4.102 129.74 137.01)" x="0" y="0.19" fill="#d2d2d2">H8</text><text transform="matrix(16.848 0.032 -4.040 4.106 163.42 137.08)" x="0" y="0.19" fill="#d2d2d2">H2</text><text transform="matrix(16.865 0.032 -2.981 4.111 197.13 137.14)" x="0" y="0.19" fill="#d2d2d2">H4</text><text transform="matrix(16.883 0.032 -1.919 4.115 230.88 137.20)" x="0" y="0.19" fill="#d2d2d2">H6</text><text transform="matrix(16.900 0.032 -0.854 4.119 264.66 137.27)" x="0" y="0.19" fill="#d2d2d2">H8</text><text transform="matrix(16.918 0.032 0.212 4.123 298.48 137.33)" x="0" y="0.19" fill="#d2d2d2">H2</text><text transform="matrix(16.936 0.032 1.281 4.127 332.34 137.39)" x="0" y="0.19" fill="#d2d2d2">H4</text><text transform="matrix(16.953 0.032 2.352 4.131 366.23 137.46)" x="0" y="0.19" fill="#d2d2d2">H6</text><text transform="matrix(16.971 0.032 3.425 4.136 400.15 137.52)" x="0" y="0.19" fill="#d2d2d2">H8</text><text transform="matrix(16.989 0.032 4.501 4.140 434.11 137.59)" x="0" y="0.19" fill="#d2d2d2">H2</text><text transform="matrix(17.007 0.032 5.578 4.144 468.11 137.65)" x="0" y="0.19" fill="#d2d2d2">H4</text><text transform="matrix(17.025 0.032 6.658 4.148 502.14 137.71)" x="0" y="0.19" fill="#d2d2d2">H6</text><text transform="matrix(17.042 0.032 7.741 4.152 536.20 137.78)" x="0" y="0.19" fill="#d2d2d2">H8</text><text transform="matrix(17.060 0.032 8.825 4.157 570.31 137.84)" x="0" y="0.19" fill="#d2d2d2">H2</text><text transform="matrix(16.244 0.030 -9.241 3.839 -11.85 132.77)" x="0" y="0.19" fill="#d2d2d2">G7</text><text transform="matrix(16.261 0.030 -8.256 3.843 20.66 132.83)" x="0" y="0.19" fill="#d2d2d2">G1</text><text transform="matrix(16.277 0.030 -7.269 3.846 53.20 132.89)" x="0" y="0.19" fill="#d2d2d2">G3</text><text transform="matrix(16.293 0.030 -6.279 3.850 85.77 132.95)" x="0" y="0.19" fill="#d2d2d2">G5</text><text transform="matrix(16.310 0.030 -5.288 3.854 118.37 133.01)" x="0" y="0.19" fill="#d2d2d2">G7</text><text transform="matrix(16.326 0.030 -4.295 3.858 151.01 133.06)" x="0" y="0.19" fill="#d2d2d2">G1</text><text transform="matrix(16.343 0.030 -3.300 3.861 183.67 133.12)" x="0" y="0.19" fill="#d2d2d2">G3</text><text transform="matrix(16.359 0.030 -2.302 3.865 216.38 133.18)" x="0" y="0.19" fill="#d2d2d2">G5</text><text transform="matrix(16.376 0.030 -1.303 3.869 249.11 133.24)" x="0" y="0.19" fill="#d2d2d2">G7</text><text transform="matrix(16.392 0.030 -0.302 3.873 281.88 133.30)" x="0" y="0.19" fill="#d2d2d2">G1</text><text transform="matrix(16.409 0.030 0.701 3.877 314.68 133.36)" x="0" y="0.19" fill="#d2d2d2">G3</text><text transform="matrix(16.426 0.030 1.707 3.880 347.52 133.42)" x="0" y="0.19" fill="#d2d2d2">G5</text><text transform="matrix(16.442 0.030 2.714 3.884 380.38 133.48)" x="0" y="0.19" fill="#d2d2d2">G7</text><text transform="matrix(16.459 0.030 3.724 3.888 413.28 133.54)" x="0" y="0.19" fill="#d2d2d2">G1</text><text transform="matrix(16.476 0.030 4.735 3.892 446.22 133.60)" x="0" y="0.19" fill="#d2d2d2">G3</text><text transform="matrix(16.492 0.030 5.749 3.896 479.19 133.66)" x="0" y="0.19" fill="#d2d2d2">G5</text><text transform="matrix(16.509 0.030 6.764 3.899 512.19 133.72)" x="0" y="0.19" fill="#d2d2d2">G7</text><text transform="matrix(16.526 0.030 7.782 3.903 545.22 133.78)" x="0" y="0.19" fill="#d2d2d2">G1</text><text transform="matrix(16.543 0.030 8.801 3.907 578.29 133.84)" x="0" y="0.19" fill="#d2d2d2">G3</text><text transform="matrix(15.774 0.028 -8.239 3.617 12.89 129.07)" x="0" y="0.19" fill="#d2d2d2">F8</text><text transform="matrix(15.790 0.028 -7.310 3.621 44.46 129.13)" x="0" y="0.19" fill="#d2d2d2">F2</text><text transform="matrix(15.805 0.028 -6.379 3.624 76.05 129.18)" x="0" y="0.19" fill="#d2d2d2">F4</text><text transform="matrix(15.821 0.028 -5.447 3.627 107.68 129.24)" x="0" y="0.19" fill="#d2d2d2">F6</text><text transform="matrix(15.836 0.028 -4.512 3.631 139.33 129.29)" x="0" y="0.19" fill="#d2d2d2">F8</text><text transform="matrix(15.852 0.028 -3.576 3.634 171.02 129.35)" x="0" y="0.19" fill="#d2d2d2">F2</text><text transform="matrix(15.867 0.028 -2.638 3.638 202.74 129.41)" x="0" y="0.19" fill="#d2d2d2">F4</text><text transform="matrix(15.883 0.028 -1.698 3.641 234.49 129.46)" x="0" y="0.19" fill="#d2d2d2">F6</text><text transform="matrix(15.898 0.028 -0.756 3.645 266.27 129.52)" x="0" y="0.19" fill="#d2d2d2">F8</text><text transform="matrix(15.914 0.028 0.188 3.648 298.08 129.57)" x="0" y="0.19" fill="#d2d2d2">F2</text><text transform="matrix(15.930 0.028 1.133 3.652 329.93 129.63)" x="0" y="0.19" fill="#d2d2d2">F4</text><text transform="matrix(15.945 0.028 2.081 3.655 361.80 129.69)" x="0" y="0.19" fill="#d2d2d2">F6</text><text transform="matrix(15.961 0.028 3.030 3.659 393.71 129.74)" x="0" y="0.19" fill="#d2d2d2">F8</text><text transform="matrix(15.977 0.028 3.981 3.662 425.64 129.80)" x="0" y="0.19" fill="#d2d2d2">F2</text><text transform="matrix(15.992 0.028 4.934 3.665 457.61 129.85)" x="0" y="0.19" fill="#d2d2d2">F4</text><text transform="matrix(16.008 0.028 5.889 3.669 489.61 129.91)" x="0" y="0.19" fill="#d2d2d2">F6</text><text transform="matrix(16.024 0.028 6.846 3.672 521.64 129.97)" x="0" y="0.19" fill="#d2d2d2">F8</text><text transform="matrix(16.040 0.028 7.805 3.676 553.71 130.02)" x="0" y="0.19" fill="#d2d2d2">F2</text><text transform="matrix(16.055 0.028 8.765 3.679 585.80 130.08)" x="0" y="0.19" fill="#d2d2d2">F4</text></g>
<g font-family="Liberation Sans" font-weight="bold" font-size="0.52" text-anchor="middle" transform="" style="font-stretch:condensed"><text transform="matrix(15.316 0.026 -8.211 3.411 5.57 125.53)" x="0" y="0.19" fill="#d3d3d3">E7</text><text transform="matrix(15.331 0.026 -7.335 3.414 36.22 125.58)" x="0" y="0.19" fill="#d3d3d3">E1</text><text transform="matrix(15.345 0.026 -6.458 3.417 66.90 125.64)" x="0" y="0.19" fill="#d3d3d3">E3</text><text transform="matrix(15.360 0.026 -5.578 3.420 97.60 125.69)" x="0" y="0.19" fill="#d3d3d3">E5</text><text transform="matrix(15.375 0.026 -4.698 3.424 128.34 125.74)" x="0" y="0.19" fill="#d3d3d3">E7</text><text transform="matrix(15.389 0.026 -3.815 3.427 159.10 125.79)" x="0" y="0.19" fill="#d3d3d3">E1</text><text transform="matrix(15.404 0.026 -2.931 3.430 189.89 125.85)" x="0" y="0.19" fill="#d3d3d3">E3</text><text transform="matrix(15.418 0.026 -2.045 3.433 220.72 125.90)" x="0" y="0.19" fill="#d3d3d3">E5</text><text transform="matrix(15.433 0.026 -1.157 3.436 251.57 125.95)" x="0" y="0.19" fill="#d3d3d3">E7</text><text transform="matrix(15.448 0.026 -0.268 3.439 282.45 126.00)" x="0" y="0.19" fill="#d3d3d3">E1</text><text transform="matrix(15.463 0.026 0.623 3.442 313.36 126.06)" x="0" y="0.19" fill="#d3d3d3">E3</text><text transform="matrix(15.477 0.026 1.516 3.446 344.30 126.11)" x="0" y="0.19" fill="#d3d3d3">E5</text><text transform="matrix(15.492 0.026 2.410 3.449 375.27 126.16)" x="0" y="0.19" fill="#d3d3d3">E7</text><text transform="matrix(15.507 0.027 3.306 3.452 406.27 126.22)" x="0" y="0.19" fill="#d3d3d3">E1</text><text transform="matrix(15.522 0.027 4.204 3.455 437.30 126.27)" x="0" y="0.19" fill="#d3d3d3">E3</text><text transform="matrix(15.537 0.027 5.103 3.458 468.35 126.32)" x="0" y="0.19" fill="#d3d3d3">E5</text><text transform="matrix(15.551 0.027 6.005 3.462 499.44 126.38)" x="0" y="0.19" fill="#d3d3d3">E7</text><text transform="matrix(15.566 0.027 6.907 3.465 530.56 126.43)" x="0" y="0.19" fill="#d3d3d3">E1</text><text transform="matrix(15.581 0.027 7.812 3.468 561.71 126.48)" x="0" y="0.19" fill="#d3d3d3">E3</text><text transform="matrix(14.884 0.025 -8.173 3.222 -1.33 122.19)" x="0" y="0.19" fill="#d3d3d3">D6</text><text transform="matrix(14.898 0.025 -7.346 3.225 28.45 122.24)" x="0" y="0.19" fill="#d3d3d3">D8</text><text transform="matrix(14.911 0.025 -6.517 3.228 58.26 122.29)" x="0" y="0.19" fill="#d3d3d3">D2</text><text transform="matrix(14.925 0.025 -5.687 3.231 88.10 122.34)" x="0" y="0.19" fill="#d3d3d3">D4</text><text transform="matrix(14.939 0.025 -4.855 3.233 117.96 122.39)" x="0" y="0.19" fill="#d3d3d3">D6</text><text transform="matrix(14.953 0.025 -4.022 3.236 147.85 122.44)" x="0" y="0.19" fill="#d3d3d3">D8</text><text transform="matrix(14.967 0.025 -3.187 3.239 177.77 122.49)" x="0" y="0.19" fill="#d3d3d3">D2</text><text transform="matrix(14.981 0.025 -2.351 3.242 207.72 122.54)" x="0" y="0.19" fill="#d3d3d3">D4</text><text transform="matrix(14.994 0.025 -1.513 3.245 237.69 122.59)" x="0" y="0.19" fill="#d3d3d3">D6</text><text transform="matrix(15.008 0.025 -0.674 3.248 267.70 122.64)" x="0" y="0.19" fill="#d3d3d3">D8</text><text transform="matrix(15.022 0.025 0.167 3.251 297.73 122.69)" x="0" y="0.19" fill="#d3d3d3">D2</text><text transform="matrix(15.036 0.025 1.010 3.254 327.79 122.74)" x="0" y="0.19" fill="#d3d3d3">D4</text><text transform="matrix(15.050 0.025 1.854 3.257 357.87 122.79)" x="0" y="0.19" fill="#d3d3d3">D6</text><text transform="matrix(15.064 0.025 2.700 3.260 387.99 122.84)" x="0" y="0.19" fill="#d3d3d3">D8</text><text transform="matrix(15.078 0.025 3.547 3.262 418.13 122.89)" x="0" y="0.19" fill="#d3d3d3">D2</text><text transform="matrix(15.092 0.025 4.396 3.265 448.30 122.94)" x="0" y="0.19" fill="#d3d3d3">D4</text><text transform="matrix(15.106 0.025 5.246 3.268 478.50 122.99)" x="0" y="0.19" fill="#d3d3d3">D6</text><text transform="matrix(15.120 0.025 6.098 3.271 508.72 123.04)" x="0" y="0.19" fill="#d3d3d3">D8</text><text transform="matrix(15.134 0.025 6.952 3.274 538.98 123.09)" x="0" y="0.19" fill="#d3d3d3">D2</text><text transform="matrix(15.148 0.025 7.807 3.277 569.26 123.14)" x="0" y="0.19" fill="#d3d3d3">D4</text><text transform="matrix(14.476 0.023 -8.126 3.048 -7.86 119.03)" x="0" y="0.19" fill="#d3d3d3">C5</text><text transform="matrix(14.489 0.023 -7.344 3.051 21.11 119.08)" x="0" y="0.19" fill="#d3d3d3">C7</text><text transform="matrix(14.502 0.023 -6.560 3.053 50.10 119.13)" x="0" y="0.19" fill="#d3d3d3">C1</text><text transform="matrix(14.515 0.023 -5.775 3.056 79.11 119.17)" x="0" y="0.19" fill="#d3d3d3">C3</text><text transform="matrix(14.528 0.023 -4.989 3.059 108.15 119.22)" x="0" y="0.19" fill="#d3d3d3">C5</text><text transform="matrix(14.541 0.023 -4.201 3.061 137.22 119.27)" x="0" y="0.19" fill="#d3d3d3">C7</text><text transform="matrix(14.554 0.023 -3.411 3.064 166.32 119.31)" x="0" y="0.19" fill="#d3d3d3">C1</text><text transform="matrix(14.567 0.023 -2.621 3.067 195.44 119.36)" x="0" y="0.19" fill="#d3d3d3">C3</text><text transform="matrix(14.580 0.023 -1.828 3.069 224.58 119.41)" x="0" y="0.19" fill="#d3d3d3">C5</text><text transform="matrix(14.593 0.023 -1.035 3.072 253.76 119.45)" x="0" y="0.19" fill="#d3d3d3">C7</text><text transform="matrix(14.606 0.024 -0.240 3.075 282.96 119.50)" x="0" y="0.19" fill="#d3d3d3">C1</text><text transform="matrix(14.619 0.024 0.557 3.077 312.18 119.55)" x="0" y="0.19" fill="#d3d3d3">C3</text><text transform="matrix(14.633 0.024 1.355 3.080 341.43 119.59)" x="0" y="0.19" fill="#d3d3d3">C5</text><text transform="matrix(14.646 0.024 2.154 3.083 370.71 119.64)" x="0" y="0.19" fill="#d3d3d3">C7</text><text transform="matrix(14.659 0.024 2.955 3.085 400.02 119.69)" x="0" y="0.19" fill="#d3d3d3">C1</text><text transform="matrix(14.672 0.024 3.757 3.088 429.35 119.74)" x="0" y="0.19" fill="#d3d3d3">C3</text><text transform="matrix(14.685 0.024 4.561 3.091 458.70 119.78)" x="0" y="0.19" fill="#d3d3d3">C5</text><text transform="matrix(14.699 0.024 5.366 3.093 488.09 119.83)" x="0" y="0.19" fill="#d3d3d3">C7</text><text transform="matrix(14.712 0.024 6.173 3.096 517.50 119.88)" x="0" y="0.19" fill="#d3d3d3">C1</text><text transform="matrix(14.725 0.024 6.981 3.099 546.94 119.93)" x="0" y="0.19" fill="#d3d3d3">C3</text><text transform="matrix(14.739 0.024 7.790 3.102 576.40 119.97)" x="0" y="0.19" fill="#d3d3d3">C5</text><text transform="matrix(14.101 0.022 -7.332 2.891 14.15 116.09)" x="0" y="0.19" fill="#d3d3d3">B6</text><text transform="matrix(14.113 0.022 -6.590 2.893 42.37 116.13)" x="0" y="0.19" fill="#d3d3d3">B8</text><text transform="matrix(14.126 0.022 -5.846 2.895 70.60 116.17)" x="0" y="0.19" fill="#d3d3d3">B2</text><text transform="matrix(14.138 0.022 -5.101 2.898 98.87 116.22)" x="0" y="0.19" fill="#d3d3d3">B4</text><text transform="matrix(14.151 0.022 -4.355 2.900 127.16 116.26)" x="0" y="0.19" fill="#d3d3d3">B6</text><text transform="matrix(14.163 0.022 -3.607 2.903 155.47 116.31)" x="0" y="0.19" fill="#d3d3d3">B8</text><text transform="matrix(14.175 0.022 -2.858 2.905 183.81 116.35)" x="0" y="0.19" fill="#d3d3d3">B2</text><text transform="matrix(14.188 0.022 -2.108 2.908 212.17 116.40)" x="0" y="0.19" fill="#d3d3d3">B4</text><text transform="matrix(14.200 0.022 -1.357 2.910 240.56 116.44)" x="0" y="0.19" fill="#d3d3d3">B6</text><text transform="matrix(14.213 0.022 -0.604 2.913 268.97 116.48)" x="0" y="0.19" fill="#d3d3d3">B8</text><text transform="matrix(14.225 0.022 0.150 2.915 297.41 116.53)" x="0" y="0.19" fill="#d3d3d3">B2</text><text transform="matrix(14.238 0.022 0.906 2.917 325.87 116.57)" x="0" y="0.19" fill="#d3d3d3">B4</text><text transform="matrix(14.250 0.022 1.662 2.920 354.36 116.62)" x="0" y="0.19" fill="#d3d3d3">B6</text><text transform="matrix(14.263 0.022 2.420 2.922 382.87 116.66)" x="0" y="0.19" fill="#d3d3d3">B8</text><text transform="matrix(14.275 0.022 3.180 2.925 411.41 116.71)" x="0" y="0.19" fill="#d3d3d3">B2</text><text transform="matrix(14.288 0.022 3.941 2.927 439.97 116.75)" x="0" y="0.19" fill="#d3d3d3">B4</text><text transform="matrix(14.300 0.022 4.703 2.930 468.56 116.80)" x="0" y="0.19" fill="#d3d3d3">B6</text><text transform="matrix(14.313 0.022 5.466 2.932 497.18 116.84)" x="0" y="0.19" fill="#d3d3d3">B8</text><text transform="matrix(14.325 0.022 6.231 2.935 525.81 116.89)" x="0" y="0.19" fill="#d3d3d3">B2</text><text transform="matrix(14.338 0.022 6.997 2.937 554.48 116.93)" x="0" y="0.19" fill="#d3d3d3">B4</text><text transform="matrix(14.351 0.022 7.765 2.940 583.17 116.98)" x="0" y="0.19" fill="#d3d3d3">B6</text></g>
<g filter="url(#blur6)"><ellipse cx="60" cy="358" rx="50" ry="12" fill="#000" opacity=".22"/><ellipse cx="243" cy="346" rx="32" ry="27" fill="#000" opacity=".45"/><ellipse cx="277" cy="368" rx="34" ry="9" fill="#000" opacity=".35"/><ellipse cx="445" cy="343" rx="40" ry="36" fill="#000" opacity=".55"/><ellipse cx="495" cy="376" rx="42" ry="10" fill="#000" opacity=".4"/></g>
<clipPath id="sphclip"><ellipse cx="68.6" cy="316.7" rx="52.6" ry="47.0"/></clipPath>
<g clip-path="url(#sphclip)"><ellipse cx="68.6" cy="316.7" rx="52.6" ry="47.0" fill="#b0b0b0"/>
<path d="M56.7,274.0L56.7,274.0L56.2,271.7L57.2,271.5ZM56.7,274.0L56.7,274.0L55.2,271.9L56.2,271.7ZM56.7,274.0L56.7,274.0L54.2,272.2L55.2,271.9ZM56.7,274.0L56.7,274.0L50.7,273.5L51.5,273.2ZM56.7,274.0L56.7,274.0L49.9,273.9L50.7,273.5ZM56.7,274.0L56.7,274.0L49.2,274.3L49.9,273.9ZM56.7,274.0L56.7,274.0L47.5,275.8L47.8,275.5ZM56.7,274.0L56.7,274.0L47.3,276.2L47.5,275.8ZM56.7,274.0L56.7,274.0L47.2,276.6L47.3,276.2ZM47.6,277.5L47.9,277.7L39.9,282.9L39.2,282.4ZM39.2,282.4L39.9,282.9L32.9,289.2L31.9,288.5ZM39.9,282.9L40.7,283.3L34.1,289.9L32.9,289.2ZM65.9,271.8L65.5,271.6L74.4,270.9L75.2,271.3ZM65.5,271.6L65.0,271.4L73.4,270.5L74.4,270.9ZM75.9,271.8L75.2,271.3L84.3,272.4L85.3,273.1ZM56.7,274.0L56.7,274.0L62.1,271.1L62.9,271.1ZM56.7,274.0L56.7,274.0L61.2,271.1L62.1,271.1ZM56.7,274.0L56.7,274.0L60.2,271.1L61.2,271.1ZM31.8,296.0L33.9,296.6L31.2,302.7L28.7,302.1ZM28.7,302.1L31.2,302.7L29.2,309.1L26.5,308.4ZM85.9,273.9L85.3,273.1L91.8,275.1L92.6,276.1ZM93.1,277.2L92.6,276.1L98.9,279.1L99.4,280.3ZM99.4,280.3L98.9,279.1L104.5,282.8L105.0,284.2ZM34.9,322.3L39.1,322.4L39.8,328.6L35.5,328.4ZM109.4,291.7L109.8,290.0L113.8,294.8L113.3,296.6ZM112.3,298.5L113.3,296.6L116.5,301.9L115.5,303.8ZM57.5,339.9L62.7,339.2L64.6,344.6L59.4,345.3ZM114.2,313.7L116.3,311.6L117.7,317.6L115.6,319.6ZM110.0,323.7L113.0,321.7L113.6,327.5L110.7,329.5ZM74.9,342.7L80.1,341.5L81.6,347.8L76.7,348.9ZM80.1,341.5L85.2,340.1L86.4,346.5L81.6,347.8ZM99.3,335.2L103.4,333.4L103.5,340.2L99.6,341.9Z" fill="#949494" stroke="#949494" stroke-width="0.4"/>
<path d="M57.2,271.5L56.2,271.7L56.2,271.0L58.2,270.6ZM56.2,271.7L55.2,271.9L54.2,271.5L56.2,271.0ZM55.2,271.9L54.2,272.2L52.3,272.0L54.2,271.5ZM51.5,273.2L50.7,273.5L45.3,274.6L46.9,273.9ZM50.7,273.5L49.9,273.9L43.8,275.4L45.3,274.6ZM49.9,273.9L49.2,274.3L42.5,276.1L43.8,275.4ZM39.0,279.1L38.6,279.9L31.1,284.9L31.7,283.8ZM38.6,279.9L38.5,280.6L30.9,285.9L31.1,284.9ZM69.3,269.8L67.7,269.8L73.3,270.2L75.7,270.3ZM30.9,286.8L31.3,287.7L26.6,292.8L26.1,291.7ZM26.6,292.8L27.4,293.7L23.6,299.4L22.7,298.3ZM81.6,271.2L79.8,270.8L85.3,272.3L87.4,272.8ZM22.6,313.6L25.1,314.5L24.5,320.6L21.9,319.7ZM27.9,327.4L31.5,328.0L32.6,334.2L29.0,333.6ZM32.6,334.2L36.7,334.6L38.5,340.5L34.4,340.1ZM116.9,300.0L116.8,298.3L119.2,304.1L119.3,305.8ZM71.8,349.9L76.7,348.9L78.3,354.1L73.8,355.0ZM76.7,348.9L81.6,347.8L82.7,353.1L78.3,354.1ZM81.6,347.8L86.4,346.5L87.0,351.9L82.7,353.1ZM99.6,341.9L103.5,340.2L102.5,346.2L99.0,347.8ZM103.5,340.2L107.1,338.4L105.8,344.6L102.5,346.2Z" fill="#888888" stroke="#888888" stroke-width="0.4"/>
<path d="M56.7,274.0L56.7,274.0L53.3,272.5L54.2,272.2ZM56.7,274.0L56.7,274.0L52.3,272.8L53.3,272.5ZM56.7,274.0L56.7,274.0L51.5,273.2L52.3,272.8ZM56.7,274.0L56.7,274.0L48.7,274.7L49.2,274.3ZM47.2,276.6L47.2,276.9L38.5,281.2L38.5,280.6ZM47.2,276.9L47.3,277.2L38.8,281.8L38.5,281.2ZM65.0,271.4L64.3,271.3L72.2,270.2L73.4,270.5ZM64.3,271.3L63.7,271.2L70.8,270.0L72.2,270.2ZM56.7,274.0L56.7,274.0L58.3,271.3L59.3,271.2ZM56.7,274.0L56.7,274.0L57.2,271.5L58.3,271.3ZM32.9,289.2L34.1,289.9L30.0,295.4L28.5,294.6ZM30.0,295.4L31.8,296.0L28.7,302.1L26.6,301.3ZM85.3,273.1L84.3,272.4L90.7,274.2L91.8,275.1ZM29.2,309.1L32.3,309.6L31.3,315.7L28.0,315.2ZM105.1,285.7L105.0,284.2L109.7,288.4L109.8,290.0ZM45.7,334.7L50.7,334.5L52.4,340.3L47.5,340.6ZM94.8,337.0L99.3,335.2L99.6,341.9L95.4,343.5Z" fill="#d0d0d0" stroke="#d0d0d0" stroke-width="0.4"/>
<path d="M54.2,272.2L53.3,272.5L50.4,272.6L52.3,272.0ZM53.3,272.5L52.3,272.8L48.6,273.2L50.4,272.6ZM52.3,272.8L51.5,273.2L46.9,273.9L48.6,273.2ZM23.6,299.4L24.9,300.4L22.2,306.6L20.8,305.5ZM89.2,273.5L87.4,272.8L92.8,275.3L94.9,276.1ZM96.6,276.9L94.9,276.1L100.1,279.5L102.0,280.4ZM24.5,320.6L27.6,321.4L27.9,327.4L24.7,326.7ZM109.1,287.0L108.0,285.6L111.9,290.2L113.0,291.6ZM113.7,293.2L113.0,291.6L116.2,296.7L116.8,298.3ZM118.9,307.7L119.3,305.8L120.8,311.8L120.3,313.7ZM116.2,325.5L118.2,323.5L117.4,330.9L115.5,332.8Z" fill="#c0c0c0" stroke="#c0c0c0" stroke-width="0.4"/>
<path d="M45.3,274.6L43.8,275.4L38.6,278.3L40.7,277.2ZM33.6,281.6L32.5,282.7L28.1,286.7L29.4,285.4ZM22.2,297.1L22.7,298.3L19.8,304.2L19.2,302.8ZM19.0,311.3L20.6,312.5L19.7,318.5L18.1,317.3ZM19.7,318.5L21.9,319.7L22.0,325.7L19.7,324.5ZM25.7,332.8L29.0,333.6L30.8,339.5L27.6,338.7ZM30.8,339.5L34.4,340.1L36.9,345.5L33.4,344.9ZM119.2,304.1L118.6,302.4L120.0,308.4L120.7,310.1ZM120.8,311.8L120.7,310.1L121.1,316.2L121.2,317.9ZM40.9,345.9L45.1,346.0L48.7,352.1L44.7,351.9ZM53.0,352.0L57.5,351.8L60.8,356.7L56.7,356.9ZM73.8,355.0L78.3,354.1L79.5,358.2L75.7,358.9ZM78.3,354.1L82.7,353.1L83.3,357.3L79.5,358.2ZM99.0,347.8L102.5,346.2L100.5,351.3L97.4,352.7ZM102.5,346.2L105.8,344.6L103.3,349.9L100.5,351.3ZM105.8,344.6L108.7,342.9L105.8,348.4L103.3,349.9ZM119.7,321.6L120.7,319.7L119.8,327.3L118.9,329.1Z" fill="#7c7c7c" stroke="#7c7c7c" stroke-width="0.4"/>
<path d="M43.8,275.4L42.5,276.1L36.7,279.4L38.6,278.3ZM26.1,290.5L26.1,291.7L22.2,297.1L22.1,295.7ZM22.7,298.3L23.6,299.4L20.8,305.5L19.8,304.2ZM20.8,305.5L22.2,306.6L20.6,312.5L19.0,311.3ZM20.6,312.5L22.6,313.6L21.9,319.7L19.7,318.5ZM21.9,319.7L24.5,320.6L24.7,326.7L22.0,325.7ZM24.7,326.7L27.9,327.4L29.0,333.6L25.7,332.8ZM29.0,333.6L32.6,334.2L34.4,340.1L30.8,339.5ZM34.4,340.1L38.5,340.5L40.9,345.9L36.9,345.5ZM116.8,298.3L116.2,296.7L118.6,302.4L119.2,304.1ZM119.3,305.8L119.2,304.1L120.7,310.1L120.8,311.8ZM45.1,346.0L49.7,346.0L53.0,352.0L48.7,352.1ZM82.7,353.1L87.0,351.9L87.0,356.3L83.3,357.3ZM118.2,323.5L119.7,321.6L118.9,329.1L117.4,330.9Z" fill="#808080" stroke="#808080" stroke-width="0.4"/>
<path d="M56.7,274.0L56.7,274.0L48.2,275.1L48.7,274.7ZM56.7,274.0L56.7,274.0L47.8,275.5L48.2,275.1ZM56.7,274.0L56.7,274.0L47.2,276.9L47.2,276.6ZM56.7,274.0L56.7,274.0L47.3,277.2L47.2,276.9ZM47.3,277.2L47.6,277.5L39.2,282.4L38.8,281.8ZM56.7,274.0L56.7,274.0L64.3,271.3L65.0,271.4ZM56.7,274.0L56.7,274.0L63.7,271.2L64.3,271.3ZM56.7,274.0L56.7,274.0L62.9,271.1L63.7,271.2ZM56.7,274.0L56.7,274.0L59.3,271.2L60.2,271.1ZM34.1,289.9L35.6,290.4L31.8,296.0L30.0,295.4ZM31.3,315.7L35.0,316.1L34.9,322.3L31.1,321.9ZM39.8,328.6L44.4,328.5L45.7,334.7L41.0,334.8ZM106.5,325.7L110.0,323.7L110.7,329.5L107.2,331.5ZM113.9,305.7L115.5,303.8L117.8,309.6L116.3,311.6ZM85.2,340.1L90.1,338.6L91.0,345.1L86.4,346.5ZM90.1,338.6L94.8,337.0L95.4,343.5L91.0,345.1Z" fill="#d4d4d4" stroke="#d4d4d4" stroke-width="0.4"/>
<path d="M49.2,274.3L48.7,274.7L41.4,276.9L42.5,276.1ZM48.7,274.7L48.2,275.1L40.4,277.6L41.4,276.9ZM38.5,280.6L38.5,281.2L30.9,286.8L30.9,285.9ZM72.2,270.2L70.8,270.0L77.9,270.5L79.8,270.8ZM70.8,270.0L69.3,269.8L75.7,270.3L77.9,270.5ZM60.2,271.1L59.3,271.2L62.2,270.1L64.1,269.9ZM59.3,271.2L58.3,271.3L60.2,270.3L62.2,270.1ZM58.3,271.3L57.2,271.5L58.2,270.6L60.2,270.3ZM27.4,293.7L28.5,294.6L24.9,300.4L23.6,299.4ZM24.9,300.4L26.6,301.3L24.2,307.6L22.2,306.6ZM83.1,271.8L81.6,271.2L87.4,272.8L89.2,273.5ZM90.7,274.2L89.2,273.5L94.9,276.1L96.6,276.9ZM98.0,278.0L96.6,276.9L102.0,280.4L103.5,281.6ZM25.1,314.5L28.0,315.2L27.6,321.4L24.5,320.6ZM104.5,282.8L103.5,281.6L108.0,285.6L109.1,287.0ZM109.7,288.4L109.1,287.0L113.0,291.6L113.7,293.2ZM36.7,334.6L41.0,334.8L42.8,340.6L38.5,340.5ZM42.8,340.6L47.5,340.6L49.7,346.0L45.1,346.0ZM117.8,309.6L118.9,307.7L120.3,313.7L119.3,315.6ZM117.7,317.6L119.3,315.6L119.7,321.6L118.2,323.5ZM54.5,345.7L59.4,345.3L62.2,351.3L57.5,351.8ZM86.4,346.5L91.0,345.1L91.2,350.7L87.0,351.9ZM91.0,345.1L95.4,343.5L95.2,349.3L91.2,350.7ZM95.4,343.5L99.6,341.9L99.0,347.8L95.2,349.3ZM113.6,327.5L116.2,325.5L115.5,332.8L113.1,334.6Z" fill="#c4c4c4" stroke="#c4c4c4" stroke-width="0.4"/>
<path d="M48.2,275.1L47.8,275.5L39.6,278.4L40.4,277.6ZM38.5,281.2L38.8,281.8L31.3,287.7L30.9,286.8ZM73.4,270.5L72.2,270.2L79.8,270.8L81.6,271.2ZM27.6,321.4L31.1,321.9L31.5,328.0L27.9,327.4ZM113.8,294.8L113.7,293.2L116.8,298.3L116.9,300.0ZM47.5,340.6L52.4,340.3L54.5,345.7L49.7,346.0ZM116.5,301.9L116.9,300.0L119.3,305.8L118.9,307.7ZM59.4,345.3L64.6,344.6L67.0,350.7L62.2,351.3ZM110.7,329.5L113.6,327.5L113.1,334.6L110.3,336.5Z" fill="#c8c8c8" stroke="#c8c8c8" stroke-width="0.4"/>
<path d="M42.5,276.1L41.4,276.9L35.0,280.5L36.7,279.4ZM31.7,283.8L31.1,284.9L26.4,289.3L27.0,288.1ZM57.5,351.8L62.2,351.3L65.1,356.3L60.8,356.7ZM87.0,351.9L91.2,350.7L90.7,355.2L87.0,356.3ZM91.2,350.7L95.2,349.3L94.1,353.9L90.7,355.2ZM95.2,349.3L99.0,347.8L97.4,352.7L94.1,353.9ZM113.1,334.6L115.5,332.8L113.4,339.5L111.2,341.2Z" fill="#b4b4b4" stroke="#b4b4b4" stroke-width="0.4"/>
<path d="M41.4,276.9L40.4,277.6L33.6,281.6L35.0,280.5ZM40.4,277.6L39.6,278.4L32.5,282.7L33.6,281.6ZM31.1,284.9L30.9,285.9L26.1,290.5L26.4,289.3ZM113.0,291.6L111.9,290.2L115.0,295.2L116.2,296.7ZM120.3,313.7L120.8,311.8L121.2,317.9L120.7,319.7ZM62.2,351.3L67.0,350.7L69.4,355.8L65.1,356.3ZM110.3,336.5L113.1,334.6L111.2,341.2L108.7,342.9Z" fill="#b8b8b8" stroke="#b8b8b8" stroke-width="0.4"/>
<path d="M47.8,275.5L47.5,275.8L39.0,279.1L39.6,278.4ZM62.1,271.1L61.2,271.1L65.9,269.8L67.7,269.8ZM61.2,271.1L60.2,271.1L64.1,269.9L65.9,269.8ZM31.3,287.7L31.9,288.5L27.4,293.7L26.6,292.8ZM24.2,307.6L26.5,308.4L25.1,314.5L22.6,313.6ZM31.5,328.0L35.5,328.4L36.7,334.6L32.6,334.2ZM115.6,319.6L117.7,317.6L118.2,323.5L116.2,325.5Z" fill="#8c8c8c" stroke="#8c8c8c" stroke-width="0.4"/>
<path d="M47.5,275.8L47.3,276.2L38.6,279.9L39.0,279.1ZM47.3,276.2L47.2,276.6L38.5,280.6L38.6,279.9ZM75.2,271.3L74.4,270.9L83.1,271.8L84.3,272.4ZM74.4,270.9L73.4,270.5L81.6,271.2L83.1,271.8ZM62.9,271.1L62.1,271.1L67.7,269.8L69.3,269.8ZM92.6,276.1L91.8,275.1L98.0,278.0L98.9,279.1ZM98.9,279.1L98.0,278.0L103.5,281.6L104.5,282.8ZM113.3,296.6L113.8,294.8L116.9,300.0L116.5,301.9ZM52.4,340.3L57.5,339.9L59.4,345.3L54.5,345.7ZM113.0,321.7L115.6,319.6L116.2,325.5L113.6,327.5ZM69.7,343.8L74.9,342.7L76.7,348.9L71.8,349.9ZM103.4,333.4L107.2,331.5L107.1,338.4L103.5,340.2ZM107.2,331.5L110.7,329.5L110.3,336.5L107.1,338.4Z" fill="#909090" stroke="#909090" stroke-width="0.4"/>
<path d="M39.6,278.4L39.0,279.1L31.7,283.8L32.5,282.7ZM67.7,269.8L65.9,269.8L70.7,270.2L73.3,270.2ZM30.9,285.9L30.9,286.8L26.1,291.7L26.1,290.5ZM26.1,291.7L26.6,292.8L22.7,298.3L22.2,297.1ZM22.2,306.6L24.2,307.6L22.6,313.6L20.6,312.5ZM103.5,281.6L102.0,280.4L106.5,284.4L108.0,285.6ZM49.7,346.0L54.5,345.7L57.5,351.8L53.0,352.0ZM107.1,338.4L110.3,336.5L108.7,342.9L105.8,344.6Z" fill="#848484" stroke="#848484" stroke-width="0.4"/>
<path d="M56.7,274.0L56.7,274.0L47.6,277.5L47.3,277.2ZM56.7,274.0L56.7,274.0L49.5,278.3L48.9,278.1ZM56.7,274.0L56.7,274.0L66.5,272.4L66.6,272.7ZM56.7,274.0L56.7,274.0L66.2,272.1L66.5,272.4ZM66.5,272.4L66.2,272.1L75.9,271.8L76.3,272.3ZM76.3,272.3L75.9,271.8L85.3,273.1L85.9,273.9ZM32.3,309.6L35.7,309.9L35.0,316.1L31.3,315.7ZM44.4,328.5L49.3,328.3L50.7,334.5L45.7,334.7ZM68.1,338.3L73.4,337.2L74.9,342.7L69.7,343.8ZM102.6,327.7L106.5,325.7L107.2,331.5L103.4,333.4Z" fill="#d8d8d8" stroke="#d8d8d8" stroke-width="0.4"/>
<path d="M38.8,281.8L39.2,282.4L31.9,288.5L31.3,287.7ZM63.7,271.2L62.9,271.1L69.3,269.8L70.8,270.0ZM31.9,288.5L32.9,289.2L28.5,294.6L27.4,293.7ZM28.5,294.6L30.0,295.4L26.6,301.3L24.9,300.4ZM26.6,301.3L28.7,302.1L26.5,308.4L24.2,307.6ZM84.3,272.4L83.1,271.8L89.2,273.5L90.7,274.2ZM91.8,275.1L90.7,274.2L96.6,276.9L98.0,278.0ZM26.5,308.4L29.2,309.1L28.0,315.2L25.1,314.5ZM28.0,315.2L31.3,315.7L31.1,321.9L27.6,321.4ZM31.1,321.9L34.9,322.3L35.5,328.4L31.5,328.0ZM105.0,284.2L104.5,282.8L109.1,287.0L109.7,288.4ZM109.8,290.0L109.7,288.4L113.7,293.2L113.8,294.8ZM35.5,328.4L39.8,328.6L41.0,334.8L36.7,334.6ZM41.0,334.8L45.7,334.7L47.5,340.6L42.8,340.6ZM115.5,303.8L116.5,301.9L118.9,307.7L117.8,309.6ZM116.3,311.6L117.8,309.6L119.3,315.6L117.7,317.6ZM64.6,344.6L69.7,343.8L71.8,349.9L67.0,350.7Z" fill="#cccccc" stroke="#cccccc" stroke-width="0.4"/>
<path d="M56.7,274.0L56.7,274.0L47.9,277.7L47.6,277.5ZM56.7,274.0L56.7,274.0L48.3,278.0L47.9,277.7ZM56.7,274.0L56.7,274.0L48.9,278.1L48.3,278.0ZM47.9,277.7L48.3,278.0L40.7,283.3L39.9,282.9ZM48.3,278.0L48.9,278.1L41.7,283.7L40.7,283.3ZM40.7,283.3L41.7,283.7L35.6,290.4L34.1,289.9ZM56.7,274.0L56.7,274.0L66.6,273.0L66.5,273.4ZM56.7,274.0L56.7,274.0L65.9,271.8L66.2,272.1ZM56.7,274.0L56.7,274.0L65.5,271.6L65.9,271.8ZM56.7,274.0L56.7,274.0L65.0,271.4L65.5,271.6ZM66.2,272.1L65.9,271.8L75.2,271.3L75.9,271.8ZM35.6,290.4L37.3,290.8L33.9,296.6L31.8,296.0ZM33.9,296.6L36.3,296.9L33.9,303.1L31.2,302.7ZM31.2,302.7L33.9,303.1L32.3,309.6L29.2,309.1ZM86.3,274.8L85.9,273.9L92.6,276.1L93.1,277.2ZM93.1,278.3L93.1,277.2L99.4,280.3L99.4,281.7ZM99.4,281.7L99.4,280.3L105.0,284.2L105.1,285.7ZM35.0,316.1L39.0,316.2L39.1,322.4L34.9,322.3ZM39.1,322.4L43.6,322.4L44.4,328.5L39.8,328.6ZM104.7,287.2L105.1,285.7L109.8,290.0L109.4,291.7ZM108.5,293.5L109.4,291.7L113.3,296.6L112.3,298.5ZM110.8,300.4L112.3,298.5L115.5,303.8L113.9,305.7ZM50.7,334.5L55.8,334.0L57.5,339.9L52.4,340.3ZM55.8,334.0L61.0,333.3L62.7,339.2L57.5,339.9ZM62.7,339.2L68.1,338.3L69.7,343.8L64.6,344.6ZM111.9,307.8L113.9,305.7L116.3,311.6L114.2,313.7ZM108.5,317.8L111.6,315.7L113.0,321.7L110.0,323.7ZM111.6,315.7L114.2,313.7L115.6,319.6L113.0,321.7Z" fill="#989898" stroke="#989898" stroke-width="0.4"/>
<path d="M56.7,274.0L56.7,274.0L50.2,278.4L49.5,278.3ZM56.7,274.0L56.7,274.0L50.9,278.5L50.2,278.4ZM48.9,278.1L49.5,278.3L42.9,284.0L41.7,283.7ZM49.5,278.3L50.2,278.4L44.3,284.2L42.9,284.0ZM41.7,283.7L42.9,284.0L37.3,290.8L35.6,290.4ZM42.9,284.0L44.3,284.2L39.3,291.2L37.3,290.8ZM56.7,274.0L56.7,274.0L54.6,278.4L53.6,278.5ZM56.7,274.0L56.7,274.0L55.6,278.2L54.6,278.4ZM56.7,274.0L56.7,274.0L56.6,278.1L55.6,278.2ZM56.7,274.0L56.7,274.0L65.1,274.9L64.6,275.3ZM56.7,274.0L56.7,274.0L65.6,274.5L65.1,274.9ZM56.7,274.0L56.7,274.0L66.0,274.1L65.6,274.5ZM56.7,274.0L56.7,274.0L66.6,272.7L66.6,273.0ZM66.6,273.0L66.6,272.7L76.6,273.0L76.6,273.6ZM66.6,272.7L66.5,272.4L76.3,272.3L76.6,273.0ZM76.6,273.6L76.6,273.0L86.3,274.8L86.3,275.8ZM76.6,273.0L76.3,272.3L85.9,273.9L86.3,274.8ZM99.1,283.1L99.4,281.7L105.1,285.7L104.7,287.2ZM73.4,337.2L78.7,336.0L80.1,341.5L74.9,342.7ZM78.7,336.0L83.9,334.6L85.2,340.1L80.1,341.5ZM98.3,329.6L102.6,327.7L103.4,333.4L99.3,335.2Z" fill="#dcdcdc" stroke="#dcdcdc" stroke-width="0.4"/>
<path d="M50.2,278.4L50.9,278.5L45.8,284.3L44.3,284.2ZM44.3,284.2L45.8,284.3L41.5,291.4L39.3,291.2ZM56.7,274.0L56.7,274.0L60.5,277.1L59.6,277.4ZM56.7,274.0L56.7,274.0L61.5,276.7L60.5,277.1ZM56.7,274.0L56.7,274.0L62.3,276.4L61.5,276.7ZM37.0,303.4L40.3,303.5L39.3,310.0L35.7,309.9ZM86.1,276.8L86.3,275.8L93.1,278.3L92.8,279.5ZM92.8,279.5L93.1,278.3L99.4,281.7L99.1,283.1ZM98.3,284.5L99.1,283.1L104.7,287.2L103.9,288.9ZM108.9,302.3L110.8,300.4L113.9,305.7L111.9,307.8ZM66.4,332.4L71.7,331.4L73.4,337.2L68.1,338.3ZM101.1,321.8L105.0,319.8L106.5,325.7L102.6,327.7ZM105.0,319.8L108.5,317.8L110.0,323.7L106.5,325.7Z" fill="#e0e0e0" stroke="#e0e0e0" stroke-width="0.4"/>
<path d="M56.7,274.0L56.7,274.0L51.8,278.5L50.9,278.5ZM56.7,274.0L56.7,274.0L52.6,278.5L51.8,278.5ZM56.7,274.0L56.7,274.0L53.6,278.5L52.6,278.5ZM50.9,278.5L51.8,278.5L47.4,284.4L45.8,284.3ZM56.7,274.0L56.7,274.0L57.6,277.9L56.6,278.1ZM56.7,274.0L56.7,274.0L58.6,277.6L57.6,277.9ZM56.7,274.0L56.7,274.0L59.6,277.4L58.6,277.6ZM56.7,274.0L56.7,274.0L63.2,276.0L62.3,276.4ZM56.7,274.0L56.7,274.0L63.9,275.7L63.2,276.0ZM56.7,274.0L56.7,274.0L64.6,275.3L63.9,275.7ZM56.7,274.0L56.7,274.0L66.3,273.7L66.0,274.1ZM56.7,274.0L56.7,274.0L66.5,273.4L66.3,273.7ZM66.3,273.7L66.5,273.4L76.4,274.3L76.1,275.0ZM66.5,273.4L66.6,273.0L76.6,273.6L76.4,274.3ZM76.4,274.3L76.6,273.6L86.3,275.8L86.1,276.8ZM37.3,290.8L39.3,291.2L36.3,296.9L33.9,296.6ZM39.3,291.2L41.5,291.4L39.0,297.2L36.3,296.9ZM36.3,296.9L39.0,297.2L37.0,303.4L33.9,303.1ZM33.9,303.1L37.0,303.4L35.7,309.9L32.3,309.6ZM86.3,275.8L86.3,274.8L93.1,277.2L93.1,278.3ZM35.7,309.9L39.3,310.0L39.0,316.2L35.0,316.1ZM39.0,316.2L43.2,316.2L43.6,322.4L39.1,322.4ZM43.6,322.4L48.3,322.2L49.3,328.3L44.4,328.5ZM103.9,288.9L104.7,287.2L109.4,291.7L108.5,293.5ZM107.0,295.3L108.5,293.5L112.3,298.5L110.8,300.4ZM49.3,328.3L54.3,327.8L55.8,334.0L50.7,334.5ZM61.0,333.3L66.4,332.4L68.1,338.3L62.7,339.2ZM83.9,334.6L88.9,333.0L90.1,338.6L85.2,340.1ZM88.9,333.0L93.8,331.4L94.8,337.0L90.1,338.6ZM93.8,331.4L98.3,329.6L99.3,335.2L94.8,337.0ZM109.3,309.8L111.9,307.8L114.2,313.7L111.6,315.7Z" fill="#9c9c9c" stroke="#9c9c9c" stroke-width="0.4"/>
<path d="M51.8,278.5L52.6,278.5L49.2,284.4L47.4,284.4ZM52.6,278.5L53.6,278.5L51.0,284.3L49.2,284.4ZM45.8,284.3L47.4,284.4L43.9,291.5L41.5,291.4ZM66.0,274.1L66.3,273.7L76.1,275.0L75.5,275.8ZM75.5,275.8L76.1,275.0L85.5,277.8L84.7,278.9ZM76.1,275.0L76.4,274.3L86.1,276.8L85.5,277.8ZM23.3,292.9L22.5,294.3L19.5,299.8L20.4,298.2ZM17.2,306.9L17.3,308.5L16.3,314.3L16.2,312.6ZM16.2,312.6L16.3,314.3L16.2,320.1L16.1,318.4ZM16.3,314.3L16.9,315.8L16.8,321.7L16.2,320.1ZM39.3,310.0L43.3,310.0L43.2,316.2L39.0,316.2ZM43.2,316.2L47.7,315.9L48.3,322.2L43.6,322.4ZM102.6,290.6L103.9,288.9L108.5,293.5L107.0,295.3ZM18.0,323.2L19.7,324.5L20.7,330.7L19.0,329.3ZM19.0,329.3L20.7,330.7L22.6,336.6L20.8,335.2ZM20.7,330.7L23.0,331.9L24.8,337.7L22.6,336.6ZM20.8,335.2L22.6,336.6L25.4,342.1L23.7,340.8ZM22.6,336.6L24.8,337.7L27.6,343.2L25.4,342.1ZM24.8,337.7L27.6,338.7L30.2,344.2L27.6,343.2ZM54.3,327.8L59.5,327.1L61.0,333.3L55.8,334.0ZM59.5,327.1L64.8,326.3L66.4,332.4L61.0,333.3ZM82.3,328.7L87.4,327.1L88.9,333.0L83.9,334.6ZM87.4,327.1L92.2,325.5L93.8,331.4L88.9,333.0ZM92.2,325.5L96.8,323.7L98.3,329.6L93.8,331.4ZM106.3,311.8L109.3,309.8L111.6,315.7L108.5,317.8ZM22.5,339.3L23.7,340.8L28.5,347.1L27.4,345.7ZM30.2,344.2L33.4,344.9L37.6,351.0L34.7,350.3ZM34.7,350.3L37.6,351.0L42.9,356.0L40.2,355.4ZM37.6,351.0L41.0,351.6L45.9,356.5L42.9,356.0ZM41.0,351.6L44.7,351.9L49.2,356.8L45.9,356.5ZM40.2,355.4L42.9,356.0L48.9,359.8L46.6,359.2ZM42.9,356.0L45.9,356.5L51.5,360.2L48.9,359.8ZM45.9,356.5L49.2,356.8L54.4,360.5L51.5,360.2ZM44.6,358.5L46.6,359.2L52.5,361.4L50.8,360.8ZM54.4,360.5L57.5,360.6L61.7,362.6L59.1,362.5ZM57.5,360.6L60.9,360.6L64.6,362.6L61.7,362.6ZM60.9,360.6L64.4,360.4L67.5,362.4L64.6,362.6ZM59.1,362.5L61.7,362.6L66.1,363.6L64.0,363.5ZM61.7,362.6L64.6,362.6L68.3,363.6L66.1,363.6ZM64.6,362.6L67.5,362.4L70.7,363.4L68.3,363.6ZM64.0,363.5L66.1,363.6L70.5,363.5L69.0,363.5ZM66.1,363.6L68.3,363.6L72.1,363.5L70.5,363.5ZM68.3,363.6L70.7,363.4L73.8,363.4L72.1,363.5ZM77.0,361.2L80.3,360.6L80.8,362.0L78.2,362.5ZM80.3,360.6L83.5,359.8L83.3,361.4L80.8,362.0ZM83.5,359.8L86.6,358.9L85.8,360.7L83.3,361.4ZM78.2,362.5L80.8,362.0L81.0,362.4L79.2,362.7ZM80.8,362.0L83.3,361.4L82.8,361.9L81.0,362.4ZM83.3,361.4L85.8,360.7L84.6,361.5L82.8,361.9ZM103.3,349.9L105.8,348.4L102.4,352.3L100.3,353.6ZM95.4,355.9L98.0,354.8L94.8,357.4L92.8,358.3ZM98.0,354.8L100.3,353.6L96.7,356.4L94.8,357.4ZM100.3,353.6L102.4,352.3L98.4,355.5L96.7,356.4ZM92.8,358.3L94.8,357.4L91.1,359.1L89.6,359.7ZM94.8,357.4L96.7,356.4L92.4,358.4L91.1,359.1ZM96.7,356.4L98.4,355.5L93.6,357.7L92.4,358.4ZM111.3,344.0L112.5,342.6L108.1,347.4L107.1,348.6Z" fill="#a0a0a0" stroke="#a0a0a0" stroke-width="0.4"/>
<path d="M47.4,284.4L49.2,284.4L46.4,291.4L43.9,291.5ZM49.2,284.4L51.0,284.3L49.1,291.3L46.4,291.4ZM56.6,278.1L57.6,277.9L58.9,283.1L56.9,283.5ZM57.6,277.9L58.6,277.6L60.9,282.7L58.9,283.1ZM58.6,277.6L59.6,277.4L62.8,282.1L60.9,282.7ZM62.3,276.4L63.2,276.0L69.8,279.5L68.2,280.3ZM63.2,276.0L63.9,275.7L71.3,278.8L69.8,279.5ZM63.9,275.7L64.6,275.3L72.6,278.1L71.3,278.8ZM83.5,280.0L84.7,278.9L91.1,282.1L89.7,283.5ZM89.7,283.5L91.1,282.1L97.1,286.0L95.5,287.6ZM95.5,287.6L97.1,286.0L102.6,290.6L100.8,292.3ZM19.1,301.3L19.2,302.8L17.3,308.5L17.2,306.9ZM17.3,308.5L17.9,310.0L16.9,315.8L16.3,314.3ZM16.9,315.8L18.1,317.3L18.0,323.2L16.8,321.7ZM43.3,310.0L47.4,309.8L47.7,315.9L43.2,316.2ZM100.1,308.2L103.4,306.2L106.3,311.8L102.8,313.8ZM113.4,339.5L115.1,337.8L111.3,344.0L109.8,345.5ZM75.7,358.9L79.5,358.2L80.3,360.6L77.0,361.2ZM79.5,358.2L83.3,357.3L83.5,359.8L80.3,360.6ZM83.3,357.3L87.0,356.3L86.6,358.9L83.5,359.8ZM97.4,352.7L100.5,351.3L98.0,354.8L95.4,355.9ZM100.5,351.3L103.3,349.9L100.3,353.6L98.0,354.8Z" fill="#a4a4a4" stroke="#a4a4a4" stroke-width="0.4"/>
<path d="M53.6,278.5L54.6,278.4L52.9,284.1L51.0,284.3ZM65.1,274.9L65.6,274.5L74.7,276.5L73.7,277.3ZM65.6,274.5L66.0,274.1L75.5,275.8L74.7,276.5ZM41.5,291.4L43.9,291.5L41.8,297.3L39.0,297.2ZM39.0,297.2L41.8,297.3L40.3,303.5L37.0,303.4ZM85.5,277.8L86.1,276.8L92.8,279.5L92.1,280.8ZM92.1,280.8L92.8,279.5L99.1,283.1L98.3,284.5ZM48.3,322.2L53.2,321.7L54.3,327.8L49.3,328.3ZM105.1,297.1L107.0,295.3L110.8,300.4L108.9,302.3ZM106.4,304.3L108.9,302.3L111.9,307.8L109.3,309.8ZM71.7,331.4L77.1,330.1L78.7,336.0L73.4,337.2ZM77.1,330.1L82.3,328.7L83.9,334.6L78.7,336.0ZM96.8,323.7L101.1,321.8L102.6,327.7L98.3,329.6Z" fill="#e4e4e4" stroke="#e4e4e4" stroke-width="0.4"/>
<path d="M54.6,278.4L55.6,278.2L54.9,283.9L52.9,284.1ZM55.6,278.2L56.6,278.1L56.9,283.5L54.9,283.9ZM61.5,276.7L62.3,276.4L68.2,280.3L66.5,280.9ZM64.6,275.3L65.1,274.9L73.7,277.3L72.6,278.1ZM74.7,276.5L75.5,275.8L84.7,278.9L83.5,280.0ZM43.9,291.5L46.4,291.4L44.9,297.3L41.8,297.3ZM41.8,297.3L44.9,297.3L43.8,303.5L40.3,303.5ZM40.3,303.5L43.8,303.5L43.3,310.0L39.3,310.0ZM84.7,278.9L85.5,277.8L92.1,280.8L91.1,282.1ZM91.1,282.1L92.1,280.8L98.3,284.5L97.1,286.0ZM97.1,286.0L98.3,284.5L103.9,288.9L102.6,290.6ZM47.7,315.9L52.3,315.5L53.2,321.7L48.3,322.2ZM53.2,321.7L58.2,321.1L59.5,327.1L54.3,327.8ZM100.8,292.3L102.6,290.6L107.0,295.3L105.1,297.1ZM102.8,299.0L105.1,297.1L108.9,302.3L106.4,304.3ZM103.4,306.2L106.4,304.3L109.3,309.8L106.3,311.8ZM64.8,326.3L70.0,325.2L71.7,331.4L66.4,332.4ZM98.9,315.7L102.8,313.8L105.0,319.8L101.1,321.8ZM102.8,313.8L106.3,311.8L108.5,317.8L105.0,319.8Z" fill="#e8e8e8" stroke="#e8e8e8" stroke-width="0.4"/>
<path d="M51.0,284.3L52.9,284.1L51.9,291.0L49.1,291.3ZM52.9,284.1L54.9,283.9L54.7,290.7L51.9,291.0ZM59.6,277.4L60.5,277.1L64.7,281.6L62.8,282.1ZM60.5,277.1L61.5,276.7L66.5,280.9L64.7,281.6ZM72.6,278.1L73.7,277.3L82.1,281.1L80.5,282.2ZM73.7,277.3L74.7,276.5L83.5,280.0L82.1,281.1ZM46.4,291.4L49.1,291.3L48.1,297.1L44.9,297.3ZM44.9,297.3L48.1,297.1L47.6,303.3L43.8,303.5ZM43.8,303.5L47.6,303.3L47.4,309.8L43.3,310.0ZM47.4,309.8L51.7,309.4L52.3,315.5L47.7,315.9ZM52.3,315.5L57.1,314.9L58.2,321.1L53.2,321.7ZM58.2,321.1L63.3,320.2L64.8,326.3L59.5,327.1ZM98.6,294.0L100.8,292.3L105.1,297.1L102.8,299.0ZM100.0,300.8L102.8,299.0L106.4,304.3L103.4,306.2ZM70.0,325.2L75.3,324.0L77.1,330.1L71.7,331.4ZM75.3,324.0L80.4,322.6L82.3,328.7L77.1,330.1ZM94.7,317.6L98.9,315.7L101.1,321.8L96.8,323.7Z" fill="#ececec" stroke="#ececec" stroke-width="0.4"/>
<path d="M54.9,283.9L56.9,283.5L57.6,290.2L54.7,290.7ZM62.8,282.1L64.7,281.6L69.0,287.3L66.2,288.2ZM64.7,281.6L66.5,280.9L71.6,286.4L69.0,287.3ZM66.5,280.9L68.2,280.3L74.1,285.4L71.6,286.4ZM57.6,290.2L60.5,289.6L61.9,295.1L58.4,295.8ZM60.5,289.6L63.4,288.9L65.4,294.3L61.9,295.1ZM63.4,288.9L66.2,288.2L68.9,293.3L65.4,294.3ZM58.4,295.8L61.9,295.1L63.5,301.0L59.4,301.8ZM61.9,295.1L65.4,294.3L67.5,300.0L63.5,301.0ZM65.4,294.3L68.9,293.3L71.5,298.9L67.5,300.0ZM59.4,301.8L63.5,301.0L65.1,307.1L60.6,308.0ZM63.5,301.0L67.5,300.0L69.6,306.1L65.1,307.1ZM67.5,300.0L71.5,298.9L74.0,304.9L69.6,306.1ZM74.1,285.4L76.4,284.4L81.2,288.8L78.4,290.0ZM76.4,284.4L78.6,283.3L83.7,287.5L81.2,288.8ZM78.6,283.3L80.5,282.2L86.0,286.2L83.7,287.5ZM78.4,290.0L81.2,288.8L85.6,293.7L82.4,295.1ZM81.2,288.8L83.7,287.5L88.6,292.2L85.6,293.7ZM83.7,287.5L86.0,286.2L91.3,290.7L88.6,292.2ZM82.4,295.1L85.6,293.7L89.8,299.1L86.2,300.7ZM85.6,293.7L88.6,292.2L93.1,297.4L89.8,299.1ZM88.6,292.2L91.3,290.7L96.0,295.7L93.1,297.4ZM51.7,309.4L56.2,308.8L57.1,314.9L52.3,315.5ZM56.2,308.8L60.6,308.0L61.9,314.1L57.1,314.9ZM57.1,314.9L61.9,314.1L63.3,320.2L58.2,321.1ZM74.0,304.9L78.3,303.6L80.9,309.3L76.3,310.7ZM78.3,303.6L82.3,302.2L85.3,307.8L80.9,309.3ZM82.3,302.2L86.2,300.7L89.4,306.2L85.3,307.8ZM76.3,310.7L80.9,309.3L83.3,315.2L78.4,316.7ZM80.9,309.3L85.3,307.8L87.9,313.6L83.3,315.2ZM85.3,307.8L89.4,306.2L92.3,311.8L87.9,313.6ZM78.4,316.7L83.3,315.2L85.4,321.0L80.4,322.6ZM83.3,315.2L87.9,313.6L90.2,319.4L85.4,321.0ZM87.9,313.6L92.3,311.8L94.7,317.6L90.2,319.4ZM96.0,295.7L98.6,294.0L102.8,299.0L100.0,300.8Z" fill="#f0f0f0" stroke="#f0f0f0" stroke-width="0.4"/>
<path d="M56.9,283.5L58.9,283.1L60.5,289.6L57.6,290.2ZM58.9,283.1L60.9,282.7L63.4,288.9L60.5,289.6ZM60.9,282.7L62.8,282.1L66.2,288.2L63.4,288.9ZM68.2,280.3L69.8,279.5L76.4,284.4L74.1,285.4ZM69.8,279.5L71.3,278.8L78.6,283.3L76.4,284.4ZM71.3,278.8L72.6,278.1L80.5,282.2L78.6,283.3ZM28.1,286.7L27.0,288.1L23.3,292.9L24.4,291.4ZM22.5,294.3L22.1,295.7L19.1,301.3L19.5,299.8ZM49.1,291.3L51.9,291.0L51.5,296.8L48.1,297.1ZM51.9,291.0L54.7,290.7L54.9,296.3L51.5,296.8ZM54.7,290.7L57.6,290.2L58.4,295.8L54.9,296.3ZM48.1,297.1L51.5,296.8L51.4,302.9L47.6,303.3ZM51.5,296.8L54.9,296.3L55.4,302.4L51.4,302.9ZM54.9,296.3L58.4,295.8L59.4,301.8L55.4,302.4ZM47.6,303.3L51.4,302.9L51.7,309.4L47.4,309.8ZM51.4,302.9L55.4,302.4L56.2,308.8L51.7,309.4ZM55.4,302.4L59.4,301.8L60.6,308.0L56.2,308.8ZM66.2,288.2L69.0,287.3L72.2,292.3L68.9,293.3ZM69.0,287.3L71.6,286.4L75.4,291.2L72.2,292.3ZM71.6,286.4L74.1,285.4L78.4,290.0L75.4,291.2ZM68.9,293.3L72.2,292.3L75.3,297.8L71.5,298.9ZM72.2,292.3L75.4,291.2L78.9,296.5L75.3,297.8ZM75.4,291.2L78.4,290.0L82.4,295.1L78.9,296.5ZM71.5,298.9L75.3,297.8L78.3,303.6L74.0,304.9ZM75.3,297.8L78.9,296.5L82.3,302.2L78.3,303.6ZM78.9,296.5L82.4,295.1L86.2,300.7L82.3,302.2ZM80.5,282.2L82.1,281.1L88.0,284.8L86.0,286.2ZM82.1,281.1L83.5,280.0L89.7,283.5L88.0,284.8ZM86.0,286.2L88.0,284.8L93.6,289.1L91.3,290.7ZM88.0,284.8L89.7,283.5L95.5,287.6L93.6,289.1ZM91.3,290.7L93.6,289.1L98.6,294.0L96.0,295.7ZM93.6,289.1L95.5,287.6L100.8,292.3L98.6,294.0ZM17.9,310.0L19.0,311.3L18.1,317.3L16.9,315.8ZM60.6,308.0L65.1,307.1L66.8,313.1L61.9,314.1ZM65.1,307.1L69.6,306.1L71.6,312.0L66.8,313.1ZM69.6,306.1L74.0,304.9L76.3,310.7L71.6,312.0ZM61.9,314.1L66.8,313.1L68.4,319.2L63.3,320.2ZM66.8,313.1L71.6,312.0L73.5,318.0L68.4,319.2ZM71.6,312.0L76.3,310.7L78.4,316.7L73.5,318.0ZM63.3,320.2L68.4,319.2L70.0,325.2L64.8,326.3ZM68.4,319.2L73.5,318.0L75.3,324.0L70.0,325.2ZM73.5,318.0L78.4,316.7L80.4,322.6L75.3,324.0ZM86.2,300.7L89.8,299.1L93.3,304.4L89.4,306.2ZM89.8,299.1L93.1,297.4L96.8,302.7L93.3,304.4ZM93.1,297.4L96.0,295.7L100.0,300.8L96.8,302.7ZM89.4,306.2L93.3,304.4L96.4,310.0L92.3,311.8ZM93.3,304.4L96.8,302.7L100.1,308.2L96.4,310.0ZM96.8,302.7L100.0,300.8L103.4,306.2L100.1,308.2ZM92.3,311.8L96.4,310.0L98.9,315.7L94.7,317.6ZM96.4,310.0L100.1,308.2L102.8,313.8L98.9,315.7ZM19.7,324.5L22.0,325.7L23.0,331.9L20.7,330.7ZM23.0,331.9L25.7,332.8L27.6,338.7L24.8,337.7ZM80.4,322.6L85.4,321.0L87.4,327.1L82.3,328.7ZM85.4,321.0L90.2,319.4L92.2,325.5L87.4,327.1ZM90.2,319.4L94.7,317.6L96.8,323.7L92.2,325.5ZM33.4,344.9L36.9,345.5L41.0,351.6L37.6,351.0ZM60.8,356.7L65.1,356.3L68.1,360.1L64.4,360.4ZM111.2,341.2L113.4,339.5L109.8,345.5L108.0,347.0Z" fill="#a8a8a8" stroke="#a8a8a8" stroke-width="0.4"/>
<path d="M35.0,280.5L33.6,281.6L29.4,285.4L31.1,284.1ZM22.1,295.7L22.2,297.1L19.2,302.8L19.1,301.3ZM18.1,317.3L19.7,318.5L19.7,324.5L18.0,323.2ZM27.6,338.7L30.8,339.5L33.4,344.9L30.2,344.2ZM48.7,352.1L53.0,352.0L56.7,356.9L52.9,357.0ZM120.7,319.7L121.2,317.9L120.2,325.6L119.8,327.3ZM117.4,330.9L118.9,329.1L116.4,336.1L115.1,337.8Z" fill="#787878" stroke="#787878" stroke-width="0.4"/>
<path d="M32.5,282.7L31.7,283.8L27.0,288.1L28.1,286.7ZM26.4,289.3L26.1,290.5L22.1,295.7L22.5,294.3ZM19.8,304.2L20.8,305.5L19.0,311.3L17.9,310.0ZM22.0,325.7L24.7,326.7L25.7,332.8L23.0,331.9ZM69.4,355.8L73.8,355.0L75.7,358.9L71.8,359.6ZM115.5,332.8L117.4,330.9L115.1,337.8L113.4,339.5Z" fill="#b0b0b0" stroke="#b0b0b0" stroke-width="0.4"/>
<path d="M27.0,288.1L26.4,289.3L22.5,294.3L23.3,292.9ZM19.2,302.8L19.8,304.2L17.9,310.0L17.3,308.5ZM36.9,345.5L40.9,345.9L44.7,351.9L41.0,351.6ZM65.1,356.3L69.4,355.8L71.8,359.6L68.1,360.1ZM108.7,342.9L111.2,341.2L108.0,347.0L105.8,348.4Z" fill="#acacac" stroke="#acacac" stroke-width="0.4"/>
<path d="M19.5,299.8L19.1,301.3L17.2,306.9L17.6,305.2ZM17.6,305.2L17.2,306.9L16.2,312.6L16.6,310.8ZM16.1,318.4L16.2,320.1L17.1,326.2L17.0,324.5ZM16.2,320.1L16.8,321.7L17.7,327.9L17.1,326.2ZM16.8,321.7L18.0,323.2L19.0,329.3L17.7,327.9ZM17.1,326.2L17.7,327.9L19.6,333.7L19.0,332.1ZM17.7,327.9L19.0,329.3L20.8,335.2L19.6,333.7ZM19.0,332.1L19.6,333.7L22.5,339.3L21.9,337.7ZM19.6,333.7L20.8,335.2L23.7,340.8L22.5,339.3ZM23.7,340.8L25.4,342.1L30.1,348.3L28.5,347.1ZM25.4,342.1L27.6,343.2L32.2,349.4L30.1,348.3ZM27.6,343.2L30.2,344.2L34.7,350.3L32.2,349.4ZM28.5,347.1L30.1,348.3L36.0,353.6L34.6,352.5ZM30.1,348.3L32.2,349.4L37.9,354.6L36.0,353.6ZM32.2,349.4L34.7,350.3L40.2,355.4L37.9,354.6ZM34.6,352.5L36.0,353.6L43.0,357.7L41.7,356.7ZM36.0,353.6L37.9,354.6L44.6,358.5L43.0,357.7ZM37.9,354.6L40.2,355.4L46.6,359.2L44.6,358.5ZM49.2,356.8L52.9,357.0L57.5,360.6L54.4,360.5ZM52.9,357.0L56.7,356.9L60.9,360.6L57.5,360.6ZM119.8,327.3L120.2,325.6L117.6,333.0L117.2,334.5ZM115.1,337.8L116.4,336.1L112.5,342.6L111.3,344.0ZM116.4,336.1L117.2,334.5L113.2,341.2L112.5,342.6ZM46.6,359.2L48.9,359.8L54.5,361.9L52.5,361.4ZM48.9,359.8L51.5,360.2L56.7,362.3L54.5,361.9ZM51.5,360.2L54.4,360.5L59.1,362.5L56.7,362.3ZM52.5,361.4L54.5,361.9L60.3,363.0L58.8,362.7ZM54.5,361.9L56.7,362.3L62.1,363.3L60.3,363.0ZM56.7,362.3L59.1,362.5L64.0,363.5L62.1,363.3ZM64.4,360.4L68.1,360.1L70.6,362.1L67.5,362.4ZM68.1,360.1L71.8,359.6L73.8,361.7L70.6,362.1ZM71.8,359.6L75.7,358.9L77.0,361.2L73.8,361.7ZM67.5,362.4L70.6,362.1L73.1,363.2L70.7,363.4ZM70.6,362.1L73.8,361.7L75.7,362.9L73.1,363.2ZM73.8,361.7L77.0,361.2L78.2,362.5L75.7,362.9ZM70.7,363.4L73.1,363.2L75.6,363.3L73.8,363.4ZM73.1,363.2L75.7,362.9L77.4,363.0L75.6,363.3ZM75.7,362.9L78.2,362.5L79.2,362.7L77.4,363.0ZM86.6,358.9L89.7,358.0L88.2,359.9L85.8,360.7ZM89.7,358.0L92.6,357.0L90.6,359.1L88.2,359.9ZM92.6,357.0L95.4,355.9L92.8,358.3L90.6,359.1ZM85.8,360.7L88.2,359.9L86.4,360.9L84.6,361.5ZM88.2,359.9L90.6,359.1L88.0,360.3L86.4,360.9ZM90.6,359.1L92.8,358.3L89.6,359.7L88.0,360.3ZM105.8,348.4L108.0,347.0L104.3,351.1L102.4,352.3ZM108.0,347.0L109.8,345.5L105.9,349.9L104.3,351.1ZM109.8,345.5L111.3,344.0L107.1,348.6L105.9,349.9ZM102.4,352.3L104.3,351.1L99.8,354.5L98.4,355.5ZM104.3,351.1L105.9,349.9L101.1,353.5L99.8,354.5Z" fill="#707070" stroke="#707070" stroke-width="0.4"/>
<path d="M38.5,340.5L42.8,340.6L45.1,346.0L40.9,345.9ZM119.3,315.6L120.3,313.7L120.7,319.7L119.7,321.6ZM67.0,350.7L71.8,349.9L73.8,355.0L69.4,355.8Z" fill="#bcbcbc" stroke="#bcbcbc" stroke-width="0.4"/>
<path d="M44.7,351.9L48.7,352.1L52.9,357.0L49.2,356.8ZM56.7,356.9L60.8,356.7L64.4,360.4L60.9,360.6ZM118.9,329.1L119.8,327.3L117.2,334.5L116.4,336.1ZM87.0,356.3L90.7,355.2L89.7,358.0L86.6,358.9ZM90.7,355.2L94.1,353.9L92.6,357.0L89.7,358.0ZM94.1,353.9L97.4,352.7L95.4,355.9L92.6,357.0Z" fill="#747474" stroke="#747474" stroke-width="0.4"/>
<ellipse cx="68.6" cy="316.7" rx="52.6" ry="47.0" fill="url(#sphrim)"/></g>
<clipPath id="clipb5"><path d="M278.7,265.0L256.4,269.7L239.7,284.6L228.6,306.8L225.8,327.3L230.4,345.8L245.3,358.8L265.7,367.2L288.0,369.0L306.5,362.5L323.3,345.8L333.5,323.6L332.5,305.0L325.0,288.3L310.3,273.4L293.5,264.1Z"/></clipPath>
<path d="M278.7,265.0L256.4,269.7L239.7,284.6L228.6,306.8L225.8,327.3L230.4,345.8L245.3,358.8L265.7,367.2L288.0,369.0L306.5,362.5L323.3,345.8L333.5,323.6L332.5,305.0L325.0,288.3L310.3,273.4L293.5,264.1Z" fill="#a8a8a8"/>
<g clip-path="url(#clipb5)">
<path d="M246.4,360.2L249.1,363.6L267.1,368.8L266.2,366.3Z" fill="#787878"/>
<path d="M305.8,271.3L298.9,268.7L305.1,278.8L316.3,283.1Z" fill="#cacaca"/>
<path d="M268.0,266.1L252.7,271.8L244.4,281.1L254.0,276.2Z" fill="#787878"/>
<path d="M270.8,368.0L269.0,365.6L260.9,375.7Z" fill="#a1a1a1"/>
<path d="M306.5,363.3L308.5,359.6L293.6,363.6L294.9,367.0Z" fill="#a1a1a1"/>
<path d="M328.6,337.4L327.7,322.2L323.1,339.7L326.3,342.3Z" fill="#949494"/>
<path d="M326.0,288.2L318.6,280.1L319.5,294.0L333.7,305.7Z" fill="#ececec"/>
<path d="M229.7,315.8L228.4,327.8L234.2,344.0L238.2,338.7Z" fill="#a1a1a1"/>
<path d="M238.5,283.7L234.4,289.6L226.6,303.8L234.9,295.2Z" fill="#797979"/>
<path d="M310.4,365.7L299.4,369.9L300.7,380.6Z" fill="#787878"/>
<path d="M265.1,369.1L277.7,371.1L280.0,370.9L274.2,368.3Z" fill="#787878"/>
<path d="M235.7,345.7L249.1,359.3L258.6,366.0L249.3,358.2Z" fill="#a1a1a1"/>
<path d="M227.2,310.7L227.6,320.7L228.1,331.9L229.9,324.3Z" fill="#787878"/>
<path d="M316.7,356.5L326.9,347.1L317.5,357.0L308.0,365.4Z" fill="#787878"/>
<path d="M333.7,311.9L331.1,297.3L332.5,316.9L331.5,340.1Z" fill="#a1a1a1"/>
<path d="M280.9,268.8L273.8,270.8L266.3,270.7L275.7,269.8Z" fill="#a3a3a3"/>
<path d="M289.3,267.3L280.0,267.8L280.2,266.9L295.8,269.0Z" fill="#ececec"/>
<path d="M281.9,373.3L298.2,371.6L291.8,373.1L279.9,374.6Z" fill="#a1a1a1"/>
<path d="M316.5,282.6L306.9,273.5L319.5,284.4L322.9,287.5Z" fill="#b2b2b2"/>
<path d="M255.5,269.9L242.2,281.3L235.7,287.0L238.6,283.3Z" fill="#a1a1a1"/>
<path d="M291.2,269.5L289.7,266.8L292.4,267.2L306.0,271.2Z" fill="#ababab"/>
<path d="M228.6,333.8L237.4,337.4L243.5,357.2L237.2,348.6Z" fill="#7c7c7c"/>
<path d="M274.5,266.9L268.3,269.1L253.4,271.7L263.5,268.2Z" fill="#e3e3e3"/>
<path d="M299.8,360.9L316.7,355.2L303.8,364.9L297.7,367.6Z" fill="#a1a1a1"/>
<path d="M233.7,292.8L234.2,303.3L230.0,315.3L227.4,310.1Z" fill="#a1a1a1"/>
<path d="M326.5,300.5L328.9,290.9L336.1,309.6L335.3,313.6Z" fill="#8d8d8d"/>
<path d="M305.1,269.7L310.1,275.5L310.3,262.5Z" fill="#e8e8e8"/>
<path d="M245.4,356.7L262.9,359.9L264.3,366.9L252.6,362.8Z" fill="#787878"/>
<path d="M263.9,271.9L267.2,275.2L248.8,279.3L256.3,273.6Z" fill="#b3b3b3"/>
<path d="M319.1,344.5L332.9,335.5L336.8,351.9Z" fill="#a1a1a1"/>
<path d="M309.6,288.6L314.7,281.7L323.4,291.8L327.1,303.1Z" fill="#ececec"/>
<path d="M284.0,365.6L296.0,361.2L296.3,368.3L278.4,369.7Z" fill="#7e7e7e"/>
<path d="M280.2,272.4L278.1,271.2L271.4,268.9L282.4,266.7Z" fill="#ececec"/>
<path d="M229.2,312.1L236.9,326.3L241.4,342.2L229.2,331.3Z" fill="#a1a1a1"/>
<path d="M263.4,368.2L275.8,363.5L281.9,373.2L267.0,372.5Z" fill="#a1a1a1"/>
<path d="M285.5,270.9L281.4,270.5L288.5,266.2L289.5,269.1Z" fill="#ececec"/>
<path d="M323.1,323.2L329.8,319.5L329.2,337.7L317.3,348.4Z" fill="#848484"/>
<path d="M278.8,275.9L279.5,276.8L281.2,269.5L288.1,268.8Z" fill="#c8c8c8"/>
<path d="M247.1,283.0L247.2,288.0L230.2,283.6Z" fill="#787878"/>
<path d="M280.3,271.2L280.2,271.2L297.5,267.5L304.1,272.8Z" fill="#c2c2c2"/>
<path d="M281.8,274.3L279.3,271.9L270.4,269.0L270.4,267.1Z" fill="#b8b8b8"/>
<path d="M243.4,345.2L259.3,349.5L258.1,359.6L242.6,354.3Z" fill="#a1a1a1"/>
<path d="M298.7,352.5L324.4,345.3L315.9,357.3L301.8,362.5Z" fill="#7f7f7f"/>
<path d="M275.9,270.0L275.3,271.2L258.8,272.6L269.4,269.2Z" fill="#ececec"/>
<path d="M259.8,271.7L265.3,273.6L243.2,289.3L239.6,282.7Z" fill="#e5e5e5"/>
<path d="M302.9,279.1L299.9,275.2L313.4,280.9L313.2,287.9Z" fill="#c9c9c9"/>
<path d="M277.4,272.5L275.5,273.4L268.2,276.0L263.4,273.2Z" fill="#9f9f9f"/>
<path d="M315.2,315.4L322.5,301.1L331.5,320.0L316.3,328.5Z" fill="#cccccc"/>
<path d="M274.8,270.1L281.9,270.5L303.8,273.7L301.6,276.5Z" fill="#ececec"/>
<path d="M276.6,273.5L283.5,275.2L292.9,278.1L289.7,279.8Z" fill="#c7c7c7"/>
<path d="M237.5,298.0L245.9,309.3L238.7,325.2L226.3,320.2Z" fill="#8c8c8c"/>
<path d="M284.3,272.0L280.6,273.2L271.4,283.7L267.2,280.6Z" fill="#c9c9c9"/>
<path d="M278.2,271.3L282.8,269.9L267.2,279.0L259.7,277.3Z" fill="#ececec"/>
<path d="M259.3,348.5L275.3,353.1L279.5,364.7L254.9,357.9Z" fill="#ababab"/>
<path d="M305.7,292.4L317.2,291.0L325.8,307.8L313.5,310.5Z" fill="#b5b5b5"/>
<path d="M273.8,358.0L300.2,354.8L298.6,362.8L283.4,367.2Z" fill="#bababa"/>
<path d="M279.8,270.6L277.2,269.9L284.5,279.8L282.1,284.5Z" fill="#bebebe"/>
<path d="M279.7,273.5L284.6,276.1L297.5,282.9L285.4,282.5Z" fill="#ececec"/>
<path d="M281.1,270.7L280.2,273.0L280.6,280.6L275.7,279.3Z" fill="#ececec"/>
<path d="M296.3,284.9L303.2,280.9L315.0,288.4L304.9,294.5Z" fill="#eaeaea"/>
<path d="M304.2,332.7L322.1,323.9L319.7,347.1L308.0,345.2Z" fill="#ececec"/>
<path d="M239.6,334.7L251.8,338.7L254.3,349.1L236.5,345.6Z" fill="#a9a9a9"/>
<path d="M245.4,288.0L247.5,297.7L233.9,293.4Z" fill="#aaaaaa"/>
<path d="M256.7,277.9L265.3,279.3L248.3,293.8L246.0,286.6Z" fill="#979797"/>
<path d="M261.5,285.0L275.8,279.2L262.3,295.5L253.7,289.5Z" fill="#ececec"/>
<path d="M300.8,313.2L320.0,309.4L325.8,323.3L305.7,331.6Z" fill="#c5c5c5"/>
<path d="M240.3,315.6L260.5,321.1L262.1,330.7L237.7,325.4Z" fill="#c6c6c6"/>
<path d="M288.9,288.0L295.9,280.5L311.2,296.0L291.5,297.8Z" fill="#c2c2c2"/>
<path d="M255.3,334.7L280.6,331.8L284.6,352.5L253.3,343.9Z" fill="#a1a1a1"/>
<path d="M273.3,280.5L279.6,284.2L281.1,305.1L260.0,303.8Z" fill="#afafaf"/>
<path d="M293.7,294.2L305.3,293.7L314.9,310.7L299.9,313.5Z" fill="#ececec"/>
<path d="M246.8,294.6L264.3,297.8L257.7,315.4L244.1,309.5Z" fill="#bababa"/>
<path d="M280.9,283.4L288.0,280.0L299.7,301.6L281.4,298.9Z" fill="#ececec"/>
<path d="M282.3,324.5L297.9,323.0L301.5,337.1L279.0,341.5Z" fill="#ececec"/>
<path d="M277.1,356.4L283.0,333.1L293.6,348.3Z" fill="#bebebe"/>
<path d="M258.2,311.3L277.3,321.4L285.0,335.5L258.3,338.7Z" fill="#a1a1a1"/>
<path d="M262.1,303.6L282.5,306.1L278.0,315.0L254.8,320.1Z" fill="#cacaca"/>
<path d="M277.2,295.6L294.4,299.7L300.6,315.4L278.6,313.2Z" fill="#bcbcbc"/>
<path d="M301.1,345.4L286.7,356.9L303.2,363.0Z" fill="#9d9d9d"/>
<path d="M305.1,316.5L300.8,327.9L318.2,327.3Z" fill="#c0c0c0"/>
<path d="M297.2,338.5L279.2,344.8L286.2,353.7Z" fill="#939393"/>
<path d="M261.6,334.5L259.2,310.3L247.9,322.6Z" fill="#a3a3a3"/>
<path d="M244.9,316.1L246.4,299.3L231.7,308.4Z" fill="#9b9b9b"/>
<path d="M283.3,290.9L292.1,292.1L288.4,280.7Z" fill="#eeeeee"/>
<path d="M290.3,302.7L299.7,304.5L299.6,302.2Z" fill="#d2d2d2"/>
<path d="M257.4,315.2L264.4,303.9L251.2,308.5Z" fill="#cccccc"/>
<path d="M277.7,283.8L286.7,285.2L280.4,266.6Z" fill="#eeeeee"/>
<path d="M314.6,313.9L310.9,330.8L332.5,320.5Z" fill="#b4b4b4"/>
<path d="M293.2,308.6L295.7,326.0L302.4,319.6Z" fill="#c4c4c4"/>
<path d="M266.6,312.8L290.8,309.4L277.8,304.0Z" fill="#a7a7a7"/>
<path d="M286.4,338.9L279.1,341.9L277.3,347.4Z" fill="#aaaaaa"/>
<path d="M266.8,338.3L258.1,333.6L256.4,343.0Z" fill="#878787"/>
<path d="M288.2,351.8L280.5,350.9L291.0,372.5Z" fill="#767676"/>
<path d="M297.6,343.6L274.6,346.8L292.8,360.9Z" fill="#9f9f9f"/>
<path d="M307.7,299.4L310.6,315.6L326.7,297.0Z" fill="#eeeeee"/>
<path d="M279.7,294.4L304.7,304.1L299.2,285.8Z" fill="#a7a7a7"/>
<path d="M267.9,286.4L281.6,288.2L272.0,274.7Z" fill="#c5c5c5"/>
<path d="M301.0,324.5L293.0,335.0L301.5,328.2Z" fill="#e2e2e2"/>
<path d="M305.6,305.2L308.2,320.3L324.5,314.8Z" fill="#a9a9a9"/>
<path d="M288.3,329.3L273.9,332.1L277.0,335.1Z" fill="#868686"/>
<path d="M263.5,319.8L275.5,305.5L265.8,307.2Z" fill="#d9d9d9"/>
<path d="M277.9,291.3L293.4,292.0L286.8,282.5Z" fill="#e4e4e4"/>
<path d="M282.3,344.8L266.6,338.1L273.6,356.4Z" fill="#939393"/>
<path d="M254.3,339.4L242.9,319.5L238.9,339.3Z" fill="#b3b3b3"/>
<path d="M284.2,292.7L292.8,297.4L297.0,284.5Z" fill="#eeeeee"/>
<path d="M306.7,302.5L312.5,318.8L327.5,298.6Z" fill="#c5c5c5"/>
<path d="M263.3,346.5L254.4,335.4L250.5,352.1Z" fill="#707070"/>
<path d="M257.4,310.5L264.3,303.6L247.6,298.1Z" fill="#909090"/>
<path d="M264.2,306.7L269.7,304.9L264.8,304.1Z" fill="#d0d0d0"/>
<path d="M263.7,303.4L273.2,295.5L264.5,295.6Z" fill="#c4c4c4"/>
<path d="M265.9,290.2L277.1,289.4L260.4,270.8Z" fill="#a0a0a0"/>
<path d="M279.4,335.3L269.8,331.0L277.8,337.7Z" fill="#7f7f7f"/>
<path d="M292.6,334.1L285.8,337.5L293.4,348.1Z" fill="#929292"/>
<path d="M257.5,302.9L273.7,288.9L257.9,284.9Z" fill="#ededed"/>
<path d="M256.0,319.5L259.0,309.7L240.0,308.6Z" fill="#9c9c9c"/>
<path d="M252.7,296.2L266.1,287.7L244.8,274.6Z" fill="#bbbbbb"/>
<path d="M301.2,328.3L296.0,334.9L302.4,344.3Z" fill="#d7d7d7"/>
<path d="M293.5,298.9L307.0,318.5L303.5,306.0Z" fill="#ababab"/>
</g>
<path d="M278.7,265.0L256.4,269.7L239.7,284.6L228.6,306.8L225.8,327.3L230.4,345.8L245.3,358.8L265.7,367.2L288.0,369.0L306.5,362.5L323.3,345.8L333.5,323.6L332.5,305.0L325.0,288.3L310.3,273.4L293.5,264.1Z" fill="url(#blobrim)"/>
<path d="M278.7,265.0L256.4,269.7L239.7,284.6L228.6,306.8L225.8,327.3L230.4,345.8L245.3,358.8L265.7,367.2L288.0,369.0L306.5,362.5L323.3,345.8L333.5,323.6L332.5,305.0L325.0,288.3L310.3,273.4L293.5,264.1Z" fill="url(#blobshade)"/>
<path d="M278.7,265.0L256.4,269.7L239.7,284.6L228.6,306.8L225.8,327.3L230.4,345.8L245.3,358.8L265.7,367.2L288.0,369.0L306.5,362.5L323.3,345.8L333.5,323.6L332.5,305.0L325.0,288.3L310.3,273.4L293.5,264.1Z" fill="url(#midv)"/>
<path d="M277.5,268.6L272.3,269.1L276.0,263.0Z" fill="#bcbcbc"/>
<path d="M260.0,271.4L256.0,273.3L255.7,266.8Z" fill="#d7d7d7"/>
<path d="M255.7,274.9L251.0,277.9L250.6,272.8Z" fill="#c6c6c6"/>
<path d="M252.8,277.3L245.1,283.5L245.7,275.6Z" fill="#d2d2d2"/>
<path d="M239.6,291.8L234.9,300.5L232.9,295.5Z" fill="#a8a8a8"/>
<path d="M236.6,297.0L234.2,302.6L232.6,297.6Z" fill="#919191"/>
<path d="M230.9,311.2L230.3,317.2L227.1,315.1Z" fill="#9b9b9b"/>
<path d="M228.9,318.7L229.7,327.8L223.9,322.2Z" fill="#9a9a9a"/>
<path d="M228.6,325.5L230.2,333.3L225.5,328.3Z" fill="#808080"/>
<path d="M230.3,333.8L231.9,338.5L228.1,337.6Z" fill="#606060"/>
<path d="M232.0,341.6L236.3,349.1L229.8,347.9Z" fill="#818181"/>
<path d="M239.5,349.2L243.0,353.5L236.7,354.3Z" fill="#7a7a7a"/>
<path d="M251.3,357.5L256.8,361.0L252.2,363.9Z" fill="#727272"/>
<path d="M256.7,360.1L265.1,363.9L257.4,368.3Z" fill="#5a5a5a"/>
<path d="M262.0,363.0L271.2,365.7L266.6,370.9Z" fill="#5a5a5a"/>
<path d="M283.0,366.7L291.6,365.4L286.2,372.3Z" fill="#5a5a5a"/>
<path d="M290.9,364.7L298.8,362.1L296.8,369.1Z" fill="#5a5a5a"/>
<path d="M298.5,362.5L303.3,360.1L305.1,368.7Z" fill="#5a5a5a"/>
<path d="M307.7,356.7L312.9,352.3L313.9,359.3Z" fill="#5a5a5a"/>
<path d="M311.7,353.2L314.9,349.9L316.2,355.0Z" fill="#747474"/>
<path d="M319.6,345.9L324.0,337.8L328.5,345.0Z" fill="#7f7f7f"/>
<path d="M325.0,335.8L326.7,330.3L331.1,333.0Z" fill="#939393"/>
<path d="M330.3,321.0L329.9,311.9L333.3,317.9Z" fill="#949494"/>
<path d="M330.5,313.0L329.1,305.8L333.9,306.7Z" fill="#9a9a9a"/>
<path d="M328.7,304.3L326.2,297.8L332.8,298.5Z" fill="#939393"/>
<path d="M326.9,299.2L322.6,291.1L330.8,291.6Z" fill="#aaaaaa"/>
<path d="M324.2,292.7L319.7,286.3L327.3,286.9Z" fill="#9d9d9d"/>
<path d="M316.0,283.2L311.4,279.1L317.3,278.4Z" fill="#bcbcbc"/>
<path d="M309.2,276.3L305.1,273.8L310.0,271.8Z" fill="#d2d2d2"/>
<path d="M296.6,268.3L290.9,266.8L293.3,265.6Z" fill="#bebebe"/>
<path d="M290.5,267.9L284.2,267.0L287.0,262.7Z" fill="#d7d7d7"/>
<path d="M282.8,267.9L274.9,268.1L279.4,263.7Z" fill="#d3d3d3"/>
<clipPath id="clipb9"><path d="M452.0,284.0L465.0,273.0L483.0,260.0L503.0,254.5L525.0,253.4L542.0,262.0L558.0,273.0L577.0,295.0L577.0,358.0L557.7,361.0L533.5,374.5L507.0,382.0L489.5,379.0L467.5,368.0L447.6,348.0L439.0,335.0L432.0,310.6L441.0,295.0Z"/></clipPath>
<path d="M452.0,284.0L465.0,273.0L483.0,260.0L503.0,254.5L525.0,253.4L542.0,262.0L558.0,273.0L577.0,295.0L577.0,358.0L557.7,361.0L533.5,374.5L507.0,382.0L489.5,379.0L467.5,368.0L447.6,348.0L439.0,335.0L432.0,310.6L441.0,295.0Z" fill="#a8a8a8"/>
<g clip-path="url(#clipb9)">
<path d="M561.3,277.8L548.0,267.6L558.6,284.5L568.8,293.3Z" fill="#999999"/>
<path d="M538.7,376.0L545.5,370.2L535.0,373.2L526.6,378.2Z" fill="#7c7c7c"/>
<path d="M575.3,334.8L565.7,348.6L584.2,356.3Z" fill="#c7c7c7"/>
<path d="M570.5,285.2L576.7,308.0L591.0,296.9Z" fill="#989898"/>
<path d="M563.9,358.5L569.4,348.4L545.9,365.4L547.2,371.9Z" fill="#7c7c7c"/>
<path d="M470.4,258.1L450.8,271.7L447.5,276.9L455.2,271.9Z" fill="#a6a6a6"/>
<path d="M488.2,248.2L472.8,253.9L461.3,262.2L490.2,253.4Z" fill="#e0e0e0"/>
<path d="M442.3,346.1L450.9,362.9L450.6,368.7Z" fill="#a6a6a6"/>
<path d="M533.0,257.8L523.5,254.7L522.7,257.9L543.3,265.7Z" fill="#b7b7b7"/>
<path d="M525.1,380.5L536.6,376.6L516.8,377.6L517.5,381.4Z" fill="#a6a6a6"/>
<path d="M479.3,377.0L494.3,381.0L497.6,380.4L492.4,377.6Z" fill="#7c7c7c"/>
<path d="M489.3,377.6L504.9,380.1L505.1,377.9L499.0,377.5Z" fill="#a6a6a6"/>
<path d="M451.4,280.4L441.8,303.2L439.1,315.7L445.4,303.4Z" fill="#bcbcbc"/>
<path d="M462.4,371.3L446.7,356.6L456.1,382.6Z" fill="#7c7c7c"/>
<path d="M541.9,369.2L560.6,355.2L537.5,371.4L531.6,375.8Z" fill="#a6a6a6"/>
<path d="M434.0,298.9L442.3,281.0L437.0,279.4Z" fill="#7c7c7c"/>
<path d="M479.7,258.7L468.3,265.5L457.9,273.2L473.5,262.5Z" fill="#909090"/>
<path d="M473.8,255.6L489.8,250.7L484.7,235.4Z" fill="#b8b8b8"/>
<path d="M540.2,261.2L540.1,258.4L545.6,264.5L555.7,269.7Z" fill="#ececec"/>
<path d="M509.2,385.2L527.2,381.9L514.6,396.9Z" fill="#7c7c7c"/>
<path d="M508.6,244.6L498.3,246.5L495.5,245.0L504.9,245.4Z" fill="#c3c3c3"/>
<path d="M512.3,254.9L505.9,254.0L510.5,252.5L519.5,253.0Z" fill="#bbbbbb"/>
<path d="M445.2,342.8L453.1,359.5L430.7,355.8Z" fill="#7c7c7c"/>
<path d="M470.6,368.3L491.2,374.9L493.7,378.2L480.5,373.5Z" fill="#a6a6a6"/>
<path d="M522.7,256.2L513.5,254.4L519.4,253.9L535.2,258.4Z" fill="#ececec"/>
<path d="M439.9,307.8L444.4,324.4L447.9,345.0L443.7,337.9Z" fill="#b2b2b2"/>
<path d="M570.8,335.0L577.6,320.6L573.2,339.9L570.5,345.2Z" fill="#7c7c7c"/>
<path d="M562.5,364.0L556.7,367.8L572.9,370.2Z" fill="#7c7c7c"/>
<path d="M525.6,375.8L541.4,372.8L532.2,378.0L525.7,380.0Z" fill="#7c7c7c"/>
<path d="M573.4,308.3L567.4,335.3L589.3,312.8Z" fill="#ececec"/>
<path d="M570.5,297.0L556.4,277.5L584.5,275.6Z" fill="#dedede"/>
<path d="M530.4,257.0L518.4,253.8L536.4,255.6L549.0,262.9Z" fill="#cfcfcf"/>
<path d="M450.3,351.3L464.2,357.6L472.2,371.5L457.4,361.4Z" fill="#a6a6a6"/>
<path d="M481.5,372.1L512.6,372.0L509.1,379.5L492.2,377.2Z" fill="#7c7c7c"/>
<path d="M508.2,377.5L534.9,372.2L523.2,381.3L511.1,382.0Z" fill="#a6a6a6"/>
<path d="M485.1,253.8L485.3,256.6L468.7,262.5L475.3,256.0Z" fill="#dedede"/>
<path d="M452.5,276.3L451.4,269.6L444.1,257.3Z" fill="#cfcfcf"/>
<path d="M544.4,268.8L544.5,264.7L560.5,275.8L562.2,281.7Z" fill="#b6b6b6"/>
<path d="M442.0,296.1L447.6,317.5L440.3,328.4L437.5,313.6Z" fill="#878787"/>
<path d="M506.8,257.5L506.1,257.5L494.7,251.5L509.7,250.4Z" fill="#cdcdcd"/>
<path d="M514.9,246.3L520.7,250.5L514.3,242.9Z" fill="#9f9f9f"/>
<path d="M504.6,253.3L503.5,255.2L491.0,253.1L499.6,249.2Z" fill="#d7d7d7"/>
<path d="M556.6,333.2L569.5,326.8L566.2,347.6L548.8,359.6Z" fill="#a9a9a9"/>
<path d="M509.2,253.7L506.4,253.1L507.0,250.1L515.2,250.6Z" fill="#ececec"/>
<path d="M459.8,363.8L477.5,362.7L484.3,380.0L464.0,370.8Z" fill="#7c7c7c"/>
<path d="M439.1,326.3L453.7,333.0L462.8,357.8L448.8,353.3Z" fill="#7c7c7c"/>
<path d="M451.4,277.2L446.9,292.4L439.2,310.3L438.0,296.7Z" fill="#a6a6a6"/>
<path d="M522.4,256.4L520.0,252.2L544.4,255.6L548.5,265.3Z" fill="#ececec"/>
<path d="M527.2,360.4L548.0,357.6L542.9,366.2L523.7,371.3Z" fill="#b6b6b6"/>
<path d="M514.0,260.6L503.1,261.1L530.2,258.5L524.5,262.9Z" fill="#cacaca"/>
<path d="M548.4,281.8L548.4,273.1L562.4,288.5L557.1,298.4Z" fill="#ececec"/>
<path d="M505.7,255.9L502.3,258.1L519.0,252.3L527.3,254.0Z" fill="#ececec"/>
<path d="M510.4,256.7L483.6,256.1L496.6,247.7Z" fill="#c7c7c7"/>
<path d="M511.3,368.4L535.8,365.9L526.9,380.2L502.3,380.5Z" fill="#a0a0a0"/>
<path d="M446.4,333.8L446.0,309.7L428.7,328.6Z" fill="#a6a6a6"/>
<path d="M561.4,297.4L567.6,284.9L576.3,292.9Z" fill="#989898"/>
<path d="M484.9,259.4L464.3,267.5L465.6,244.0Z" fill="#aaaaaa"/>
<path d="M487.2,254.0L512.1,256.6L494.7,249.6Z" fill="#ececec"/>
<path d="M484.1,261.1L491.6,263.1L469.7,278.5L464.0,273.1Z" fill="#ececec"/>
<path d="M528.8,269.0L521.1,262.4L547.7,273.3L546.5,285.2Z" fill="#b8b8b8"/>
<path d="M447.0,295.7L446.9,280.3L448.2,272.3Z" fill="#a5a5a5"/>
<path d="M507.4,257.3L513.7,256.6L488.9,263.2L481.7,261.7Z" fill="#cecece"/>
<path d="M509.3,257.2L506.8,255.7L504.5,254.7Z" fill="#ececec"/>
<path d="M499.8,253.2L502.3,254.7L523.9,256.7L521.4,259.8Z" fill="#ececec"/>
<path d="M509.2,257.4L508.3,257.2L495.2,264.1L492.0,262.7Z" fill="#ececec"/>
<path d="M502.0,253.2L509.5,256.1L523.8,262.0L525.7,266.1Z" fill="#bebebe"/>
<path d="M486.9,380.2L485.6,363.6L492.3,382.6Z" fill="#a6a6a6"/>
<path d="M541.5,352.4L563.1,336.1L559.3,360.3L539.3,361.4Z" fill="#909090"/>
<path d="M505.8,256.4L509.8,259.8L514.9,248.2Z" fill="#ececec"/>
<path d="M459.1,342.7L485.5,343.8L488.9,357.1L464.4,354.1Z" fill="#a6a6a6"/>
<path d="M506.8,259.0L505.3,255.3L517.2,269.9L507.4,276.4Z" fill="#cccccc"/>
<path d="M509.2,255.7L503.6,260.2L497.7,267.8L485.6,271.3Z" fill="#b6b6b6"/>
<path d="M530.0,272.4L530.6,265.7L550.4,282.4L535.6,284.9Z" fill="#ececec"/>
<path d="M545.8,275.2L565.0,295.1L562.8,278.5Z" fill="#cccccc"/>
<path d="M544.2,302.2L563.9,298.5L572.0,309.5L556.8,316.5Z" fill="#dedede"/>
<path d="M484.3,263.0L495.3,261.2L476.3,274.9L472.1,267.2Z" fill="#bfbfbf"/>
<path d="M550.7,329.8L563.6,306.8L577.1,327.3Z" fill="#c9c9c9"/>
<path d="M468.6,273.1L473.2,289.5L470.9,295.0L455.6,289.9Z" fill="#c8c8c8"/>
<path d="M449.8,300.6L459.3,303.3L462.7,320.9L441.8,302.3Z" fill="#999999"/>
<path d="M535.0,359.0L507.6,360.1L523.5,366.5Z" fill="#c3c3c3"/>
<path d="M500.2,268.7L506.0,270.9L502.1,292.9L492.1,286.3Z" fill="#c4c4c4"/>
<path d="M482.9,354.5L514.2,346.3L515.0,373.0L478.1,366.7Z" fill="#7c7c7c"/>
<path d="M517.9,270.5L522.1,268.3L533.6,277.6L518.8,285.0Z" fill="#c0c0c0"/>
<path d="M560.5,338.3L527.1,355.6L552.3,337.6Z" fill="#dedede"/>
<path d="M521.7,287.9L530.6,281.1L547.3,297.9L528.3,309.6Z" fill="#ebebeb"/>
<path d="M508.6,268.5L516.9,273.7L514.7,270.9Z" fill="#ececec"/>
<path d="M491.4,266.9L496.3,272.1L495.3,283.2L481.1,283.3Z" fill="#ececec"/>
<path d="M466.0,305.2L481.7,307.1L485.5,329.8L457.5,326.1Z" fill="#dfdfdf"/>
<path d="M451.8,325.3L481.5,326.0L479.8,345.2L451.7,337.9Z" fill="#7c7c7c"/>
<path d="M475.5,284.5L491.0,292.1L489.6,309.3L465.0,308.5Z" fill="#aaaaaa"/>
<path d="M522.5,304.0L547.7,294.3L558.8,315.0L539.4,329.9Z" fill="#a2a2a2"/>
<path d="M487.3,329.4L505.4,329.7L505.4,348.9L482.6,347.5Z" fill="#e3e3e3"/>
<path d="M516.6,282.7L525.8,312.2L518.9,294.3Z" fill="#c3c3c3"/>
<path d="M499.9,346.8L499.8,326.4L524.4,346.0Z" fill="#858585"/>
<path d="M487.6,310.6L510.4,305.7L490.8,319.9Z" fill="#cacaca"/>
<path d="M503.5,323.0L511.3,317.0L521.0,319.4Z" fill="#ececec"/>
<path d="M501.2,306.2L478.1,311.2L493.9,292.1Z" fill="#ececec"/>
<path d="M485.1,301.5L511.1,287.8L489.8,284.4Z" fill="#b6b6b6"/>
<path d="M539.4,305.6L543.7,318.8L559.5,306.9Z" fill="#c5c5c5"/>
<path d="M506.7,351.0L486.0,344.5L490.6,372.3Z" fill="#8f8f8f"/>
<path d="M535.0,315.5L527.5,335.8L545.9,326.3Z" fill="#dfdfdf"/>
<path d="M475.4,294.9L497.1,284.1L477.9,279.0Z" fill="#dcdcdc"/>
<path d="M461.0,312.5L469.1,294.5L445.4,293.6Z" fill="#adadad"/>
<path d="M515.2,301.6L520.4,318.4L522.3,304.5Z" fill="#e6e6e6"/>
<path d="M495.8,357.2L473.9,351.2L469.9,376.5Z" fill="#b7b7b7"/>
<path d="M522.2,327.6L512.9,336.0L532.8,337.9Z" fill="#818181"/>
<path d="M520.9,351.7L510.4,352.3L526.2,377.8Z" fill="#9f9f9f"/>
<path d="M527.6,338.1L512.6,343.8L530.4,346.0Z" fill="#cccccc"/>
<path d="M531.5,349.7L504.7,358.9L519.4,376.0Z" fill="#9d9d9d"/>
<path d="M553.1,310.8L547.8,327.5L567.8,317.7Z" fill="#c1c1c1"/>
<path d="M510.5,340.4L487.3,336.3L492.8,346.8Z" fill="#9c9c9c"/>
<path d="M517.5,356.1L489.6,355.8L495.8,376.3Z" fill="#b2b2b2"/>
<path d="M525.3,330.4L498.0,335.5L511.8,340.7Z" fill="#c6c6c6"/>
<path d="M521.5,331.4L506.4,342.4L521.8,349.3Z" fill="#848484"/>
<path d="M519.3,353.7L507.9,355.0L520.5,372.7Z" fill="#818181"/>
<path d="M539.4,336.5L528.7,353.2L542.3,361.8Z" fill="#b2b2b2"/>
<path d="M532.1,286.0L539.0,296.3L546.0,280.1Z" fill="#c4c4c4"/>
<path d="M476.1,341.7L469.2,316.2L447.8,336.6Z" fill="#bebebe"/>
<path d="M495.8,324.7L493.6,312.8L497.3,320.7Z" fill="#c0c0c0"/>
<path d="M511.3,355.9L497.0,354.8L501.4,374.6Z" fill="#909090"/>
<path d="M466.4,331.5L462.2,320.9L437.8,326.4Z" fill="#a1a1a1"/>
<path d="M544.9,289.2L549.1,315.3L566.9,289.8Z" fill="#eeeeee"/>
<path d="M503.9,282.4L519.0,285.5L518.4,262.7Z" fill="#d9d9d9"/>
<path d="M490.0,313.2L502.1,301.6L486.2,310.5Z" fill="#d7d7d7"/>
<path d="M499.5,295.6L525.0,304.6L512.8,290.8Z" fill="#9a9a9a"/>
<path d="M533.0,283.5L545.2,310.0L553.8,293.5Z" fill="#c0c0c0"/>
<path d="M535.6,310.2L534.2,329.6L544.9,316.0Z" fill="#9e9e9e"/>
<path d="M537.8,307.9L535.2,318.9L549.1,314.9Z" fill="#b8b8b8"/>
<path d="M482.2,299.7L495.1,292.2L475.2,291.2Z" fill="#919191"/>
<path d="M531.8,345.5L514.9,349.9L526.6,361.2Z" fill="#888888"/>
<path d="M490.9,355.6L473.0,344.9L473.1,370.7Z" fill="#727272"/>
<path d="M547.0,334.9L536.9,349.4L553.4,352.0Z" fill="#b9b9b9"/>
<path d="M535.7,346.1L519.2,352.6L538.1,367.7Z" fill="#8c8c8c"/>
<path d="M485.5,296.0L500.0,286.4L486.9,286.7Z" fill="#d7d7d7"/>
<path d="M496.6,278.5L516.1,278.4L509.3,251.5Z" fill="#b5b5b5"/>
<path d="M491.7,313.1L506.9,301.0L497.9,300.1Z" fill="#d3d3d3"/>
<path d="M478.7,300.2L499.4,284.6L482.3,287.6Z" fill="#969696"/>
<path d="M540.5,331.0L526.3,345.7L547.5,349.6Z" fill="#a8a8a8"/>
<path d="M515.7,355.5L499.2,357.3L505.7,374.9Z" fill="#757575"/>
<path d="M540.3,325.8L535.1,338.4L554.6,335.3Z" fill="#e0e0e0"/>
<path d="M509.3,354.9L496.6,358.8L504.9,375.7Z" fill="#7a7a7a"/>
<path d="M520.5,358.7L487.7,357.1L502.2,379.9Z" fill="#797979"/>
<path d="M543.4,325.4L538.9,339.9L561.5,346.1Z" fill="#b5b5b5"/>
<path d="M492.5,295.4L509.8,288.7L505.6,278.8Z" fill="#c9c9c9"/>
<path d="M514.6,353.9L486.4,351.5L493.3,366.2Z" fill="#696969"/>
<path d="M522.2,275.8L538.6,282.8L548.9,266.1Z" fill="#eeeeee"/>
<path d="M538.8,303.1L540.4,326.2L561.8,319.7Z" fill="#eeeeee"/>
<path d="M475.9,293.2L494.0,286.0L480.7,278.6Z" fill="#e3e3e3"/>
<path d="M503.6,285.0L527.9,294.8L528.5,273.5Z" fill="#eeeeee"/>
<path d="M494.5,311.4L500.9,299.5L495.0,296.2Z" fill="#8e8e8e"/>
<path d="M476.2,342.9L465.7,316.8L448.7,330.6Z" fill="#8a8a8a"/>
<path d="M484.5,305.9L499.1,289.0L483.1,291.8Z" fill="#c4c4c4"/>
<path d="M495.4,358.0L479.3,344.5L481.2,364.9Z" fill="#a5a5a5"/>
<path d="M469.4,343.0L465.9,329.1L443.6,348.2Z" fill="#bcbcbc"/>
<path d="M476.7,321.9L478.6,304.3L461.5,312.2Z" fill="#b0b0b0"/>
<path d="M498.1,329.3L489.9,308.8L483.7,323.0Z" fill="#c9c9c9"/>
<path d="M544.0,324.4L535.0,339.1L558.0,341.1Z" fill="#d9d9d9"/>
<path d="M534.3,305.5L540.4,319.8L553.1,306.0Z" fill="#c0c0c0"/>
<path d="M501.5,293.0L520.6,295.2L512.3,275.9Z" fill="#d0d0d0"/>
<path d="M523.7,351.2L512.4,350.6L522.3,364.0Z" fill="#9a9a9a"/>
<path d="M532.3,283.7L536.0,294.1L548.3,280.0Z" fill="#cfcfcf"/>
<path d="M526.7,305.5L524.0,330.2L537.5,319.8Z" fill="#cacaca"/>
<path d="M484.0,313.2L496.4,295.6L478.2,296.3Z" fill="#a0a0a0"/>
<path d="M472.0,329.2L472.2,314.5L453.1,323.5Z" fill="#bababa"/>
<path d="M508.6,344.4L494.3,344.3L505.2,359.1Z" fill="#bdbdbd"/>
<path d="M477.9,306.4L492.9,290.7L469.9,287.3Z" fill="#d3d3d3"/>
<path d="M475.1,280.1L497.4,269.7L472.7,262.6Z" fill="#b5b5b5"/>
<path d="M472.1,299.9L483.3,285.5L459.7,275.7Z" fill="#d0d0d0"/>
<path d="M489.1,343.4L477.5,338.3L466.5,355.3Z" fill="#a1a1a1"/>
<path d="M481.0,331.7L475.8,313.0L463.2,322.7Z" fill="#797979"/>
<path d="M498.8,281.9L520.8,280.7L518.3,261.7Z" fill="#dedede"/>
<path d="M547.7,321.1L537.3,341.6L555.2,337.0Z" fill="#d7d7d7"/>
<path d="M509.8,340.5L484.6,332.1L494.3,343.9Z" fill="#b3b3b3"/>
<path d="M469.9,335.6L461.2,316.7L448.8,333.9Z" fill="#a3a3a3"/>
<path d="M493.0,295.4L518.1,296.6L504.5,290.4Z" fill="#b5b5b5"/>
<path d="M487.3,306.3L505.8,295.0L494.3,294.9Z" fill="#e6e6e6"/>
<path d="M538.5,332.1L521.8,346.1L544.4,353.0Z" fill="#aeaeae"/>
<path d="M483.1,283.8L496.2,278.4L481.2,259.8Z" fill="#dedede"/>
<path d="M509.1,348.7L485.6,342.2L498.3,358.4Z" fill="#b8b8b8"/>
<path d="M540.9,338.5L524.4,351.1L542.2,355.5Z" fill="#cacaca"/>
<path d="M506.9,344.5L486.5,335.6L487.5,345.3Z" fill="#838383"/>
<path d="M505.0,281.4L515.0,288.5L514.3,275.3Z" fill="#e6e6e6"/>
<path d="M494.9,324.7L491.5,315.6L484.2,325.2Z" fill="#8b8b8b"/>
<path d="M520.9,305.4L516.5,326.7L524.3,311.8Z" fill="#9b9b9b"/>
<path d="M511.4,275.3L534.2,282.5L534.7,259.4Z" fill="#eeeeee"/>
<path d="M516.5,281.5L540.1,295.2L545.1,281.3Z" fill="#ececec"/>
<path d="M466.1,296.4L474.1,280.8L453.0,276.8Z" fill="#9d9d9d"/>
</g>
<path d="M452.0,284.0L465.0,273.0L483.0,260.0L503.0,254.5L525.0,253.4L542.0,262.0L558.0,273.0L577.0,295.0L577.0,358.0L557.7,361.0L533.5,374.5L507.0,382.0L489.5,379.0L467.5,368.0L447.6,348.0L439.0,335.0L432.0,310.6L441.0,295.0Z" fill="url(#blobrim)"/>
<path d="M452.0,284.0L465.0,273.0L483.0,260.0L503.0,254.5L525.0,253.4L542.0,262.0L558.0,273.0L577.0,295.0L577.0,358.0L557.7,361.0L533.5,374.5L507.0,382.0L489.5,379.0L467.5,368.0L447.6,348.0L439.0,335.0L432.0,310.6L441.0,295.0Z" fill="url(#blobshade)"/>
<path d="M452.0,284.0L465.0,273.0L483.0,260.0L503.0,254.5L525.0,253.4L542.0,262.0L558.0,273.0L577.0,295.0L577.0,358.0L557.7,361.0L533.5,374.5L507.0,382.0L489.5,379.0L467.5,368.0L447.6,348.0L439.0,335.0L432.0,310.6L441.0,295.0Z" fill="url(#rightv)"/>
<path d="M460.0,280.0L456.4,285.1L453.7,278.1Z" fill="#9d9d9d"/>
<path d="M466.6,275.2L463.7,278.4L463.7,272.0Z" fill="#bababa"/>
<path d="M477.2,267.8L469.5,273.6L472.1,268.0Z" fill="#c0c0c0"/>
<path d="M483.5,264.0L476.7,267.6L479.5,262.9Z" fill="#cacaca"/>
<path d="M492.0,260.5L486.4,262.3L486.8,257.6Z" fill="#cecece"/>
<path d="M504.8,257.5L500.2,257.9L502.4,253.3Z" fill="#b1b1b1"/>
<path d="M507.1,257.3L501.8,257.5L505.1,253.6Z" fill="#d4d4d4"/>
<path d="M522.3,257.0L517.8,256.1L522.7,251.6Z" fill="#c0c0c0"/>
<path d="M530.2,258.7L522.3,256.1L528.6,252.4Z" fill="#b1b1b1"/>
<path d="M536.3,262.3L528.8,258.8L534.2,256.5Z" fill="#c7c7c7"/>
<path d="M548.0,270.0L542.6,265.7L549.7,262.7Z" fill="#c8c8c8"/>
<path d="M555.5,275.9L549.2,269.4L555.0,270.3Z" fill="#a7a7a7"/>
<path d="M562.1,283.0L557.0,275.7L565.3,277.3Z" fill="#b4b4b4"/>
<path d="M568.8,291.8L564.6,283.1L569.5,286.4Z" fill="#b1b1b1"/>
<path d="M573.6,327.2L574.5,317.5L578.6,324.8Z" fill="#9a9a9a"/>
<path d="M572.8,347.4L575.7,340.2L576.7,343.7Z" fill="#7b7b7b"/>
<path d="M570.4,358.6L572.5,355.2L577.4,357.9Z" fill="#7a7a7a"/>
<path d="M555.8,362.4L562.0,354.7L562.8,363.5Z" fill="#686868"/>
<path d="M550.7,363.3L557.1,356.4L556.7,362.3Z" fill="#5a5a5a"/>
<path d="M536.0,369.8L541.9,366.2L542.6,372.2Z" fill="#5a5a5a"/>
<path d="M517.3,375.8L525.5,373.8L523.5,381.5Z" fill="#5a5a5a"/>
<path d="M503.7,378.9L510.9,378.9L506.1,382.7Z" fill="#5a5a5a"/>
<path d="M495.4,377.3L505.1,378.3L498.4,384.9Z" fill="#636363"/>
<path d="M490.2,375.9L498.3,377.6L494.5,381.5Z" fill="#5a5a5a"/>
<path d="M483.1,373.0L490.4,375.6L484.6,379.2Z" fill="#5a5a5a"/>
<path d="M474.7,368.2L482.1,372.0L475.3,376.1Z" fill="#5c5c5c"/>
<path d="M459.7,355.8L463.9,360.3L458.1,364.1Z" fill="#737373"/>
<path d="M449.7,344.8L452.9,350.4L447.6,350.3Z" fill="#616161"/>
<path d="M447.6,341.9L450.0,346.8L444.2,347.6Z" fill="#7e7e7e"/>
<path d="M442.7,333.4L445.5,341.5L438.1,337.7Z" fill="#828282"/>
<path d="M438.8,321.9L439.5,327.8L433.6,325.7Z" fill="#838383"/>
<path d="M436.0,309.8L435.8,317.8L428.0,314.8Z" fill="#7b7b7b"/>
<path d="M438.8,302.9L438.2,307.0L431.4,302.2Z" fill="#808080"/>
<path d="M444.3,294.2L443.0,298.3L441.6,293.2Z" fill="#acacac"/>
<path d="M448.9,289.3L446.6,295.0L442.8,289.3Z" fill="#b5b5b5"/>
<path d="M451.2,286.4L447.5,294.8L443.6,289.9Z" fill="#909090"/>
<circle cx="435.8" cy="17.6" r="11" fill="#ededed"/>
<circle cx="435.8" cy="17.6" r="3.2" fill="#b4b4b4"/><path d="M440.3,17.6L444.3,17.6" stroke="#b4b4b4" stroke-width="1.3"/><path d="M439.0,20.8L441.8,23.6" stroke="#b4b4b4" stroke-width="1.3"/><path d="M435.8,22.1L435.8,26.1" stroke="#b4b4b4" stroke-width="1.3"/><path d="M432.6,20.8L429.8,23.6" stroke="#b4b4b4" stroke-width="1.3"/><path d="M431.3,17.6L427.3,17.6" stroke="#b4b4b4" stroke-width="1.3"/><path d="M432.6,14.4L429.8,11.6" stroke="#b4b4b4" stroke-width="1.3"/><path d="M435.8,13.1L435.8,9.1" stroke="#b4b4b4" stroke-width="1.3"/><path d="M439.0,14.4L441.8,11.6" stroke="#b4b4b4" stroke-width="1.3"/>
<circle cx="465.9" cy="17.6" r="11" fill="#ededed"/>
<rect x="459.4" y="12.1" width="13" height="9" rx="1" fill="none" stroke="#8c8c8c" stroke-width="1.6"/><path d="M462.9,24.1h6" stroke="#8c8c8c" stroke-width="1.6"/><path d="M465.9,21.1v3" stroke="#8c8c8c" stroke-width="1.6"/>
<circle cx="496.0" cy="17.6" r="11" fill="#ededed"/>
<circle cx="496.0" cy="17.6" r="3.2" fill="#8c8c8c"/><path d="M500.5,17.6L504.5,17.6" stroke="#8c8c8c" stroke-width="1.3"/><path d="M499.2,20.8L502.0,23.6" stroke="#8c8c8c" stroke-width="1.3"/><path d="M496.0,22.1L496.0,26.1" stroke="#8c8c8c" stroke-width="1.3"/><path d="M492.8,20.8L490.0,23.6" stroke="#8c8c8c" stroke-width="1.3"/><path d="M491.5,17.6L487.5,17.6" stroke="#8c8c8c" stroke-width="1.3"/><path d="M492.8,14.4L490.0,11.6" stroke="#8c8c8c" stroke-width="1.3"/><path d="M496.0,13.1L496.0,9.1" stroke="#8c8c8c" stroke-width="1.3"/><path d="M499.2,14.4L502.0,11.6" stroke="#8c8c8c" stroke-width="1.3"/>
<circle cx="526.0" cy="17.6" r="11" fill="#ededed"/>
<circle cx="526.0" cy="17.6" r="3.2" fill="#8c8c8c"/><path d="M530.5,17.6L534.5,17.6" stroke="#8c8c8c" stroke-width="1.3"/><path d="M529.2,20.8L532.0,23.6" stroke="#8c8c8c" stroke-width="1.3"/><path d="M526.0,22.1L526.0,26.1" stroke="#8c8c8c" stroke-width="1.3"/><path d="M522.8,20.8L520.0,23.6" stroke="#8c8c8c" stroke-width="1.3"/><path d="M521.5,17.6L517.5,17.6" stroke="#8c8c8c" stroke-width="1.3"/><path d="M522.8,14.4L520.0,11.6" stroke="#8c8c8c" stroke-width="1.3"/><path d="M526.0,13.1L526.0,9.1" stroke="#8c8c8c" stroke-width="1.3"/><path d="M529.2,14.4L532.0,11.6" stroke="#8c8c8c" stroke-width="1.3"/>
<circle cx="556.1" cy="17.6" r="11" fill="#ededed"/>
<rect x="549.1" y="12.6" width="9" height="10" rx="1" fill="#8c8c8c"/><path d="M558.1,16.6l5,-4v10l-5,-4z" fill="#8c8c8c"/>
<rect x="0" y="478" width="574" height="140" fill="url(#vign)"/>
</svg>
<div class="t" style="left:9.4px;top:597.80px;font-size:15px;color:#0b2cf0;-webkit-text-stroke:0.3px #0b2cf0">www.historian.by</div>
</div>
<div class="a" style="left:0px;top:0px;width:1024px;height:56px;background:#0c0c0c;"></div>
<div class="a" style="left:0px;top:0px;width:1px;height:28px;background:#5a5a5a;"></div>
<div class="t" style="left:11.5px;top:7.84px;font-size:12px;color:#f4f4f4;">N</div>
<div class="a" style="left:9px;top:21px;width:14px;height:1px;background:#1e8fe8;"></div>
<svg style="left:39px;top:5px;" width="17" height="17" viewBox="0 0 17 17"><path d="M2.5 8.5a6 6 0 0 1 10.5-4" fill="none" stroke="#f0b429" stroke-width="2.6"/><path d="M15.5 1.5v6h-6z" fill="#f0b429"/><path d="M14.5 8.5a6 6 0 0 1-10.5 4" fill="none" stroke="#8fa5b8" stroke-width="2.6"/><path d="M1.5 15.5v-6h6z" fill="#8fa5b8"/></svg>
<svg style="left:61px;top:6px;" width="16" height="16" viewBox="0 0 16 16"><path d="M1 0.5h8l4 4v10.5H1z" fill="#ececec" stroke="#bdbdbd" stroke-width="1"/><path d="M9 0.5v4h4" fill="#cfcfcf"/><path d="M11.5 7.5l1.2 2.6 2.8.3-2.1 1.9.6 2.8-2.5-1.4-2.5 1.4.6-2.8-2.1-1.9 2.8-.3z" fill="#f5c040" stroke="#c98a12" stroke-width=".6"/></svg>
<svg style="left:83px;top:6px;" width="16" height="16" viewBox="0 0 16 16"><rect x="0.5" y="0.5" width="15" height="15" rx="1.5" fill="#3a9ad9"/><rect x="3" y="1.5" width="10" height="6" fill="#e8eef2"/><rect x="4" y="3" width="8" height="1" fill="#7b8b96"/><rect x="4" y="5" width="6" height="1" fill="#7b8b96"/><rect x="4" y="10" width="8" height="5.5" fill="#f2f2f2"/><rect x="6" y="11.5" width="2" height="4" fill="#2b4a60"/></svg>
<svg style="left:105px;top:6px;" width="16" height="16" viewBox="0 0 16 16"><rect x="0.5" y="0.5" width="15" height="15" rx="1.5" fill="#3a9ad9"/><rect x="3" y="1.5" width="10" height="6" fill="#e8eef2"/><rect x="4" y="3" width="8" height="1" fill="#7b8b96"/><rect x="4" y="5" width="6" height="1" fill="#7b8b96"/><rect x="4" y="10" width="8" height="5.5" fill="#f2f2f2"/><rect x="6" y="11.5" width="2" height="4" fill="#2b4a60"/></svg>
<svg style="left:127px;top:6px;" width="16" height="16" viewBox="0 0 16 16"><rect x="4.5" y="0.5" width="11" height="11" fill="#5a5a5a"/><rect x="0.5" y="4.5" width="11" height="11" rx="1" fill="#646464"/><rect x="2.5" y="5.5" width="7" height="4" fill="#4a4a4a"/><rect x="3" y="11" width="6" height="4.5" fill="#4a4a4a"/></svg>
<svg style="left:147px;top:3px;" width="20" height="20" viewBox="0 0 20 20"><path d="M2 3.9L2 11.7L9.9 11.7Z" fill="#4a4a4a"/><path d="M5 9C8 4.5 13.5 3.5 16 7.5C17.8 10.5 17 15 14.7 18.3" fill="none" stroke="#4a4a4a" stroke-width="3.2" stroke-linecap="round"/></svg>
<svg style="left:169px;top:3px;" width="20" height="20" viewBox="0 0 20 20"><g transform="translate(20,0) scale(-1,1)"><path d="M2 3.9L2 11.7L9.9 11.7Z" fill="#4a4a4a"/><path d="M5 9C8 4.5 13.5 3.5 16 7.5C17.8 10.5 17 15 14.7 18.3" fill="none" stroke="#4a4a4a" stroke-width="3.2" stroke-linecap="round"/></g></svg>
<svg style="left:194px;top:6px;" width="15" height="16" viewBox="0 0 15 16"><path d="M0.5 0.5h7l3 3v9h-10z" fill="#6e6e6e"/><path d="M3.5 3.5h7l3 3v9h-10z" fill="#7a7a7a" stroke="#5a5a5a" stroke-width=".8"/><path d="M5 9h7M5 11h7M5 13h7" stroke="#5a5a5a" stroke-width=".8"/></svg>
<svg style="left:217px;top:9px;" width="12" height="11" viewBox="0 0 12 11"><path d="M1 1l10 9M11 1L1 10" stroke="#3c3c3c" stroke-width="2.4"/></svg>
<svg style="left:239px;top:6px;" width="12" height="15" viewBox="0 0 12 15"><path d="M1 0.5v13l3.2-3 2.6 4.5 2-1.2-2.6-4.3h4.5z" fill="#c8c8c8"/></svg>
<div class="a" style="left:256px;top:1px;width:22px;height:26px;background:#3c3c3c;"></div>
<svg style="left:257px;top:6px;" width="18" height="16" viewBox="0 0 18 16"><path d="M8 9V1" stroke="#1e1eff" stroke-width="2"/><path d="M8 9h8" stroke="#ff2020" stroke-width="2"/><path d="M16 9l-2-2v4z" fill="#ff2020"/><path d="M8 9L3 15" stroke="#20c020" stroke-width="2"/><path d="M8 9l5 -1" stroke="#2020ff" stroke-width="1.3"/></svg>
<svg style="left:279px;top:6px;" width="18" height="16" viewBox="0 0 18 16"><path d="M8 9V1" stroke="#1e1eff" stroke-width="2"/><path d="M8 9h8" stroke="#ff2020" stroke-width="2"/><path d="M16 9l-2-2v4z" fill="#ff2020"/><path d="M8 9L3 15" stroke="#20c020" stroke-width="2"/></svg>
<svg style="left:302px;top:6px;" width="18" height="16" viewBox="0 0 18 16"><circle cx="9" cy="8" r="7" fill="none" stroke="#9a9a9a" stroke-width="1.3"/><ellipse cx="9" cy="8" rx="4.5" ry="4.5" fill="none" stroke="#20b020" stroke-width="1.2"/><path d="M4.5 8h9" stroke="#e02020" stroke-width="1.2"/><path d="M9 3.5v9" stroke="#2020e0" stroke-width="1.2"/></svg>
<svg style="left:323px;top:6px;" width="18" height="16" viewBox="0 0 18 16"><path d="M8 9V1" stroke="#1e1eff" stroke-width="2"/><path d="M8 9h8" stroke="#ff2020" stroke-width="2"/><path d="M16 9l-2-2v4z" fill="#ff2020"/><path d="M8 9L3 15" stroke="#20c020" stroke-width="2"/><path d="M8 9l3-2" stroke="#ff2020" stroke-width="1"/></svg>
<svg style="left:346px;top:6px;" width="18" height="16" viewBox="0 0 18 16"><path d="M8 9V1" stroke="#1e1eff" stroke-width="2"/><path d="M8 9h8" stroke="#ff2020" stroke-width="2"/><path d="M16 9l-2-2v4z" fill="#ff2020"/><path d="M8 9L3 15" stroke="#20c020" stroke-width="2"/><circle cx="9" cy="10" r="3" fill="#20b020"/></svg>
<svg style="left:371px;top:7px;" width="12" height="14" viewBox="0 0 12 14"><path d="M1 0.5l10.5 6.5L1 13.5z" fill="#56a35a"/></svg>
<svg style="left:394px;top:7px;" width="12" height="14" viewBox="0 0 12 14"><path d="M1 0.5l10.5 6.5L1 13.5z" fill="#5aab5e"/></svg>
<svg style="left:416px;top:7px;" width="12" height="14" viewBox="0 0 12 14"><path d="M1 0.5l10.5 6.5L1 13.5z" fill="#474747"/></svg>
<svg style="left:434px;top:4px;" width="18" height="18" viewBox="0 0 18 18"><path d="M3.2 3.1L9 9.5" stroke="#bdbdbd" stroke-width="1.3" stroke-linecap="round"/><path d="M10 10.5L15.6 16" stroke="#3a8ee0" stroke-width="2.8" stroke-linecap="round"/><path d="M3 15.5L11.5 7" stroke="#f2f2f2" stroke-width="2.6" stroke-linecap="round"/><circle cx="13" cy="5.2" r="3.4" fill="#f2f2f2"/><path d="M12.8 5L15.8 1.2L17.8 3.2Z" fill="#0c0c0c"/><circle cx="13.9" cy="4.3" r="1.5" fill="#0c0c0c"/><circle cx="3" cy="15.6" r=".8" fill="#0c0c0c"/></svg>
<svg style="left:460px;top:11px;" width="7" height="7" viewBox="0 0 7 7"><rect x="0.5" y="0" width="6" height="1.3" fill="#e0e0e0"/><path d="M0.5 2.5h6l-3 3.5z" fill="#e0e0e0"/></svg>
<div class="t" style="left:481px;top:8.84px;font-size:12px;color:#f0f0f0;">Example...</div>
<div class="a" style="left:954px;top:15px;width:10px;height:2px;background:#f0f0f0;"></div>
<svg style="left:979px;top:8px;" width="13" height="12" viewBox="0 0 13 12"><rect x="1.6" y="5.6" width="7.6" height="5.6" fill="none" stroke="#f4f4f4" stroke-width="1.3"/><path d="M4.6 5.2V1.6h7v5.6H9.6" fill="none" stroke="#f4f4f4" stroke-width="1.3"/></svg>
<svg style="left:1005px;top:9px;" width="11" height="11" viewBox="0 0 11 11"><path d="M1 1l9 9M10 1L1 10" stroke="#f4f4f4" stroke-width="2"/></svg>
<svg style="left:1006px;top:38px;" width="10" height="7" viewBox="0 0 10 7"><path d="M1.5 1.5l3.5 3.5 3.5-3.5" fill="none" stroke="#f0f0f0" stroke-width="1.8"/></svg>
<div class="a" style="left:1px;top:29px;width:78px;height:25px;background:#2c2c2c;"></div>
<div class="t" style="left:18px;top:33.64px;font-size:12px;color:#f2f2f2;">Проект</div>
<div class="t" style="left:96px;top:36.14px;font-size:12px;color:#f2f2f2;">Базовые</div>
<div class="t" style="left:168px;top:36.14px;font-size:12px;color:#f2f2f2;">Скриптование</div>
<div class="t" style="left:273px;top:36.14px;font-size:12px;color:#f2f2f2;">Окна</div>
<div class="t" style="left:326px;top:36.14px;font-size:12px;color:#f2f2f2;">Инструменты</div>
<div class="t" style="left:429px;top:36.14px;font-size:12px;color:#f2f2f2;">Редактор сцен</div>
<div class="t" style="left:536px;top:36.14px;font-size:12px;color:#f2f2f2;">Моделирование</div>
<div class="a" style="left:4px;top:59px;width:235px;height:473px;border:1px solid #4e4e4e"></div>
<div class="a" style="left:5px;top:60px;width:233px;height:19px;background:#070707;"></div>
<div class="a" style="left:5px;top:79px;width:233px;height:1px;background:#4a4a4a;"></div>
<div class="t" style="left:11px;top:63.84px;font-size:12px;color:#a39f98;">Ресурсы</div>
<svg style="left:192px;top:67px;" width="8" height="5" viewBox="0 0 8 5"><path d="M0.5 0.5h7l-3.5 4z" fill="#a8a8a8"/></svg>
<svg style="left:208px;top:63px;" width="8" height="12" viewBox="0 0 8 12"><rect x="1.5" y="1" width="4.5" height="6" fill="none" stroke="#a8a8a8" stroke-width="1.2"/><path d="M0 7.5h7.5" stroke="#a8a8a8" stroke-width="1.2"/><path d="M3.75 8v4" stroke="#a8a8a8" stroke-width="1.2"/></svg>
<svg style="left:223px;top:65px;" width="10" height="10" viewBox="0 0 10 10"><path d="M1 1l8 8M9 1L1 9" stroke="#a8a8a8" stroke-width="2"/></svg>
<div class="a" style="left:5px;top:80px;width:233px;height:23px;background:#353535;"></div>
<svg style="left:6px;top:82px;" width="18" height="18" viewBox="0 0 18 18"><path d="M3.2 3.1L9 9.5" stroke="#bdbdbd" stroke-width="1.3" stroke-linecap="round"/><path d="M10 10.5L15.6 16" stroke="#3a8ee0" stroke-width="2.8" stroke-linecap="round"/><path d="M3 15.5L11.5 7" stroke="#f2f2f2" stroke-width="2.6" stroke-linecap="round"/><circle cx="13" cy="5.2" r="3.4" fill="#f2f2f2"/><path d="M12.8 5L15.8 1.2L17.8 3.2Z" fill="#353535"/><circle cx="13.9" cy="4.3" r="1.5" fill="#353535"/><circle cx="3" cy="15.6" r=".8" fill="#353535"/></svg>
<svg style="left:27px;top:84px;" width="18" height="16" viewBox="0 0 18 16"><rect x="0.5" y="0.5" width="7" height="6" fill="#3fc040"/><path d="M13 0.5l4 6h-8z" fill="#35a8ee"/><circle cx="4" cy="11.5" r="3.7" fill="#e8402a"/><path d="M13 7.5l4 4-4 4-4-4z" fill="#f3b030"/></svg>
<div class="a" style="left:49px;top:83px;width:1px;height:17px;background:#1c1c1c;"></div>
<svg style="left:54px;top:84px;" width="17" height="16" viewBox="0 0 17 16"><path d="M0.5 0.5h8l3 3v12H0.5z" fill="#9a9a9a"/><path d="M8.5 0.5v3h3" fill="#bdbdbd"/><path d="M5 14l9-9 2 2-9 9z" fill="#b0b0b0" stroke="#7a7a7a" stroke-width=".6"/></svg>
<div class="a" style="left:75px;top:83px;width:1px;height:17px;background:#1c1c1c;"></div>
<svg style="left:80px;top:84px;" width="17" height="17" viewBox="0 0 17 17"><path d="M0.5 1.5h5v14h-5z" fill="#8a8a8a"/><path d="M3.5 0.5h7l3 3v11h-10z" fill="#a0a0a0"/><path d="M12 8.5l1.1 2.4 2.6.3-1.9 1.8.5 2.6-2.3-1.3-2.3 1.3.5-2.6-1.9-1.8 2.6-.3z" fill="#9a9a9a"/></svg>
<svg style="left:100px;top:84px;" width="17" height="17" viewBox="0 0 17 17"><path d="M0.5 0.5h8l3 3v12H0.5z" fill="#a0a0a0"/><path d="M8.5 0.5v3h3" fill="#c0c0c0"/><path d="M12 8.5l1.1 2.4 2.6.3-1.9 1.8.5 2.6-2.3-1.3-2.3 1.3.5-2.6-1.9-1.8 2.6-.3z" fill="#9a9a9a"/></svg>
<svg style="left:122px;top:86px;" width="12" height="12" viewBox="0 0 12 12"><path d="M1 1l10 10M11 1L1 11" stroke="#8c8c8c" stroke-width="2.6"/></svg>
<svg style="left:140px;top:86px;" width="17" height="13" viewBox="0 0 17 13"><rect x="0.5" y="0.5" width="16" height="12" fill="#444" stroke="#9a9a9a"/><rect x="2" y="2" width="13" height="9" fill="#a8a8a8"/><path d="M4 3.5h2M5 3.5v6M4 9.5h2" stroke="#444" stroke-width=".9"/></svg>
<svg style="left:161px;top:84px;" width="14" height="16" viewBox="0 0 14 16"><path d="M2 0.5l6 10M11 0.5l-6 10" stroke="#a8a8a8" stroke-width="1.3"/><circle cx="4" cy="13" r="2.3" fill="none" stroke="#a8a8a8" stroke-width="1.2"/><circle cx="10" cy="13" r="2.3" fill="none" stroke="#a8a8a8" stroke-width="1.2"/></svg>
<svg style="left:180px;top:84px;" width="15" height="17" viewBox="0 0 15 17"><path d="M0.5 0.5h7l2 2v10h-9z" fill="#989898"/><path d="M4.5 3.5h7l3 3v9h-10z" fill="#a8a8a8" stroke="#888" stroke-width=".7"/><path d="M6 9h7M6 11h7M6 13h7" stroke="#7a7a7a" stroke-width=".8"/></svg>
<svg style="left:199px;top:84px;" width="16" height="17" viewBox="0 0 16 17"><rect x="0.5" y="1.5" width="10" height="12" fill="#8e8e8e"/><rect x="3" y="0.5" width="5" height="3" fill="#b0b0b0"/><path d="M5.5 5.5h7l3 3v8h-10z" fill="#a8a8a8" stroke="#888" stroke-width=".7"/><path d="M7 11h7M7 13h7" stroke="#7a7a7a" stroke-width=".8"/></svg>
<div class="a" style="left:5px;top:103px;width:233px;height:1px;background:#3e3e3e;"></div>
<div class="a" style="left:5px;top:104px;width:216px;height:238px;background:#262626;"></div>
<div class="a" style="left:221px;top:104px;width:16px;height:238px;background:#2b2b2b;"></div>
<div class="a" style="left:221px;top:121px;width:16px;height:106px;background:#3b3b3b;"></div>
<svg style="left:223px;top:109px;" width="12" height="7" viewBox="0 0 12 7"><path d="M2 5l4-4 4 4" fill="none" stroke="#8c8c8c" stroke-width="1.1"/></svg>
<svg style="left:223px;top:334px;" width="12" height="7" viewBox="0 0 12 7"><path d="M2 2l4 4 4-4" fill="none" stroke="#8c8c8c" stroke-width="1.1"/></svg>
<svg style="left:11px;top:107px;" width="9" height="9" viewBox="0 0 9 9"><rect x="0.5" y="0.5" width="8" height="8" fill="#2c2c2c" stroke="#3a3a3a"/><path d="M2 4.5h5" stroke="#8e8e8e" stroke-width="1"/></svg>
<svg style="left:25px;top:105px;" width="16" height="17" viewBox="0 0 16 17"><g transform="scale(1.0)"><rect x="1.5" y="0.5" width="11" height="14" fill="#f8d65a" stroke="#d69e26"/><path d="M2.5 13.5V1.5H11.5V8" fill="none" stroke="#fff2a8" stroke-width="1"/><rect x="10.5" y="8.5" width="3" height="6" fill="#f5cc40" stroke="#d69e26"/><path d="M11.5 9.5v4" stroke="#fff2a8"/></g></svg>
<div class="t" style="left:46px;top:107.69px;font-size:11px;color:#ececec;">Базовые</div>
<svg style="left:30px;top:125px;" width="9" height="9" viewBox="0 0 9 9"><rect x="0.5" y="0.5" width="8" height="8" fill="#2c2c2c" stroke="#3a3a3a"/><path d="M2 4.5h5" stroke="#8e8e8e" stroke-width="1"/><path d="M4.5 2v5" stroke="#8e8e8e" stroke-width="1"/></svg>
<svg style="left:45px;top:123px;" width="16" height="17" viewBox="0 0 16 17"><g transform="scale(1.0)"><rect x="1.5" y="0.5" width="11" height="14" fill="#f8d65a" stroke="#d69e26"/><path d="M2.5 13.5V1.5H11.5V8" fill="none" stroke="#fff2a8" stroke-width="1"/><rect x="10.5" y="8.5" width="3" height="6" fill="#f5cc40" stroke="#d69e26"/><path d="M11.5 9.5v4" stroke="#fff2a8"/></g></svg>
<div class="t" style="left:65.5px;top:125.69px;font-size:11px;color:#ececec;">Общие</div>
<svg style="left:30px;top:143px;" width="9" height="9" viewBox="0 0 9 9"><rect x="0.5" y="0.5" width="8" height="8" fill="#2c2c2c" stroke="#3a3a3a"/><path d="M2 4.5h5" stroke="#8e8e8e" stroke-width="1"/><path d="M4.5 2v5" stroke="#8e8e8e" stroke-width="1"/></svg>
<svg style="left:45px;top:141px;" width="16" height="17" viewBox="0 0 16 17"><g transform="scale(1.0)"><rect x="1.5" y="0.5" width="11" height="14" fill="#f8d65a" stroke="#d69e26"/><path d="M2.5 13.5V1.5H11.5V8" fill="none" stroke="#fff2a8" stroke-width="1"/><rect x="10.5" y="8.5" width="3" height="6" fill="#f5cc40" stroke="#d69e26"/><path d="M11.5 9.5v4" stroke="#fff2a8"/></g></svg>
<div class="t" style="left:65.5px;top:143.69px;font-size:11px;color:#ececec;">Скриптование</div>
<svg style="left:30px;top:161px;" width="9" height="9" viewBox="0 0 9 9"><rect x="0.5" y="0.5" width="8" height="8" fill="#2c2c2c" stroke="#3a3a3a"/><path d="M2 4.5h5" stroke="#8e8e8e" stroke-width="1"/><path d="M4.5 2v5" stroke="#8e8e8e" stroke-width="1"/></svg>
<svg style="left:45px;top:159px;" width="16" height="17" viewBox="0 0 16 17"><g transform="scale(1.0)"><rect x="1.5" y="0.5" width="11" height="14" fill="#f8d65a" stroke="#d69e26"/><path d="M2.5 13.5V1.5H11.5V8" fill="none" stroke="#fff2a8" stroke-width="1"/><rect x="10.5" y="8.5" width="3" height="6" fill="#f5cc40" stroke="#d69e26"/><path d="M11.5 9.5v4" stroke="#fff2a8"/></g></svg>
<div class="t" style="left:65.5px;top:161.69px;font-size:11px;color:#ececec;">Пользовательский интерфейс</div>
<svg style="left:30px;top:179px;" width="9" height="9" viewBox="0 0 9 9"><rect x="0.5" y="0.5" width="8" height="8" fill="#2c2c2c" stroke="#3a3a3a"/><path d="M2 4.5h5" stroke="#8e8e8e" stroke-width="1"/><path d="M4.5 2v5" stroke="#8e8e8e" stroke-width="1"/></svg>
<svg style="left:45px;top:177px;" width="16" height="17" viewBox="0 0 16 17"><g transform="scale(1.0)"><rect x="1.5" y="0.5" width="11" height="14" fill="#f8d65a" stroke="#d69e26"/><path d="M2.5 13.5V1.5H11.5V8" fill="none" stroke="#fff2a8" stroke-width="1"/><rect x="10.5" y="8.5" width="3" height="6" fill="#f5cc40" stroke="#d69e26"/><path d="M11.5 9.5v4" stroke="#fff2a8"/></g></svg>
<div class="t" style="left:65.5px;top:179.69px;font-size:11px;color:#ececec;">Общее сцены</div>
<svg style="left:30px;top:197px;" width="9" height="9" viewBox="0 0 9 9"><rect x="0.5" y="0.5" width="8" height="8" fill="#2c2c2c" stroke="#3a3a3a"/><path d="M2 4.5h5" stroke="#8e8e8e" stroke-width="1"/><path d="M4.5 2v5" stroke="#8e8e8e" stroke-width="1"/></svg>
<svg style="left:45px;top:195px;" width="16" height="17" viewBox="0 0 16 17"><g transform="scale(1.0)"><rect x="1.5" y="0.5" width="11" height="14" fill="#f8d65a" stroke="#d69e26"/><path d="M2.5 13.5V1.5H11.5V8" fill="none" stroke="#fff2a8" stroke-width="1"/><rect x="10.5" y="8.5" width="3" height="6" fill="#f5cc40" stroke="#d69e26"/><path d="M11.5 9.5v4" stroke="#fff2a8"/></g></svg>
<div class="t" style="left:65.5px;top:197.69px;font-size:11px;color:#ececec;">Объекты сцены</div>
<svg style="left:30px;top:215px;" width="9" height="9" viewBox="0 0 9 9"><rect x="0.5" y="0.5" width="8" height="8" fill="#2c2c2c" stroke="#3a3a3a"/><path d="M2 4.5h5" stroke="#8e8e8e" stroke-width="1"/><path d="M4.5 2v5" stroke="#8e8e8e" stroke-width="1"/></svg>
<svg style="left:45px;top:213px;" width="16" height="17" viewBox="0 0 16 17"><g transform="scale(1.0)"><rect x="1.5" y="0.5" width="11" height="14" fill="#f8d65a" stroke="#d69e26"/><path d="M2.5 13.5V1.5H11.5V8" fill="none" stroke="#fff2a8" stroke-width="1"/><rect x="10.5" y="8.5" width="3" height="6" fill="#f5cc40" stroke="#d69e26"/><path d="M11.5 9.5v4" stroke="#fff2a8"/></g></svg>
<div class="t" style="left:65.5px;top:215.69px;font-size:11px;color:#ececec;">Примитивы</div>
<svg style="left:30px;top:233px;" width="9" height="9" viewBox="0 0 9 9"><rect x="0.5" y="0.5" width="8" height="8" fill="#2c2c2c" stroke="#3a3a3a"/><path d="M2 4.5h5" stroke="#8e8e8e" stroke-width="1"/><path d="M4.5 2v5" stroke="#8e8e8e" stroke-width="1"/></svg>
<svg style="left:45px;top:231px;" width="16" height="17" viewBox="0 0 16 17"><g transform="scale(1.0)"><rect x="1.5" y="0.5" width="11" height="14" fill="#f8d65a" stroke="#d69e26"/><path d="M2.5 13.5V1.5H11.5V8" fill="none" stroke="#fff2a8" stroke-width="1"/><rect x="10.5" y="8.5" width="3" height="6" fill="#f5cc40" stroke="#d69e26"/><path d="M11.5 9.5v4" stroke="#fff2a8"/></g></svg>
<div class="t" style="left:65.5px;top:233.69px;font-size:11px;color:#ececec;">Физика</div>
<svg style="left:30px;top:251px;" width="9" height="9" viewBox="0 0 9 9"><rect x="0.5" y="0.5" width="8" height="8" fill="#2c2c2c" stroke="#3a3a3a"/><path d="M2 4.5h5" stroke="#8e8e8e" stroke-width="1"/><path d="M4.5 2v5" stroke="#8e8e8e" stroke-width="1"/></svg>
<svg style="left:45px;top:249px;" width="16" height="17" viewBox="0 0 16 17"><g transform="scale(1.0)"><rect x="1.5" y="0.5" width="11" height="14" fill="#f8d65a" stroke="#d69e26"/><path d="M2.5 13.5V1.5H11.5V8" fill="none" stroke="#fff2a8" stroke-width="1"/><rect x="10.5" y="8.5" width="3" height="6" fill="#f5cc40" stroke="#d69e26"/><path d="M11.5 9.5v4" stroke="#fff2a8"/></g></svg>
<div class="t" style="left:65.5px;top:251.69px;font-size:11px;color:#ececec;">Частицы</div>
<svg style="left:30px;top:269px;" width="9" height="9" viewBox="0 0 9 9"><rect x="0.5" y="0.5" width="8" height="8" fill="#2c2c2c" stroke="#3a3a3a"/><path d="M2 4.5h5" stroke="#8e8e8e" stroke-width="1"/><path d="M4.5 2v5" stroke="#8e8e8e" stroke-width="1"/></svg>
<svg style="left:45px;top:267px;" width="16" height="17" viewBox="0 0 16 17"><g transform="scale(1.0)"><rect x="1.5" y="0.5" width="11" height="14" fill="#f8d65a" stroke="#d69e26"/><path d="M2.5 13.5V1.5H11.5V8" fill="none" stroke="#fff2a8" stroke-width="1"/><rect x="10.5" y="8.5" width="3" height="6" fill="#f5cc40" stroke="#d69e26"/><path d="M11.5 9.5v4" stroke="#fff2a8"/></g></svg>
<div class="t" style="left:65.5px;top:269.69px;font-size:11px;color:#ececec;">Экранные эффекты</div>
<svg style="left:30px;top:287px;" width="9" height="9" viewBox="0 0 9 9"><rect x="0.5" y="0.5" width="8" height="8" fill="#2c2c2c" stroke="#3a3a3a"/><path d="M2 4.5h5" stroke="#8e8e8e" stroke-width="1"/><path d="M4.5 2v5" stroke="#8e8e8e" stroke-width="1"/></svg>
<svg style="left:45px;top:285px;" width="16" height="17" viewBox="0 0 16 17"><g transform="scale(1.0)"><rect x="1.5" y="0.5" width="11" height="14" fill="#f8d65a" stroke="#d69e26"/><path d="M2.5 13.5V1.5H11.5V8" fill="none" stroke="#fff2a8" stroke-width="1"/><rect x="10.5" y="8.5" width="3" height="6" fill="#f5cc40" stroke="#d69e26"/><path d="M11.5 9.5v4" stroke="#fff2a8"/></g></svg>
<div class="t" style="left:65.5px;top:287.69px;font-size:11px;color:#ececec;">Игровой фреймворк</div>
<svg style="left:30px;top:305px;" width="9" height="9" viewBox="0 0 9 9"><rect x="0.5" y="0.5" width="8" height="8" fill="#2c2c2c" stroke="#3a3a3a"/><path d="M2 4.5h5" stroke="#8e8e8e" stroke-width="1"/><path d="M4.5 2v5" stroke="#8e8e8e" stroke-width="1"/></svg>
<svg style="left:45px;top:303px;" width="16" height="17" viewBox="0 0 16 17"><g transform="scale(1.0)"><rect x="1.5" y="0.5" width="11" height="14" fill="#f8d65a" stroke="#d69e26"/><path d="M2.5 13.5V1.5H11.5V8" fill="none" stroke="#fff2a8" stroke-width="1"/><rect x="10.5" y="8.5" width="3" height="6" fill="#f5cc40" stroke="#d69e26"/><path d="M11.5 9.5v4" stroke="#fff2a8"/></g></svg>
<div class="t" style="left:65.5px;top:305.69px;font-size:11px;color:#ececec;">3D</div>
<svg style="left:30px;top:323px;" width="9" height="9" viewBox="0 0 9 9"><rect x="0.5" y="0.5" width="8" height="8" fill="#2c2c2c" stroke="#3a3a3a"/><path d="M2 4.5h5" stroke="#8e8e8e" stroke-width="1"/><path d="M4.5 2v5" stroke="#8e8e8e" stroke-width="1"/></svg>
<svg style="left:45px;top:321px;" width="16" height="17" viewBox="0 0 16 17"><g transform="scale(1.0)"><rect x="1.5" y="0.5" width="11" height="14" fill="#f8d65a" stroke="#d69e26"/><path d="M2.5 13.5V1.5H11.5V8" fill="none" stroke="#fff2a8" stroke-width="1"/><rect x="10.5" y="8.5" width="3" height="6" fill="#f5cc40" stroke="#d69e26"/><path d="M11.5 9.5v4" stroke="#fff2a8"/></g></svg>
<div class="t" style="left:65.5px;top:323.69px;font-size:11px;color:#ececec;">2D</div>
<svg style="left:25px;top:339px;" width="16" height="17" viewBox="0 0 16 17"><g transform="scale(1.0)"><rect x="1.5" y="0.5" width="11" height="14" fill="#f8d65a" stroke="#d69e26"/><path d="M2.5 13.5V1.5H11.5V8" fill="none" stroke="#fff2a8" stroke-width="1"/><rect x="10.5" y="8.5" width="3" height="6" fill="#f5cc40" stroke="#d69e26"/><path d="M11.5 9.5v4" stroke="#fff2a8"/></g></svg>
<div class="a" style="left:11px;top:340px;width:9px;height:1px;background:#3a3a3a;"></div>
<div class="a" style="left:5px;top:342px;width:232px;height:17px;background:#2e2e2e;"></div>
<div class="a" style="left:21px;top:342px;width:152px;height:17px;background:#3a3a3a;"></div>
<svg style="left:9px;top:346px;" width="7" height="10" viewBox="0 0 7 10"><path d="M5.5 1L1.5 5l4 4" fill="none" stroke="#8c8c8c" stroke-width="1.3"/></svg>
<svg style="left:209px;top:346px;" width="7" height="10" viewBox="0 0 7 10"><path d="M1.5 1l4 4-4 4" fill="none" stroke="#8c8c8c" stroke-width="1.3"/></svg>
<div class="a" style="left:5px;top:364px;width:233px;height:1px;background:#474747;"></div>
<svg style="left:9px;top:369px;" width="14" height="15" viewBox="0 0 14 15"><path d="M7 0.5l6.5 6.5h-4v7.5h-5V7h-4z" fill="#8e8e8e"/></svg>
<div class="t" style="left:30px;top:370.69px;font-size:11px;color:#ececec;">Корень</div>
<svg style="left:76px;top:374px;" width="5" height="7" viewBox="0 0 5 7"><path d="M0.5 0.5l4 3-4 3z" fill="#8a8a8a"/></svg>
<div class="a" style="left:5px;top:388px;width:233px;height:1px;background:#474747;"></div>
<div class="a" style="left:5px;top:389px;width:216px;height:141px;background:#262626;"></div>
<div class="a" style="left:221px;top:389px;width:16px;height:141px;background:#2b2b2b;"></div>
<div class="a" style="left:221px;top:405px;width:16px;height:69px;background:#3b3b3b;"></div>
<svg style="left:223px;top:394px;" width="12" height="7" viewBox="0 0 12 7"><path d="M2 5l4-4 4 4" fill="none" stroke="#8c8c8c" stroke-width="1.1"/></svg>
<svg style="left:223px;top:520px;" width="12" height="7" viewBox="0 0 12 7"><path d="M2 2l4 4 4-4" fill="none" stroke="#8c8c8c" stroke-width="1.1"/></svg>
<svg style="left:12px;top:395px;" width="20" height="21" viewBox="0 0 20 21"><g transform="scale(1.3)"><rect x="1.5" y="0.5" width="11" height="14" fill="#f8d65a" stroke="#d69e26"/><path d="M2.5 13.5V1.5H11.5V8" fill="none" stroke="#fff2a8" stroke-width="1"/><rect x="10.5" y="8.5" width="3" height="6" fill="#f5cc40" stroke="#d69e26"/><path d="M11.5 9.5v4" stroke="#fff2a8"/></g></svg>
<div class="t" style="left:37px;top:393.69px;font-size:11px;color:#ececec;">Базовые</div>
<svg style="left:12px;top:429px;" width="20" height="21" viewBox="0 0 20 21"><g transform="scale(1.3)"><rect x="1.5" y="0.5" width="11" height="14" fill="#f8d65a" stroke="#d69e26"/><path d="M2.5 13.5V1.5H11.5V8" fill="none" stroke="#fff2a8" stroke-width="1"/><rect x="10.5" y="8.5" width="3" height="6" fill="#f5cc40" stroke="#d69e26"/><path d="M11.5 9.5v4" stroke="#fff2a8"/></g></svg>
<div class="t" style="left:37px;top:427.69px;font-size:11px;color:#ececec;">Дополнения</div>
<svg style="left:12px;top:463px;" width="20" height="21" viewBox="0 0 20 21"><g transform="scale(1.3)"><rect x="1.5" y="0.5" width="11" height="14" fill="#f8d65a" stroke="#d69e26"/><path d="M2.5 13.5V1.5H11.5V8" fill="none" stroke="#fff2a8" stroke-width="1"/><rect x="10.5" y="8.5" width="3" height="6" fill="#f5cc40" stroke="#d69e26"/><path d="M11.5 9.5v4" stroke="#fff2a8"/></g></svg>
<div class="t" style="left:37px;top:461.69px;font-size:11px;color:#ececec;">Избранное</div>
<svg style="left:12px;top:497px;" width="20" height="21" viewBox="0 0 20 21"><g transform="scale(1.3)"><rect x="1.5" y="0.5" width="11" height="14" fill="#f8d65a" stroke="#d69e26"/><path d="M2.5 13.5V1.5H11.5V8" fill="none" stroke="#fff2a8" stroke-width="1"/><rect x="10.5" y="8.5" width="3" height="6" fill="#f5cc40" stroke="#d69e26"/><path d="M11.5 9.5v4" stroke="#fff2a8"/></g></svg>
<div class="t" style="left:37px;top:495.69px;font-size:11px;color:#ececec;">Все типы</div>
<div class="a" style="left:4px;top:532px;width:85px;height:21px;background:#454545;"></div>
<div class="t" style="left:12px;top:533.84px;font-size:12px;color:#d0d0d0;">Ресурсы</div>
<svg style="left:68px;top:536px;" width="10" height="10" viewBox="0 0 10 10"><path d="M1 1l8 8M9 1L1 9" stroke="#f0f0f0" stroke-width="2"/></svg>
<div class="t" style="left:92.5px;top:533.84px;font-size:12px;color:#e6e6e6;">Магазины</div>
<svg style="left:156px;top:536px;" width="10" height="10" viewBox="0 0 10 10"><path d="M1 1l8 8M9 1L1 9" stroke="#f0f0f0" stroke-width="2"/></svg>
<div class="a" style="left:4px;top:559px;width:235px;height:142px;border:1px solid #4e4e4e"></div>
<div class="a" style="left:5px;top:560px;width:233px;height:19px;background:#070707;"></div>
<div class="a" style="left:5px;top:579px;width:233px;height:1px;background:#4a4a4a;"></div>
<div class="t" style="left:11px;top:563.84px;font-size:12px;color:#a39f98;">Предпросмотр</div>
<svg style="left:192px;top:567px;" width="8" height="5" viewBox="0 0 8 5"><path d="M0.5 0.5h7l-3.5 4z" fill="#a8a8a8"/></svg>
<svg style="left:208px;top:563px;" width="8" height="12" viewBox="0 0 8 12"><rect x="1.5" y="1" width="4.5" height="6" fill="none" stroke="#a8a8a8" stroke-width="1.2"/><path d="M0 7.5h7.5" stroke="#a8a8a8" stroke-width="1.2"/><path d="M3.75 8v4" stroke="#a8a8a8" stroke-width="1.2"/></svg>
<svg style="left:223px;top:565px;" width="10" height="10" viewBox="0 0 10 10"><path d="M1 1l8 8M9 1L1 9" stroke="#a8a8a8" stroke-width="2"/></svg>
<div class="a" style="left:5px;top:580px;width:233px;height:120px;background:#363636;"></div>
<div class="t" style="left:12px;top:709.57px;font-size:11.5px;color:#e6e6e6;">Логи</div>
<div class="t" style="left:49.5px;top:709.57px;font-size:11.5px;color:#e6e6e6;">Вывод</div>
<div class="t" style="left:94.5px;top:709.57px;font-size:11.5px;color:#e6e6e6;">Отладка</div>
<div class="t" style="left:251.3px;top:66.14px;font-size:12px;color:#e8e8e8;letter-spacing:-0.25px">Стартовая страница</div>
<svg style="left:373px;top:68px;" width="10" height="10" viewBox="0 0 10 10"><path d="M1 1l8 8M9 1L1 9" stroke="#f4f4f4" stroke-width="2"/></svg>
<div class="a" style="left:393px;top:60px;width:147px;height:22px;background:#3f3f3f;"></div>
<div class="t" style="left:400.5px;top:66.14px;font-size:12px;color:#e8e8e8;">Mesh modifier.scene</div>
<svg style="left:522px;top:68px;" width="10" height="10" viewBox="0 0 10 10"><path d="M1 1l8 8M9 1L1 9" stroke="#f4f4f4" stroke-width="2"/></svg>
<svg style="left:801px;top:66px;" width="10" height="10" viewBox="0 0 10 10"><rect x="0" y="0" width="10" height="2" fill="#9a9a9a"/><path d="M0.5 4h9l-4.5 5z" fill="#9a9a9a"/></svg>
<div class="a" style="left:825px;top:59px;width:195px;height:209px;border:1px solid #4e4e4e"></div>
<div class="a" style="left:826px;top:60px;width:193px;height:19px;background:#070707;"></div>
<div class="a" style="left:826px;top:79px;width:193px;height:1px;background:#4a4a4a;"></div>
<div class="t" style="left:832px;top:63.84px;font-size:12px;color:#a39f98;">Объекты</div>
<svg style="left:973px;top:67px;" width="8" height="5" viewBox="0 0 8 5"><path d="M0.5 0.5h7l-3.5 4z" fill="#a8a8a8"/></svg>
<svg style="left:989px;top:63px;" width="8" height="12" viewBox="0 0 8 12"><rect x="1.5" y="1" width="4.5" height="6" fill="none" stroke="#a8a8a8" stroke-width="1.2"/><path d="M0 7.5h7.5" stroke="#a8a8a8" stroke-width="1.2"/><path d="M3.75 8v4" stroke="#a8a8a8" stroke-width="1.2"/></svg>
<svg style="left:1004px;top:65px;" width="10" height="10" viewBox="0 0 10 10"><path d="M1 1l8 8M9 1L1 9" stroke="#a8a8a8" stroke-width="2"/></svg>
<div class="a" style="left:826px;top:80px;width:193px;height:23px;background:#353535;"></div>
<svg style="left:827px;top:82px;" width="18" height="18" viewBox="0 0 18 18"><path d="M3.2 3.1L9 9.5" stroke="#bdbdbd" stroke-width="1.3" stroke-linecap="round"/><path d="M10 10.5L15.6 16" stroke="#3a8ee0" stroke-width="2.8" stroke-linecap="round"/><path d="M3 15.5L11.5 7" stroke="#f2f2f2" stroke-width="2.6" stroke-linecap="round"/><circle cx="13" cy="5.2" r="3.4" fill="#f2f2f2"/><path d="M12.8 5L15.8 1.2L17.8 3.2Z" fill="#353535"/><circle cx="13.9" cy="4.3" r="1.5" fill="#353535"/><circle cx="3" cy="15.6" r=".8" fill="#353535"/></svg>
<svg style="left:846px;top:81px;" width="20" height="20" viewBox="0 0 20 20"><path d="M9.7 9.4V14.5H12.7" fill="none" stroke="#9a9a9a" stroke-width="1.2"/><path d="M3 8.5L8.5 3L11.8 6.5L6.4 12Z" fill="#d4b020" stroke="#a88a10" stroke-width=".5"/><path d="M11.2 10.6L14.5 7.1L16.9 9.4L13.6 12.9Z" fill="#30b0e8"/><path d="M12.1 15.4L15.4 12.1L17.9 14.5L14.5 17.9Z" fill="#e060c0"/></svg>
<div class="a" style="left:870px;top:83px;width:1px;height:17px;background:#1c1c1c;"></div>
<svg style="left:874px;top:84px;" width="18" height="17" viewBox="0 0 18 17"><path d="M0.5 0.5h8l3 3v12H0.5z" fill="#f0f0f0" stroke="#c0c0c0" stroke-width=".8"/><path d="M8.5 0.5v3h3" fill="#d0d0d0"/><path d="M6 15l9-9 2 2-9 9z" fill="#f0a030" stroke="#a06010" stroke-width=".6"/><path d="M14.5 6.5l2 2 1-1-2-2z" fill="#e070a0"/></svg>
<svg style="left:896px;top:85px;" width="16" height="15" viewBox="0 0 16 15"><rect x="4.5" y="0.5" width="11" height="10" fill="#3a78c8" stroke="#2a5a9a"/><rect x="0.5" y="4.5" width="11" height="10" fill="#f4f4f4" stroke="#3a78c8"/><rect x="0.5" y="4.5" width="11" height="2.5" fill="#4a90e0"/></svg>
<div class="a" style="left:916px;top:83px;width:1px;height:17px;background:#1c1c1c;"></div>
<svg style="left:921px;top:84px;" width="17" height="17" viewBox="0 0 17 17"><path d="M0.5 0.5h8l3 3v12H0.5z" fill="#f0f0f0" stroke="#c0c0c0" stroke-width=".8"/><path d="M8.5 0.5v3h3" fill="#d0d0d0"/><path d="M12 8.5l1.1 2.4 2.6.3-1.9 1.8.5 2.6-2.3-1.3-2.3 1.3.5-2.6-1.9-1.8 2.6-.3z" fill="#f5c040" stroke="#c98a12" stroke-width=".5"/></svg>
<svg style="left:943px;top:86px;" width="12" height="12" viewBox="0 0 12 12"><path d="M1 1l10 10M11 1L1 11" stroke="#8c8c8c" stroke-width="2.6"/></svg>
<svg style="left:961px;top:86px;" width="17" height="13" viewBox="0 0 17 13"><rect x="0.5" y="0.5" width="16" height="12" fill="#202020" stroke="#e0e0e0"/><rect x="2" y="2" width="13" height="9" fill="#f0f0f0"/><path d="M4 3.5h2M5 3.5v6M4 9.5h2" stroke="#333" stroke-width=".9"/></svg>
<svg style="left:982px;top:84px;" width="15" height="17" viewBox="0 0 15 17"><path d="M0.5 0.5h7l2 2v10h-9z" fill="#989898"/><path d="M4.5 3.5h7l3 3v9h-10z" fill="#a8a8a8" stroke="#888" stroke-width=".7"/><path d="M6 9h7M6 11h7M6 13h7" stroke="#7a7a7a" stroke-width=".8"/></svg>
<div class="a" style="left:826px;top:103px;width:193px;height:1px;background:#3e3e3e;"></div>
<div class="a" style="left:826px;top:104px;width:175px;height:147px;background:#262626;"></div>
<div class="a" style="left:826px;top:104px;width:175px;height:18px;background:#353535;"></div>
<div class="a" style="left:1001px;top:104px;width:17px;height:147px;background:#2b2b2b;"></div>
<div class="a" style="left:1001px;top:122px;width:17px;height:58px;background:#3b3b3b;"></div>
<svg style="left:1004px;top:109px;" width="12" height="7" viewBox="0 0 12 7"><path d="M2 5l4-4 4 4" fill="none" stroke="#8c8c8c" stroke-width="1.1"/></svg>
<svg style="left:1004px;top:242px;" width="12" height="7" viewBox="0 0 12 7"><path d="M2 2l4 4 4-4" fill="none" stroke="#8c8c8c" stroke-width="1.1"/></svg>
<svg style="left:832px;top:108px;" width="9" height="9" viewBox="0 0 9 9"><rect x="0.5" y="0.5" width="8" height="8" fill="#2c2c2c" stroke="#3a3a3a"/><path d="M2 4.5h5" stroke="#8e8e8e" stroke-width="1"/></svg>
<svg style="left:847px;top:105px;" width="15" height="16" viewBox="0 0 15 16"><rect x="0.5" y="0.5" width="14" height="15" fill="#5ab0e8"/><rect x="0.5" y="8" width="4" height="7.5" fill="#d8c890"/><path d="M7.5 13V4" stroke="#202020" stroke-width="1"/><path d="M5.5 9l2-3 2 3z" fill="#202020"/><rect x="9" y="3" width="3" height="2.5" fill="#e02020"/><path d="M0.5 5h14M5 0.5v15M10 0.5v15" stroke="#7cc4f0" stroke-width=".6"/></svg>
<div class="t" style="left:867.4px;top:107.69px;font-size:11px;color:#ececec;">'Корень' - Scene</div>
<svg width="0" height="0" style="left:0;top:0"><defs><linearGradient id="rainbow" x1="0" x2="1"><stop offset="0" stop-color="#e03030"/><stop offset=".25" stop-color="#e0e030"/><stop offset=".5" stop-color="#30e030"/><stop offset=".75" stop-color="#30a0e0"/><stop offset="1" stop-color="#c030e0"/></linearGradient></defs></svg>
<svg style="left:865px;top:123px;" width="17" height="15" viewBox="0 0 17 15"><rect x="0.5" y="3.5" width="12" height="8" fill="#a0a0a0"/><rect x="2" y="5" width="8" height="5" fill="#4aa0e0"/><path d="M12.5 6l4-2v8l-4-2z" fill="#a0a0a0"/><circle cx="4" cy="2" r="1.8" fill="#909090"/><circle cx="9" cy="2" r="1.8" fill="#909090"/></svg>
<div class="t" style="left:886.5px;top:125.69px;font-size:11px;color:#ececec;width:114.5px;overflow:hidden;letter-spacing:-0.2px">Camera Editor - Camera</div>
<svg style="left:865px;top:141px;" width="17" height="15" viewBox="0 0 17 15"><circle cx="7" cy="6" r="5.5" fill="#f8dc7a"/><rect x="4.5" y="10" width="5" height="4" fill="#c8c8c8"/><path d="M4.5 12h5" stroke="#888" stroke-width=".7"/></svg>
<div class="t" style="left:886.5px;top:143.69px;font-size:11px;color:#ececec;width:114.5px;overflow:hidden;letter-spacing:-0.2px">Ambient Light - Light</div>
<svg style="left:865px;top:159px;" width="17" height="15" viewBox="0 0 17 15"><circle cx="7" cy="6" r="5.5" fill="#f8dc7a"/><rect x="4.5" y="10" width="5" height="4" fill="#c8c8c8"/><path d="M4.5 12h5" stroke="#888" stroke-width=".7"/></svg>
<div class="t" style="left:886.5px;top:161.69px;font-size:11px;color:#ececec;width:114.5px;overflow:hidden;letter-spacing:-0.2px">Light 1 - Light</div>
<svg style="left:851px;top:179px;" width="9" height="9" viewBox="0 0 9 9"><rect x="0.5" y="0.5" width="8" height="8" fill="#2c2c2c" stroke="#3a3a3a"/><path d="M2 4.5h5" stroke="#8e8e8e" stroke-width="1"/><path d="M4.5 2v5" stroke="#8e8e8e" stroke-width="1"/></svg>
<svg style="left:865px;top:177px;" width="17" height="15" viewBox="0 0 17 15"><rect x="0.5" y="0.5" width="15" height="13" fill="#2a6ab0"/><rect x="2" y="2" width="12" height="10" fill="url(#rainbow)"/></svg>
<div class="t" style="left:886.5px;top:179.69px;font-size:11px;color:#ececec;width:114.5px;overflow:hidden;letter-spacing:-0.2px">Rendering Pipeline - Rendering</div>
<svg style="left:865px;top:195px;" width="17" height="15" viewBox="0 0 17 15"><path d="M2 4h12a2 2 0 0 1 2 2l-1 6a1.5 1.5 0 0 1-2.5.5L10 10H6l-2.5 2.5A1.5 1.5 0 0 1 1 12L0 6a2 2 0 0 1 2-2z" fill="#e8e8e8"/><path d="M3 7h3M4.5 5.5v3" stroke="#505050" stroke-width="1"/><circle cx="11" cy="6.5" r=".9" fill="#e03030"/><circle cx="13" cy="8" r=".9" fill="#3030e0"/></svg>
<div class="t" style="left:886.5px;top:197.69px;font-size:11px;color:#ececec;width:114.5px;overflow:hidden;letter-spacing:-0.2px">Game Mode - GameMode</div>
<svg style="left:865px;top:213px;" width="17" height="15" viewBox="0 0 17 15"><circle cx="7" cy="6" r="5.5" fill="#7a7a7a"/><rect x="4.5" y="10" width="5" height="4" fill="#6a6a6a"/></svg>
<div class="t" style="left:886.5px;top:215.69px;font-size:11px;color:#858585;width:114.5px;overflow:hidden;letter-spacing:-0.2px">Light 2 - Light</div>
<svg style="left:851px;top:233px;" width="9" height="9" viewBox="0 0 9 9"><rect x="0.5" y="0.5" width="8" height="8" fill="#2c2c2c" stroke="#3a3a3a"/><path d="M2 4.5h5" stroke="#8e8e8e" stroke-width="1"/><path d="M4.5 2v5" stroke="#8e8e8e" stroke-width="1"/></svg>
<svg style="left:865px;top:231px;" width="17" height="15" viewBox="0 0 17 15"><path d="M8 1l7 3.5v7L8 15l-7-3.5v-7z" fill="#7cc0f0"/><path d="M1 4.5L8 8l7-3.5M8 8v7" stroke="#4a90c8" stroke-width=".8" fill="none"/><ellipse cx="5" cy="3.5" rx="1.5" ry=".8" fill="#b0dcf8"/><ellipse cx="11" cy="3.5" rx="1.5" ry=".8" fill="#b0dcf8"/></svg>
<div class="t" style="left:886.5px;top:233.69px;font-size:11px;color:#ececec;width:114.5px;overflow:hidden;letter-spacing:-0.2px">Ground - MeshInSpace</div>
<svg style="left:866px;top:248px;" width="17" height="4" viewBox="0 0 17 4"><path d="M8 0.5l6 3.5H2z" fill="#7cc0f0"/></svg>
<div class="a" style="left:826px;top:251px;width:193px;height:16px;background:#2e2e2e;"></div>
<div class="a" style="left:842px;top:251px;width:73px;height:16px;background:#3a3a3a;"></div>
<svg style="left:831px;top:254px;" width="7" height="10" viewBox="0 0 7 10"><path d="M5.5 1L1.5 5l4 4" fill="none" stroke="#8c8c8c" stroke-width="1.3"/></svg>
<svg style="left:991px;top:254px;" width="7" height="10" viewBox="0 0 7 10"><path d="M1.5 1l4 4-4 4" fill="none" stroke="#8c8c8c" stroke-width="1.3"/></svg>
<div class="a" style="left:825px;top:274px;width:195px;height:427px;border:1px solid #4e4e4e"></div>
<div class="a" style="left:826px;top:275px;width:193px;height:19px;background:#070707;"></div>
<div class="a" style="left:826px;top:294px;width:193px;height:1px;background:#4a4a4a;"></div>
<div class="t" style="left:832px;top:278.84px;font-size:12px;color:#a39f98;">Настройки</div>
<svg style="left:973px;top:282px;" width="8" height="5" viewBox="0 0 8 5"><path d="M0.5 0.5h7l-3.5 4z" fill="#a8a8a8"/></svg>
<svg style="left:989px;top:278px;" width="8" height="12" viewBox="0 0 8 12"><rect x="1.5" y="1" width="4.5" height="6" fill="none" stroke="#a8a8a8" stroke-width="1.2"/><path d="M0 7.5h7.5" stroke="#a8a8a8" stroke-width="1.2"/><path d="M3.75 8v4" stroke="#a8a8a8" stroke-width="1.2"/></svg>
<svg style="left:1004px;top:280px;" width="10" height="10" viewBox="0 0 10 10"><path d="M1 1l8 8M9 1L1 9" stroke="#a8a8a8" stroke-width="2"/></svg>
<div class="a" style="left:826px;top:295px;width:193px;height:405px;background:#353535;"></div>
<div class="t" style="left:831.8px;top:301.54px;font-size:12px;color:#f0f0f0;font-weight:bold">Scene</div>
<svg style="left:997px;top:297px;" width="20" height="20" viewBox="0 0 20 20"><path d="M9.7 9.4V14.5H12.7" fill="none" stroke="#9a9a9a" stroke-width="1.2"/><path d="M3 8.5L8.5 3L11.8 6.5L6.4 12Z" fill="#d4b020" stroke="#a88a10" stroke-width=".5"/><path d="M11.2 10.6L14.5 7.1L16.9 9.4L13.6 12.9Z" fill="#30b0e8"/><path d="M12.1 15.4L15.4 12.1L17.9 14.5L14.5 17.9Z" fill="#e060c0"/></svg>
<div class="t" style="left:831.8px;top:322.19px;font-size:11px;color:#ececec;">Scene</div>
<div class="a" style="left:829px;top:340px;width:19px;height:22px;background:#4a4a4a;"></div>
<svg style="left:830px;top:344px;" width="17" height="14" viewBox="0 0 17 14"><rect x="0.5" y="0.5" width="16" height="13" fill="#f0f0f0" stroke="#3a70b0"/><rect x="0.5" y="0.5" width="16" height="3" fill="#3a80d0"/><path d="M3 6h3M3 8h3M3 10h3M8 6h6M8 8h6M8 10h6" stroke="#606060" stroke-width=".8"/><path d="M9 2l5 4-3 1z" fill="#e09030"/></svg>
<svg style="left:853px;top:343px;" width="12" height="17" viewBox="0 0 12 17"><path d="M7 0.5L1 9h4.5L3 16.5 11 7H6.5L9 0.5z" fill="#f5c518" stroke="#b08000" stroke-width=".5"/></svg>
<div class="a" style="left:828px;top:365px;width:174px;height:17px;background:#262626;"></div>
<div class="t" style="left:831.5px;top:368.69px;font-size:11px;color:#a8a8a8;">Компонент</div>
<div class="a" style="left:1002px;top:365px;width:16px;height:285px;background:#2e2e2e;"></div>
<div class="a" style="left:1002px;top:365px;width:16px;height:17px;background:#2b2b2b;"></div>
<div class="a" style="left:1002px;top:382px;width:16px;height:42px;background:#3b3b3b;"></div>
<svg style="left:1004px;top:370px;" width="12" height="7" viewBox="0 0 12 7"><path d="M2 5l4-4 4 4" fill="none" stroke="#8c8c8c" stroke-width="1.1"/></svg>
<svg style="left:1004px;top:642px;" width="12" height="7" viewBox="0 0 12 7"><path d="M2 2l4 4 4-4" fill="none" stroke="#8c8c8c" stroke-width="1.1"/></svg>
<div class="a" style="left:906px;top:382px;width:6px;height:95px;background:#404040;"></div>
<div class="t" style="left:847.3px;top:389.39px;font-size:11px;color:#ececec;">Включено</div>
<svg style="left:951px;top:387px;" width="14" height="14" viewBox="0 0 14 14"><rect x="0.5" y="0.5" width="13" height="13" fill="#262626" stroke="#8c8c8c"/><path d="M2.5 7l3 3 6-6.5" fill="none" stroke="#ffffff" stroke-width="2"/></svg>
<div class="t" style="left:847.3px;top:412.39px;font-size:11px;color:#ececec;">Name</div>
<div class="a" style="left:951px;top:409px;width:49px;height:18px;background:#262626;border:1px solid #5c5c5c"></div>
<div class="t" style="left:847.3px;top:435.49px;font-size:11px;color:#ececec;">Screen L...</div>
<div class="a" style="left:926px;top:432px;width:22px;height:18px;background:#363636;border:1px solid #555555"></div>
<div class="a" style="left:951px;top:432px;width:49px;height:18px;background:#333;border:1px solid #5e5e5e"></div>
<div class="t" style="left:956px;top:436.69px;font-size:11px;color:#ececec;">Auto</div>
<svg style="left:988px;top:439px;" width="8" height="5" viewBox="0 0 8 5"><path d="M0.5 0.5h7l-3.5 4z" fill="#a8a8a8"/></svg>
<div class="t" style="left:847.3px;top:458.19px;font-size:11px;color:#ececec;">Network ...</div>
<div class="a" style="left:926px;top:455px;width:22px;height:18px;background:#363636;border:1px solid #555555"></div>
<div class="a" style="left:951px;top:455px;width:49px;height:18px;background:#333;border:1px solid #5e5e5e"></div>
<div class="t" style="left:956px;top:459.69px;font-size:11px;color:#ececec;">True</div>
<svg style="left:988px;top:462px;" width="8" height="5" viewBox="0 0 8 5"><path d="M0.5 0.5h7l-3.5 4z" fill="#a8a8a8"/></svg>
<div class="a" style="left:828px;top:477px;width:174px;height:17px;background:#262626;"></div>
<div class="t" style="left:830.6px;top:480.09px;font-size:11px;color:#a8a8a8;">Сцена</div>
<div class="a" style="left:906px;top:494px;width:6px;height:156px;background:#404040;"></div>
<div class="t" style="left:847.6px;top:501.39px;font-size:11px;color:#ececec;">Renderin...</div>
<div class="t" style="left:847.6px;top:524.39px;font-size:11px;color:#ececec;">Backgro...</div>
<div class="t" style="left:847.6px;top:547.39px;font-size:11px;color:#ececec;">Backgro...</div>
<div class="t" style="left:847.6px;top:570.39px;font-size:11px;color:#ececec;">UI Screen</div>
<div class="t" style="left:847.6px;top:593.39px;font-size:11px;color:#ececec;">Mode</div>
<div class="t" style="left:847.6px;top:616.39px;font-size:11px;color:#ececec;">Screen ...</div>
<div class="t" style="left:847.6px;top:639.39px;font-size:11px;color:#ececec;">Camera ...</div>
<svg style="left:831px;top:525px;" width="11" height="12" viewBox="0 0 11 12"><rect x="0.5" y="0.5" width="10" height="11" fill="#333" stroke="#555"/><path d="M2.5 6h6M5.5 3v6" stroke="#b0b0b0" stroke-width="1"/></svg>
<svg style="left:915px;top:503px;" width="7" height="7" viewBox="0 0 7 7"><circle cx="3.5" cy="3.5" r="2.8" fill="#7a7a7a"/></svg>
<div class="a" style="left:926px;top:498px;width:22px;height:18px;background:#363636;border:1px solid #555555"></div>
<svg style="left:932px;top:503px;" width="8" height="9" viewBox="0 0 8 9"><path d="M1 0.5l6 4-6 4z" fill="#c8c8c8"/></svg>
<div class="t" style="left:955px;top:503.09px;font-size:11px;color:#ececec;width:42px;overflow:hidden;letter-spacing:-0.2px">Rendering</div>
<div class="a" style="left:926px;top:521px;width:22px;height:18px;background:#363636;border:1px solid #555555"></div>
<div class="a" style="left:951px;top:522px;width:27px;height:17px;background:#262626;border:1px solid #5c5c5c"></div>
<div class="t" style="left:955px;top:525.69px;font-size:11px;color:#ececec;">1 1</div>
<div class="a" style="left:981px;top:522px;width:19px;height:17px;background:#ffffff;"></div>
<div class="a" style="left:926px;top:544px;width:22px;height:18px;background:#363636;border:1px solid #555555"></div>
<div class="a" style="left:951px;top:544px;width:49px;height:18px;background:#262626;border:1px solid #5c5c5c"></div>
<div class="t" style="left:955px;top:548.69px;font-size:11px;color:#ececec;">1</div>
<div class="a" style="left:926px;top:567px;width:22px;height:18px;background:#363636;border:1px solid #555555"></div>
<div class="t" style="left:955px;top:572.09px;font-size:11px;color:#ececec;">(Null)</div>
<div class="a" style="left:926px;top:590px;width:22px;height:18px;background:#363636;border:1px solid #555555"></div>
<div class="a" style="left:951px;top:590px;width:49px;height:18px;background:#333;border:1px solid #5e5e5e"></div>
<div class="t" style="left:956px;top:594.69px;font-size:11px;color:#ececec;">3D</div>
<svg style="left:988px;top:597px;" width="8" height="5" viewBox="0 0 8 5"><path d="M0.5 0.5h7l-3.5 4z" fill="#a8a8a8"/></svg>
<div class="a" style="left:926px;top:613px;width:22px;height:18px;background:#363636;border:1px solid #555555"></div>
<div class="a" style="left:951px;top:613px;width:49px;height:18px;background:#333;border:1px solid #5e5e5e"></div>
<div class="t" style="left:956px;top:617.69px;font-size:11px;color:#ececec;">Un...</div>
<svg style="left:988px;top:620px;" width="8" height="5" viewBox="0 0 8 5"><path d="M0.5 0.5h7l-3.5 4z" fill="#a8a8a8"/></svg>
<svg style="left:915px;top:641px;" width="7" height="7" viewBox="0 0 7 7"><circle cx="3.5" cy="3.5" r="2.8" fill="#7a7a7a"/></svg>
<div class="a" style="left:926px;top:636px;width:22px;height:18px;background:#363636;border:1px solid #555555"></div>
<svg style="left:932px;top:641px;" width="8" height="9" viewBox="0 0 8 9"><path d="M1 0.5l6 4-6 4z" fill="#c8c8c8"/></svg>
<div class="t" style="left:955px;top:641.09px;font-size:11px;color:#ececec;">Camera</div>
<div class="a" style="left:993px;top:641px;width:1px;height:12px;background:#4a7ac0;"></div>
<div class="a" style="left:826px;top:650px;width:193px;height:2px;background:#353535;"></div>
<div class="a" style="left:833px;top:659px;width:93px;height:26px;background:#3c3c3c;border:1px solid #5a5a5a"></div>
<div class="t" style="left:868px;top:667.59px;font-size:11px;color:#ececec;">Info</div>

</body></html>
